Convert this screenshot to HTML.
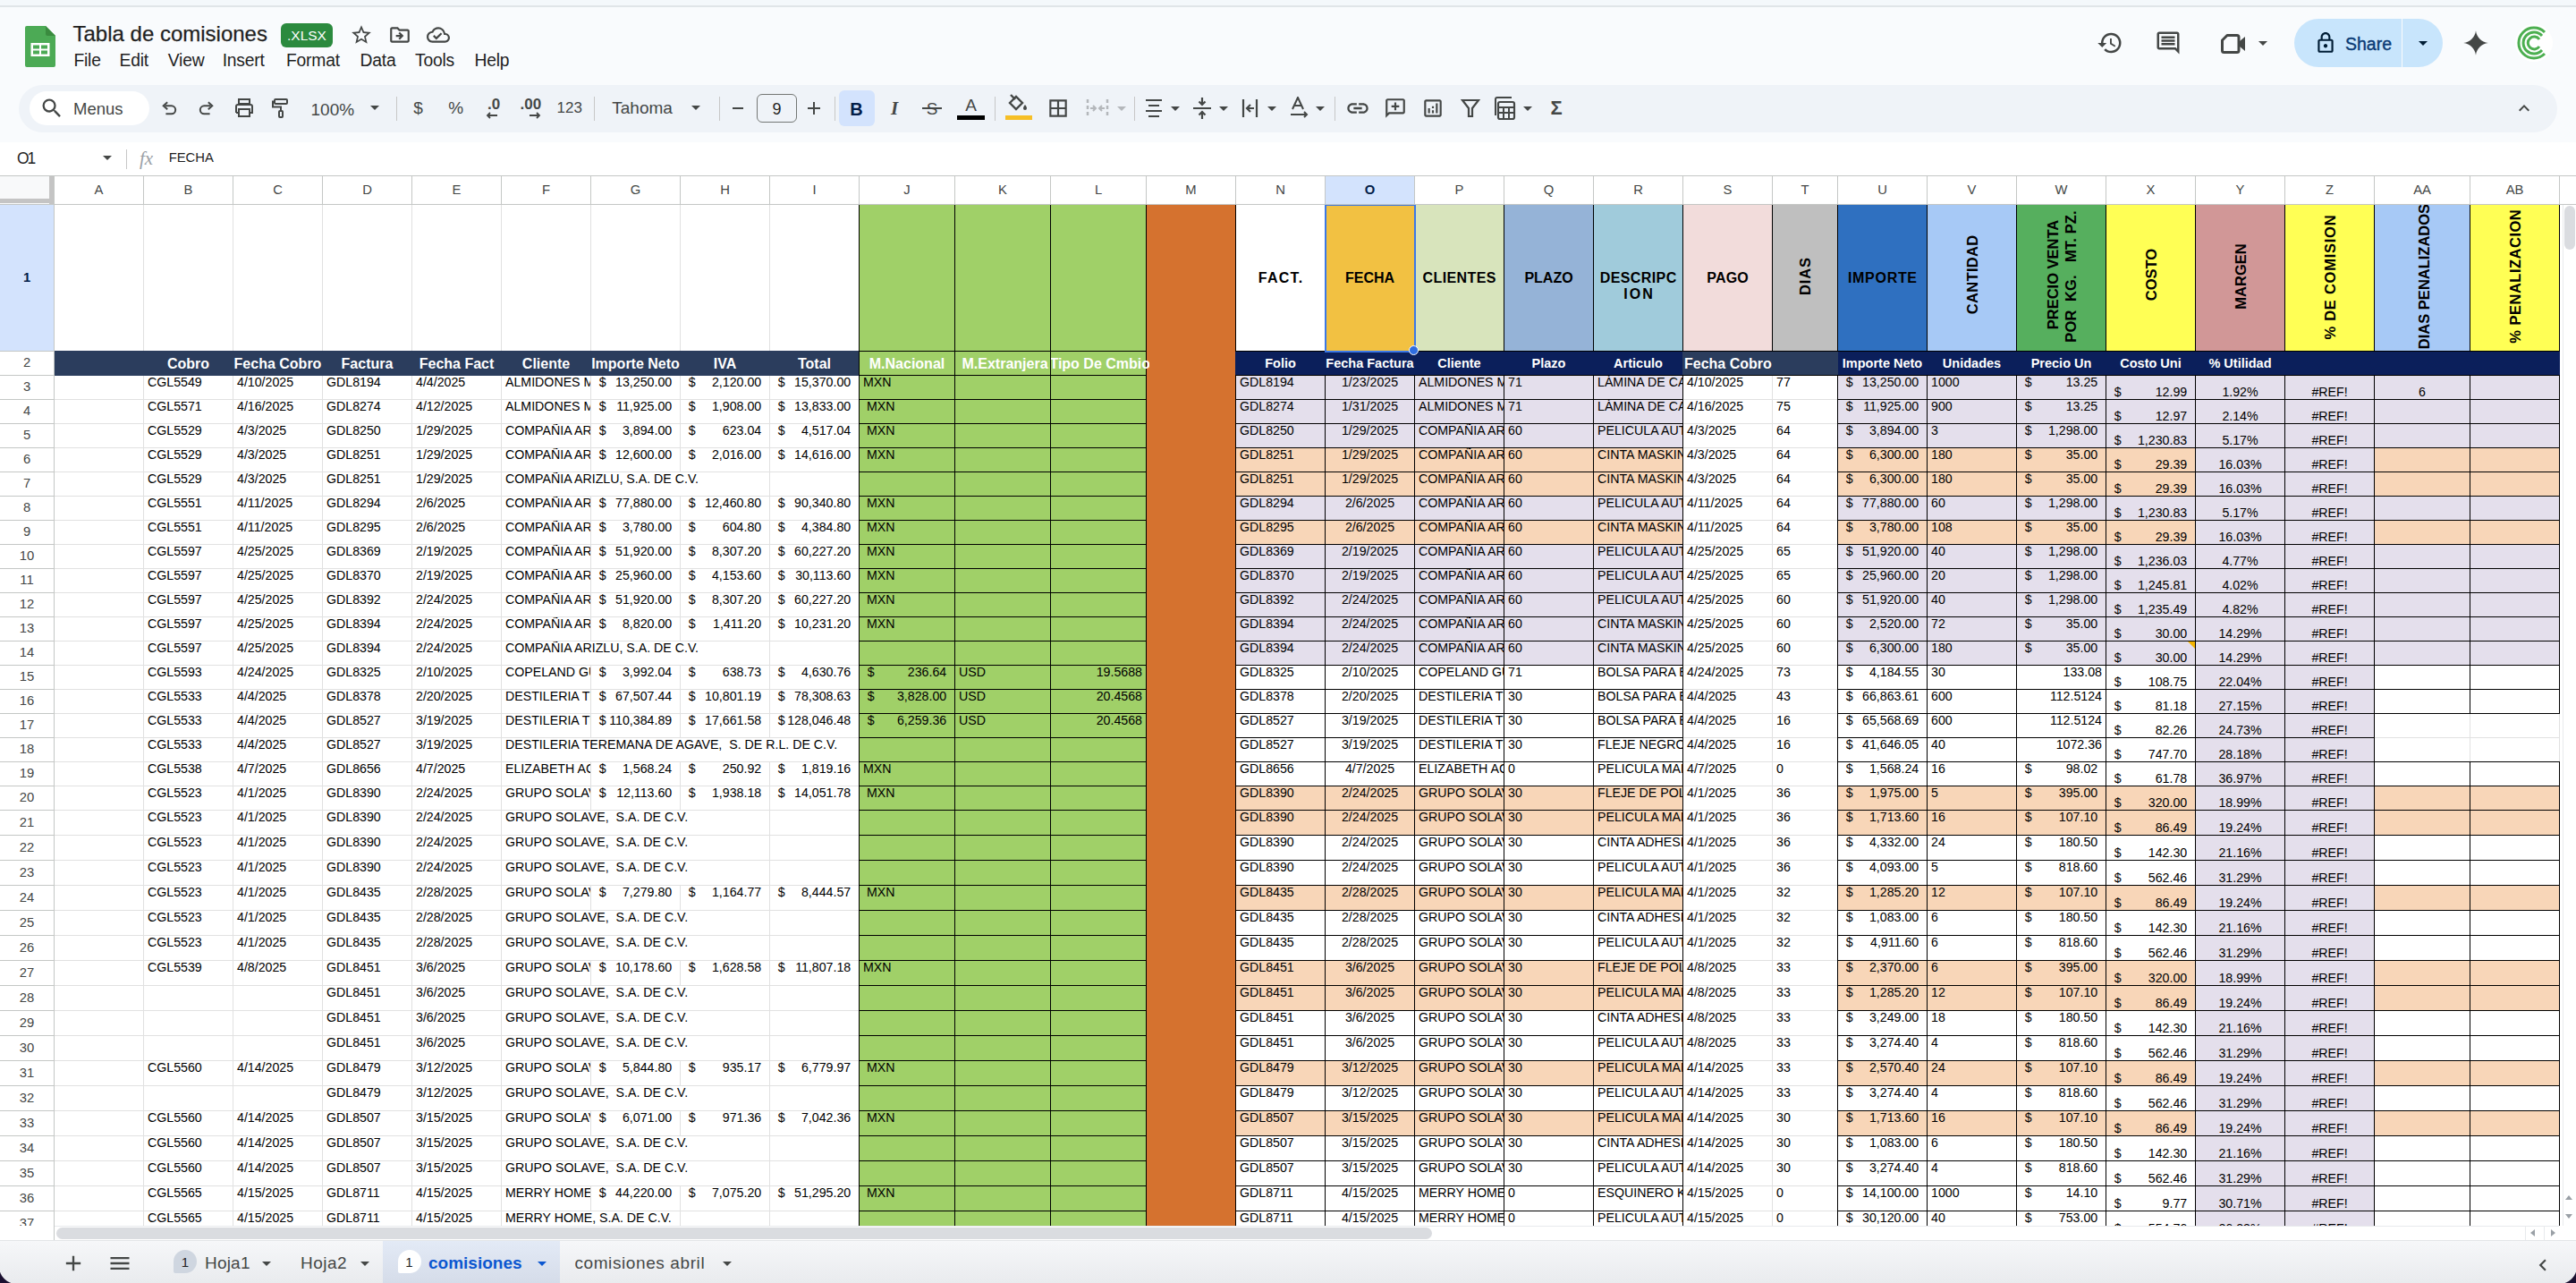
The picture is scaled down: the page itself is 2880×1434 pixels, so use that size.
<!DOCTYPE html><html><head><meta charset="utf-8"><title>Tabla de comisiones</title><style>html,body{margin:0;padding:0;}body{width:2880px;height:1434px;position:relative;overflow:hidden;background:#fff;font-family:"Liberation Sans",sans-serif;}</style></head><body>
<div style="position:absolute;left:0px;top:0px;width:2880px;height:159px;background:#f9fbfd;"></div>
<div style="position:absolute;left:0px;top:0px;width:2880px;height:6px;background:#f4f8fb;"></div>
<div style="position:absolute;left:0px;top:6px;width:2880px;height:2px;background:#e0e5e8;"></div>
<svg style="position:absolute;left:28px;top:29px;" width="34" height="46" viewBox="0 0 34 46"><path fill="#4caa55" d="M2 0h21l11 11v33a2 2 0 0 1-2 2H2a2 2 0 0 1-2-2V2a2 2 0 0 1 2-2z"/><path fill="#3a8b3f" d="M23 0l11 11H25a2 2 0 0 1-2-2z"/><rect x="6.5" y="19" width="21" height="15" fill="#fff"/><rect x="9" y="21.5" width="7" height="4" fill="#4caa55"/><rect x="18" y="21.5" width="7" height="4" fill="#4caa55"/><rect x="9" y="27.5" width="7" height="4" fill="#4caa55"/><rect x="18" y="27.5" width="7" height="4" fill="#4caa55"/></svg>
<div style="position:absolute;top:37.68px;font-family:'Liberation Sans', sans-serif;font-size:24px;line-height:0;white-space:pre;color:#1f1f1f;font-weight:normal;left:81.50px;-webkit-text-stroke:0.25px #1f1f1f;">Tabla de comisiones</div>
<div style="position:absolute;left:314px;top:26px;width:58px;height:27px;background:#2b8a3e;border-radius:6px;"></div>
<div style="position:absolute;top:39.63px;font-family:'Liberation Sans', sans-serif;font-size:15.5px;line-height:0;white-space:pre;color:#fff;font-weight:normal;left:-157.00px;width:1000px;text-align:center;">.XLSX</div>
<svg style="position:absolute;left:391.0px;top:26.0px;" width="26" height="26" viewBox="0 0 24 24"><path fill="#444746" d="M22 9.24l-7.19-.62L12 2 9.19 8.63 2 9.24l5.46 4.73L5.82 21 12 17.27 18.18 21l-1.63-7.03L22 9.24zM12 15.4l-3.76 2.27 1-4.28-3.32-2.88 4.38-.38L12 6.1l1.71 4.04 4.38.38-3.32 2.88 1 4.28L12 15.4z"/></svg>
<svg style="position:absolute;left:433.5px;top:26.0px;" width="26" height="26" viewBox="0 0 24 24"><path fill="#444746" d="M20 6h-8l-2-2H4c-1.1 0-1.99.9-1.99 2L2 18c0 1.1.9 2 2 2h16c1.1 0 2-.9 2-2V8c0-1.1-.9-2-2-2zm0 12H4V6h5.17l2 2H20v10zm-7.84-6H8v2h4.16l-1.59 1.59L11.99 17 16 13.01 11.99 9l-1.41 1.41L12.16 12z"/></svg>
<svg style="position:absolute;left:477.0px;top:26.0px;" width="26" height="26" viewBox="0 0 24 24"><path fill="#444746" d="M19.35 10.04A7.49 7.49 0 0 0 12 4C9.11 4 6.6 5.64 5.35 8.04A5.994 5.994 0 0 0 0 14c0 3.31 2.69 6 6 6h13c2.76 0 5-2.24 5-5 0-2.64-2.05-4.78-4.65-4.96zM19 18H6c-2.21 0-4-1.79-4-4 0-2.05 1.53-3.76 3.56-3.97l1.07-.11.5-.95A5.469 5.469 0 0 1 12 6c2.62 0 4.88 1.86 5.39 4.43l.3 1.5 1.53.11A2.98 2.98 0 0 1 22 15c0 1.65-1.35 3-3 3zm-9-3.82l-2.09-2.09L6.5 13.5 10 17l6.01-6.01-1.41-1.41z"/></svg>
<div style="position:absolute;top:68.31px;font-family:'Liberation Sans', sans-serif;font-size:19.3px;line-height:0;white-space:pre;color:#1f1f1f;font-weight:normal;letter-spacing:-0.2px;left:82.40px;">File</div>
<div style="position:absolute;top:68.31px;font-family:'Liberation Sans', sans-serif;font-size:19.3px;line-height:0;white-space:pre;color:#1f1f1f;font-weight:normal;letter-spacing:-0.2px;left:133.60px;">Edit</div>
<div style="position:absolute;top:68.31px;font-family:'Liberation Sans', sans-serif;font-size:19.3px;line-height:0;white-space:pre;color:#1f1f1f;font-weight:normal;letter-spacing:-0.2px;left:187.80px;">View</div>
<div style="position:absolute;top:68.31px;font-family:'Liberation Sans', sans-serif;font-size:19.3px;line-height:0;white-space:pre;color:#1f1f1f;font-weight:normal;letter-spacing:-0.2px;left:248.70px;">Insert</div>
<div style="position:absolute;top:68.31px;font-family:'Liberation Sans', sans-serif;font-size:19.3px;line-height:0;white-space:pre;color:#1f1f1f;font-weight:normal;letter-spacing:-0.2px;left:320.00px;">Format</div>
<div style="position:absolute;top:68.31px;font-family:'Liberation Sans', sans-serif;font-size:19.3px;line-height:0;white-space:pre;color:#1f1f1f;font-weight:normal;letter-spacing:-0.2px;left:402.50px;">Data</div>
<div style="position:absolute;top:68.31px;font-family:'Liberation Sans', sans-serif;font-size:19.3px;line-height:0;white-space:pre;color:#1f1f1f;font-weight:normal;letter-spacing:-0.2px;left:464.00px;">Tools</div>
<div style="position:absolute;top:68.31px;font-family:'Liberation Sans', sans-serif;font-size:19.3px;line-height:0;white-space:pre;color:#1f1f1f;font-weight:normal;letter-spacing:-0.2px;left:530.50px;">Help</div>
<svg style="position:absolute;left:2344.0px;top:33.0px;" width="30" height="30" viewBox="0 0 24 24"><path fill="#444746" d="M13 3a9 9 0 0 0-9 9H1l3.89 3.89.07.14L9 12H6c0-3.87 3.13-7 7-7s7 3.13 7 7-3.13 7-7 7c-1.93 0-3.68-.79-4.94-2.06l-1.42 1.42A8.954 8.954 0 0 0 13 21a9 9 0 0 0 0-18zm-1 5v5l4.28 2.54.72-1.21-3.5-2.08V8H12z"/></svg>
<svg style="position:absolute;left:2409.0px;top:33.0px;" width="30" height="30" viewBox="0 0 24 24"><path fill="#444746" d="M21.99 4c0-1.1-.89-2-1.99-2H4c-1.1 0-2 .9-2 2v12c0 1.1.9 2 2 2h14l4 4-.01-18zM20 4v13.17L18.83 16H4V4h16zM6 12h12v2H6zm0-3h12v2H6zm0-3h12v2H6z"/></svg>
<svg style="position:absolute;left:2482px;top:37px;" width="30" height="24" viewBox="0 0 30 24"><path d="M8 2.5h11a2 2 0 0 1 2 2v15a2 2 0 0 1-2 2H4.5a2 2 0 0 1-2-2V8z" fill="none" stroke="#444746" stroke-width="3" stroke-linejoin="round"/><path d="M22 9l6-5v16l-6-5z" fill="#444746"/></svg>
<div style="position:absolute;left:2525.0px;top:45.5px;width:0;height:0;border-left:5.0px solid transparent;border-right:5.0px solid transparent;border-top:5.0px solid #444746;"></div>
<div style="position:absolute;left:2565px;top:21px;width:166px;height:54px;background:#c8e5fc;border-radius:27px;"></div>
<div style="position:absolute;left:2685px;top:21px;width:1px;height:54px;background:#f9fbfd;"></div>
<svg style="position:absolute;left:2587.0px;top:35.0px;" width="26" height="26" viewBox="0 0 24 24"><path fill="#001d35" d="M18 8h-1V6c0-2.76-2.24-5-5-5S7 3.24 7 6v2H6c-1.1 0-2 .9-2 2v10c0 1.1.9 2 2 2h12c1.1 0 2-.9 2-2V10c0-1.1-.9-2-2-2zM9 6c0-1.66 1.34-3 3-3s3 1.34 3 3v2H9V6zm9 14H6V10h12v10zm-6-3c1.1 0 2-.9 2-2s-.9-2-2-2-2 .9-2 2 .9 2 2 2z"/></svg>
<div style="position:absolute;top:49.24px;font-family:'Liberation Sans', sans-serif;font-size:19.5px;line-height:0;white-space:pre;color:#0b3b75;font-weight:normal;left:2622.00px;-webkit-text-stroke:0.4px #0b3b75;">Share</div>
<div style="position:absolute;left:2704.0px;top:45.5px;width:0;height:0;border-left:5.0px solid transparent;border-right:5.0px solid transparent;border-top:5.0px solid #001d35;"></div>
<svg style="position:absolute;left:2753.0px;top:33.0px;" width="30" height="30" viewBox="0 0 24 24"><path fill="#444746" d="M12 1C12.6 6.8 17.2 11.4 23 12 17.2 12.6 12.6 17.2 12 23 11.4 17.2 6.8 12.6 1 12 6.8 11.4 11.4 6.8 12 1z"/></svg>
<svg style="position:absolute;left:2812px;top:27px;" width="42" height="42" viewBox="0 0 42 42"><circle cx="21" cy="21" r="21" fill="#fff"/><path d="M33 9A17 17 0 1 0 33 33" fill="none" stroke="#4caf50" stroke-width="3"/><path d="M30 13A12 12 0 1 0 30 29" fill="none" stroke="#4caf50" stroke-width="3"/><path d="M27 17A7 7 0 1 0 27 25" fill="none" stroke="#4caf50" stroke-width="3"/></svg>
<div style="position:absolute;left:21px;top:95px;width:2838px;height:53px;background:#eff3f8;border-radius:27px;"></div>
<div style="position:absolute;left:33px;top:102px;width:134px;height:38px;background:#ffffff;border-radius:19px;"></div>
<svg style="position:absolute;left:44.0px;top:107.0px;" width="28" height="28" viewBox="0 0 24 24"><path fill="#444746" d="M15.5 14h-.79l-.28-.27A6.471 6.471 0 0 0 16 9.5 6.5 6.5 0 1 0 9.5 16c1.61 0 3.09-.59 4.23-1.57l.27.28v.79l5 4.99L20.49 19l-4.99-5zm-6 0C7.01 14 5 11.99 5 9.5S7.01 5 9.5 5 14 7.01 14 9.5 11.99 14 9.5 14z"/></svg>
<div style="position:absolute;top:122.09px;font-family:'Liberation Sans', sans-serif;font-size:18.5px;line-height:0;white-space:pre;color:#444746;font-weight:normal;left:82.00px;">Menus</div>
<svg style="position:absolute;left:180px;top:112px;" width="18" height="18" viewBox="0 0 20 20"><path d="M5 7h8a5 5 0 0 1 0 10H6" fill="none" stroke="#444746" stroke-width="2.2"/><path d="M8 2.5L3 7l5 4.5" fill="none" stroke="#444746" stroke-width="2.2"/></svg>
<svg style="position:absolute;left:222px;top:112px;" width="18" height="18" viewBox="0 0 20 20"><path d="M15 7H7a5 5 0 0 0 0 10h7" fill="none" stroke="#444746" stroke-width="2.2"/><path d="M12 2.5L17 7l-5 4.5" fill="none" stroke="#444746" stroke-width="2.2"/></svg>
<svg style="position:absolute;left:262px;top:110px;" width="22" height="22" viewBox="0 0 22 22"><path d="M5 1h12v5H5z" fill="none" stroke="#444746" stroke-width="2"/><path d="M2 16V9a2 2 0 0 1 2-2h14a2 2 0 0 1 2 2v7h-3" fill="none" stroke="#444746" stroke-width="2"/><path d="M5 16H2" stroke="#444746" stroke-width="2"/><rect x="5" y="12" width="12" height="8" fill="none" stroke="#444746" stroke-width="2"/></svg>
<svg style="position:absolute;left:303px;top:109px;" width="22" height="24" viewBox="0 0 22 24"><rect x="4" y="2" width="14" height="5" rx="1" fill="none" stroke="#444746" stroke-width="2"/><path d="M4 4.5H2v6h9v4" fill="none" stroke="#444746" stroke-width="2"/><rect x="9" y="15" width="4" height="7" rx="1" fill="none" stroke="#444746" stroke-width="2"/></svg>
<div style="position:absolute;top:122.62px;font-family:'Liberation Sans', sans-serif;font-size:19px;line-height:0;white-space:pre;color:#444746;font-weight:normal;left:347.50px;">100%</div>
<div style="position:absolute;left:413.9px;top:118.25px;width:0;height:0;border-left:5.5px solid transparent;border-right:5.5px solid transparent;border-top:5.5px solid #444746;"></div>
<div style="position:absolute;left:442.5px;top:108px;width:1px;height:27px;background:#c7c7c7;"></div>
<div style="position:absolute;top:121.42px;font-family:'Liberation Sans', sans-serif;font-size:19px;line-height:0;white-space:pre;color:#444746;font-weight:normal;left:-32.40px;width:1000px;text-align:center;">$</div>
<div style="position:absolute;top:121.42px;font-family:'Liberation Sans', sans-serif;font-size:19px;line-height:0;white-space:pre;color:#444746;font-weight:normal;left:9.60px;width:1000px;text-align:center;">%</div>
<div style="position:absolute;top:116.61px;font-family:'Liberation Sans', sans-serif;font-size:17px;line-height:0;white-space:pre;color:#444746;font-weight:bold;left:52.00px;width:1000px;text-align:center;">.0</div>
<svg style="position:absolute;left:543px;top:125px;" width="14" height="8" viewBox="0 0 14 8"><path d="M13 4H2M5 1L2 4l3 3" fill="none" stroke="#444746" stroke-width="1.8"/></svg>
<div style="position:absolute;top:116.61px;font-family:'Liberation Sans', sans-serif;font-size:17px;line-height:0;white-space:pre;color:#444746;font-weight:bold;left:93.40px;width:1000px;text-align:center;">.00</div>
<svg style="position:absolute;left:591px;top:125px;" width="14" height="8" viewBox="0 0 14 8"><path d="M1 4h11M9 1l3 3-3 3" fill="none" stroke="#444746" stroke-width="1.8"/></svg>
<div style="position:absolute;top:121.11px;font-family:'Liberation Sans', sans-serif;font-size:17px;line-height:0;white-space:pre;color:#444746;font-weight:normal;left:136.80px;width:1000px;text-align:center;">123</div>
<div style="position:absolute;left:663.7px;top:108px;width:1px;height:27px;background:#c7c7c7;"></div>
<div style="position:absolute;top:120.92px;font-family:'Liberation Sans', sans-serif;font-size:19px;line-height:0;white-space:pre;color:#444746;font-weight:normal;left:684.30px;">Tahoma</div>
<div style="position:absolute;left:773.2px;top:118.25px;width:0;height:0;border-left:5.5px solid transparent;border-right:5.5px solid transparent;border-top:5.5px solid #444746;"></div>
<div style="position:absolute;left:804.4px;top:108px;width:1px;height:27px;background:#c7c7c7;"></div>
<div style="position:absolute;left:819px;top:120px;width:12px;height:2px;background:#444746;"></div>
<div style="position:absolute;left:846px;top:105px;width:45px;height:32px;background:transparent;border:1.5px solid #747775;border-radius:6px;box-sizing:border-box;"></div>
<div style="position:absolute;top:121.76px;font-family:'Liberation Sans', sans-serif;font-size:18px;line-height:0;white-space:pre;color:#1f1f1f;font-weight:normal;left:368.40px;width:1000px;text-align:center;">9</div>
<div style="position:absolute;left:903px;top:120px;width:14px;height:2px;background:#444746;"></div>
<div style="position:absolute;left:909px;top:114px;width:2px;height:14px;background:#444746;"></div>
<div style="position:absolute;left:932.7px;top:108px;width:1px;height:27px;background:#c7c7c7;"></div>
<div style="position:absolute;left:938px;top:101px;width:40px;height:40px;background:#d3e3fd;border-radius:6px;"></div>
<div style="position:absolute;top:121.57px;font-family:'Liberation Sans', sans-serif;font-size:20px;line-height:0;white-space:pre;color:#041e49;font-weight:bold;left:457.50px;width:1000px;text-align:center;">B</div>
<div style="position:absolute;top:121.22px;font-family:'Liberation Sans', sans-serif;font-size:21px;line-height:0;white-space:pre;color:#444746;font-weight:bold;left:500.00px;width:1000px;text-align:center;font-style:italic;font-family:'Liberation Serif',serif;">I</div>
<div style="position:absolute;top:121.92px;font-family:'Liberation Sans', sans-serif;font-size:19px;line-height:0;white-space:pre;color:#444746;font-weight:normal;left:542.00px;width:1000px;text-align:center;">S</div>
<div style="position:absolute;left:1031px;top:119.5px;width:22px;height:2px;background:#444746;"></div>
<div style="position:absolute;top:118.42px;font-family:'Liberation Sans', sans-serif;font-size:19px;line-height:0;white-space:pre;color:#444746;font-weight:normal;left:585.60px;width:1000px;text-align:center;">A</div>
<div style="position:absolute;left:1070px;top:129px;width:31px;height:5px;background:#000;"></div>
<div style="position:absolute;left:1112px;top:108px;width:1px;height:27px;background:#c7c7c7;"></div>
<svg style="position:absolute;left:1126px;top:105px;" width="26" height="22" viewBox="0 0 26 22"><path d="M3 10l7-7 7 7-7 7z" fill="none" stroke="#444746" stroke-width="2.4"/><path d="M4 1l5 5" stroke="#444746" stroke-width="2.4"/><path d="M20 12c1.5 2 2 3 2 4a2 2 0 0 1-4 0c0-1 .5-2 2-4z" fill="#444746"/></svg>
<div style="position:absolute;left:1124px;top:129px;width:30px;height:5px;background:#f6bf26;"></div>
<svg style="position:absolute;left:1170.0px;top:108.0px;" width="26" height="26" viewBox="0 0 24 24"><path fill="#444746" d="M3 3v18h18V3H3zm8 16H5v-6h6v6zm0-8H5V5h6v6zm8 8h-6v-6h6v6zm0-8h-6V5h6v6z"/></svg>
<svg style="position:absolute;left:1214px;top:109px;" width="26" height="24" viewBox="0 0 26 24"><path d="M2 2v20M24 2v20" stroke="#b4b7bb" stroke-width="2.5" stroke-dasharray="4 3"/><path d="M5 12h6M8 9l3 3-3 3M21 12h-6M18 9l-3 3 3 3" fill="none" stroke="#b4b7bb" stroke-width="2"/></svg>
<div style="position:absolute;left:1248.7px;top:118.5px;width:0;height:0;border-left:5.0px solid transparent;border-right:5.0px solid transparent;border-top:5.0px solid #b4b7bb;"></div>
<div style="position:absolute;left:1267.6px;top:108px;width:1px;height:27px;background:#c7c7c7;"></div>
<svg style="position:absolute;left:1280px;top:110px;" width="20" height="22" viewBox="0 0 20 22"><path d="M1 2h18M4 8h12M1 14h18M4 20h12" stroke="#444746" stroke-width="2.2"/></svg>
<div style="position:absolute;left:1309.0px;top:118.5px;width:0;height:0;border-left:5.0px solid transparent;border-right:5.0px solid transparent;border-top:5.0px solid #444746;"></div>
<svg style="position:absolute;left:1333px;top:108px;" width="22" height="26" viewBox="0 0 22 26"><path d="M1 13h20M11 1v8M7.5 5.5L11 9l3.5-3.5M11 25v-8M7.5 20.5L11 17l3.5 3.5" fill="none" stroke="#444746" stroke-width="2.2"/></svg>
<div style="position:absolute;left:1363.0px;top:118.5px;width:0;height:0;border-left:5.0px solid transparent;border-right:5.0px solid transparent;border-top:5.0px solid #444746;"></div>
<svg style="position:absolute;left:1388px;top:110px;" width="20" height="22" viewBox="0 0 20 22"><path d="M2 1v20M17 1v20M14 11H7M10 7l-4 4 4 4" fill="none" stroke="#444746" stroke-width="2.2"/></svg>
<div style="position:absolute;left:1417.0px;top:118.5px;width:0;height:0;border-left:5.0px solid transparent;border-right:5.0px solid transparent;border-top:5.0px solid #444746;"></div>
<svg style="position:absolute;left:1441px;top:108px;" width="22" height="26" viewBox="0 0 22 26"><path d="M4 14L10 1l6 13M6 10h8M2 20h18M17 17l3 3-3 3" fill="none" stroke="#444746" stroke-width="2"/></svg>
<div style="position:absolute;left:1471.0px;top:118.5px;width:0;height:0;border-left:5.0px solid transparent;border-right:5.0px solid transparent;border-top:5.0px solid #444746;"></div>
<div style="position:absolute;left:1492.3px;top:108px;width:1px;height:27px;background:#c7c7c7;"></div>
<svg style="position:absolute;left:1504.0px;top:107.0px;" width="28" height="28" viewBox="0 0 24 24"><path fill="#444746" d="M3.9 12c0-1.71 1.39-3.1 3.1-3.1h4V7H7c-2.76 0-5 2.24-5 5s2.24 5 5 5h4v-1.9H7c-1.71 0-3.1-1.39-3.1-3.1zM8 13h8v-2H8v2zm9-6h-4v1.9h4c1.71 0 3.1 1.39 3.1 3.1s-1.39 3.1-3.1 3.1h-4V17h4c2.76 0 5-2.24 5-5s-2.24-5-5-5z"/></svg>
<svg style="position:absolute;left:1547.0px;top:108.0px;" width="26" height="26" viewBox="0 0 24 24"><path fill="#444746" d="M20 2H4c-1.1 0-2 .9-2 2v18l4-4h14c1.1 0 2-.9 2-2V4c0-1.1-.9-2-2-2zm0 14H5.17L4 17.17V4h16v12zM11 14h2v-3h3V9h-3V6h-2v3H8v2h3z"/></svg>
<svg style="position:absolute;left:1589.0px;top:108.0px;" width="26" height="26" viewBox="0 0 24 24"><path fill="#444746" d="M19 3H5c-1.1 0-2 .9-2 2v14c0 1.1.9 2 2 2h14c1.1 0 2-.9 2-2V5c0-1.1-.9-2-2-2zm0 16H5V5h14v14zM7 12h2v5H7zm8-5h2v10h-2zm-4 7h2v3h-2zm0-4h2v2h-2z"/></svg>
<svg style="position:absolute;left:1633px;top:110px;" width="22" height="22" viewBox="0 0 22 22"><path d="M2 2h18l-7 9v9h-4v-9z" fill="none" stroke="#444746" stroke-width="2.2"/></svg>
<svg style="position:absolute;left:1669px;top:107px;" width="26" height="28" viewBox="0 0 26 28"><rect x="6" y="7" width="18" height="19" rx="2" fill="none" stroke="#444746" stroke-width="2.2"/><path d="M3 22V4a2 2 0 0 1 2-2h16" fill="none" stroke="#444746" stroke-width="2"/><path d="M6 13h18M6 19h18M12 13v13M18 13v13" stroke="#444746" stroke-width="2"/></svg>
<div style="position:absolute;left:1702.6px;top:118.5px;width:0;height:0;border-left:5.0px solid transparent;border-right:5.0px solid transparent;border-top:5.0px solid #444746;"></div>
<div style="position:absolute;top:121.38px;font-family:'Liberation Sans', sans-serif;font-size:22px;line-height:0;white-space:pre;color:#444746;font-weight:bold;left:1240.00px;width:1000px;text-align:center;">Σ</div>
<svg style="position:absolute;left:2810.0px;top:109.0px;" width="24" height="24" viewBox="0 0 24 24"><path fill="#444746" d="M7.41 15.41L12 10.83l4.59 4.58L18 14l-6-6-6 6z"/></svg>
<div style="position:absolute;left:0px;top:159px;width:2880px;height:38px;background:#ffffff;"></div>
<div style="position:absolute;top:177.14px;font-family:'Liberation Sans', sans-serif;font-size:17.5px;line-height:0;white-space:pre;color:#1f1f1f;font-weight:normal;letter-spacing:-2.2px;left:19.00px;">O1</div>
<div style="position:absolute;left:114.5px;top:173.75px;width:0;height:0;border-left:5.5px solid transparent;border-right:5.5px solid transparent;border-top:5.5px solid #444746;"></div>
<div style="position:absolute;left:141px;top:167px;width:1px;height:22px;background:#c7c7c7;"></div>
<div style="position:absolute;top:176.72px;font-family:'Liberation Sans', sans-serif;font-size:21px;line-height:0;white-space:pre;color:#9aa0a6;font-weight:normal;left:156.00px;font-family:'Liberation Serif',serif;font-style:italic;">fx</div>
<div style="position:absolute;top:175.87px;font-family:'Liberation Sans', sans-serif;font-size:14.8px;line-height:0;white-space:pre;color:#1f1f1f;font-weight:normal;left:188.70px;">FECHA</div>
<div style="position:absolute;left:0;top:0;width:2880px;height:1434px;clip-path:inset(229px 15px 64px 61px);">
<div style="position:absolute;left:0;top:0;width:2880px;height:1434px;background:#fff"></div>
<div style="position:absolute;left:160px;top:229px;width:1px;height:1150px;background:#e1e1e1;"></div>
<div style="position:absolute;left:260px;top:229px;width:1px;height:1150px;background:#e1e1e1;"></div>
<div style="position:absolute;left:360px;top:229px;width:1px;height:1150px;background:#e1e1e1;"></div>
<div style="position:absolute;left:460px;top:229px;width:1px;height:1150px;background:#e1e1e1;"></div>
<div style="position:absolute;left:560px;top:229px;width:1px;height:1150px;background:#e1e1e1;"></div>
<div style="position:absolute;left:660px;top:229px;width:1px;height:1150px;background:#e1e1e1;"></div>
<div style="position:absolute;left:760px;top:229px;width:1px;height:1150px;background:#e1e1e1;"></div>
<div style="position:absolute;left:860px;top:229px;width:1px;height:1150px;background:#e1e1e1;"></div>
<div style="position:absolute;left:960px;top:229px;width:1px;height:1150px;background:#e1e1e1;"></div>
<div style="position:absolute;left:1067px;top:229px;width:1px;height:1150px;background:#e1e1e1;"></div>
<div style="position:absolute;left:1174px;top:229px;width:1px;height:1150px;background:#e1e1e1;"></div>
<div style="position:absolute;left:1281px;top:229px;width:1px;height:1150px;background:#e1e1e1;"></div>
<div style="position:absolute;left:1381px;top:229px;width:1px;height:1150px;background:#e1e1e1;"></div>
<div style="position:absolute;left:1481px;top:229px;width:1px;height:1150px;background:#e1e1e1;"></div>
<div style="position:absolute;left:1581px;top:229px;width:1px;height:1150px;background:#e1e1e1;"></div>
<div style="position:absolute;left:1681px;top:229px;width:1px;height:1150px;background:#e1e1e1;"></div>
<div style="position:absolute;left:1781px;top:229px;width:1px;height:1150px;background:#e1e1e1;"></div>
<div style="position:absolute;left:1881px;top:229px;width:1px;height:1150px;background:#e1e1e1;"></div>
<div style="position:absolute;left:1981px;top:229px;width:1px;height:1150px;background:#e1e1e1;"></div>
<div style="position:absolute;left:2054px;top:229px;width:1px;height:1150px;background:#e1e1e1;"></div>
<div style="position:absolute;left:2154px;top:229px;width:1px;height:1150px;background:#e1e1e1;"></div>
<div style="position:absolute;left:2254px;top:229px;width:1px;height:1150px;background:#e1e1e1;"></div>
<div style="position:absolute;left:2354px;top:229px;width:1px;height:1150px;background:#e1e1e1;"></div>
<div style="position:absolute;left:2454px;top:229px;width:1px;height:1150px;background:#e1e1e1;"></div>
<div style="position:absolute;left:2554px;top:229px;width:1px;height:1150px;background:#e1e1e1;"></div>
<div style="position:absolute;left:2654px;top:229px;width:1px;height:1150px;background:#e1e1e1;"></div>
<div style="position:absolute;left:2761px;top:229px;width:1px;height:1150px;background:#e1e1e1;"></div>
<div style="position:absolute;left:2861px;top:229px;width:1px;height:1150px;background:#e1e1e1;"></div>
<div style="position:absolute;left:2961px;top:229px;width:1px;height:1150px;background:#e1e1e1;"></div>
<div style="position:absolute;left:61px;top:392px;width:2820px;height:1px;background:#e1e1e1;"></div>
<div style="position:absolute;left:61px;top:419px;width:2820px;height:1px;background:#e1e1e1;"></div>
<div style="position:absolute;left:61px;top:446px;width:2820px;height:1px;background:#e1e1e1;"></div>
<div style="position:absolute;left:61px;top:473px;width:2820px;height:1px;background:#e1e1e1;"></div>
<div style="position:absolute;left:61px;top:500px;width:2820px;height:1px;background:#e1e1e1;"></div>
<div style="position:absolute;left:61px;top:527px;width:2820px;height:1px;background:#e1e1e1;"></div>
<div style="position:absolute;left:61px;top:554px;width:2820px;height:1px;background:#e1e1e1;"></div>
<div style="position:absolute;left:61px;top:581px;width:2820px;height:1px;background:#e1e1e1;"></div>
<div style="position:absolute;left:61px;top:608px;width:2820px;height:1px;background:#e1e1e1;"></div>
<div style="position:absolute;left:61px;top:635px;width:2820px;height:1px;background:#e1e1e1;"></div>
<div style="position:absolute;left:61px;top:662px;width:2820px;height:1px;background:#e1e1e1;"></div>
<div style="position:absolute;left:61px;top:689px;width:2820px;height:1px;background:#e1e1e1;"></div>
<div style="position:absolute;left:61px;top:716px;width:2820px;height:1px;background:#e1e1e1;"></div>
<div style="position:absolute;left:61px;top:743px;width:2820px;height:1px;background:#e1e1e1;"></div>
<div style="position:absolute;left:61px;top:770px;width:2820px;height:1px;background:#e1e1e1;"></div>
<div style="position:absolute;left:61px;top:797px;width:2820px;height:1px;background:#e1e1e1;"></div>
<div style="position:absolute;left:61px;top:824px;width:2820px;height:1px;background:#e1e1e1;"></div>
<div style="position:absolute;left:61px;top:851px;width:2820px;height:1px;background:#e1e1e1;"></div>
<div style="position:absolute;left:61px;top:878px;width:2820px;height:1px;background:#e1e1e1;"></div>
<div style="position:absolute;left:61px;top:905px;width:2820px;height:1px;background:#e1e1e1;"></div>
<div style="position:absolute;left:61px;top:933px;width:2820px;height:1px;background:#e1e1e1;"></div>
<div style="position:absolute;left:61px;top:961px;width:2820px;height:1px;background:#e1e1e1;"></div>
<div style="position:absolute;left:61px;top:989px;width:2820px;height:1px;background:#e1e1e1;"></div>
<div style="position:absolute;left:61px;top:1017px;width:2820px;height:1px;background:#e1e1e1;"></div>
<div style="position:absolute;left:61px;top:1045px;width:2820px;height:1px;background:#e1e1e1;"></div>
<div style="position:absolute;left:61px;top:1073px;width:2820px;height:1px;background:#e1e1e1;"></div>
<div style="position:absolute;left:61px;top:1101px;width:2820px;height:1px;background:#e1e1e1;"></div>
<div style="position:absolute;left:61px;top:1129px;width:2820px;height:1px;background:#e1e1e1;"></div>
<div style="position:absolute;left:61px;top:1157px;width:2820px;height:1px;background:#e1e1e1;"></div>
<div style="position:absolute;left:61px;top:1185px;width:2820px;height:1px;background:#e1e1e1;"></div>
<div style="position:absolute;left:61px;top:1213px;width:2820px;height:1px;background:#e1e1e1;"></div>
<div style="position:absolute;left:61px;top:1241px;width:2820px;height:1px;background:#e1e1e1;"></div>
<div style="position:absolute;left:61px;top:1269px;width:2820px;height:1px;background:#e1e1e1;"></div>
<div style="position:absolute;left:61px;top:1297px;width:2820px;height:1px;background:#e1e1e1;"></div>
<div style="position:absolute;left:61px;top:1325px;width:2820px;height:1px;background:#e1e1e1;"></div>
<div style="position:absolute;left:61px;top:1353px;width:2820px;height:1px;background:#e1e1e1;"></div>
<div style="position:absolute;left:61px;top:1381px;width:2820px;height:1px;background:#e1e1e1;"></div>
<div style="position:absolute;left:61px;top:1409px;width:2820px;height:1px;background:#e1e1e1;"></div>
<div style="position:absolute;left:561px;top:528px;width:299px;height:26px;background:#fff;"></div>
<div style="position:absolute;left:561px;top:717px;width:299px;height:26px;background:#fff;"></div>
<div style="position:absolute;left:561px;top:825px;width:399px;height:26px;background:#fff;"></div>
<div style="position:absolute;left:561px;top:906px;width:299px;height:27px;background:#fff;"></div>
<div style="position:absolute;left:561px;top:934px;width:299px;height:27px;background:#fff;"></div>
<div style="position:absolute;left:561px;top:962px;width:299px;height:27px;background:#fff;"></div>
<div style="position:absolute;left:561px;top:1018px;width:299px;height:27px;background:#fff;"></div>
<div style="position:absolute;left:561px;top:1046px;width:299px;height:27px;background:#fff;"></div>
<div style="position:absolute;left:561px;top:1102px;width:299px;height:27px;background:#fff;"></div>
<div style="position:absolute;left:561px;top:1130px;width:299px;height:27px;background:#fff;"></div>
<div style="position:absolute;left:561px;top:1158px;width:299px;height:27px;background:#fff;"></div>
<div style="position:absolute;left:561px;top:1214px;width:299px;height:27px;background:#fff;"></div>
<div style="position:absolute;left:561px;top:1270px;width:299px;height:27px;background:#fff;"></div>
<div style="position:absolute;left:561px;top:1298px;width:299px;height:27px;background:#fff;"></div>
<div style="position:absolute;left:561px;top:1354px;width:199px;height:27px;background:#fff;"></div>
<div style="position:absolute;left:60px;top:392px;width:901px;height:28px;background:#2b3d5d;"></div>
<div style="position:absolute;left:960px;top:228px;width:322px;height:1238px;background:#a0d068;"></div>
<div style="position:absolute;left:1281px;top:228px;width:101px;height:1238px;background:#d5722f;"></div>
<div style="position:absolute;left:1381px;top:228px;width:101px;height:165px;background:#ffffff;"></div>
<div style="position:absolute;left:1481px;top:228px;width:101px;height:165px;background:#f2c142;"></div>
<div style="position:absolute;left:1581px;top:228px;width:101px;height:165px;background:#d8e4bc;"></div>
<div style="position:absolute;left:1681px;top:228px;width:101px;height:165px;background:#95b3d7;"></div>
<div style="position:absolute;left:1781px;top:228px;width:101px;height:165px;background:#a0cbdb;"></div>
<div style="position:absolute;left:1881px;top:228px;width:101px;height:165px;background:#f2dcdb;"></div>
<div style="position:absolute;left:1981px;top:228px;width:74px;height:165px;background:#bfbfbf;"></div>
<div style="position:absolute;left:2054px;top:228px;width:101px;height:165px;background:#2f70c0;"></div>
<div style="position:absolute;left:2154px;top:228px;width:101px;height:165px;background:#a7c9f6;"></div>
<div style="position:absolute;left:2254px;top:228px;width:101px;height:165px;background:#56af5e;"></div>
<div style="position:absolute;left:2354px;top:228px;width:101px;height:165px;background:#ffff55;"></div>
<div style="position:absolute;left:2454px;top:228px;width:101px;height:165px;background:#d19797;"></div>
<div style="position:absolute;left:2554px;top:228px;width:101px;height:165px;background:#ffff55;"></div>
<div style="position:absolute;left:2654px;top:228px;width:108px;height:165px;background:#a7c9f6;"></div>
<div style="position:absolute;left:2761px;top:228px;width:101px;height:165px;background:#ffff55;"></div>
<div style="position:absolute;left:1381px;top:392px;width:1481px;height:28px;background:#0b1f5b;"></div>
<div style="position:absolute;left:1881px;top:392px;width:174px;height:28px;background:#2b3d5d;"></div>
<div style="position:absolute;left:1381px;top:419px;width:101px;height:28px;background:#e4dfec;"></div>
<div style="position:absolute;left:1481px;top:419px;width:101px;height:28px;background:#e4dfec;"></div>
<div style="position:absolute;left:1581px;top:419px;width:101px;height:28px;background:#e4dfec;"></div>
<div style="position:absolute;left:1681px;top:419px;width:101px;height:28px;background:#e4dfec;"></div>
<div style="position:absolute;left:1781px;top:419px;width:101px;height:28px;background:#e4dfec;"></div>
<div style="position:absolute;left:2054px;top:419px;width:101px;height:28px;background:#e4dfec;"></div>
<div style="position:absolute;left:2154px;top:419px;width:101px;height:28px;background:#e4dfec;"></div>
<div style="position:absolute;left:2254px;top:419px;width:101px;height:28px;background:#e4dfec;"></div>
<div style="position:absolute;left:2354px;top:419px;width:101px;height:28px;background:#e4dfec;"></div>
<div style="position:absolute;left:2654px;top:419px;width:108px;height:28px;background:#e4dfec;"></div>
<div style="position:absolute;left:2761px;top:419px;width:101px;height:28px;background:#e4dfec;"></div>
<div style="position:absolute;left:2454px;top:419px;width:201px;height:28px;background:#e4dfec;"></div>
<div style="position:absolute;left:1381px;top:446px;width:101px;height:28px;background:#e4dfec;"></div>
<div style="position:absolute;left:1481px;top:446px;width:101px;height:28px;background:#e4dfec;"></div>
<div style="position:absolute;left:1581px;top:446px;width:101px;height:28px;background:#e4dfec;"></div>
<div style="position:absolute;left:1681px;top:446px;width:101px;height:28px;background:#e4dfec;"></div>
<div style="position:absolute;left:1781px;top:446px;width:101px;height:28px;background:#e4dfec;"></div>
<div style="position:absolute;left:2054px;top:446px;width:101px;height:28px;background:#e4dfec;"></div>
<div style="position:absolute;left:2154px;top:446px;width:101px;height:28px;background:#e4dfec;"></div>
<div style="position:absolute;left:2254px;top:446px;width:101px;height:28px;background:#e4dfec;"></div>
<div style="position:absolute;left:2354px;top:446px;width:101px;height:28px;background:#e4dfec;"></div>
<div style="position:absolute;left:2654px;top:446px;width:108px;height:28px;background:#e4dfec;"></div>
<div style="position:absolute;left:2761px;top:446px;width:101px;height:28px;background:#e4dfec;"></div>
<div style="position:absolute;left:2454px;top:446px;width:201px;height:28px;background:#e4dfec;"></div>
<div style="position:absolute;left:1381px;top:473px;width:101px;height:28px;background:#e4dfec;"></div>
<div style="position:absolute;left:1481px;top:473px;width:101px;height:28px;background:#e4dfec;"></div>
<div style="position:absolute;left:1581px;top:473px;width:101px;height:28px;background:#e4dfec;"></div>
<div style="position:absolute;left:1681px;top:473px;width:101px;height:28px;background:#e4dfec;"></div>
<div style="position:absolute;left:1781px;top:473px;width:101px;height:28px;background:#e4dfec;"></div>
<div style="position:absolute;left:2054px;top:473px;width:101px;height:28px;background:#e4dfec;"></div>
<div style="position:absolute;left:2154px;top:473px;width:101px;height:28px;background:#e4dfec;"></div>
<div style="position:absolute;left:2254px;top:473px;width:101px;height:28px;background:#e4dfec;"></div>
<div style="position:absolute;left:2354px;top:473px;width:101px;height:28px;background:#e4dfec;"></div>
<div style="position:absolute;left:2654px;top:473px;width:108px;height:28px;background:#e4dfec;"></div>
<div style="position:absolute;left:2761px;top:473px;width:101px;height:28px;background:#e4dfec;"></div>
<div style="position:absolute;left:2454px;top:473px;width:201px;height:28px;background:#e4dfec;"></div>
<div style="position:absolute;left:1381px;top:500px;width:101px;height:28px;background:#f8d6b8;"></div>
<div style="position:absolute;left:1481px;top:500px;width:101px;height:28px;background:#f8d6b8;"></div>
<div style="position:absolute;left:1581px;top:500px;width:101px;height:28px;background:#f8d6b8;"></div>
<div style="position:absolute;left:1681px;top:500px;width:101px;height:28px;background:#f8d6b8;"></div>
<div style="position:absolute;left:1781px;top:500px;width:101px;height:28px;background:#f8d6b8;"></div>
<div style="position:absolute;left:2054px;top:500px;width:101px;height:28px;background:#f8d6b8;"></div>
<div style="position:absolute;left:2154px;top:500px;width:101px;height:28px;background:#f8d6b8;"></div>
<div style="position:absolute;left:2254px;top:500px;width:101px;height:28px;background:#f8d6b8;"></div>
<div style="position:absolute;left:2354px;top:500px;width:101px;height:28px;background:#f8d6b8;"></div>
<div style="position:absolute;left:2654px;top:500px;width:108px;height:28px;background:#f8d6b8;"></div>
<div style="position:absolute;left:2761px;top:500px;width:101px;height:28px;background:#f8d6b8;"></div>
<div style="position:absolute;left:2454px;top:500px;width:201px;height:28px;background:#e4dfec;"></div>
<div style="position:absolute;left:1381px;top:527px;width:101px;height:28px;background:#f8d6b8;"></div>
<div style="position:absolute;left:1481px;top:527px;width:101px;height:28px;background:#f8d6b8;"></div>
<div style="position:absolute;left:1581px;top:527px;width:101px;height:28px;background:#f8d6b8;"></div>
<div style="position:absolute;left:1681px;top:527px;width:101px;height:28px;background:#f8d6b8;"></div>
<div style="position:absolute;left:1781px;top:527px;width:101px;height:28px;background:#f8d6b8;"></div>
<div style="position:absolute;left:2054px;top:527px;width:101px;height:28px;background:#f8d6b8;"></div>
<div style="position:absolute;left:2154px;top:527px;width:101px;height:28px;background:#f8d6b8;"></div>
<div style="position:absolute;left:2254px;top:527px;width:101px;height:28px;background:#f8d6b8;"></div>
<div style="position:absolute;left:2354px;top:527px;width:101px;height:28px;background:#f8d6b8;"></div>
<div style="position:absolute;left:2654px;top:527px;width:108px;height:28px;background:#f8d6b8;"></div>
<div style="position:absolute;left:2761px;top:527px;width:101px;height:28px;background:#f8d6b8;"></div>
<div style="position:absolute;left:2454px;top:527px;width:201px;height:28px;background:#e4dfec;"></div>
<div style="position:absolute;left:1381px;top:554px;width:101px;height:28px;background:#e4dfec;"></div>
<div style="position:absolute;left:1481px;top:554px;width:101px;height:28px;background:#e4dfec;"></div>
<div style="position:absolute;left:1581px;top:554px;width:101px;height:28px;background:#e4dfec;"></div>
<div style="position:absolute;left:1681px;top:554px;width:101px;height:28px;background:#e4dfec;"></div>
<div style="position:absolute;left:1781px;top:554px;width:101px;height:28px;background:#e4dfec;"></div>
<div style="position:absolute;left:2054px;top:554px;width:101px;height:28px;background:#e4dfec;"></div>
<div style="position:absolute;left:2154px;top:554px;width:101px;height:28px;background:#e4dfec;"></div>
<div style="position:absolute;left:2254px;top:554px;width:101px;height:28px;background:#e4dfec;"></div>
<div style="position:absolute;left:2354px;top:554px;width:101px;height:28px;background:#e4dfec;"></div>
<div style="position:absolute;left:2654px;top:554px;width:108px;height:28px;background:#e4dfec;"></div>
<div style="position:absolute;left:2761px;top:554px;width:101px;height:28px;background:#e4dfec;"></div>
<div style="position:absolute;left:2454px;top:554px;width:201px;height:28px;background:#e4dfec;"></div>
<div style="position:absolute;left:1381px;top:581px;width:101px;height:28px;background:#f8d6b8;"></div>
<div style="position:absolute;left:1481px;top:581px;width:101px;height:28px;background:#f8d6b8;"></div>
<div style="position:absolute;left:1581px;top:581px;width:101px;height:28px;background:#f8d6b8;"></div>
<div style="position:absolute;left:1681px;top:581px;width:101px;height:28px;background:#f8d6b8;"></div>
<div style="position:absolute;left:1781px;top:581px;width:101px;height:28px;background:#f8d6b8;"></div>
<div style="position:absolute;left:2054px;top:581px;width:101px;height:28px;background:#f8d6b8;"></div>
<div style="position:absolute;left:2154px;top:581px;width:101px;height:28px;background:#f8d6b8;"></div>
<div style="position:absolute;left:2254px;top:581px;width:101px;height:28px;background:#f8d6b8;"></div>
<div style="position:absolute;left:2354px;top:581px;width:101px;height:28px;background:#f8d6b8;"></div>
<div style="position:absolute;left:2654px;top:581px;width:108px;height:28px;background:#f8d6b8;"></div>
<div style="position:absolute;left:2761px;top:581px;width:101px;height:28px;background:#f8d6b8;"></div>
<div style="position:absolute;left:2454px;top:581px;width:201px;height:28px;background:#e4dfec;"></div>
<div style="position:absolute;left:1381px;top:608px;width:101px;height:28px;background:#e4dfec;"></div>
<div style="position:absolute;left:1481px;top:608px;width:101px;height:28px;background:#e4dfec;"></div>
<div style="position:absolute;left:1581px;top:608px;width:101px;height:28px;background:#e4dfec;"></div>
<div style="position:absolute;left:1681px;top:608px;width:101px;height:28px;background:#e4dfec;"></div>
<div style="position:absolute;left:1781px;top:608px;width:101px;height:28px;background:#e4dfec;"></div>
<div style="position:absolute;left:2054px;top:608px;width:101px;height:28px;background:#e4dfec;"></div>
<div style="position:absolute;left:2154px;top:608px;width:101px;height:28px;background:#e4dfec;"></div>
<div style="position:absolute;left:2254px;top:608px;width:101px;height:28px;background:#e4dfec;"></div>
<div style="position:absolute;left:2354px;top:608px;width:101px;height:28px;background:#e4dfec;"></div>
<div style="position:absolute;left:2654px;top:608px;width:108px;height:28px;background:#e4dfec;"></div>
<div style="position:absolute;left:2761px;top:608px;width:101px;height:28px;background:#e4dfec;"></div>
<div style="position:absolute;left:2454px;top:608px;width:201px;height:28px;background:#e4dfec;"></div>
<div style="position:absolute;left:1381px;top:635px;width:101px;height:28px;background:#e4dfec;"></div>
<div style="position:absolute;left:1481px;top:635px;width:101px;height:28px;background:#e4dfec;"></div>
<div style="position:absolute;left:1581px;top:635px;width:101px;height:28px;background:#e4dfec;"></div>
<div style="position:absolute;left:1681px;top:635px;width:101px;height:28px;background:#e4dfec;"></div>
<div style="position:absolute;left:1781px;top:635px;width:101px;height:28px;background:#e4dfec;"></div>
<div style="position:absolute;left:2054px;top:635px;width:101px;height:28px;background:#e4dfec;"></div>
<div style="position:absolute;left:2154px;top:635px;width:101px;height:28px;background:#e4dfec;"></div>
<div style="position:absolute;left:2254px;top:635px;width:101px;height:28px;background:#e4dfec;"></div>
<div style="position:absolute;left:2354px;top:635px;width:101px;height:28px;background:#e4dfec;"></div>
<div style="position:absolute;left:2654px;top:635px;width:108px;height:28px;background:#e4dfec;"></div>
<div style="position:absolute;left:2761px;top:635px;width:101px;height:28px;background:#e4dfec;"></div>
<div style="position:absolute;left:2454px;top:635px;width:201px;height:28px;background:#e4dfec;"></div>
<div style="position:absolute;left:1381px;top:662px;width:101px;height:28px;background:#e4dfec;"></div>
<div style="position:absolute;left:1481px;top:662px;width:101px;height:28px;background:#e4dfec;"></div>
<div style="position:absolute;left:1581px;top:662px;width:101px;height:28px;background:#e4dfec;"></div>
<div style="position:absolute;left:1681px;top:662px;width:101px;height:28px;background:#e4dfec;"></div>
<div style="position:absolute;left:1781px;top:662px;width:101px;height:28px;background:#e4dfec;"></div>
<div style="position:absolute;left:2054px;top:662px;width:101px;height:28px;background:#e4dfec;"></div>
<div style="position:absolute;left:2154px;top:662px;width:101px;height:28px;background:#e4dfec;"></div>
<div style="position:absolute;left:2254px;top:662px;width:101px;height:28px;background:#e4dfec;"></div>
<div style="position:absolute;left:2354px;top:662px;width:101px;height:28px;background:#e4dfec;"></div>
<div style="position:absolute;left:2654px;top:662px;width:108px;height:28px;background:#e4dfec;"></div>
<div style="position:absolute;left:2761px;top:662px;width:101px;height:28px;background:#e4dfec;"></div>
<div style="position:absolute;left:2454px;top:662px;width:201px;height:28px;background:#e4dfec;"></div>
<div style="position:absolute;left:1381px;top:689px;width:101px;height:28px;background:#e4dfec;"></div>
<div style="position:absolute;left:1481px;top:689px;width:101px;height:28px;background:#e4dfec;"></div>
<div style="position:absolute;left:1581px;top:689px;width:101px;height:28px;background:#e4dfec;"></div>
<div style="position:absolute;left:1681px;top:689px;width:101px;height:28px;background:#e4dfec;"></div>
<div style="position:absolute;left:1781px;top:689px;width:101px;height:28px;background:#e4dfec;"></div>
<div style="position:absolute;left:2054px;top:689px;width:101px;height:28px;background:#e4dfec;"></div>
<div style="position:absolute;left:2154px;top:689px;width:101px;height:28px;background:#e4dfec;"></div>
<div style="position:absolute;left:2254px;top:689px;width:101px;height:28px;background:#e4dfec;"></div>
<div style="position:absolute;left:2354px;top:689px;width:101px;height:28px;background:#e4dfec;"></div>
<div style="position:absolute;left:2654px;top:689px;width:108px;height:28px;background:#e4dfec;"></div>
<div style="position:absolute;left:2761px;top:689px;width:101px;height:28px;background:#e4dfec;"></div>
<div style="position:absolute;left:2454px;top:689px;width:201px;height:28px;background:#e4dfec;"></div>
<div style="position:absolute;left:1381px;top:716px;width:101px;height:28px;background:#e4dfec;"></div>
<div style="position:absolute;left:1481px;top:716px;width:101px;height:28px;background:#e4dfec;"></div>
<div style="position:absolute;left:1581px;top:716px;width:101px;height:28px;background:#e4dfec;"></div>
<div style="position:absolute;left:1681px;top:716px;width:101px;height:28px;background:#e4dfec;"></div>
<div style="position:absolute;left:1781px;top:716px;width:101px;height:28px;background:#e4dfec;"></div>
<div style="position:absolute;left:2054px;top:716px;width:101px;height:28px;background:#e4dfec;"></div>
<div style="position:absolute;left:2154px;top:716px;width:101px;height:28px;background:#e4dfec;"></div>
<div style="position:absolute;left:2254px;top:716px;width:101px;height:28px;background:#e4dfec;"></div>
<div style="position:absolute;left:2354px;top:716px;width:101px;height:28px;background:#e4dfec;"></div>
<div style="position:absolute;left:2654px;top:716px;width:108px;height:28px;background:#e4dfec;"></div>
<div style="position:absolute;left:2761px;top:716px;width:101px;height:28px;background:#e4dfec;"></div>
<div style="position:absolute;left:2454px;top:716px;width:201px;height:28px;background:#e4dfec;"></div>
<div style="position:absolute;left:2454px;top:743px;width:201px;height:28px;background:#e4dfec;"></div>
<div style="position:absolute;left:2454px;top:770px;width:201px;height:28px;background:#e4dfec;"></div>
<div style="position:absolute;left:2454px;top:797px;width:201px;height:28px;background:#e4dfec;"></div>
<div style="position:absolute;left:2454px;top:824px;width:201px;height:28px;background:#e4dfec;"></div>
<div style="position:absolute;left:2454px;top:851px;width:201px;height:28px;background:#e4dfec;"></div>
<div style="position:absolute;left:1381px;top:878px;width:101px;height:28px;background:#f8d6b8;"></div>
<div style="position:absolute;left:1481px;top:878px;width:101px;height:28px;background:#f8d6b8;"></div>
<div style="position:absolute;left:1581px;top:878px;width:101px;height:28px;background:#f8d6b8;"></div>
<div style="position:absolute;left:1681px;top:878px;width:101px;height:28px;background:#f8d6b8;"></div>
<div style="position:absolute;left:1781px;top:878px;width:101px;height:28px;background:#f8d6b8;"></div>
<div style="position:absolute;left:2054px;top:878px;width:101px;height:28px;background:#f8d6b8;"></div>
<div style="position:absolute;left:2154px;top:878px;width:101px;height:28px;background:#f8d6b8;"></div>
<div style="position:absolute;left:2254px;top:878px;width:101px;height:28px;background:#f8d6b8;"></div>
<div style="position:absolute;left:2354px;top:878px;width:101px;height:28px;background:#f8d6b8;"></div>
<div style="position:absolute;left:2654px;top:878px;width:108px;height:28px;background:#f8d6b8;"></div>
<div style="position:absolute;left:2761px;top:878px;width:101px;height:28px;background:#f8d6b8;"></div>
<div style="position:absolute;left:2454px;top:878px;width:201px;height:28px;background:#e4dfec;"></div>
<div style="position:absolute;left:1381px;top:905px;width:101px;height:29px;background:#f8d6b8;"></div>
<div style="position:absolute;left:1481px;top:905px;width:101px;height:29px;background:#f8d6b8;"></div>
<div style="position:absolute;left:1581px;top:905px;width:101px;height:29px;background:#f8d6b8;"></div>
<div style="position:absolute;left:1681px;top:905px;width:101px;height:29px;background:#f8d6b8;"></div>
<div style="position:absolute;left:1781px;top:905px;width:101px;height:29px;background:#f8d6b8;"></div>
<div style="position:absolute;left:2054px;top:905px;width:101px;height:29px;background:#f8d6b8;"></div>
<div style="position:absolute;left:2154px;top:905px;width:101px;height:29px;background:#f8d6b8;"></div>
<div style="position:absolute;left:2254px;top:905px;width:101px;height:29px;background:#f8d6b8;"></div>
<div style="position:absolute;left:2354px;top:905px;width:101px;height:29px;background:#f8d6b8;"></div>
<div style="position:absolute;left:2654px;top:905px;width:108px;height:29px;background:#f8d6b8;"></div>
<div style="position:absolute;left:2761px;top:905px;width:101px;height:29px;background:#f8d6b8;"></div>
<div style="position:absolute;left:2454px;top:905px;width:201px;height:29px;background:#e4dfec;"></div>
<div style="position:absolute;left:2454px;top:933px;width:201px;height:29px;background:#e4dfec;"></div>
<div style="position:absolute;left:2454px;top:961px;width:201px;height:29px;background:#e4dfec;"></div>
<div style="position:absolute;left:1381px;top:989px;width:101px;height:29px;background:#f8d6b8;"></div>
<div style="position:absolute;left:1481px;top:989px;width:101px;height:29px;background:#f8d6b8;"></div>
<div style="position:absolute;left:1581px;top:989px;width:101px;height:29px;background:#f8d6b8;"></div>
<div style="position:absolute;left:1681px;top:989px;width:101px;height:29px;background:#f8d6b8;"></div>
<div style="position:absolute;left:1781px;top:989px;width:101px;height:29px;background:#f8d6b8;"></div>
<div style="position:absolute;left:2054px;top:989px;width:101px;height:29px;background:#f8d6b8;"></div>
<div style="position:absolute;left:2154px;top:989px;width:101px;height:29px;background:#f8d6b8;"></div>
<div style="position:absolute;left:2254px;top:989px;width:101px;height:29px;background:#f8d6b8;"></div>
<div style="position:absolute;left:2354px;top:989px;width:101px;height:29px;background:#f8d6b8;"></div>
<div style="position:absolute;left:2654px;top:989px;width:108px;height:29px;background:#f8d6b8;"></div>
<div style="position:absolute;left:2761px;top:989px;width:101px;height:29px;background:#f8d6b8;"></div>
<div style="position:absolute;left:2454px;top:989px;width:201px;height:29px;background:#e4dfec;"></div>
<div style="position:absolute;left:2454px;top:1017px;width:201px;height:29px;background:#e4dfec;"></div>
<div style="position:absolute;left:2454px;top:1045px;width:201px;height:29px;background:#e4dfec;"></div>
<div style="position:absolute;left:1381px;top:1073px;width:101px;height:29px;background:#f8d6b8;"></div>
<div style="position:absolute;left:1481px;top:1073px;width:101px;height:29px;background:#f8d6b8;"></div>
<div style="position:absolute;left:1581px;top:1073px;width:101px;height:29px;background:#f8d6b8;"></div>
<div style="position:absolute;left:1681px;top:1073px;width:101px;height:29px;background:#f8d6b8;"></div>
<div style="position:absolute;left:1781px;top:1073px;width:101px;height:29px;background:#f8d6b8;"></div>
<div style="position:absolute;left:2054px;top:1073px;width:101px;height:29px;background:#f8d6b8;"></div>
<div style="position:absolute;left:2154px;top:1073px;width:101px;height:29px;background:#f8d6b8;"></div>
<div style="position:absolute;left:2254px;top:1073px;width:101px;height:29px;background:#f8d6b8;"></div>
<div style="position:absolute;left:2354px;top:1073px;width:101px;height:29px;background:#f8d6b8;"></div>
<div style="position:absolute;left:2654px;top:1073px;width:108px;height:29px;background:#f8d6b8;"></div>
<div style="position:absolute;left:2761px;top:1073px;width:101px;height:29px;background:#f8d6b8;"></div>
<div style="position:absolute;left:2454px;top:1073px;width:201px;height:29px;background:#e4dfec;"></div>
<div style="position:absolute;left:1381px;top:1101px;width:101px;height:29px;background:#f8d6b8;"></div>
<div style="position:absolute;left:1481px;top:1101px;width:101px;height:29px;background:#f8d6b8;"></div>
<div style="position:absolute;left:1581px;top:1101px;width:101px;height:29px;background:#f8d6b8;"></div>
<div style="position:absolute;left:1681px;top:1101px;width:101px;height:29px;background:#f8d6b8;"></div>
<div style="position:absolute;left:1781px;top:1101px;width:101px;height:29px;background:#f8d6b8;"></div>
<div style="position:absolute;left:2054px;top:1101px;width:101px;height:29px;background:#f8d6b8;"></div>
<div style="position:absolute;left:2154px;top:1101px;width:101px;height:29px;background:#f8d6b8;"></div>
<div style="position:absolute;left:2254px;top:1101px;width:101px;height:29px;background:#f8d6b8;"></div>
<div style="position:absolute;left:2354px;top:1101px;width:101px;height:29px;background:#f8d6b8;"></div>
<div style="position:absolute;left:2654px;top:1101px;width:108px;height:29px;background:#f8d6b8;"></div>
<div style="position:absolute;left:2761px;top:1101px;width:101px;height:29px;background:#f8d6b8;"></div>
<div style="position:absolute;left:2454px;top:1101px;width:201px;height:29px;background:#e4dfec;"></div>
<div style="position:absolute;left:2454px;top:1129px;width:201px;height:29px;background:#e4dfec;"></div>
<div style="position:absolute;left:2454px;top:1157px;width:201px;height:29px;background:#e4dfec;"></div>
<div style="position:absolute;left:1381px;top:1185px;width:101px;height:29px;background:#f8d6b8;"></div>
<div style="position:absolute;left:1481px;top:1185px;width:101px;height:29px;background:#f8d6b8;"></div>
<div style="position:absolute;left:1581px;top:1185px;width:101px;height:29px;background:#f8d6b8;"></div>
<div style="position:absolute;left:1681px;top:1185px;width:101px;height:29px;background:#f8d6b8;"></div>
<div style="position:absolute;left:1781px;top:1185px;width:101px;height:29px;background:#f8d6b8;"></div>
<div style="position:absolute;left:2054px;top:1185px;width:101px;height:29px;background:#f8d6b8;"></div>
<div style="position:absolute;left:2154px;top:1185px;width:101px;height:29px;background:#f8d6b8;"></div>
<div style="position:absolute;left:2254px;top:1185px;width:101px;height:29px;background:#f8d6b8;"></div>
<div style="position:absolute;left:2354px;top:1185px;width:101px;height:29px;background:#f8d6b8;"></div>
<div style="position:absolute;left:2654px;top:1185px;width:108px;height:29px;background:#f8d6b8;"></div>
<div style="position:absolute;left:2761px;top:1185px;width:101px;height:29px;background:#f8d6b8;"></div>
<div style="position:absolute;left:2454px;top:1185px;width:201px;height:29px;background:#e4dfec;"></div>
<div style="position:absolute;left:2454px;top:1213px;width:201px;height:29px;background:#e4dfec;"></div>
<div style="position:absolute;left:1381px;top:1241px;width:101px;height:29px;background:#f8d6b8;"></div>
<div style="position:absolute;left:1481px;top:1241px;width:101px;height:29px;background:#f8d6b8;"></div>
<div style="position:absolute;left:1581px;top:1241px;width:101px;height:29px;background:#f8d6b8;"></div>
<div style="position:absolute;left:1681px;top:1241px;width:101px;height:29px;background:#f8d6b8;"></div>
<div style="position:absolute;left:1781px;top:1241px;width:101px;height:29px;background:#f8d6b8;"></div>
<div style="position:absolute;left:2054px;top:1241px;width:101px;height:29px;background:#f8d6b8;"></div>
<div style="position:absolute;left:2154px;top:1241px;width:101px;height:29px;background:#f8d6b8;"></div>
<div style="position:absolute;left:2254px;top:1241px;width:101px;height:29px;background:#f8d6b8;"></div>
<div style="position:absolute;left:2354px;top:1241px;width:101px;height:29px;background:#f8d6b8;"></div>
<div style="position:absolute;left:2654px;top:1241px;width:108px;height:29px;background:#f8d6b8;"></div>
<div style="position:absolute;left:2761px;top:1241px;width:101px;height:29px;background:#f8d6b8;"></div>
<div style="position:absolute;left:2454px;top:1241px;width:201px;height:29px;background:#e4dfec;"></div>
<div style="position:absolute;left:2454px;top:1269px;width:201px;height:29px;background:#e4dfec;"></div>
<div style="position:absolute;left:2454px;top:1297px;width:201px;height:29px;background:#e4dfec;"></div>
<div style="position:absolute;left:2454px;top:1325px;width:201px;height:29px;background:#e4dfec;"></div>
<div style="position:absolute;left:2454px;top:1353px;width:201px;height:29px;background:#e4dfec;"></div>
<div style="position:absolute;left:960px;top:228px;width:1px;height:1238px;background:#000;"></div>
<div style="position:absolute;left:1067px;top:228px;width:1px;height:1238px;background:#000;"></div>
<div style="position:absolute;left:1174px;top:228px;width:1px;height:1238px;background:#000;"></div>
<div style="position:absolute;left:1281px;top:228px;width:1px;height:1238px;background:#000;"></div>
<div style="position:absolute;left:960px;top:392px;width:322px;height:1px;background:#000;"></div>
<div style="position:absolute;left:960px;top:419px;width:322px;height:1px;background:#000;"></div>
<div style="position:absolute;left:960px;top:446px;width:322px;height:1px;background:#000;"></div>
<div style="position:absolute;left:960px;top:473px;width:322px;height:1px;background:#000;"></div>
<div style="position:absolute;left:960px;top:500px;width:322px;height:1px;background:#000;"></div>
<div style="position:absolute;left:960px;top:527px;width:322px;height:1px;background:#000;"></div>
<div style="position:absolute;left:960px;top:554px;width:322px;height:1px;background:#000;"></div>
<div style="position:absolute;left:960px;top:581px;width:322px;height:1px;background:#000;"></div>
<div style="position:absolute;left:960px;top:608px;width:322px;height:1px;background:#000;"></div>
<div style="position:absolute;left:960px;top:635px;width:322px;height:1px;background:#000;"></div>
<div style="position:absolute;left:960px;top:662px;width:322px;height:1px;background:#000;"></div>
<div style="position:absolute;left:960px;top:689px;width:322px;height:1px;background:#000;"></div>
<div style="position:absolute;left:960px;top:716px;width:322px;height:1px;background:#000;"></div>
<div style="position:absolute;left:960px;top:743px;width:322px;height:1px;background:#000;"></div>
<div style="position:absolute;left:960px;top:770px;width:322px;height:1px;background:#000;"></div>
<div style="position:absolute;left:960px;top:797px;width:322px;height:1px;background:#000;"></div>
<div style="position:absolute;left:960px;top:824px;width:322px;height:1px;background:#000;"></div>
<div style="position:absolute;left:960px;top:851px;width:322px;height:1px;background:#000;"></div>
<div style="position:absolute;left:960px;top:878px;width:322px;height:1px;background:#000;"></div>
<div style="position:absolute;left:960px;top:905px;width:322px;height:1px;background:#000;"></div>
<div style="position:absolute;left:960px;top:933px;width:322px;height:1px;background:#000;"></div>
<div style="position:absolute;left:960px;top:961px;width:322px;height:1px;background:#000;"></div>
<div style="position:absolute;left:960px;top:989px;width:322px;height:1px;background:#000;"></div>
<div style="position:absolute;left:960px;top:1017px;width:322px;height:1px;background:#000;"></div>
<div style="position:absolute;left:960px;top:1045px;width:322px;height:1px;background:#000;"></div>
<div style="position:absolute;left:960px;top:1073px;width:322px;height:1px;background:#000;"></div>
<div style="position:absolute;left:960px;top:1101px;width:322px;height:1px;background:#000;"></div>
<div style="position:absolute;left:960px;top:1129px;width:322px;height:1px;background:#000;"></div>
<div style="position:absolute;left:960px;top:1157px;width:322px;height:1px;background:#000;"></div>
<div style="position:absolute;left:960px;top:1185px;width:322px;height:1px;background:#000;"></div>
<div style="position:absolute;left:960px;top:1213px;width:322px;height:1px;background:#000;"></div>
<div style="position:absolute;left:960px;top:1241px;width:322px;height:1px;background:#000;"></div>
<div style="position:absolute;left:960px;top:1269px;width:322px;height:1px;background:#000;"></div>
<div style="position:absolute;left:960px;top:1297px;width:322px;height:1px;background:#000;"></div>
<div style="position:absolute;left:960px;top:1325px;width:322px;height:1px;background:#000;"></div>
<div style="position:absolute;left:960px;top:1353px;width:322px;height:1px;background:#000;"></div>
<div style="position:absolute;left:960px;top:1381px;width:322px;height:1px;background:#000;"></div>
<div style="position:absolute;left:960px;top:1409px;width:322px;height:1px;background:#000;"></div>
<div style="position:absolute;left:960px;top:1437px;width:322px;height:1px;background:#000;"></div>
<div style="position:absolute;left:960px;top:228px;width:322px;height:1px;background:#000;"></div>
<div style="position:absolute;left:1381px;top:228px;width:1px;height:165px;background:#000;"></div>
<div style="position:absolute;left:1481px;top:228px;width:1px;height:165px;background:#000;"></div>
<div style="position:absolute;left:1581px;top:228px;width:1px;height:165px;background:#000;"></div>
<div style="position:absolute;left:1681px;top:228px;width:1px;height:165px;background:#000;"></div>
<div style="position:absolute;left:1781px;top:228px;width:1px;height:165px;background:#000;"></div>
<div style="position:absolute;left:1881px;top:228px;width:1px;height:165px;background:#000;"></div>
<div style="position:absolute;left:1981px;top:228px;width:1px;height:165px;background:#000;"></div>
<div style="position:absolute;left:2054px;top:228px;width:1px;height:165px;background:#000;"></div>
<div style="position:absolute;left:2154px;top:228px;width:1px;height:165px;background:#000;"></div>
<div style="position:absolute;left:2254px;top:228px;width:1px;height:165px;background:#000;"></div>
<div style="position:absolute;left:2354px;top:228px;width:1px;height:165px;background:#000;"></div>
<div style="position:absolute;left:2454px;top:228px;width:1px;height:165px;background:#000;"></div>
<div style="position:absolute;left:2554px;top:228px;width:1px;height:165px;background:#000;"></div>
<div style="position:absolute;left:2654px;top:228px;width:1px;height:165px;background:#000;"></div>
<div style="position:absolute;left:2761px;top:228px;width:1px;height:165px;background:#000;"></div>
<div style="position:absolute;left:2861px;top:228px;width:1px;height:165px;background:#000;"></div>
<div style="position:absolute;left:1381px;top:392px;width:1481px;height:1px;background:#000;"></div>
<div style="position:absolute;left:1381px;top:419px;width:1481px;height:1px;background:#000;"></div>
<div style="position:absolute;left:1381px;top:419px;width:1px;height:1047px;background:#000;"></div>
<div style="position:absolute;left:1481px;top:419px;width:1px;height:1047px;background:#000;"></div>
<div style="position:absolute;left:1581px;top:419px;width:1px;height:1047px;background:#000;"></div>
<div style="position:absolute;left:1681px;top:419px;width:1px;height:1047px;background:#000;"></div>
<div style="position:absolute;left:1781px;top:419px;width:1px;height:1047px;background:#000;"></div>
<div style="position:absolute;left:1881px;top:419px;width:1px;height:1047px;background:#000;"></div>
<div style="position:absolute;left:2054px;top:419px;width:1px;height:1047px;background:#000;"></div>
<div style="position:absolute;left:2154px;top:419px;width:1px;height:1047px;background:#000;"></div>
<div style="position:absolute;left:2254px;top:419px;width:1px;height:1047px;background:#000;"></div>
<div style="position:absolute;left:2354px;top:419px;width:1px;height:1047px;background:#000;"></div>
<div style="position:absolute;left:2454px;top:419px;width:1px;height:1047px;background:#000;"></div>
<div style="position:absolute;left:2554px;top:419px;width:1px;height:1047px;background:#000;"></div>
<div style="position:absolute;left:2654px;top:419px;width:1px;height:1047px;background:#000;"></div>
<div style="position:absolute;left:2761px;top:419px;width:1px;height:379px;background:#000;"></div>
<div style="position:absolute;left:2761px;top:851px;width:1px;height:615px;background:#000;"></div>
<div style="position:absolute;left:2861px;top:419px;width:1px;height:379px;background:#000;"></div>
<div style="position:absolute;left:2861px;top:851px;width:1px;height:615px;background:#000;"></div>
<div style="position:absolute;left:1381px;top:446px;width:501px;height:1px;background:#000;"></div>
<div style="position:absolute;left:2054px;top:446px;width:601px;height:1px;background:#000;"></div>
<div style="position:absolute;left:2654px;top:446px;width:208px;height:1px;background:#000;"></div>
<div style="position:absolute;left:1381px;top:473px;width:501px;height:1px;background:#000;"></div>
<div style="position:absolute;left:2054px;top:473px;width:601px;height:1px;background:#000;"></div>
<div style="position:absolute;left:2654px;top:473px;width:208px;height:1px;background:#000;"></div>
<div style="position:absolute;left:1381px;top:500px;width:501px;height:1px;background:#000;"></div>
<div style="position:absolute;left:2054px;top:500px;width:601px;height:1px;background:#000;"></div>
<div style="position:absolute;left:2654px;top:500px;width:208px;height:1px;background:#000;"></div>
<div style="position:absolute;left:1381px;top:527px;width:501px;height:1px;background:#000;"></div>
<div style="position:absolute;left:2054px;top:527px;width:601px;height:1px;background:#000;"></div>
<div style="position:absolute;left:2654px;top:527px;width:208px;height:1px;background:#000;"></div>
<div style="position:absolute;left:1381px;top:554px;width:501px;height:1px;background:#000;"></div>
<div style="position:absolute;left:2054px;top:554px;width:601px;height:1px;background:#000;"></div>
<div style="position:absolute;left:2654px;top:554px;width:208px;height:1px;background:#000;"></div>
<div style="position:absolute;left:1381px;top:581px;width:501px;height:1px;background:#000;"></div>
<div style="position:absolute;left:2054px;top:581px;width:601px;height:1px;background:#000;"></div>
<div style="position:absolute;left:2654px;top:581px;width:208px;height:1px;background:#000;"></div>
<div style="position:absolute;left:1381px;top:608px;width:501px;height:1px;background:#000;"></div>
<div style="position:absolute;left:2054px;top:608px;width:601px;height:1px;background:#000;"></div>
<div style="position:absolute;left:2654px;top:608px;width:208px;height:1px;background:#000;"></div>
<div style="position:absolute;left:1381px;top:635px;width:501px;height:1px;background:#000;"></div>
<div style="position:absolute;left:2054px;top:635px;width:601px;height:1px;background:#000;"></div>
<div style="position:absolute;left:2654px;top:635px;width:208px;height:1px;background:#000;"></div>
<div style="position:absolute;left:1381px;top:662px;width:501px;height:1px;background:#000;"></div>
<div style="position:absolute;left:2054px;top:662px;width:601px;height:1px;background:#000;"></div>
<div style="position:absolute;left:2654px;top:662px;width:208px;height:1px;background:#000;"></div>
<div style="position:absolute;left:1381px;top:689px;width:501px;height:1px;background:#000;"></div>
<div style="position:absolute;left:2054px;top:689px;width:601px;height:1px;background:#000;"></div>
<div style="position:absolute;left:2654px;top:689px;width:208px;height:1px;background:#000;"></div>
<div style="position:absolute;left:1381px;top:716px;width:501px;height:1px;background:#000;"></div>
<div style="position:absolute;left:2054px;top:716px;width:601px;height:1px;background:#000;"></div>
<div style="position:absolute;left:2654px;top:716px;width:208px;height:1px;background:#000;"></div>
<div style="position:absolute;left:1381px;top:743px;width:501px;height:1px;background:#000;"></div>
<div style="position:absolute;left:2054px;top:743px;width:601px;height:1px;background:#000;"></div>
<div style="position:absolute;left:2654px;top:743px;width:208px;height:1px;background:#000;"></div>
<div style="position:absolute;left:1381px;top:770px;width:501px;height:1px;background:#000;"></div>
<div style="position:absolute;left:2054px;top:770px;width:601px;height:1px;background:#000;"></div>
<div style="position:absolute;left:2654px;top:770px;width:208px;height:1px;background:#000;"></div>
<div style="position:absolute;left:1381px;top:797px;width:501px;height:1px;background:#000;"></div>
<div style="position:absolute;left:2054px;top:797px;width:601px;height:1px;background:#000;"></div>
<div style="position:absolute;left:2654px;top:797px;width:208px;height:1px;background:#000;"></div>
<div style="position:absolute;left:1381px;top:824px;width:501px;height:1px;background:#000;"></div>
<div style="position:absolute;left:2054px;top:824px;width:601px;height:1px;background:#000;"></div>
<div style="position:absolute;left:1381px;top:851px;width:501px;height:1px;background:#000;"></div>
<div style="position:absolute;left:2054px;top:851px;width:601px;height:1px;background:#000;"></div>
<div style="position:absolute;left:2654px;top:851px;width:208px;height:1px;background:#000;"></div>
<div style="position:absolute;left:1381px;top:878px;width:501px;height:1px;background:#000;"></div>
<div style="position:absolute;left:2054px;top:878px;width:601px;height:1px;background:#000;"></div>
<div style="position:absolute;left:2654px;top:878px;width:208px;height:1px;background:#000;"></div>
<div style="position:absolute;left:1381px;top:905px;width:501px;height:1px;background:#000;"></div>
<div style="position:absolute;left:2054px;top:905px;width:601px;height:1px;background:#000;"></div>
<div style="position:absolute;left:2654px;top:905px;width:208px;height:1px;background:#000;"></div>
<div style="position:absolute;left:1381px;top:933px;width:501px;height:1px;background:#000;"></div>
<div style="position:absolute;left:2054px;top:933px;width:601px;height:1px;background:#000;"></div>
<div style="position:absolute;left:2654px;top:933px;width:208px;height:1px;background:#000;"></div>
<div style="position:absolute;left:1381px;top:961px;width:501px;height:1px;background:#000;"></div>
<div style="position:absolute;left:2054px;top:961px;width:601px;height:1px;background:#000;"></div>
<div style="position:absolute;left:2654px;top:961px;width:208px;height:1px;background:#000;"></div>
<div style="position:absolute;left:1381px;top:989px;width:501px;height:1px;background:#000;"></div>
<div style="position:absolute;left:2054px;top:989px;width:601px;height:1px;background:#000;"></div>
<div style="position:absolute;left:2654px;top:989px;width:208px;height:1px;background:#000;"></div>
<div style="position:absolute;left:1381px;top:1017px;width:501px;height:1px;background:#000;"></div>
<div style="position:absolute;left:2054px;top:1017px;width:601px;height:1px;background:#000;"></div>
<div style="position:absolute;left:2654px;top:1017px;width:208px;height:1px;background:#000;"></div>
<div style="position:absolute;left:1381px;top:1045px;width:501px;height:1px;background:#000;"></div>
<div style="position:absolute;left:2054px;top:1045px;width:601px;height:1px;background:#000;"></div>
<div style="position:absolute;left:2654px;top:1045px;width:208px;height:1px;background:#000;"></div>
<div style="position:absolute;left:1381px;top:1073px;width:501px;height:1px;background:#000;"></div>
<div style="position:absolute;left:2054px;top:1073px;width:601px;height:1px;background:#000;"></div>
<div style="position:absolute;left:2654px;top:1073px;width:208px;height:1px;background:#000;"></div>
<div style="position:absolute;left:1381px;top:1101px;width:501px;height:1px;background:#000;"></div>
<div style="position:absolute;left:2054px;top:1101px;width:601px;height:1px;background:#000;"></div>
<div style="position:absolute;left:2654px;top:1101px;width:208px;height:1px;background:#000;"></div>
<div style="position:absolute;left:1381px;top:1129px;width:501px;height:1px;background:#000;"></div>
<div style="position:absolute;left:2054px;top:1129px;width:601px;height:1px;background:#000;"></div>
<div style="position:absolute;left:2654px;top:1129px;width:208px;height:1px;background:#000;"></div>
<div style="position:absolute;left:1381px;top:1157px;width:501px;height:1px;background:#000;"></div>
<div style="position:absolute;left:2054px;top:1157px;width:601px;height:1px;background:#000;"></div>
<div style="position:absolute;left:2654px;top:1157px;width:208px;height:1px;background:#000;"></div>
<div style="position:absolute;left:1381px;top:1185px;width:501px;height:1px;background:#000;"></div>
<div style="position:absolute;left:2054px;top:1185px;width:601px;height:1px;background:#000;"></div>
<div style="position:absolute;left:2654px;top:1185px;width:208px;height:1px;background:#000;"></div>
<div style="position:absolute;left:1381px;top:1213px;width:501px;height:1px;background:#000;"></div>
<div style="position:absolute;left:2054px;top:1213px;width:601px;height:1px;background:#000;"></div>
<div style="position:absolute;left:2654px;top:1213px;width:208px;height:1px;background:#000;"></div>
<div style="position:absolute;left:1381px;top:1241px;width:501px;height:1px;background:#000;"></div>
<div style="position:absolute;left:2054px;top:1241px;width:601px;height:1px;background:#000;"></div>
<div style="position:absolute;left:2654px;top:1241px;width:208px;height:1px;background:#000;"></div>
<div style="position:absolute;left:1381px;top:1269px;width:501px;height:1px;background:#000;"></div>
<div style="position:absolute;left:2054px;top:1269px;width:601px;height:1px;background:#000;"></div>
<div style="position:absolute;left:2654px;top:1269px;width:208px;height:1px;background:#000;"></div>
<div style="position:absolute;left:1381px;top:1297px;width:501px;height:1px;background:#000;"></div>
<div style="position:absolute;left:2054px;top:1297px;width:601px;height:1px;background:#000;"></div>
<div style="position:absolute;left:2654px;top:1297px;width:208px;height:1px;background:#000;"></div>
<div style="position:absolute;left:1381px;top:1325px;width:501px;height:1px;background:#000;"></div>
<div style="position:absolute;left:2054px;top:1325px;width:601px;height:1px;background:#000;"></div>
<div style="position:absolute;left:2654px;top:1325px;width:208px;height:1px;background:#000;"></div>
<div style="position:absolute;left:1381px;top:1353px;width:501px;height:1px;background:#000;"></div>
<div style="position:absolute;left:2054px;top:1353px;width:601px;height:1px;background:#000;"></div>
<div style="position:absolute;left:2654px;top:1353px;width:208px;height:1px;background:#000;"></div>
<div style="position:absolute;left:1381px;top:1381px;width:501px;height:1px;background:#000;"></div>
<div style="position:absolute;left:2054px;top:1381px;width:601px;height:1px;background:#000;"></div>
<div style="position:absolute;left:2654px;top:1381px;width:208px;height:1px;background:#000;"></div>
<div style="position:absolute;left:1381px;top:1409px;width:501px;height:1px;background:#000;"></div>
<div style="position:absolute;left:2054px;top:1409px;width:601px;height:1px;background:#000;"></div>
<div style="position:absolute;left:2654px;top:1409px;width:208px;height:1px;background:#000;"></div>
<div style="position:absolute;left:1381px;top:1437px;width:501px;height:1px;background:#000;"></div>
<div style="position:absolute;left:2054px;top:1437px;width:601px;height:1px;background:#000;"></div>
<div style="position:absolute;left:2654px;top:1437px;width:208px;height:1px;background:#000;"></div>
</div>
<div style="position:absolute;left:0;top:0;width:2880px;height:1434px;clip-path:inset(229px 15px 64px 61px);">
<div style="position:absolute;left:161px;top:393px;width:99px;height:26px;overflow:hidden;">
<div style="position:absolute;top:13.76px;font-family:'Liberation Sans', sans-serif;font-size:16px;line-height:0;white-space:pre;color:#fff;font-weight:bold;left:-450.50px;width:1000px;text-align:center;">Cobro</div>
</div>
<div style="position:absolute;left:261px;top:393px;width:99px;height:26px;overflow:hidden;">
<div style="position:absolute;top:13.76px;font-family:'Liberation Sans', sans-serif;font-size:16px;line-height:0;white-space:pre;color:#fff;font-weight:bold;left:-450.50px;width:1000px;text-align:center;">Fecha Cobro</div>
</div>
<div style="position:absolute;left:361px;top:393px;width:99px;height:26px;overflow:hidden;">
<div style="position:absolute;top:13.76px;font-family:'Liberation Sans', sans-serif;font-size:16px;line-height:0;white-space:pre;color:#fff;font-weight:bold;left:-450.50px;width:1000px;text-align:center;">Factura</div>
</div>
<div style="position:absolute;left:461px;top:393px;width:99px;height:26px;overflow:hidden;">
<div style="position:absolute;top:13.76px;font-family:'Liberation Sans', sans-serif;font-size:16px;line-height:0;white-space:pre;color:#fff;font-weight:bold;left:-450.50px;width:1000px;text-align:center;">Fecha Fact</div>
</div>
<div style="position:absolute;left:561px;top:393px;width:99px;height:26px;overflow:hidden;">
<div style="position:absolute;top:13.76px;font-family:'Liberation Sans', sans-serif;font-size:16px;line-height:0;white-space:pre;color:#fff;font-weight:bold;left:-450.50px;width:1000px;text-align:center;">Cliente</div>
</div>
<div style="position:absolute;left:661px;top:393px;width:99px;height:26px;overflow:hidden;">
<div style="position:absolute;top:13.76px;font-family:'Liberation Sans', sans-serif;font-size:16px;line-height:0;white-space:pre;color:#fff;font-weight:bold;left:-450.50px;width:1000px;text-align:center;">Importe Neto</div>
</div>
<div style="position:absolute;left:761px;top:393px;width:99px;height:26px;overflow:hidden;">
<div style="position:absolute;top:13.76px;font-family:'Liberation Sans', sans-serif;font-size:16px;line-height:0;white-space:pre;color:#fff;font-weight:bold;left:-450.50px;width:1000px;text-align:center;">IVA</div>
</div>
<div style="position:absolute;left:861px;top:393px;width:99px;height:26px;overflow:hidden;">
<div style="position:absolute;top:13.76px;font-family:'Liberation Sans', sans-serif;font-size:16px;line-height:0;white-space:pre;color:#fff;font-weight:bold;left:-450.50px;width:1000px;text-align:center;">Total</div>
</div>
<div style="position:absolute;left:961px;top:393px;width:106px;height:26px;overflow:hidden;">
<div style="position:absolute;top:13.76px;font-family:'Liberation Sans', sans-serif;font-size:16px;line-height:0;white-space:pre;color:#fff;font-weight:bold;left:-447.00px;width:1000px;text-align:center;">M.Nacional</div>
</div>
<div style="position:absolute;left:1068px;top:393px;width:166px;height:26px;overflow:hidden;">
<div style="position:absolute;top:13.76px;font-family:'Liberation Sans', sans-serif;font-size:16px;line-height:0;white-space:pre;color:#fff;font-weight:bold;left:7.5px;">M.Extranjera</div>
</div>
<div style="position:absolute;left:1175px;top:393px;width:110px;height:26px;overflow:hidden;">
<div style="position:absolute;top:13.76px;font-family:'Liberation Sans', sans-serif;font-size:16px;line-height:0;white-space:pre;color:#fff;font-weight:bold;right:-1px;">Tipo De Cmbio</div>
</div>
<div style="position:absolute;left:1382px;top:393px;width:99px;height:26px;overflow:hidden;">
<div style="position:absolute;top:13.48px;font-family:'Liberation Sans', sans-serif;font-size:14.5px;line-height:0;white-space:pre;color:#fff;font-weight:bold;left:-450.50px;width:1000px;text-align:center;">Folio</div>
</div>
<div style="position:absolute;left:1482px;top:393px;width:99px;height:26px;overflow:hidden;">
<div style="position:absolute;top:13.48px;font-family:'Liberation Sans', sans-serif;font-size:14.5px;line-height:0;white-space:pre;color:#fff;font-weight:bold;left:-450.50px;width:1000px;text-align:center;">Fecha Factura</div>
</div>
<div style="position:absolute;left:1582px;top:393px;width:99px;height:26px;overflow:hidden;">
<div style="position:absolute;top:13.48px;font-family:'Liberation Sans', sans-serif;font-size:14.5px;line-height:0;white-space:pre;color:#fff;font-weight:bold;left:-450.50px;width:1000px;text-align:center;">Cliente</div>
</div>
<div style="position:absolute;left:1682px;top:393px;width:99px;height:26px;overflow:hidden;">
<div style="position:absolute;top:13.48px;font-family:'Liberation Sans', sans-serif;font-size:14.5px;line-height:0;white-space:pre;color:#fff;font-weight:bold;left:-450.50px;width:1000px;text-align:center;">Plazo</div>
</div>
<div style="position:absolute;left:1782px;top:393px;width:99px;height:26px;overflow:hidden;">
<div style="position:absolute;top:13.48px;font-family:'Liberation Sans', sans-serif;font-size:14.5px;line-height:0;white-space:pre;color:#fff;font-weight:bold;left:-450.50px;width:1000px;text-align:center;">Articulo</div>
</div>
<div style="position:absolute;left:2055px;top:393px;width:99px;height:26px;overflow:hidden;">
<div style="position:absolute;top:13.48px;font-family:'Liberation Sans', sans-serif;font-size:14.5px;line-height:0;white-space:pre;color:#fff;font-weight:bold;left:-450.50px;width:1000px;text-align:center;">Importe Neto</div>
</div>
<div style="position:absolute;left:2155px;top:393px;width:99px;height:26px;overflow:hidden;">
<div style="position:absolute;top:13.48px;font-family:'Liberation Sans', sans-serif;font-size:14.5px;line-height:0;white-space:pre;color:#fff;font-weight:bold;left:-450.50px;width:1000px;text-align:center;">Unidades</div>
</div>
<div style="position:absolute;left:2255px;top:393px;width:99px;height:26px;overflow:hidden;">
<div style="position:absolute;top:13.48px;font-family:'Liberation Sans', sans-serif;font-size:14.5px;line-height:0;white-space:pre;color:#fff;font-weight:bold;left:-450.50px;width:1000px;text-align:center;">Precio Un</div>
</div>
<div style="position:absolute;left:2355px;top:393px;width:99px;height:26px;overflow:hidden;">
<div style="position:absolute;top:13.48px;font-family:'Liberation Sans', sans-serif;font-size:14.5px;line-height:0;white-space:pre;color:#fff;font-weight:bold;left:-450.50px;width:1000px;text-align:center;">Costo Uni</div>
</div>
<div style="position:absolute;left:2455px;top:393px;width:99px;height:26px;overflow:hidden;">
<div style="position:absolute;top:13.48px;font-family:'Liberation Sans', sans-serif;font-size:14.5px;line-height:0;white-space:pre;color:#fff;font-weight:bold;left:-450.50px;width:1000px;text-align:center;">% Utilidad</div>
</div>
<div style="position:absolute;left:1882px;top:393px;width:172px;height:26px;overflow:hidden;">
<div style="position:absolute;top:14.46px;font-family:'Liberation Sans', sans-serif;font-size:16px;line-height:0;white-space:pre;color:#fff;font-weight:bold;left:1px;">Fecha Cobro</div>
</div>
<div style="position:absolute;left:1382.6px;top:229px;width:99.0px;height:163px;overflow:hidden;">
<div style="position:absolute;top:81.76px;font-family:'Liberation Sans', sans-serif;font-size:16px;line-height:0;white-space:pre;color:#000;font-weight:bold;letter-spacing:1.2px;left:-450.50px;width:1000px;text-align:center;">FACT.</div>
</div>
<div style="position:absolute;left:1482.0px;top:229px;width:99.0px;height:163px;overflow:hidden;">
<div style="position:absolute;top:81.76px;font-family:'Liberation Sans', sans-serif;font-size:16px;line-height:0;white-space:pre;color:#000;font-weight:bold;letter-spacing:0px;left:-450.50px;width:1000px;text-align:center;">FECHA</div>
</div>
<div style="position:absolute;left:1582.2px;top:229px;width:99.0px;height:163px;overflow:hidden;">
<div style="position:absolute;top:81.76px;font-family:'Liberation Sans', sans-serif;font-size:16px;line-height:0;white-space:pre;color:#000;font-weight:bold;letter-spacing:0.4px;left:-450.50px;width:1000px;text-align:center;">CLIENTES</div>
</div>
<div style="position:absolute;left:1682.0px;top:229px;width:99.0px;height:163px;overflow:hidden;">
<div style="position:absolute;top:81.76px;font-family:'Liberation Sans', sans-serif;font-size:16px;line-height:0;white-space:pre;color:#000;font-weight:bold;letter-spacing:0px;left:-450.50px;width:1000px;text-align:center;">PLAZO</div>
</div>
<div style="position:absolute;left:1882.1px;top:229px;width:99.0px;height:163px;overflow:hidden;">
<div style="position:absolute;top:81.76px;font-family:'Liberation Sans', sans-serif;font-size:16px;line-height:0;white-space:pre;color:#000;font-weight:bold;letter-spacing:0.2px;left:-450.50px;width:1000px;text-align:center;">PAGO</div>
</div>
<div style="position:absolute;left:2055.35px;top:229px;width:99.0px;height:163px;overflow:hidden;">
<div style="position:absolute;top:81.76px;font-family:'Liberation Sans', sans-serif;font-size:16px;line-height:0;white-space:pre;color:#000;font-weight:bold;letter-spacing:0.7px;left:-450.50px;width:1000px;text-align:center;">IMPORTE</div>
</div>
<div style="position:absolute;left:1782.2px;top:229px;width:99.0px;height:163px;overflow:hidden;">
<div style="position:absolute;top:81.76px;font-family:'Liberation Sans', sans-serif;font-size:16px;line-height:0;white-space:pre;color:#000;font-weight:bold;letter-spacing:0.4px;left:-450.50px;width:1000px;text-align:center;">DESCRIPC</div>
</div>
<div style="position:absolute;left:1783px;top:229px;width:99px;height:163px;overflow:hidden;">
<div style="position:absolute;top:99.76px;font-family:'Liberation Sans', sans-serif;font-size:16px;line-height:0;white-space:pre;color:#000;font-weight:bold;letter-spacing:2px;left:-450.50px;width:1000px;text-align:center;">ION</div>
</div>
<div style="position:absolute;left:1718px;top:309px;width:600px;height:0;transform:rotate(-90deg);transform-origin:300px 0;"><div style="position:absolute;left:0.40px;top:-0.04px;width:600px;text-align:center;font-family:'Liberation Sans',sans-serif;font-weight:bold;font-size:16.5px;line-height:0;white-space:pre;color:#000;letter-spacing:0.8px">DIAS</div></div>
<div style="position:absolute;left:1905px;top:307px;width:600px;height:0;transform:rotate(-90deg);transform-origin:300px 0;"><div style="position:absolute;left:0.17px;top:-0.04px;width:600px;text-align:center;font-family:'Liberation Sans',sans-serif;font-weight:bold;font-size:16.5px;line-height:0;white-space:pre;color:#000;letter-spacing:0.35px">CANTIDAD</div></div>
<div style="position:absolute;left:1995.4px;top:306.8px;width:600px;height:0;transform:rotate(-90deg);transform-origin:300px 0;"><div style="position:absolute;left:0.00px;top:-0.04px;width:600px;text-align:center;font-family:'Liberation Sans',sans-serif;font-weight:bold;font-size:16.5px;line-height:0;white-space:pre;color:#000;letter-spacing:0px">PRECIO VENTA</div></div>
<div style="position:absolute;left:2014.5px;top:309px;width:600px;height:0;transform:rotate(-90deg);transform-origin:300px 0;"><div style="position:absolute;left:0.07px;top:-0.04px;width:600px;text-align:center;font-family:'Liberation Sans',sans-serif;font-weight:bold;font-size:16.5px;line-height:0;white-space:pre;color:#000;letter-spacing:0.15px">POR  KG.   MT. PZ.</div></div>
<div style="position:absolute;left:2105.2px;top:307.2px;width:600px;height:0;transform:rotate(-90deg);transform-origin:300px 0;"><div style="position:absolute;left:0.00px;top:-0.04px;width:600px;text-align:center;font-family:'Liberation Sans',sans-serif;font-weight:bold;font-size:16.5px;line-height:0;white-space:pre;color:#000;letter-spacing:0px">COSTO</div></div>
<div style="position:absolute;left:2204.7px;top:309px;width:600px;height:0;transform:rotate(-90deg);transform-origin:300px 0;"><div style="position:absolute;left:0.00px;top:-0.04px;width:600px;text-align:center;font-family:'Liberation Sans',sans-serif;font-weight:bold;font-size:16.5px;line-height:0;white-space:pre;color:#000;letter-spacing:0px">MARGEN</div></div>
<div style="position:absolute;left:2305px;top:310px;width:600px;height:0;transform:rotate(-90deg);transform-origin:300px 0;"><div style="position:absolute;left:0.38px;top:-0.04px;width:600px;text-align:center;font-family:'Liberation Sans',sans-serif;font-weight:bold;font-size:16.5px;line-height:0;white-space:pre;color:#000;letter-spacing:0.75px">% DE COMISION</div></div>
<div style="position:absolute;left:2409.6px;top:309.3px;width:600px;height:0;transform:rotate(-90deg);transform-origin:300px 0;"><div style="position:absolute;left:0.00px;top:-0.04px;width:600px;text-align:center;font-family:'Liberation Sans',sans-serif;font-weight:bold;font-size:16.5px;line-height:0;white-space:pre;color:#000;letter-spacing:0px">DIAS PENALIZADOS</div></div>
<div style="position:absolute;left:2512px;top:309.3px;width:600px;height:0;transform:rotate(-90deg);transform-origin:300px 0;"><div style="position:absolute;left:0.25px;top:-0.04px;width:600px;text-align:center;font-family:'Liberation Sans',sans-serif;font-weight:bold;font-size:16.5px;line-height:0;white-space:pre;color:#000;letter-spacing:0.5px">% PENALIZACION</div></div>
<div style="position:absolute;left:161px;top:420px;width:99px;height:26px;overflow:hidden;">
<div style="position:absolute;top:7.48px;font-family:'Liberation Sans', sans-serif;font-size:14.2px;line-height:0;white-space:pre;color:#000;font-weight:normal;left:4.0px;">CGL5549</div>
</div>
<div style="position:absolute;left:261px;top:420px;width:99px;height:26px;overflow:hidden;">
<div style="position:absolute;top:7.48px;font-family:'Liberation Sans', sans-serif;font-size:14.2px;line-height:0;white-space:pre;color:#000;font-weight:normal;left:4.0px;">4/10/2025</div>
</div>
<div style="position:absolute;left:361px;top:420px;width:99px;height:26px;overflow:hidden;">
<div style="position:absolute;top:7.48px;font-family:'Liberation Sans', sans-serif;font-size:14.2px;line-height:0;white-space:pre;color:#000;font-weight:normal;left:4.0px;">GDL8194</div>
</div>
<div style="position:absolute;left:461px;top:420px;width:99px;height:26px;overflow:hidden;">
<div style="position:absolute;top:7.48px;font-family:'Liberation Sans', sans-serif;font-size:14.2px;line-height:0;white-space:pre;color:#000;font-weight:normal;left:4.0px;">4/4/2025</div>
</div>
<div style="position:absolute;left:561px;top:420px;width:99px;height:26px;overflow:hidden;">
<div style="position:absolute;top:7.48px;font-family:'Liberation Sans', sans-serif;font-size:14.2px;line-height:0;white-space:pre;color:#000;font-weight:normal;left:4.0px;">ALMIDONES MEXICANOS, S.A. DE C.V.</div>
</div>
<div style="position:absolute;left:661px;top:420px;width:99px;height:26px;overflow:hidden;">
<div style="position:absolute;top:7.48px;font-family:'Liberation Sans', sans-serif;font-size:14.2px;line-height:0;white-space:pre;color:#000;font-weight:normal;left:8.8px;">$</div>
</div>
<div style="position:absolute;left:661px;top:420px;width:99px;height:26px;overflow:hidden;">
<div style="position:absolute;top:7.48px;font-family:'Liberation Sans', sans-serif;font-size:14.2px;line-height:0;white-space:pre;color:#000;font-weight:normal;right:8.8px;">13,250.00</div>
</div>
<div style="position:absolute;left:761px;top:420px;width:99px;height:26px;overflow:hidden;">
<div style="position:absolute;top:7.48px;font-family:'Liberation Sans', sans-serif;font-size:14.2px;line-height:0;white-space:pre;color:#000;font-weight:normal;left:8.8px;">$</div>
</div>
<div style="position:absolute;left:761px;top:420px;width:99px;height:26px;overflow:hidden;">
<div style="position:absolute;top:7.48px;font-family:'Liberation Sans', sans-serif;font-size:14.2px;line-height:0;white-space:pre;color:#000;font-weight:normal;right:8.8px;">2,120.00</div>
</div>
<div style="position:absolute;left:861px;top:420px;width:99px;height:26px;overflow:hidden;">
<div style="position:absolute;top:7.48px;font-family:'Liberation Sans', sans-serif;font-size:14.2px;line-height:0;white-space:pre;color:#000;font-weight:normal;left:8.8px;">$</div>
</div>
<div style="position:absolute;left:861px;top:420px;width:99px;height:26px;overflow:hidden;">
<div style="position:absolute;top:7.48px;font-family:'Liberation Sans', sans-serif;font-size:14.2px;line-height:0;white-space:pre;color:#000;font-weight:normal;right:8.8px;">15,370.00</div>
</div>
<div style="position:absolute;left:961px;top:420px;width:106px;height:26px;overflow:hidden;">
<div style="position:absolute;top:7.48px;font-family:'Liberation Sans', sans-serif;font-size:14.2px;line-height:0;white-space:pre;color:#000;font-weight:normal;left:4.0px;">MXN</div>
</div>
<div style="position:absolute;left:161px;top:447px;width:99px;height:26px;overflow:hidden;">
<div style="position:absolute;top:7.48px;font-family:'Liberation Sans', sans-serif;font-size:14.2px;line-height:0;white-space:pre;color:#000;font-weight:normal;left:4.0px;">CGL5571</div>
</div>
<div style="position:absolute;left:261px;top:447px;width:99px;height:26px;overflow:hidden;">
<div style="position:absolute;top:7.48px;font-family:'Liberation Sans', sans-serif;font-size:14.2px;line-height:0;white-space:pre;color:#000;font-weight:normal;left:4.0px;">4/16/2025</div>
</div>
<div style="position:absolute;left:361px;top:447px;width:99px;height:26px;overflow:hidden;">
<div style="position:absolute;top:7.48px;font-family:'Liberation Sans', sans-serif;font-size:14.2px;line-height:0;white-space:pre;color:#000;font-weight:normal;left:4.0px;">GDL8274</div>
</div>
<div style="position:absolute;left:461px;top:447px;width:99px;height:26px;overflow:hidden;">
<div style="position:absolute;top:7.48px;font-family:'Liberation Sans', sans-serif;font-size:14.2px;line-height:0;white-space:pre;color:#000;font-weight:normal;left:4.0px;">4/12/2025</div>
</div>
<div style="position:absolute;left:561px;top:447px;width:99px;height:26px;overflow:hidden;">
<div style="position:absolute;top:7.48px;font-family:'Liberation Sans', sans-serif;font-size:14.2px;line-height:0;white-space:pre;color:#000;font-weight:normal;left:4.0px;">ALMIDONES MEXICANOS, S.A. DE C.V.</div>
</div>
<div style="position:absolute;left:661px;top:447px;width:99px;height:26px;overflow:hidden;">
<div style="position:absolute;top:7.48px;font-family:'Liberation Sans', sans-serif;font-size:14.2px;line-height:0;white-space:pre;color:#000;font-weight:normal;left:8.8px;">$</div>
</div>
<div style="position:absolute;left:661px;top:447px;width:99px;height:26px;overflow:hidden;">
<div style="position:absolute;top:7.48px;font-family:'Liberation Sans', sans-serif;font-size:14.2px;line-height:0;white-space:pre;color:#000;font-weight:normal;right:8.8px;">11,925.00</div>
</div>
<div style="position:absolute;left:761px;top:447px;width:99px;height:26px;overflow:hidden;">
<div style="position:absolute;top:7.48px;font-family:'Liberation Sans', sans-serif;font-size:14.2px;line-height:0;white-space:pre;color:#000;font-weight:normal;left:8.8px;">$</div>
</div>
<div style="position:absolute;left:761px;top:447px;width:99px;height:26px;overflow:hidden;">
<div style="position:absolute;top:7.48px;font-family:'Liberation Sans', sans-serif;font-size:14.2px;line-height:0;white-space:pre;color:#000;font-weight:normal;right:8.8px;">1,908.00</div>
</div>
<div style="position:absolute;left:861px;top:447px;width:99px;height:26px;overflow:hidden;">
<div style="position:absolute;top:7.48px;font-family:'Liberation Sans', sans-serif;font-size:14.2px;line-height:0;white-space:pre;color:#000;font-weight:normal;left:8.8px;">$</div>
</div>
<div style="position:absolute;left:861px;top:447px;width:99px;height:26px;overflow:hidden;">
<div style="position:absolute;top:7.48px;font-family:'Liberation Sans', sans-serif;font-size:14.2px;line-height:0;white-space:pre;color:#000;font-weight:normal;right:8.8px;">13,833.00</div>
</div>
<div style="position:absolute;left:961px;top:447px;width:106px;height:26px;overflow:hidden;">
<div style="position:absolute;top:7.48px;font-family:'Liberation Sans', sans-serif;font-size:14.2px;line-height:0;white-space:pre;color:#000;font-weight:normal;left:4.0px;"> MXN</div>
</div>
<div style="position:absolute;left:161px;top:474px;width:99px;height:26px;overflow:hidden;">
<div style="position:absolute;top:7.48px;font-family:'Liberation Sans', sans-serif;font-size:14.2px;line-height:0;white-space:pre;color:#000;font-weight:normal;left:4.0px;">CGL5529</div>
</div>
<div style="position:absolute;left:261px;top:474px;width:99px;height:26px;overflow:hidden;">
<div style="position:absolute;top:7.48px;font-family:'Liberation Sans', sans-serif;font-size:14.2px;line-height:0;white-space:pre;color:#000;font-weight:normal;left:4.0px;">4/3/2025</div>
</div>
<div style="position:absolute;left:361px;top:474px;width:99px;height:26px;overflow:hidden;">
<div style="position:absolute;top:7.48px;font-family:'Liberation Sans', sans-serif;font-size:14.2px;line-height:0;white-space:pre;color:#000;font-weight:normal;left:4.0px;">GDL8250</div>
</div>
<div style="position:absolute;left:461px;top:474px;width:99px;height:26px;overflow:hidden;">
<div style="position:absolute;top:7.48px;font-family:'Liberation Sans', sans-serif;font-size:14.2px;line-height:0;white-space:pre;color:#000;font-weight:normal;left:4.0px;">1/29/2025</div>
</div>
<div style="position:absolute;left:561px;top:474px;width:99px;height:26px;overflow:hidden;">
<div style="position:absolute;top:7.48px;font-family:'Liberation Sans', sans-serif;font-size:14.2px;line-height:0;white-space:pre;color:#000;font-weight:normal;left:4.0px;">COMPAÑIA ARIZLU, S.A. DE C.V.</div>
</div>
<div style="position:absolute;left:661px;top:474px;width:99px;height:26px;overflow:hidden;">
<div style="position:absolute;top:7.48px;font-family:'Liberation Sans', sans-serif;font-size:14.2px;line-height:0;white-space:pre;color:#000;font-weight:normal;left:8.8px;">$</div>
</div>
<div style="position:absolute;left:661px;top:474px;width:99px;height:26px;overflow:hidden;">
<div style="position:absolute;top:7.48px;font-family:'Liberation Sans', sans-serif;font-size:14.2px;line-height:0;white-space:pre;color:#000;font-weight:normal;right:8.8px;">3,894.00</div>
</div>
<div style="position:absolute;left:761px;top:474px;width:99px;height:26px;overflow:hidden;">
<div style="position:absolute;top:7.48px;font-family:'Liberation Sans', sans-serif;font-size:14.2px;line-height:0;white-space:pre;color:#000;font-weight:normal;left:8.8px;">$</div>
</div>
<div style="position:absolute;left:761px;top:474px;width:99px;height:26px;overflow:hidden;">
<div style="position:absolute;top:7.48px;font-family:'Liberation Sans', sans-serif;font-size:14.2px;line-height:0;white-space:pre;color:#000;font-weight:normal;right:8.8px;">623.04</div>
</div>
<div style="position:absolute;left:861px;top:474px;width:99px;height:26px;overflow:hidden;">
<div style="position:absolute;top:7.48px;font-family:'Liberation Sans', sans-serif;font-size:14.2px;line-height:0;white-space:pre;color:#000;font-weight:normal;left:8.8px;">$</div>
</div>
<div style="position:absolute;left:861px;top:474px;width:99px;height:26px;overflow:hidden;">
<div style="position:absolute;top:7.48px;font-family:'Liberation Sans', sans-serif;font-size:14.2px;line-height:0;white-space:pre;color:#000;font-weight:normal;right:8.8px;">4,517.04</div>
</div>
<div style="position:absolute;left:961px;top:474px;width:106px;height:26px;overflow:hidden;">
<div style="position:absolute;top:7.48px;font-family:'Liberation Sans', sans-serif;font-size:14.2px;line-height:0;white-space:pre;color:#000;font-weight:normal;left:4.0px;"> MXN</div>
</div>
<div style="position:absolute;left:161px;top:501px;width:99px;height:26px;overflow:hidden;">
<div style="position:absolute;top:7.48px;font-family:'Liberation Sans', sans-serif;font-size:14.2px;line-height:0;white-space:pre;color:#000;font-weight:normal;left:4.0px;">CGL5529</div>
</div>
<div style="position:absolute;left:261px;top:501px;width:99px;height:26px;overflow:hidden;">
<div style="position:absolute;top:7.48px;font-family:'Liberation Sans', sans-serif;font-size:14.2px;line-height:0;white-space:pre;color:#000;font-weight:normal;left:4.0px;">4/3/2025</div>
</div>
<div style="position:absolute;left:361px;top:501px;width:99px;height:26px;overflow:hidden;">
<div style="position:absolute;top:7.48px;font-family:'Liberation Sans', sans-serif;font-size:14.2px;line-height:0;white-space:pre;color:#000;font-weight:normal;left:4.0px;">GDL8251</div>
</div>
<div style="position:absolute;left:461px;top:501px;width:99px;height:26px;overflow:hidden;">
<div style="position:absolute;top:7.48px;font-family:'Liberation Sans', sans-serif;font-size:14.2px;line-height:0;white-space:pre;color:#000;font-weight:normal;left:4.0px;">1/29/2025</div>
</div>
<div style="position:absolute;left:561px;top:501px;width:99px;height:26px;overflow:hidden;">
<div style="position:absolute;top:7.48px;font-family:'Liberation Sans', sans-serif;font-size:14.2px;line-height:0;white-space:pre;color:#000;font-weight:normal;left:4.0px;">COMPAÑIA ARIZLU, S.A. DE C.V.</div>
</div>
<div style="position:absolute;left:661px;top:501px;width:99px;height:26px;overflow:hidden;">
<div style="position:absolute;top:7.48px;font-family:'Liberation Sans', sans-serif;font-size:14.2px;line-height:0;white-space:pre;color:#000;font-weight:normal;left:8.8px;">$</div>
</div>
<div style="position:absolute;left:661px;top:501px;width:99px;height:26px;overflow:hidden;">
<div style="position:absolute;top:7.48px;font-family:'Liberation Sans', sans-serif;font-size:14.2px;line-height:0;white-space:pre;color:#000;font-weight:normal;right:8.8px;">12,600.00</div>
</div>
<div style="position:absolute;left:761px;top:501px;width:99px;height:26px;overflow:hidden;">
<div style="position:absolute;top:7.48px;font-family:'Liberation Sans', sans-serif;font-size:14.2px;line-height:0;white-space:pre;color:#000;font-weight:normal;left:8.8px;">$</div>
</div>
<div style="position:absolute;left:761px;top:501px;width:99px;height:26px;overflow:hidden;">
<div style="position:absolute;top:7.48px;font-family:'Liberation Sans', sans-serif;font-size:14.2px;line-height:0;white-space:pre;color:#000;font-weight:normal;right:8.8px;">2,016.00</div>
</div>
<div style="position:absolute;left:861px;top:501px;width:99px;height:26px;overflow:hidden;">
<div style="position:absolute;top:7.48px;font-family:'Liberation Sans', sans-serif;font-size:14.2px;line-height:0;white-space:pre;color:#000;font-weight:normal;left:8.8px;">$</div>
</div>
<div style="position:absolute;left:861px;top:501px;width:99px;height:26px;overflow:hidden;">
<div style="position:absolute;top:7.48px;font-family:'Liberation Sans', sans-serif;font-size:14.2px;line-height:0;white-space:pre;color:#000;font-weight:normal;right:8.8px;">14,616.00</div>
</div>
<div style="position:absolute;left:961px;top:501px;width:106px;height:26px;overflow:hidden;">
<div style="position:absolute;top:7.48px;font-family:'Liberation Sans', sans-serif;font-size:14.2px;line-height:0;white-space:pre;color:#000;font-weight:normal;left:4.0px;"> MXN</div>
</div>
<div style="position:absolute;left:161px;top:528px;width:99px;height:26px;overflow:hidden;">
<div style="position:absolute;top:7.48px;font-family:'Liberation Sans', sans-serif;font-size:14.2px;line-height:0;white-space:pre;color:#000;font-weight:normal;left:4.0px;">CGL5529</div>
</div>
<div style="position:absolute;left:261px;top:528px;width:99px;height:26px;overflow:hidden;">
<div style="position:absolute;top:7.48px;font-family:'Liberation Sans', sans-serif;font-size:14.2px;line-height:0;white-space:pre;color:#000;font-weight:normal;left:4.0px;">4/3/2025</div>
</div>
<div style="position:absolute;left:361px;top:528px;width:99px;height:26px;overflow:hidden;">
<div style="position:absolute;top:7.48px;font-family:'Liberation Sans', sans-serif;font-size:14.2px;line-height:0;white-space:pre;color:#000;font-weight:normal;left:4.0px;">GDL8251</div>
</div>
<div style="position:absolute;left:461px;top:528px;width:99px;height:26px;overflow:hidden;">
<div style="position:absolute;top:7.48px;font-family:'Liberation Sans', sans-serif;font-size:14.2px;line-height:0;white-space:pre;color:#000;font-weight:normal;left:4.0px;">1/29/2025</div>
</div>
<div style="position:absolute;left:561px;top:528px;width:399px;height:26px;overflow:hidden;">
<div style="position:absolute;top:7.48px;font-family:'Liberation Sans', sans-serif;font-size:14.2px;line-height:0;white-space:pre;color:#000;font-weight:normal;left:4.0px;">COMPAÑIA ARIZLU, S.A. DE C.V.</div>
</div>
<div style="position:absolute;left:161px;top:555px;width:99px;height:26px;overflow:hidden;">
<div style="position:absolute;top:7.48px;font-family:'Liberation Sans', sans-serif;font-size:14.2px;line-height:0;white-space:pre;color:#000;font-weight:normal;left:4.0px;">CGL5551</div>
</div>
<div style="position:absolute;left:261px;top:555px;width:99px;height:26px;overflow:hidden;">
<div style="position:absolute;top:7.48px;font-family:'Liberation Sans', sans-serif;font-size:14.2px;line-height:0;white-space:pre;color:#000;font-weight:normal;left:4.0px;">4/11/2025</div>
</div>
<div style="position:absolute;left:361px;top:555px;width:99px;height:26px;overflow:hidden;">
<div style="position:absolute;top:7.48px;font-family:'Liberation Sans', sans-serif;font-size:14.2px;line-height:0;white-space:pre;color:#000;font-weight:normal;left:4.0px;">GDL8294</div>
</div>
<div style="position:absolute;left:461px;top:555px;width:99px;height:26px;overflow:hidden;">
<div style="position:absolute;top:7.48px;font-family:'Liberation Sans', sans-serif;font-size:14.2px;line-height:0;white-space:pre;color:#000;font-weight:normal;left:4.0px;">2/6/2025</div>
</div>
<div style="position:absolute;left:561px;top:555px;width:99px;height:26px;overflow:hidden;">
<div style="position:absolute;top:7.48px;font-family:'Liberation Sans', sans-serif;font-size:14.2px;line-height:0;white-space:pre;color:#000;font-weight:normal;left:4.0px;">COMPAÑIA ARIZLU, S.A. DE C.V.</div>
</div>
<div style="position:absolute;left:661px;top:555px;width:99px;height:26px;overflow:hidden;">
<div style="position:absolute;top:7.48px;font-family:'Liberation Sans', sans-serif;font-size:14.2px;line-height:0;white-space:pre;color:#000;font-weight:normal;left:8.8px;">$</div>
</div>
<div style="position:absolute;left:661px;top:555px;width:99px;height:26px;overflow:hidden;">
<div style="position:absolute;top:7.48px;font-family:'Liberation Sans', sans-serif;font-size:14.2px;line-height:0;white-space:pre;color:#000;font-weight:normal;right:8.8px;">77,880.00</div>
</div>
<div style="position:absolute;left:761px;top:555px;width:99px;height:26px;overflow:hidden;">
<div style="position:absolute;top:7.48px;font-family:'Liberation Sans', sans-serif;font-size:14.2px;line-height:0;white-space:pre;color:#000;font-weight:normal;left:8.8px;">$</div>
</div>
<div style="position:absolute;left:761px;top:555px;width:99px;height:26px;overflow:hidden;">
<div style="position:absolute;top:7.48px;font-family:'Liberation Sans', sans-serif;font-size:14.2px;line-height:0;white-space:pre;color:#000;font-weight:normal;right:8.8px;">12,460.80</div>
</div>
<div style="position:absolute;left:861px;top:555px;width:99px;height:26px;overflow:hidden;">
<div style="position:absolute;top:7.48px;font-family:'Liberation Sans', sans-serif;font-size:14.2px;line-height:0;white-space:pre;color:#000;font-weight:normal;left:8.8px;">$</div>
</div>
<div style="position:absolute;left:861px;top:555px;width:99px;height:26px;overflow:hidden;">
<div style="position:absolute;top:7.48px;font-family:'Liberation Sans', sans-serif;font-size:14.2px;line-height:0;white-space:pre;color:#000;font-weight:normal;right:8.8px;">90,340.80</div>
</div>
<div style="position:absolute;left:961px;top:555px;width:106px;height:26px;overflow:hidden;">
<div style="position:absolute;top:7.48px;font-family:'Liberation Sans', sans-serif;font-size:14.2px;line-height:0;white-space:pre;color:#000;font-weight:normal;left:4.0px;"> MXN</div>
</div>
<div style="position:absolute;left:161px;top:582px;width:99px;height:26px;overflow:hidden;">
<div style="position:absolute;top:7.48px;font-family:'Liberation Sans', sans-serif;font-size:14.2px;line-height:0;white-space:pre;color:#000;font-weight:normal;left:4.0px;">CGL5551</div>
</div>
<div style="position:absolute;left:261px;top:582px;width:99px;height:26px;overflow:hidden;">
<div style="position:absolute;top:7.48px;font-family:'Liberation Sans', sans-serif;font-size:14.2px;line-height:0;white-space:pre;color:#000;font-weight:normal;left:4.0px;">4/11/2025</div>
</div>
<div style="position:absolute;left:361px;top:582px;width:99px;height:26px;overflow:hidden;">
<div style="position:absolute;top:7.48px;font-family:'Liberation Sans', sans-serif;font-size:14.2px;line-height:0;white-space:pre;color:#000;font-weight:normal;left:4.0px;">GDL8295</div>
</div>
<div style="position:absolute;left:461px;top:582px;width:99px;height:26px;overflow:hidden;">
<div style="position:absolute;top:7.48px;font-family:'Liberation Sans', sans-serif;font-size:14.2px;line-height:0;white-space:pre;color:#000;font-weight:normal;left:4.0px;">2/6/2025</div>
</div>
<div style="position:absolute;left:561px;top:582px;width:99px;height:26px;overflow:hidden;">
<div style="position:absolute;top:7.48px;font-family:'Liberation Sans', sans-serif;font-size:14.2px;line-height:0;white-space:pre;color:#000;font-weight:normal;left:4.0px;">COMPAÑIA ARIZLU, S.A. DE C.V.</div>
</div>
<div style="position:absolute;left:661px;top:582px;width:99px;height:26px;overflow:hidden;">
<div style="position:absolute;top:7.48px;font-family:'Liberation Sans', sans-serif;font-size:14.2px;line-height:0;white-space:pre;color:#000;font-weight:normal;left:8.8px;">$</div>
</div>
<div style="position:absolute;left:661px;top:582px;width:99px;height:26px;overflow:hidden;">
<div style="position:absolute;top:7.48px;font-family:'Liberation Sans', sans-serif;font-size:14.2px;line-height:0;white-space:pre;color:#000;font-weight:normal;right:8.8px;">3,780.00</div>
</div>
<div style="position:absolute;left:761px;top:582px;width:99px;height:26px;overflow:hidden;">
<div style="position:absolute;top:7.48px;font-family:'Liberation Sans', sans-serif;font-size:14.2px;line-height:0;white-space:pre;color:#000;font-weight:normal;left:8.8px;">$</div>
</div>
<div style="position:absolute;left:761px;top:582px;width:99px;height:26px;overflow:hidden;">
<div style="position:absolute;top:7.48px;font-family:'Liberation Sans', sans-serif;font-size:14.2px;line-height:0;white-space:pre;color:#000;font-weight:normal;right:8.8px;">604.80</div>
</div>
<div style="position:absolute;left:861px;top:582px;width:99px;height:26px;overflow:hidden;">
<div style="position:absolute;top:7.48px;font-family:'Liberation Sans', sans-serif;font-size:14.2px;line-height:0;white-space:pre;color:#000;font-weight:normal;left:8.8px;">$</div>
</div>
<div style="position:absolute;left:861px;top:582px;width:99px;height:26px;overflow:hidden;">
<div style="position:absolute;top:7.48px;font-family:'Liberation Sans', sans-serif;font-size:14.2px;line-height:0;white-space:pre;color:#000;font-weight:normal;right:8.8px;">4,384.80</div>
</div>
<div style="position:absolute;left:961px;top:582px;width:106px;height:26px;overflow:hidden;">
<div style="position:absolute;top:7.48px;font-family:'Liberation Sans', sans-serif;font-size:14.2px;line-height:0;white-space:pre;color:#000;font-weight:normal;left:4.0px;"> MXN</div>
</div>
<div style="position:absolute;left:161px;top:609px;width:99px;height:26px;overflow:hidden;">
<div style="position:absolute;top:7.48px;font-family:'Liberation Sans', sans-serif;font-size:14.2px;line-height:0;white-space:pre;color:#000;font-weight:normal;left:4.0px;">CGL5597</div>
</div>
<div style="position:absolute;left:261px;top:609px;width:99px;height:26px;overflow:hidden;">
<div style="position:absolute;top:7.48px;font-family:'Liberation Sans', sans-serif;font-size:14.2px;line-height:0;white-space:pre;color:#000;font-weight:normal;left:4.0px;">4/25/2025</div>
</div>
<div style="position:absolute;left:361px;top:609px;width:99px;height:26px;overflow:hidden;">
<div style="position:absolute;top:7.48px;font-family:'Liberation Sans', sans-serif;font-size:14.2px;line-height:0;white-space:pre;color:#000;font-weight:normal;left:4.0px;">GDL8369</div>
</div>
<div style="position:absolute;left:461px;top:609px;width:99px;height:26px;overflow:hidden;">
<div style="position:absolute;top:7.48px;font-family:'Liberation Sans', sans-serif;font-size:14.2px;line-height:0;white-space:pre;color:#000;font-weight:normal;left:4.0px;">2/19/2025</div>
</div>
<div style="position:absolute;left:561px;top:609px;width:99px;height:26px;overflow:hidden;">
<div style="position:absolute;top:7.48px;font-family:'Liberation Sans', sans-serif;font-size:14.2px;line-height:0;white-space:pre;color:#000;font-weight:normal;left:4.0px;">COMPAÑIA ARIZLU, S.A. DE C.V.</div>
</div>
<div style="position:absolute;left:661px;top:609px;width:99px;height:26px;overflow:hidden;">
<div style="position:absolute;top:7.48px;font-family:'Liberation Sans', sans-serif;font-size:14.2px;line-height:0;white-space:pre;color:#000;font-weight:normal;left:8.8px;">$</div>
</div>
<div style="position:absolute;left:661px;top:609px;width:99px;height:26px;overflow:hidden;">
<div style="position:absolute;top:7.48px;font-family:'Liberation Sans', sans-serif;font-size:14.2px;line-height:0;white-space:pre;color:#000;font-weight:normal;right:8.8px;">51,920.00</div>
</div>
<div style="position:absolute;left:761px;top:609px;width:99px;height:26px;overflow:hidden;">
<div style="position:absolute;top:7.48px;font-family:'Liberation Sans', sans-serif;font-size:14.2px;line-height:0;white-space:pre;color:#000;font-weight:normal;left:8.8px;">$</div>
</div>
<div style="position:absolute;left:761px;top:609px;width:99px;height:26px;overflow:hidden;">
<div style="position:absolute;top:7.48px;font-family:'Liberation Sans', sans-serif;font-size:14.2px;line-height:0;white-space:pre;color:#000;font-weight:normal;right:8.8px;">8,307.20</div>
</div>
<div style="position:absolute;left:861px;top:609px;width:99px;height:26px;overflow:hidden;">
<div style="position:absolute;top:7.48px;font-family:'Liberation Sans', sans-serif;font-size:14.2px;line-height:0;white-space:pre;color:#000;font-weight:normal;left:8.8px;">$</div>
</div>
<div style="position:absolute;left:861px;top:609px;width:99px;height:26px;overflow:hidden;">
<div style="position:absolute;top:7.48px;font-family:'Liberation Sans', sans-serif;font-size:14.2px;line-height:0;white-space:pre;color:#000;font-weight:normal;right:8.8px;">60,227.20</div>
</div>
<div style="position:absolute;left:961px;top:609px;width:106px;height:26px;overflow:hidden;">
<div style="position:absolute;top:7.48px;font-family:'Liberation Sans', sans-serif;font-size:14.2px;line-height:0;white-space:pre;color:#000;font-weight:normal;left:4.0px;"> MXN</div>
</div>
<div style="position:absolute;left:161px;top:636px;width:99px;height:26px;overflow:hidden;">
<div style="position:absolute;top:7.48px;font-family:'Liberation Sans', sans-serif;font-size:14.2px;line-height:0;white-space:pre;color:#000;font-weight:normal;left:4.0px;">CGL5597</div>
</div>
<div style="position:absolute;left:261px;top:636px;width:99px;height:26px;overflow:hidden;">
<div style="position:absolute;top:7.48px;font-family:'Liberation Sans', sans-serif;font-size:14.2px;line-height:0;white-space:pre;color:#000;font-weight:normal;left:4.0px;">4/25/2025</div>
</div>
<div style="position:absolute;left:361px;top:636px;width:99px;height:26px;overflow:hidden;">
<div style="position:absolute;top:7.48px;font-family:'Liberation Sans', sans-serif;font-size:14.2px;line-height:0;white-space:pre;color:#000;font-weight:normal;left:4.0px;">GDL8370</div>
</div>
<div style="position:absolute;left:461px;top:636px;width:99px;height:26px;overflow:hidden;">
<div style="position:absolute;top:7.48px;font-family:'Liberation Sans', sans-serif;font-size:14.2px;line-height:0;white-space:pre;color:#000;font-weight:normal;left:4.0px;">2/19/2025</div>
</div>
<div style="position:absolute;left:561px;top:636px;width:99px;height:26px;overflow:hidden;">
<div style="position:absolute;top:7.48px;font-family:'Liberation Sans', sans-serif;font-size:14.2px;line-height:0;white-space:pre;color:#000;font-weight:normal;left:4.0px;">COMPAÑIA ARIZLU, S.A. DE C.V.</div>
</div>
<div style="position:absolute;left:661px;top:636px;width:99px;height:26px;overflow:hidden;">
<div style="position:absolute;top:7.48px;font-family:'Liberation Sans', sans-serif;font-size:14.2px;line-height:0;white-space:pre;color:#000;font-weight:normal;left:8.8px;">$</div>
</div>
<div style="position:absolute;left:661px;top:636px;width:99px;height:26px;overflow:hidden;">
<div style="position:absolute;top:7.48px;font-family:'Liberation Sans', sans-serif;font-size:14.2px;line-height:0;white-space:pre;color:#000;font-weight:normal;right:8.8px;">25,960.00</div>
</div>
<div style="position:absolute;left:761px;top:636px;width:99px;height:26px;overflow:hidden;">
<div style="position:absolute;top:7.48px;font-family:'Liberation Sans', sans-serif;font-size:14.2px;line-height:0;white-space:pre;color:#000;font-weight:normal;left:8.8px;">$</div>
</div>
<div style="position:absolute;left:761px;top:636px;width:99px;height:26px;overflow:hidden;">
<div style="position:absolute;top:7.48px;font-family:'Liberation Sans', sans-serif;font-size:14.2px;line-height:0;white-space:pre;color:#000;font-weight:normal;right:8.8px;">4,153.60</div>
</div>
<div style="position:absolute;left:861px;top:636px;width:99px;height:26px;overflow:hidden;">
<div style="position:absolute;top:7.48px;font-family:'Liberation Sans', sans-serif;font-size:14.2px;line-height:0;white-space:pre;color:#000;font-weight:normal;left:8.8px;">$</div>
</div>
<div style="position:absolute;left:861px;top:636px;width:99px;height:26px;overflow:hidden;">
<div style="position:absolute;top:7.48px;font-family:'Liberation Sans', sans-serif;font-size:14.2px;line-height:0;white-space:pre;color:#000;font-weight:normal;right:8.8px;">30,113.60</div>
</div>
<div style="position:absolute;left:961px;top:636px;width:106px;height:26px;overflow:hidden;">
<div style="position:absolute;top:7.48px;font-family:'Liberation Sans', sans-serif;font-size:14.2px;line-height:0;white-space:pre;color:#000;font-weight:normal;left:4.0px;"> MXN</div>
</div>
<div style="position:absolute;left:161px;top:663px;width:99px;height:26px;overflow:hidden;">
<div style="position:absolute;top:7.48px;font-family:'Liberation Sans', sans-serif;font-size:14.2px;line-height:0;white-space:pre;color:#000;font-weight:normal;left:4.0px;">CGL5597</div>
</div>
<div style="position:absolute;left:261px;top:663px;width:99px;height:26px;overflow:hidden;">
<div style="position:absolute;top:7.48px;font-family:'Liberation Sans', sans-serif;font-size:14.2px;line-height:0;white-space:pre;color:#000;font-weight:normal;left:4.0px;">4/25/2025</div>
</div>
<div style="position:absolute;left:361px;top:663px;width:99px;height:26px;overflow:hidden;">
<div style="position:absolute;top:7.48px;font-family:'Liberation Sans', sans-serif;font-size:14.2px;line-height:0;white-space:pre;color:#000;font-weight:normal;left:4.0px;">GDL8392</div>
</div>
<div style="position:absolute;left:461px;top:663px;width:99px;height:26px;overflow:hidden;">
<div style="position:absolute;top:7.48px;font-family:'Liberation Sans', sans-serif;font-size:14.2px;line-height:0;white-space:pre;color:#000;font-weight:normal;left:4.0px;">2/24/2025</div>
</div>
<div style="position:absolute;left:561px;top:663px;width:99px;height:26px;overflow:hidden;">
<div style="position:absolute;top:7.48px;font-family:'Liberation Sans', sans-serif;font-size:14.2px;line-height:0;white-space:pre;color:#000;font-weight:normal;left:4.0px;">COMPAÑIA ARIZLU, S.A. DE C.V.</div>
</div>
<div style="position:absolute;left:661px;top:663px;width:99px;height:26px;overflow:hidden;">
<div style="position:absolute;top:7.48px;font-family:'Liberation Sans', sans-serif;font-size:14.2px;line-height:0;white-space:pre;color:#000;font-weight:normal;left:8.8px;">$</div>
</div>
<div style="position:absolute;left:661px;top:663px;width:99px;height:26px;overflow:hidden;">
<div style="position:absolute;top:7.48px;font-family:'Liberation Sans', sans-serif;font-size:14.2px;line-height:0;white-space:pre;color:#000;font-weight:normal;right:8.8px;">51,920.00</div>
</div>
<div style="position:absolute;left:761px;top:663px;width:99px;height:26px;overflow:hidden;">
<div style="position:absolute;top:7.48px;font-family:'Liberation Sans', sans-serif;font-size:14.2px;line-height:0;white-space:pre;color:#000;font-weight:normal;left:8.8px;">$</div>
</div>
<div style="position:absolute;left:761px;top:663px;width:99px;height:26px;overflow:hidden;">
<div style="position:absolute;top:7.48px;font-family:'Liberation Sans', sans-serif;font-size:14.2px;line-height:0;white-space:pre;color:#000;font-weight:normal;right:8.8px;">8,307.20</div>
</div>
<div style="position:absolute;left:861px;top:663px;width:99px;height:26px;overflow:hidden;">
<div style="position:absolute;top:7.48px;font-family:'Liberation Sans', sans-serif;font-size:14.2px;line-height:0;white-space:pre;color:#000;font-weight:normal;left:8.8px;">$</div>
</div>
<div style="position:absolute;left:861px;top:663px;width:99px;height:26px;overflow:hidden;">
<div style="position:absolute;top:7.48px;font-family:'Liberation Sans', sans-serif;font-size:14.2px;line-height:0;white-space:pre;color:#000;font-weight:normal;right:8.8px;">60,227.20</div>
</div>
<div style="position:absolute;left:961px;top:663px;width:106px;height:26px;overflow:hidden;">
<div style="position:absolute;top:7.48px;font-family:'Liberation Sans', sans-serif;font-size:14.2px;line-height:0;white-space:pre;color:#000;font-weight:normal;left:4.0px;"> MXN</div>
</div>
<div style="position:absolute;left:161px;top:690px;width:99px;height:26px;overflow:hidden;">
<div style="position:absolute;top:7.48px;font-family:'Liberation Sans', sans-serif;font-size:14.2px;line-height:0;white-space:pre;color:#000;font-weight:normal;left:4.0px;">CGL5597</div>
</div>
<div style="position:absolute;left:261px;top:690px;width:99px;height:26px;overflow:hidden;">
<div style="position:absolute;top:7.48px;font-family:'Liberation Sans', sans-serif;font-size:14.2px;line-height:0;white-space:pre;color:#000;font-weight:normal;left:4.0px;">4/25/2025</div>
</div>
<div style="position:absolute;left:361px;top:690px;width:99px;height:26px;overflow:hidden;">
<div style="position:absolute;top:7.48px;font-family:'Liberation Sans', sans-serif;font-size:14.2px;line-height:0;white-space:pre;color:#000;font-weight:normal;left:4.0px;">GDL8394</div>
</div>
<div style="position:absolute;left:461px;top:690px;width:99px;height:26px;overflow:hidden;">
<div style="position:absolute;top:7.48px;font-family:'Liberation Sans', sans-serif;font-size:14.2px;line-height:0;white-space:pre;color:#000;font-weight:normal;left:4.0px;">2/24/2025</div>
</div>
<div style="position:absolute;left:561px;top:690px;width:99px;height:26px;overflow:hidden;">
<div style="position:absolute;top:7.48px;font-family:'Liberation Sans', sans-serif;font-size:14.2px;line-height:0;white-space:pre;color:#000;font-weight:normal;left:4.0px;">COMPAÑIA ARIZLU, S.A. DE C.V.</div>
</div>
<div style="position:absolute;left:661px;top:690px;width:99px;height:26px;overflow:hidden;">
<div style="position:absolute;top:7.48px;font-family:'Liberation Sans', sans-serif;font-size:14.2px;line-height:0;white-space:pre;color:#000;font-weight:normal;left:8.8px;">$</div>
</div>
<div style="position:absolute;left:661px;top:690px;width:99px;height:26px;overflow:hidden;">
<div style="position:absolute;top:7.48px;font-family:'Liberation Sans', sans-serif;font-size:14.2px;line-height:0;white-space:pre;color:#000;font-weight:normal;right:8.8px;">8,820.00</div>
</div>
<div style="position:absolute;left:761px;top:690px;width:99px;height:26px;overflow:hidden;">
<div style="position:absolute;top:7.48px;font-family:'Liberation Sans', sans-serif;font-size:14.2px;line-height:0;white-space:pre;color:#000;font-weight:normal;left:8.8px;">$</div>
</div>
<div style="position:absolute;left:761px;top:690px;width:99px;height:26px;overflow:hidden;">
<div style="position:absolute;top:7.48px;font-family:'Liberation Sans', sans-serif;font-size:14.2px;line-height:0;white-space:pre;color:#000;font-weight:normal;right:8.8px;">1,411.20</div>
</div>
<div style="position:absolute;left:861px;top:690px;width:99px;height:26px;overflow:hidden;">
<div style="position:absolute;top:7.48px;font-family:'Liberation Sans', sans-serif;font-size:14.2px;line-height:0;white-space:pre;color:#000;font-weight:normal;left:8.8px;">$</div>
</div>
<div style="position:absolute;left:861px;top:690px;width:99px;height:26px;overflow:hidden;">
<div style="position:absolute;top:7.48px;font-family:'Liberation Sans', sans-serif;font-size:14.2px;line-height:0;white-space:pre;color:#000;font-weight:normal;right:8.8px;">10,231.20</div>
</div>
<div style="position:absolute;left:961px;top:690px;width:106px;height:26px;overflow:hidden;">
<div style="position:absolute;top:7.48px;font-family:'Liberation Sans', sans-serif;font-size:14.2px;line-height:0;white-space:pre;color:#000;font-weight:normal;left:4.0px;"> MXN</div>
</div>
<div style="position:absolute;left:161px;top:717px;width:99px;height:26px;overflow:hidden;">
<div style="position:absolute;top:7.48px;font-family:'Liberation Sans', sans-serif;font-size:14.2px;line-height:0;white-space:pre;color:#000;font-weight:normal;left:4.0px;">CGL5597</div>
</div>
<div style="position:absolute;left:261px;top:717px;width:99px;height:26px;overflow:hidden;">
<div style="position:absolute;top:7.48px;font-family:'Liberation Sans', sans-serif;font-size:14.2px;line-height:0;white-space:pre;color:#000;font-weight:normal;left:4.0px;">4/25/2025</div>
</div>
<div style="position:absolute;left:361px;top:717px;width:99px;height:26px;overflow:hidden;">
<div style="position:absolute;top:7.48px;font-family:'Liberation Sans', sans-serif;font-size:14.2px;line-height:0;white-space:pre;color:#000;font-weight:normal;left:4.0px;">GDL8394</div>
</div>
<div style="position:absolute;left:461px;top:717px;width:99px;height:26px;overflow:hidden;">
<div style="position:absolute;top:7.48px;font-family:'Liberation Sans', sans-serif;font-size:14.2px;line-height:0;white-space:pre;color:#000;font-weight:normal;left:4.0px;">2/24/2025</div>
</div>
<div style="position:absolute;left:561px;top:717px;width:399px;height:26px;overflow:hidden;">
<div style="position:absolute;top:7.48px;font-family:'Liberation Sans', sans-serif;font-size:14.2px;line-height:0;white-space:pre;color:#000;font-weight:normal;left:4.0px;">COMPAÑIA ARIZLU, S.A. DE C.V.</div>
</div>
<div style="position:absolute;left:161px;top:744px;width:99px;height:26px;overflow:hidden;">
<div style="position:absolute;top:7.48px;font-family:'Liberation Sans', sans-serif;font-size:14.2px;line-height:0;white-space:pre;color:#000;font-weight:normal;left:4.0px;">CGL5593</div>
</div>
<div style="position:absolute;left:261px;top:744px;width:99px;height:26px;overflow:hidden;">
<div style="position:absolute;top:7.48px;font-family:'Liberation Sans', sans-serif;font-size:14.2px;line-height:0;white-space:pre;color:#000;font-weight:normal;left:4.0px;">4/24/2025</div>
</div>
<div style="position:absolute;left:361px;top:744px;width:99px;height:26px;overflow:hidden;">
<div style="position:absolute;top:7.48px;font-family:'Liberation Sans', sans-serif;font-size:14.2px;line-height:0;white-space:pre;color:#000;font-weight:normal;left:4.0px;">GDL8325</div>
</div>
<div style="position:absolute;left:461px;top:744px;width:99px;height:26px;overflow:hidden;">
<div style="position:absolute;top:7.48px;font-family:'Liberation Sans', sans-serif;font-size:14.2px;line-height:0;white-space:pre;color:#000;font-weight:normal;left:4.0px;">2/10/2025</div>
</div>
<div style="position:absolute;left:561px;top:744px;width:99px;height:26px;overflow:hidden;">
<div style="position:absolute;top:7.48px;font-family:'Liberation Sans', sans-serif;font-size:14.2px;line-height:0;white-space:pre;color:#000;font-weight:normal;left:4.0px;">COPELAND GUADALAJARA, S.A. DE C.V.</div>
</div>
<div style="position:absolute;left:661px;top:744px;width:99px;height:26px;overflow:hidden;">
<div style="position:absolute;top:7.48px;font-family:'Liberation Sans', sans-serif;font-size:14.2px;line-height:0;white-space:pre;color:#000;font-weight:normal;left:8.8px;">$</div>
</div>
<div style="position:absolute;left:661px;top:744px;width:99px;height:26px;overflow:hidden;">
<div style="position:absolute;top:7.48px;font-family:'Liberation Sans', sans-serif;font-size:14.2px;line-height:0;white-space:pre;color:#000;font-weight:normal;right:8.8px;">3,992.04</div>
</div>
<div style="position:absolute;left:761px;top:744px;width:99px;height:26px;overflow:hidden;">
<div style="position:absolute;top:7.48px;font-family:'Liberation Sans', sans-serif;font-size:14.2px;line-height:0;white-space:pre;color:#000;font-weight:normal;left:8.8px;">$</div>
</div>
<div style="position:absolute;left:761px;top:744px;width:99px;height:26px;overflow:hidden;">
<div style="position:absolute;top:7.48px;font-family:'Liberation Sans', sans-serif;font-size:14.2px;line-height:0;white-space:pre;color:#000;font-weight:normal;right:8.8px;">638.73</div>
</div>
<div style="position:absolute;left:861px;top:744px;width:99px;height:26px;overflow:hidden;">
<div style="position:absolute;top:7.48px;font-family:'Liberation Sans', sans-serif;font-size:14.2px;line-height:0;white-space:pre;color:#000;font-weight:normal;left:8.8px;">$</div>
</div>
<div style="position:absolute;left:861px;top:744px;width:99px;height:26px;overflow:hidden;">
<div style="position:absolute;top:7.48px;font-family:'Liberation Sans', sans-serif;font-size:14.2px;line-height:0;white-space:pre;color:#000;font-weight:normal;right:8.8px;">4,630.76</div>
</div>
<div style="position:absolute;left:961px;top:744px;width:106px;height:26px;overflow:hidden;">
<div style="position:absolute;top:7.48px;font-family:'Liberation Sans', sans-serif;font-size:14.2px;line-height:0;white-space:pre;color:#000;font-weight:normal;left:8.8px;">$</div>
</div>
<div style="position:absolute;left:961px;top:744px;width:106px;height:26px;overflow:hidden;">
<div style="position:absolute;top:7.48px;font-family:'Liberation Sans', sans-serif;font-size:14.2px;line-height:0;white-space:pre;color:#000;font-weight:normal;right:8.8px;">236.64</div>
</div>
<div style="position:absolute;left:1068px;top:744px;width:106px;height:26px;overflow:hidden;">
<div style="position:absolute;top:7.48px;font-family:'Liberation Sans', sans-serif;font-size:14.2px;line-height:0;white-space:pre;color:#000;font-weight:normal;left:4.0px;">USD</div>
</div>
<div style="position:absolute;left:1175px;top:744px;width:106px;height:26px;overflow:hidden;">
<div style="position:absolute;top:7.48px;font-family:'Liberation Sans', sans-serif;font-size:14.2px;line-height:0;white-space:pre;color:#000;font-weight:normal;right:4.0px;">19.5688</div>
</div>
<div style="position:absolute;left:161px;top:771px;width:99px;height:26px;overflow:hidden;">
<div style="position:absolute;top:7.48px;font-family:'Liberation Sans', sans-serif;font-size:14.2px;line-height:0;white-space:pre;color:#000;font-weight:normal;left:4.0px;">CGL5533</div>
</div>
<div style="position:absolute;left:261px;top:771px;width:99px;height:26px;overflow:hidden;">
<div style="position:absolute;top:7.48px;font-family:'Liberation Sans', sans-serif;font-size:14.2px;line-height:0;white-space:pre;color:#000;font-weight:normal;left:4.0px;">4/4/2025</div>
</div>
<div style="position:absolute;left:361px;top:771px;width:99px;height:26px;overflow:hidden;">
<div style="position:absolute;top:7.48px;font-family:'Liberation Sans', sans-serif;font-size:14.2px;line-height:0;white-space:pre;color:#000;font-weight:normal;left:4.0px;">GDL8378</div>
</div>
<div style="position:absolute;left:461px;top:771px;width:99px;height:26px;overflow:hidden;">
<div style="position:absolute;top:7.48px;font-family:'Liberation Sans', sans-serif;font-size:14.2px;line-height:0;white-space:pre;color:#000;font-weight:normal;left:4.0px;">2/20/2025</div>
</div>
<div style="position:absolute;left:561px;top:771px;width:99px;height:26px;overflow:hidden;">
<div style="position:absolute;top:7.48px;font-family:'Liberation Sans', sans-serif;font-size:14.2px;line-height:0;white-space:pre;color:#000;font-weight:normal;left:4.0px;">DESTILERIA TEREMANA DE AGAVE,  S. DE R.L. DE C.V.</div>
</div>
<div style="position:absolute;left:661px;top:771px;width:99px;height:26px;overflow:hidden;">
<div style="position:absolute;top:7.48px;font-family:'Liberation Sans', sans-serif;font-size:14.2px;line-height:0;white-space:pre;color:#000;font-weight:normal;left:8.8px;">$</div>
</div>
<div style="position:absolute;left:661px;top:771px;width:99px;height:26px;overflow:hidden;">
<div style="position:absolute;top:7.48px;font-family:'Liberation Sans', sans-serif;font-size:14.2px;line-height:0;white-space:pre;color:#000;font-weight:normal;right:8.8px;">67,507.44</div>
</div>
<div style="position:absolute;left:761px;top:771px;width:99px;height:26px;overflow:hidden;">
<div style="position:absolute;top:7.48px;font-family:'Liberation Sans', sans-serif;font-size:14.2px;line-height:0;white-space:pre;color:#000;font-weight:normal;left:8.8px;">$</div>
</div>
<div style="position:absolute;left:761px;top:771px;width:99px;height:26px;overflow:hidden;">
<div style="position:absolute;top:7.48px;font-family:'Liberation Sans', sans-serif;font-size:14.2px;line-height:0;white-space:pre;color:#000;font-weight:normal;right:8.8px;">10,801.19</div>
</div>
<div style="position:absolute;left:861px;top:771px;width:99px;height:26px;overflow:hidden;">
<div style="position:absolute;top:7.48px;font-family:'Liberation Sans', sans-serif;font-size:14.2px;line-height:0;white-space:pre;color:#000;font-weight:normal;left:8.8px;">$</div>
</div>
<div style="position:absolute;left:861px;top:771px;width:99px;height:26px;overflow:hidden;">
<div style="position:absolute;top:7.48px;font-family:'Liberation Sans', sans-serif;font-size:14.2px;line-height:0;white-space:pre;color:#000;font-weight:normal;right:8.8px;">78,308.63</div>
</div>
<div style="position:absolute;left:961px;top:771px;width:106px;height:26px;overflow:hidden;">
<div style="position:absolute;top:7.48px;font-family:'Liberation Sans', sans-serif;font-size:14.2px;line-height:0;white-space:pre;color:#000;font-weight:normal;left:8.8px;">$</div>
</div>
<div style="position:absolute;left:961px;top:771px;width:106px;height:26px;overflow:hidden;">
<div style="position:absolute;top:7.48px;font-family:'Liberation Sans', sans-serif;font-size:14.2px;line-height:0;white-space:pre;color:#000;font-weight:normal;right:8.8px;">3,828.00</div>
</div>
<div style="position:absolute;left:1068px;top:771px;width:106px;height:26px;overflow:hidden;">
<div style="position:absolute;top:7.48px;font-family:'Liberation Sans', sans-serif;font-size:14.2px;line-height:0;white-space:pre;color:#000;font-weight:normal;left:4.0px;">USD</div>
</div>
<div style="position:absolute;left:1175px;top:771px;width:106px;height:26px;overflow:hidden;">
<div style="position:absolute;top:7.48px;font-family:'Liberation Sans', sans-serif;font-size:14.2px;line-height:0;white-space:pre;color:#000;font-weight:normal;right:4.0px;">20.4568</div>
</div>
<div style="position:absolute;left:161px;top:798px;width:99px;height:26px;overflow:hidden;">
<div style="position:absolute;top:7.48px;font-family:'Liberation Sans', sans-serif;font-size:14.2px;line-height:0;white-space:pre;color:#000;font-weight:normal;left:4.0px;">CGL5533</div>
</div>
<div style="position:absolute;left:261px;top:798px;width:99px;height:26px;overflow:hidden;">
<div style="position:absolute;top:7.48px;font-family:'Liberation Sans', sans-serif;font-size:14.2px;line-height:0;white-space:pre;color:#000;font-weight:normal;left:4.0px;">4/4/2025</div>
</div>
<div style="position:absolute;left:361px;top:798px;width:99px;height:26px;overflow:hidden;">
<div style="position:absolute;top:7.48px;font-family:'Liberation Sans', sans-serif;font-size:14.2px;line-height:0;white-space:pre;color:#000;font-weight:normal;left:4.0px;">GDL8527</div>
</div>
<div style="position:absolute;left:461px;top:798px;width:99px;height:26px;overflow:hidden;">
<div style="position:absolute;top:7.48px;font-family:'Liberation Sans', sans-serif;font-size:14.2px;line-height:0;white-space:pre;color:#000;font-weight:normal;left:4.0px;">3/19/2025</div>
</div>
<div style="position:absolute;left:561px;top:798px;width:99px;height:26px;overflow:hidden;">
<div style="position:absolute;top:7.48px;font-family:'Liberation Sans', sans-serif;font-size:14.2px;line-height:0;white-space:pre;color:#000;font-weight:normal;left:4.0px;">DESTILERIA TEREMANA DE AGAVE,  S. DE R.L. DE C.V.</div>
</div>
<div style="position:absolute;left:661px;top:798px;width:99px;height:26px;overflow:hidden;">
<div style="position:absolute;top:7.48px;font-family:'Liberation Sans', sans-serif;font-size:14.2px;line-height:0;white-space:pre;color:#000;font-weight:normal;left:8.8px;">$</div>
</div>
<div style="position:absolute;left:661px;top:798px;width:99px;height:26px;overflow:hidden;">
<div style="position:absolute;top:7.48px;font-family:'Liberation Sans', sans-serif;font-size:14.2px;line-height:0;white-space:pre;color:#000;font-weight:normal;right:8.8px;">110,384.89</div>
</div>
<div style="position:absolute;left:761px;top:798px;width:99px;height:26px;overflow:hidden;">
<div style="position:absolute;top:7.48px;font-family:'Liberation Sans', sans-serif;font-size:14.2px;line-height:0;white-space:pre;color:#000;font-weight:normal;left:8.8px;">$</div>
</div>
<div style="position:absolute;left:761px;top:798px;width:99px;height:26px;overflow:hidden;">
<div style="position:absolute;top:7.48px;font-family:'Liberation Sans', sans-serif;font-size:14.2px;line-height:0;white-space:pre;color:#000;font-weight:normal;right:8.8px;">17,661.58</div>
</div>
<div style="position:absolute;left:861px;top:798px;width:99px;height:26px;overflow:hidden;">
<div style="position:absolute;top:7.48px;font-family:'Liberation Sans', sans-serif;font-size:14.2px;line-height:0;white-space:pre;color:#000;font-weight:normal;left:8.8px;">$</div>
</div>
<div style="position:absolute;left:861px;top:798px;width:99px;height:26px;overflow:hidden;">
<div style="position:absolute;top:7.48px;font-family:'Liberation Sans', sans-serif;font-size:14.2px;line-height:0;white-space:pre;color:#000;font-weight:normal;right:8.8px;">128,046.48</div>
</div>
<div style="position:absolute;left:961px;top:798px;width:106px;height:26px;overflow:hidden;">
<div style="position:absolute;top:7.48px;font-family:'Liberation Sans', sans-serif;font-size:14.2px;line-height:0;white-space:pre;color:#000;font-weight:normal;left:8.8px;">$</div>
</div>
<div style="position:absolute;left:961px;top:798px;width:106px;height:26px;overflow:hidden;">
<div style="position:absolute;top:7.48px;font-family:'Liberation Sans', sans-serif;font-size:14.2px;line-height:0;white-space:pre;color:#000;font-weight:normal;right:8.8px;">6,259.36</div>
</div>
<div style="position:absolute;left:1068px;top:798px;width:106px;height:26px;overflow:hidden;">
<div style="position:absolute;top:7.48px;font-family:'Liberation Sans', sans-serif;font-size:14.2px;line-height:0;white-space:pre;color:#000;font-weight:normal;left:4.0px;">USD</div>
</div>
<div style="position:absolute;left:1175px;top:798px;width:106px;height:26px;overflow:hidden;">
<div style="position:absolute;top:7.48px;font-family:'Liberation Sans', sans-serif;font-size:14.2px;line-height:0;white-space:pre;color:#000;font-weight:normal;right:4.0px;">20.4568</div>
</div>
<div style="position:absolute;left:161px;top:825px;width:99px;height:26px;overflow:hidden;">
<div style="position:absolute;top:7.48px;font-family:'Liberation Sans', sans-serif;font-size:14.2px;line-height:0;white-space:pre;color:#000;font-weight:normal;left:4.0px;">CGL5533</div>
</div>
<div style="position:absolute;left:261px;top:825px;width:99px;height:26px;overflow:hidden;">
<div style="position:absolute;top:7.48px;font-family:'Liberation Sans', sans-serif;font-size:14.2px;line-height:0;white-space:pre;color:#000;font-weight:normal;left:4.0px;">4/4/2025</div>
</div>
<div style="position:absolute;left:361px;top:825px;width:99px;height:26px;overflow:hidden;">
<div style="position:absolute;top:7.48px;font-family:'Liberation Sans', sans-serif;font-size:14.2px;line-height:0;white-space:pre;color:#000;font-weight:normal;left:4.0px;">GDL8527</div>
</div>
<div style="position:absolute;left:461px;top:825px;width:99px;height:26px;overflow:hidden;">
<div style="position:absolute;top:7.48px;font-family:'Liberation Sans', sans-serif;font-size:14.2px;line-height:0;white-space:pre;color:#000;font-weight:normal;left:4.0px;">3/19/2025</div>
</div>
<div style="position:absolute;left:561px;top:825px;width:399px;height:26px;overflow:hidden;">
<div style="position:absolute;top:7.48px;font-family:'Liberation Sans', sans-serif;font-size:14.2px;line-height:0;white-space:pre;color:#000;font-weight:normal;left:4.0px;">DESTILERIA TEREMANA DE AGAVE,  S. DE R.L. DE C.V.</div>
</div>
<div style="position:absolute;left:161px;top:852px;width:99px;height:26px;overflow:hidden;">
<div style="position:absolute;top:7.48px;font-family:'Liberation Sans', sans-serif;font-size:14.2px;line-height:0;white-space:pre;color:#000;font-weight:normal;left:4.0px;">CGL5538</div>
</div>
<div style="position:absolute;left:261px;top:852px;width:99px;height:26px;overflow:hidden;">
<div style="position:absolute;top:7.48px;font-family:'Liberation Sans', sans-serif;font-size:14.2px;line-height:0;white-space:pre;color:#000;font-weight:normal;left:4.0px;">4/7/2025</div>
</div>
<div style="position:absolute;left:361px;top:852px;width:99px;height:26px;overflow:hidden;">
<div style="position:absolute;top:7.48px;font-family:'Liberation Sans', sans-serif;font-size:14.2px;line-height:0;white-space:pre;color:#000;font-weight:normal;left:4.0px;">GDL8656</div>
</div>
<div style="position:absolute;left:461px;top:852px;width:99px;height:26px;overflow:hidden;">
<div style="position:absolute;top:7.48px;font-family:'Liberation Sans', sans-serif;font-size:14.2px;line-height:0;white-space:pre;color:#000;font-weight:normal;left:4.0px;">4/7/2025</div>
</div>
<div style="position:absolute;left:561px;top:852px;width:99px;height:26px;overflow:hidden;">
<div style="position:absolute;top:7.48px;font-family:'Liberation Sans', sans-serif;font-size:14.2px;line-height:0;white-space:pre;color:#000;font-weight:normal;left:4.0px;">ELIZABETH AGUILAR</div>
</div>
<div style="position:absolute;left:661px;top:852px;width:99px;height:26px;overflow:hidden;">
<div style="position:absolute;top:7.48px;font-family:'Liberation Sans', sans-serif;font-size:14.2px;line-height:0;white-space:pre;color:#000;font-weight:normal;left:8.8px;">$</div>
</div>
<div style="position:absolute;left:661px;top:852px;width:99px;height:26px;overflow:hidden;">
<div style="position:absolute;top:7.48px;font-family:'Liberation Sans', sans-serif;font-size:14.2px;line-height:0;white-space:pre;color:#000;font-weight:normal;right:8.8px;">1,568.24</div>
</div>
<div style="position:absolute;left:761px;top:852px;width:99px;height:26px;overflow:hidden;">
<div style="position:absolute;top:7.48px;font-family:'Liberation Sans', sans-serif;font-size:14.2px;line-height:0;white-space:pre;color:#000;font-weight:normal;left:8.8px;">$</div>
</div>
<div style="position:absolute;left:761px;top:852px;width:99px;height:26px;overflow:hidden;">
<div style="position:absolute;top:7.48px;font-family:'Liberation Sans', sans-serif;font-size:14.2px;line-height:0;white-space:pre;color:#000;font-weight:normal;right:8.8px;">250.92</div>
</div>
<div style="position:absolute;left:861px;top:852px;width:99px;height:26px;overflow:hidden;">
<div style="position:absolute;top:7.48px;font-family:'Liberation Sans', sans-serif;font-size:14.2px;line-height:0;white-space:pre;color:#000;font-weight:normal;left:8.8px;">$</div>
</div>
<div style="position:absolute;left:861px;top:852px;width:99px;height:26px;overflow:hidden;">
<div style="position:absolute;top:7.48px;font-family:'Liberation Sans', sans-serif;font-size:14.2px;line-height:0;white-space:pre;color:#000;font-weight:normal;right:8.8px;">1,819.16</div>
</div>
<div style="position:absolute;left:961px;top:852px;width:106px;height:26px;overflow:hidden;">
<div style="position:absolute;top:7.48px;font-family:'Liberation Sans', sans-serif;font-size:14.2px;line-height:0;white-space:pre;color:#000;font-weight:normal;left:4.0px;">MXN</div>
</div>
<div style="position:absolute;left:161px;top:879px;width:99px;height:26px;overflow:hidden;">
<div style="position:absolute;top:7.48px;font-family:'Liberation Sans', sans-serif;font-size:14.2px;line-height:0;white-space:pre;color:#000;font-weight:normal;left:4.0px;">CGL5523</div>
</div>
<div style="position:absolute;left:261px;top:879px;width:99px;height:26px;overflow:hidden;">
<div style="position:absolute;top:7.48px;font-family:'Liberation Sans', sans-serif;font-size:14.2px;line-height:0;white-space:pre;color:#000;font-weight:normal;left:4.0px;">4/1/2025</div>
</div>
<div style="position:absolute;left:361px;top:879px;width:99px;height:26px;overflow:hidden;">
<div style="position:absolute;top:7.48px;font-family:'Liberation Sans', sans-serif;font-size:14.2px;line-height:0;white-space:pre;color:#000;font-weight:normal;left:4.0px;">GDL8390</div>
</div>
<div style="position:absolute;left:461px;top:879px;width:99px;height:26px;overflow:hidden;">
<div style="position:absolute;top:7.48px;font-family:'Liberation Sans', sans-serif;font-size:14.2px;line-height:0;white-space:pre;color:#000;font-weight:normal;left:4.0px;">2/24/2025</div>
</div>
<div style="position:absolute;left:561px;top:879px;width:99px;height:26px;overflow:hidden;">
<div style="position:absolute;top:7.48px;font-family:'Liberation Sans', sans-serif;font-size:14.2px;line-height:0;white-space:pre;color:#000;font-weight:normal;left:4.0px;">GRUPO SOLAVE,  S.A. DE C.V.</div>
</div>
<div style="position:absolute;left:661px;top:879px;width:99px;height:26px;overflow:hidden;">
<div style="position:absolute;top:7.48px;font-family:'Liberation Sans', sans-serif;font-size:14.2px;line-height:0;white-space:pre;color:#000;font-weight:normal;left:8.8px;">$</div>
</div>
<div style="position:absolute;left:661px;top:879px;width:99px;height:26px;overflow:hidden;">
<div style="position:absolute;top:7.48px;font-family:'Liberation Sans', sans-serif;font-size:14.2px;line-height:0;white-space:pre;color:#000;font-weight:normal;right:8.8px;">12,113.60</div>
</div>
<div style="position:absolute;left:761px;top:879px;width:99px;height:26px;overflow:hidden;">
<div style="position:absolute;top:7.48px;font-family:'Liberation Sans', sans-serif;font-size:14.2px;line-height:0;white-space:pre;color:#000;font-weight:normal;left:8.8px;">$</div>
</div>
<div style="position:absolute;left:761px;top:879px;width:99px;height:26px;overflow:hidden;">
<div style="position:absolute;top:7.48px;font-family:'Liberation Sans', sans-serif;font-size:14.2px;line-height:0;white-space:pre;color:#000;font-weight:normal;right:8.8px;">1,938.18</div>
</div>
<div style="position:absolute;left:861px;top:879px;width:99px;height:26px;overflow:hidden;">
<div style="position:absolute;top:7.48px;font-family:'Liberation Sans', sans-serif;font-size:14.2px;line-height:0;white-space:pre;color:#000;font-weight:normal;left:8.8px;">$</div>
</div>
<div style="position:absolute;left:861px;top:879px;width:99px;height:26px;overflow:hidden;">
<div style="position:absolute;top:7.48px;font-family:'Liberation Sans', sans-serif;font-size:14.2px;line-height:0;white-space:pre;color:#000;font-weight:normal;right:8.8px;">14,051.78</div>
</div>
<div style="position:absolute;left:961px;top:879px;width:106px;height:26px;overflow:hidden;">
<div style="position:absolute;top:7.48px;font-family:'Liberation Sans', sans-serif;font-size:14.2px;line-height:0;white-space:pre;color:#000;font-weight:normal;left:4.0px;"> MXN</div>
</div>
<div style="position:absolute;left:161px;top:906px;width:99px;height:27px;overflow:hidden;">
<div style="position:absolute;top:7.48px;font-family:'Liberation Sans', sans-serif;font-size:14.2px;line-height:0;white-space:pre;color:#000;font-weight:normal;left:4.0px;">CGL5523</div>
</div>
<div style="position:absolute;left:261px;top:906px;width:99px;height:27px;overflow:hidden;">
<div style="position:absolute;top:7.48px;font-family:'Liberation Sans', sans-serif;font-size:14.2px;line-height:0;white-space:pre;color:#000;font-weight:normal;left:4.0px;">4/1/2025</div>
</div>
<div style="position:absolute;left:361px;top:906px;width:99px;height:27px;overflow:hidden;">
<div style="position:absolute;top:7.48px;font-family:'Liberation Sans', sans-serif;font-size:14.2px;line-height:0;white-space:pre;color:#000;font-weight:normal;left:4.0px;">GDL8390</div>
</div>
<div style="position:absolute;left:461px;top:906px;width:99px;height:27px;overflow:hidden;">
<div style="position:absolute;top:7.48px;font-family:'Liberation Sans', sans-serif;font-size:14.2px;line-height:0;white-space:pre;color:#000;font-weight:normal;left:4.0px;">2/24/2025</div>
</div>
<div style="position:absolute;left:561px;top:906px;width:399px;height:27px;overflow:hidden;">
<div style="position:absolute;top:7.48px;font-family:'Liberation Sans', sans-serif;font-size:14.2px;line-height:0;white-space:pre;color:#000;font-weight:normal;left:4.0px;">GRUPO SOLAVE,  S.A. DE C.V.</div>
</div>
<div style="position:absolute;left:161px;top:934px;width:99px;height:27px;overflow:hidden;">
<div style="position:absolute;top:7.48px;font-family:'Liberation Sans', sans-serif;font-size:14.2px;line-height:0;white-space:pre;color:#000;font-weight:normal;left:4.0px;">CGL5523</div>
</div>
<div style="position:absolute;left:261px;top:934px;width:99px;height:27px;overflow:hidden;">
<div style="position:absolute;top:7.48px;font-family:'Liberation Sans', sans-serif;font-size:14.2px;line-height:0;white-space:pre;color:#000;font-weight:normal;left:4.0px;">4/1/2025</div>
</div>
<div style="position:absolute;left:361px;top:934px;width:99px;height:27px;overflow:hidden;">
<div style="position:absolute;top:7.48px;font-family:'Liberation Sans', sans-serif;font-size:14.2px;line-height:0;white-space:pre;color:#000;font-weight:normal;left:4.0px;">GDL8390</div>
</div>
<div style="position:absolute;left:461px;top:934px;width:99px;height:27px;overflow:hidden;">
<div style="position:absolute;top:7.48px;font-family:'Liberation Sans', sans-serif;font-size:14.2px;line-height:0;white-space:pre;color:#000;font-weight:normal;left:4.0px;">2/24/2025</div>
</div>
<div style="position:absolute;left:561px;top:934px;width:399px;height:27px;overflow:hidden;">
<div style="position:absolute;top:7.48px;font-family:'Liberation Sans', sans-serif;font-size:14.2px;line-height:0;white-space:pre;color:#000;font-weight:normal;left:4.0px;">GRUPO SOLAVE,  S.A. DE C.V.</div>
</div>
<div style="position:absolute;left:161px;top:962px;width:99px;height:27px;overflow:hidden;">
<div style="position:absolute;top:7.48px;font-family:'Liberation Sans', sans-serif;font-size:14.2px;line-height:0;white-space:pre;color:#000;font-weight:normal;left:4.0px;">CGL5523</div>
</div>
<div style="position:absolute;left:261px;top:962px;width:99px;height:27px;overflow:hidden;">
<div style="position:absolute;top:7.48px;font-family:'Liberation Sans', sans-serif;font-size:14.2px;line-height:0;white-space:pre;color:#000;font-weight:normal;left:4.0px;">4/1/2025</div>
</div>
<div style="position:absolute;left:361px;top:962px;width:99px;height:27px;overflow:hidden;">
<div style="position:absolute;top:7.48px;font-family:'Liberation Sans', sans-serif;font-size:14.2px;line-height:0;white-space:pre;color:#000;font-weight:normal;left:4.0px;">GDL8390</div>
</div>
<div style="position:absolute;left:461px;top:962px;width:99px;height:27px;overflow:hidden;">
<div style="position:absolute;top:7.48px;font-family:'Liberation Sans', sans-serif;font-size:14.2px;line-height:0;white-space:pre;color:#000;font-weight:normal;left:4.0px;">2/24/2025</div>
</div>
<div style="position:absolute;left:561px;top:962px;width:399px;height:27px;overflow:hidden;">
<div style="position:absolute;top:7.48px;font-family:'Liberation Sans', sans-serif;font-size:14.2px;line-height:0;white-space:pre;color:#000;font-weight:normal;left:4.0px;">GRUPO SOLAVE,  S.A. DE C.V.</div>
</div>
<div style="position:absolute;left:161px;top:990px;width:99px;height:27px;overflow:hidden;">
<div style="position:absolute;top:7.48px;font-family:'Liberation Sans', sans-serif;font-size:14.2px;line-height:0;white-space:pre;color:#000;font-weight:normal;left:4.0px;">CGL5523</div>
</div>
<div style="position:absolute;left:261px;top:990px;width:99px;height:27px;overflow:hidden;">
<div style="position:absolute;top:7.48px;font-family:'Liberation Sans', sans-serif;font-size:14.2px;line-height:0;white-space:pre;color:#000;font-weight:normal;left:4.0px;">4/1/2025</div>
</div>
<div style="position:absolute;left:361px;top:990px;width:99px;height:27px;overflow:hidden;">
<div style="position:absolute;top:7.48px;font-family:'Liberation Sans', sans-serif;font-size:14.2px;line-height:0;white-space:pre;color:#000;font-weight:normal;left:4.0px;">GDL8435</div>
</div>
<div style="position:absolute;left:461px;top:990px;width:99px;height:27px;overflow:hidden;">
<div style="position:absolute;top:7.48px;font-family:'Liberation Sans', sans-serif;font-size:14.2px;line-height:0;white-space:pre;color:#000;font-weight:normal;left:4.0px;">2/28/2025</div>
</div>
<div style="position:absolute;left:561px;top:990px;width:99px;height:27px;overflow:hidden;">
<div style="position:absolute;top:7.48px;font-family:'Liberation Sans', sans-serif;font-size:14.2px;line-height:0;white-space:pre;color:#000;font-weight:normal;left:4.0px;">GRUPO SOLAVE,  S.A. DE C.V.</div>
</div>
<div style="position:absolute;left:661px;top:990px;width:99px;height:27px;overflow:hidden;">
<div style="position:absolute;top:7.48px;font-family:'Liberation Sans', sans-serif;font-size:14.2px;line-height:0;white-space:pre;color:#000;font-weight:normal;left:8.8px;">$</div>
</div>
<div style="position:absolute;left:661px;top:990px;width:99px;height:27px;overflow:hidden;">
<div style="position:absolute;top:7.48px;font-family:'Liberation Sans', sans-serif;font-size:14.2px;line-height:0;white-space:pre;color:#000;font-weight:normal;right:8.8px;">7,279.80</div>
</div>
<div style="position:absolute;left:761px;top:990px;width:99px;height:27px;overflow:hidden;">
<div style="position:absolute;top:7.48px;font-family:'Liberation Sans', sans-serif;font-size:14.2px;line-height:0;white-space:pre;color:#000;font-weight:normal;left:8.8px;">$</div>
</div>
<div style="position:absolute;left:761px;top:990px;width:99px;height:27px;overflow:hidden;">
<div style="position:absolute;top:7.48px;font-family:'Liberation Sans', sans-serif;font-size:14.2px;line-height:0;white-space:pre;color:#000;font-weight:normal;right:8.8px;">1,164.77</div>
</div>
<div style="position:absolute;left:861px;top:990px;width:99px;height:27px;overflow:hidden;">
<div style="position:absolute;top:7.48px;font-family:'Liberation Sans', sans-serif;font-size:14.2px;line-height:0;white-space:pre;color:#000;font-weight:normal;left:8.8px;">$</div>
</div>
<div style="position:absolute;left:861px;top:990px;width:99px;height:27px;overflow:hidden;">
<div style="position:absolute;top:7.48px;font-family:'Liberation Sans', sans-serif;font-size:14.2px;line-height:0;white-space:pre;color:#000;font-weight:normal;right:8.8px;">8,444.57</div>
</div>
<div style="position:absolute;left:961px;top:990px;width:106px;height:27px;overflow:hidden;">
<div style="position:absolute;top:7.48px;font-family:'Liberation Sans', sans-serif;font-size:14.2px;line-height:0;white-space:pre;color:#000;font-weight:normal;left:4.0px;"> MXN</div>
</div>
<div style="position:absolute;left:161px;top:1018px;width:99px;height:27px;overflow:hidden;">
<div style="position:absolute;top:7.48px;font-family:'Liberation Sans', sans-serif;font-size:14.2px;line-height:0;white-space:pre;color:#000;font-weight:normal;left:4.0px;">CGL5523</div>
</div>
<div style="position:absolute;left:261px;top:1018px;width:99px;height:27px;overflow:hidden;">
<div style="position:absolute;top:7.48px;font-family:'Liberation Sans', sans-serif;font-size:14.2px;line-height:0;white-space:pre;color:#000;font-weight:normal;left:4.0px;">4/1/2025</div>
</div>
<div style="position:absolute;left:361px;top:1018px;width:99px;height:27px;overflow:hidden;">
<div style="position:absolute;top:7.48px;font-family:'Liberation Sans', sans-serif;font-size:14.2px;line-height:0;white-space:pre;color:#000;font-weight:normal;left:4.0px;">GDL8435</div>
</div>
<div style="position:absolute;left:461px;top:1018px;width:99px;height:27px;overflow:hidden;">
<div style="position:absolute;top:7.48px;font-family:'Liberation Sans', sans-serif;font-size:14.2px;line-height:0;white-space:pre;color:#000;font-weight:normal;left:4.0px;">2/28/2025</div>
</div>
<div style="position:absolute;left:561px;top:1018px;width:399px;height:27px;overflow:hidden;">
<div style="position:absolute;top:7.48px;font-family:'Liberation Sans', sans-serif;font-size:14.2px;line-height:0;white-space:pre;color:#000;font-weight:normal;left:4.0px;">GRUPO SOLAVE,  S.A. DE C.V.</div>
</div>
<div style="position:absolute;left:161px;top:1046px;width:99px;height:27px;overflow:hidden;">
<div style="position:absolute;top:7.48px;font-family:'Liberation Sans', sans-serif;font-size:14.2px;line-height:0;white-space:pre;color:#000;font-weight:normal;left:4.0px;">CGL5523</div>
</div>
<div style="position:absolute;left:261px;top:1046px;width:99px;height:27px;overflow:hidden;">
<div style="position:absolute;top:7.48px;font-family:'Liberation Sans', sans-serif;font-size:14.2px;line-height:0;white-space:pre;color:#000;font-weight:normal;left:4.0px;">4/1/2025</div>
</div>
<div style="position:absolute;left:361px;top:1046px;width:99px;height:27px;overflow:hidden;">
<div style="position:absolute;top:7.48px;font-family:'Liberation Sans', sans-serif;font-size:14.2px;line-height:0;white-space:pre;color:#000;font-weight:normal;left:4.0px;">GDL8435</div>
</div>
<div style="position:absolute;left:461px;top:1046px;width:99px;height:27px;overflow:hidden;">
<div style="position:absolute;top:7.48px;font-family:'Liberation Sans', sans-serif;font-size:14.2px;line-height:0;white-space:pre;color:#000;font-weight:normal;left:4.0px;">2/28/2025</div>
</div>
<div style="position:absolute;left:561px;top:1046px;width:399px;height:27px;overflow:hidden;">
<div style="position:absolute;top:7.48px;font-family:'Liberation Sans', sans-serif;font-size:14.2px;line-height:0;white-space:pre;color:#000;font-weight:normal;left:4.0px;">GRUPO SOLAVE,  S.A. DE C.V.</div>
</div>
<div style="position:absolute;left:161px;top:1074px;width:99px;height:27px;overflow:hidden;">
<div style="position:absolute;top:7.48px;font-family:'Liberation Sans', sans-serif;font-size:14.2px;line-height:0;white-space:pre;color:#000;font-weight:normal;left:4.0px;">CGL5539</div>
</div>
<div style="position:absolute;left:261px;top:1074px;width:99px;height:27px;overflow:hidden;">
<div style="position:absolute;top:7.48px;font-family:'Liberation Sans', sans-serif;font-size:14.2px;line-height:0;white-space:pre;color:#000;font-weight:normal;left:4.0px;">4/8/2025</div>
</div>
<div style="position:absolute;left:361px;top:1074px;width:99px;height:27px;overflow:hidden;">
<div style="position:absolute;top:7.48px;font-family:'Liberation Sans', sans-serif;font-size:14.2px;line-height:0;white-space:pre;color:#000;font-weight:normal;left:4.0px;">GDL8451</div>
</div>
<div style="position:absolute;left:461px;top:1074px;width:99px;height:27px;overflow:hidden;">
<div style="position:absolute;top:7.48px;font-family:'Liberation Sans', sans-serif;font-size:14.2px;line-height:0;white-space:pre;color:#000;font-weight:normal;left:4.0px;">3/6/2025</div>
</div>
<div style="position:absolute;left:561px;top:1074px;width:99px;height:27px;overflow:hidden;">
<div style="position:absolute;top:7.48px;font-family:'Liberation Sans', sans-serif;font-size:14.2px;line-height:0;white-space:pre;color:#000;font-weight:normal;left:4.0px;">GRUPO SOLAVE,  S.A. DE C.V.</div>
</div>
<div style="position:absolute;left:661px;top:1074px;width:99px;height:27px;overflow:hidden;">
<div style="position:absolute;top:7.48px;font-family:'Liberation Sans', sans-serif;font-size:14.2px;line-height:0;white-space:pre;color:#000;font-weight:normal;left:8.8px;">$</div>
</div>
<div style="position:absolute;left:661px;top:1074px;width:99px;height:27px;overflow:hidden;">
<div style="position:absolute;top:7.48px;font-family:'Liberation Sans', sans-serif;font-size:14.2px;line-height:0;white-space:pre;color:#000;font-weight:normal;right:8.8px;">10,178.60</div>
</div>
<div style="position:absolute;left:761px;top:1074px;width:99px;height:27px;overflow:hidden;">
<div style="position:absolute;top:7.48px;font-family:'Liberation Sans', sans-serif;font-size:14.2px;line-height:0;white-space:pre;color:#000;font-weight:normal;left:8.8px;">$</div>
</div>
<div style="position:absolute;left:761px;top:1074px;width:99px;height:27px;overflow:hidden;">
<div style="position:absolute;top:7.48px;font-family:'Liberation Sans', sans-serif;font-size:14.2px;line-height:0;white-space:pre;color:#000;font-weight:normal;right:8.8px;">1,628.58</div>
</div>
<div style="position:absolute;left:861px;top:1074px;width:99px;height:27px;overflow:hidden;">
<div style="position:absolute;top:7.48px;font-family:'Liberation Sans', sans-serif;font-size:14.2px;line-height:0;white-space:pre;color:#000;font-weight:normal;left:8.8px;">$</div>
</div>
<div style="position:absolute;left:861px;top:1074px;width:99px;height:27px;overflow:hidden;">
<div style="position:absolute;top:7.48px;font-family:'Liberation Sans', sans-serif;font-size:14.2px;line-height:0;white-space:pre;color:#000;font-weight:normal;right:8.8px;">11,807.18</div>
</div>
<div style="position:absolute;left:961px;top:1074px;width:106px;height:27px;overflow:hidden;">
<div style="position:absolute;top:7.48px;font-family:'Liberation Sans', sans-serif;font-size:14.2px;line-height:0;white-space:pre;color:#000;font-weight:normal;left:4.0px;">MXN</div>
</div>
<div style="position:absolute;left:361px;top:1102px;width:99px;height:27px;overflow:hidden;">
<div style="position:absolute;top:7.48px;font-family:'Liberation Sans', sans-serif;font-size:14.2px;line-height:0;white-space:pre;color:#000;font-weight:normal;left:4.0px;">GDL8451</div>
</div>
<div style="position:absolute;left:461px;top:1102px;width:99px;height:27px;overflow:hidden;">
<div style="position:absolute;top:7.48px;font-family:'Liberation Sans', sans-serif;font-size:14.2px;line-height:0;white-space:pre;color:#000;font-weight:normal;left:4.0px;">3/6/2025</div>
</div>
<div style="position:absolute;left:561px;top:1102px;width:399px;height:27px;overflow:hidden;">
<div style="position:absolute;top:7.48px;font-family:'Liberation Sans', sans-serif;font-size:14.2px;line-height:0;white-space:pre;color:#000;font-weight:normal;left:4.0px;">GRUPO SOLAVE,  S.A. DE C.V.</div>
</div>
<div style="position:absolute;left:361px;top:1130px;width:99px;height:27px;overflow:hidden;">
<div style="position:absolute;top:7.48px;font-family:'Liberation Sans', sans-serif;font-size:14.2px;line-height:0;white-space:pre;color:#000;font-weight:normal;left:4.0px;">GDL8451</div>
</div>
<div style="position:absolute;left:461px;top:1130px;width:99px;height:27px;overflow:hidden;">
<div style="position:absolute;top:7.48px;font-family:'Liberation Sans', sans-serif;font-size:14.2px;line-height:0;white-space:pre;color:#000;font-weight:normal;left:4.0px;">3/6/2025</div>
</div>
<div style="position:absolute;left:561px;top:1130px;width:399px;height:27px;overflow:hidden;">
<div style="position:absolute;top:7.48px;font-family:'Liberation Sans', sans-serif;font-size:14.2px;line-height:0;white-space:pre;color:#000;font-weight:normal;left:4.0px;">GRUPO SOLAVE,  S.A. DE C.V.</div>
</div>
<div style="position:absolute;left:361px;top:1158px;width:99px;height:27px;overflow:hidden;">
<div style="position:absolute;top:7.48px;font-family:'Liberation Sans', sans-serif;font-size:14.2px;line-height:0;white-space:pre;color:#000;font-weight:normal;left:4.0px;">GDL8451</div>
</div>
<div style="position:absolute;left:461px;top:1158px;width:99px;height:27px;overflow:hidden;">
<div style="position:absolute;top:7.48px;font-family:'Liberation Sans', sans-serif;font-size:14.2px;line-height:0;white-space:pre;color:#000;font-weight:normal;left:4.0px;">3/6/2025</div>
</div>
<div style="position:absolute;left:561px;top:1158px;width:399px;height:27px;overflow:hidden;">
<div style="position:absolute;top:7.48px;font-family:'Liberation Sans', sans-serif;font-size:14.2px;line-height:0;white-space:pre;color:#000;font-weight:normal;left:4.0px;">GRUPO SOLAVE,  S.A. DE C.V.</div>
</div>
<div style="position:absolute;left:161px;top:1186px;width:99px;height:27px;overflow:hidden;">
<div style="position:absolute;top:7.48px;font-family:'Liberation Sans', sans-serif;font-size:14.2px;line-height:0;white-space:pre;color:#000;font-weight:normal;left:4.0px;">CGL5560</div>
</div>
<div style="position:absolute;left:261px;top:1186px;width:99px;height:27px;overflow:hidden;">
<div style="position:absolute;top:7.48px;font-family:'Liberation Sans', sans-serif;font-size:14.2px;line-height:0;white-space:pre;color:#000;font-weight:normal;left:4.0px;">4/14/2025</div>
</div>
<div style="position:absolute;left:361px;top:1186px;width:99px;height:27px;overflow:hidden;">
<div style="position:absolute;top:7.48px;font-family:'Liberation Sans', sans-serif;font-size:14.2px;line-height:0;white-space:pre;color:#000;font-weight:normal;left:4.0px;">GDL8479</div>
</div>
<div style="position:absolute;left:461px;top:1186px;width:99px;height:27px;overflow:hidden;">
<div style="position:absolute;top:7.48px;font-family:'Liberation Sans', sans-serif;font-size:14.2px;line-height:0;white-space:pre;color:#000;font-weight:normal;left:4.0px;">3/12/2025</div>
</div>
<div style="position:absolute;left:561px;top:1186px;width:99px;height:27px;overflow:hidden;">
<div style="position:absolute;top:7.48px;font-family:'Liberation Sans', sans-serif;font-size:14.2px;line-height:0;white-space:pre;color:#000;font-weight:normal;left:4.0px;">GRUPO SOLAVE,  S.A. DE C.V.</div>
</div>
<div style="position:absolute;left:661px;top:1186px;width:99px;height:27px;overflow:hidden;">
<div style="position:absolute;top:7.48px;font-family:'Liberation Sans', sans-serif;font-size:14.2px;line-height:0;white-space:pre;color:#000;font-weight:normal;left:8.8px;">$</div>
</div>
<div style="position:absolute;left:661px;top:1186px;width:99px;height:27px;overflow:hidden;">
<div style="position:absolute;top:7.48px;font-family:'Liberation Sans', sans-serif;font-size:14.2px;line-height:0;white-space:pre;color:#000;font-weight:normal;right:8.8px;">5,844.80</div>
</div>
<div style="position:absolute;left:761px;top:1186px;width:99px;height:27px;overflow:hidden;">
<div style="position:absolute;top:7.48px;font-family:'Liberation Sans', sans-serif;font-size:14.2px;line-height:0;white-space:pre;color:#000;font-weight:normal;left:8.8px;">$</div>
</div>
<div style="position:absolute;left:761px;top:1186px;width:99px;height:27px;overflow:hidden;">
<div style="position:absolute;top:7.48px;font-family:'Liberation Sans', sans-serif;font-size:14.2px;line-height:0;white-space:pre;color:#000;font-weight:normal;right:8.8px;">935.17</div>
</div>
<div style="position:absolute;left:861px;top:1186px;width:99px;height:27px;overflow:hidden;">
<div style="position:absolute;top:7.48px;font-family:'Liberation Sans', sans-serif;font-size:14.2px;line-height:0;white-space:pre;color:#000;font-weight:normal;left:8.8px;">$</div>
</div>
<div style="position:absolute;left:861px;top:1186px;width:99px;height:27px;overflow:hidden;">
<div style="position:absolute;top:7.48px;font-family:'Liberation Sans', sans-serif;font-size:14.2px;line-height:0;white-space:pre;color:#000;font-weight:normal;right:8.8px;">6,779.97</div>
</div>
<div style="position:absolute;left:961px;top:1186px;width:106px;height:27px;overflow:hidden;">
<div style="position:absolute;top:7.48px;font-family:'Liberation Sans', sans-serif;font-size:14.2px;line-height:0;white-space:pre;color:#000;font-weight:normal;left:4.0px;"> MXN</div>
</div>
<div style="position:absolute;left:361px;top:1214px;width:99px;height:27px;overflow:hidden;">
<div style="position:absolute;top:7.48px;font-family:'Liberation Sans', sans-serif;font-size:14.2px;line-height:0;white-space:pre;color:#000;font-weight:normal;left:4.0px;">GDL8479</div>
</div>
<div style="position:absolute;left:461px;top:1214px;width:99px;height:27px;overflow:hidden;">
<div style="position:absolute;top:7.48px;font-family:'Liberation Sans', sans-serif;font-size:14.2px;line-height:0;white-space:pre;color:#000;font-weight:normal;left:4.0px;">3/12/2025</div>
</div>
<div style="position:absolute;left:561px;top:1214px;width:399px;height:27px;overflow:hidden;">
<div style="position:absolute;top:7.48px;font-family:'Liberation Sans', sans-serif;font-size:14.2px;line-height:0;white-space:pre;color:#000;font-weight:normal;left:4.0px;">GRUPO SOLAVE,  S.A. DE C.V.</div>
</div>
<div style="position:absolute;left:161px;top:1242px;width:99px;height:27px;overflow:hidden;">
<div style="position:absolute;top:7.48px;font-family:'Liberation Sans', sans-serif;font-size:14.2px;line-height:0;white-space:pre;color:#000;font-weight:normal;left:4.0px;">CGL5560</div>
</div>
<div style="position:absolute;left:261px;top:1242px;width:99px;height:27px;overflow:hidden;">
<div style="position:absolute;top:7.48px;font-family:'Liberation Sans', sans-serif;font-size:14.2px;line-height:0;white-space:pre;color:#000;font-weight:normal;left:4.0px;">4/14/2025</div>
</div>
<div style="position:absolute;left:361px;top:1242px;width:99px;height:27px;overflow:hidden;">
<div style="position:absolute;top:7.48px;font-family:'Liberation Sans', sans-serif;font-size:14.2px;line-height:0;white-space:pre;color:#000;font-weight:normal;left:4.0px;">GDL8507</div>
</div>
<div style="position:absolute;left:461px;top:1242px;width:99px;height:27px;overflow:hidden;">
<div style="position:absolute;top:7.48px;font-family:'Liberation Sans', sans-serif;font-size:14.2px;line-height:0;white-space:pre;color:#000;font-weight:normal;left:4.0px;">3/15/2025</div>
</div>
<div style="position:absolute;left:561px;top:1242px;width:99px;height:27px;overflow:hidden;">
<div style="position:absolute;top:7.48px;font-family:'Liberation Sans', sans-serif;font-size:14.2px;line-height:0;white-space:pre;color:#000;font-weight:normal;left:4.0px;">GRUPO SOLAVE,  S.A. DE C.V.</div>
</div>
<div style="position:absolute;left:661px;top:1242px;width:99px;height:27px;overflow:hidden;">
<div style="position:absolute;top:7.48px;font-family:'Liberation Sans', sans-serif;font-size:14.2px;line-height:0;white-space:pre;color:#000;font-weight:normal;left:8.8px;">$</div>
</div>
<div style="position:absolute;left:661px;top:1242px;width:99px;height:27px;overflow:hidden;">
<div style="position:absolute;top:7.48px;font-family:'Liberation Sans', sans-serif;font-size:14.2px;line-height:0;white-space:pre;color:#000;font-weight:normal;right:8.8px;">6,071.00</div>
</div>
<div style="position:absolute;left:761px;top:1242px;width:99px;height:27px;overflow:hidden;">
<div style="position:absolute;top:7.48px;font-family:'Liberation Sans', sans-serif;font-size:14.2px;line-height:0;white-space:pre;color:#000;font-weight:normal;left:8.8px;">$</div>
</div>
<div style="position:absolute;left:761px;top:1242px;width:99px;height:27px;overflow:hidden;">
<div style="position:absolute;top:7.48px;font-family:'Liberation Sans', sans-serif;font-size:14.2px;line-height:0;white-space:pre;color:#000;font-weight:normal;right:8.8px;">971.36</div>
</div>
<div style="position:absolute;left:861px;top:1242px;width:99px;height:27px;overflow:hidden;">
<div style="position:absolute;top:7.48px;font-family:'Liberation Sans', sans-serif;font-size:14.2px;line-height:0;white-space:pre;color:#000;font-weight:normal;left:8.8px;">$</div>
</div>
<div style="position:absolute;left:861px;top:1242px;width:99px;height:27px;overflow:hidden;">
<div style="position:absolute;top:7.48px;font-family:'Liberation Sans', sans-serif;font-size:14.2px;line-height:0;white-space:pre;color:#000;font-weight:normal;right:8.8px;">7,042.36</div>
</div>
<div style="position:absolute;left:961px;top:1242px;width:106px;height:27px;overflow:hidden;">
<div style="position:absolute;top:7.48px;font-family:'Liberation Sans', sans-serif;font-size:14.2px;line-height:0;white-space:pre;color:#000;font-weight:normal;left:4.0px;"> MXN</div>
</div>
<div style="position:absolute;left:161px;top:1270px;width:99px;height:27px;overflow:hidden;">
<div style="position:absolute;top:7.48px;font-family:'Liberation Sans', sans-serif;font-size:14.2px;line-height:0;white-space:pre;color:#000;font-weight:normal;left:4.0px;">CGL5560</div>
</div>
<div style="position:absolute;left:261px;top:1270px;width:99px;height:27px;overflow:hidden;">
<div style="position:absolute;top:7.48px;font-family:'Liberation Sans', sans-serif;font-size:14.2px;line-height:0;white-space:pre;color:#000;font-weight:normal;left:4.0px;">4/14/2025</div>
</div>
<div style="position:absolute;left:361px;top:1270px;width:99px;height:27px;overflow:hidden;">
<div style="position:absolute;top:7.48px;font-family:'Liberation Sans', sans-serif;font-size:14.2px;line-height:0;white-space:pre;color:#000;font-weight:normal;left:4.0px;">GDL8507</div>
</div>
<div style="position:absolute;left:461px;top:1270px;width:99px;height:27px;overflow:hidden;">
<div style="position:absolute;top:7.48px;font-family:'Liberation Sans', sans-serif;font-size:14.2px;line-height:0;white-space:pre;color:#000;font-weight:normal;left:4.0px;">3/15/2025</div>
</div>
<div style="position:absolute;left:561px;top:1270px;width:399px;height:27px;overflow:hidden;">
<div style="position:absolute;top:7.48px;font-family:'Liberation Sans', sans-serif;font-size:14.2px;line-height:0;white-space:pre;color:#000;font-weight:normal;left:4.0px;">GRUPO SOLAVE,  S.A. DE C.V.</div>
</div>
<div style="position:absolute;left:161px;top:1298px;width:99px;height:27px;overflow:hidden;">
<div style="position:absolute;top:7.48px;font-family:'Liberation Sans', sans-serif;font-size:14.2px;line-height:0;white-space:pre;color:#000;font-weight:normal;left:4.0px;">CGL5560</div>
</div>
<div style="position:absolute;left:261px;top:1298px;width:99px;height:27px;overflow:hidden;">
<div style="position:absolute;top:7.48px;font-family:'Liberation Sans', sans-serif;font-size:14.2px;line-height:0;white-space:pre;color:#000;font-weight:normal;left:4.0px;">4/14/2025</div>
</div>
<div style="position:absolute;left:361px;top:1298px;width:99px;height:27px;overflow:hidden;">
<div style="position:absolute;top:7.48px;font-family:'Liberation Sans', sans-serif;font-size:14.2px;line-height:0;white-space:pre;color:#000;font-weight:normal;left:4.0px;">GDL8507</div>
</div>
<div style="position:absolute;left:461px;top:1298px;width:99px;height:27px;overflow:hidden;">
<div style="position:absolute;top:7.48px;font-family:'Liberation Sans', sans-serif;font-size:14.2px;line-height:0;white-space:pre;color:#000;font-weight:normal;left:4.0px;">3/15/2025</div>
</div>
<div style="position:absolute;left:561px;top:1298px;width:399px;height:27px;overflow:hidden;">
<div style="position:absolute;top:7.48px;font-family:'Liberation Sans', sans-serif;font-size:14.2px;line-height:0;white-space:pre;color:#000;font-weight:normal;left:4.0px;">GRUPO SOLAVE,  S.A. DE C.V.</div>
</div>
<div style="position:absolute;left:161px;top:1326px;width:99px;height:27px;overflow:hidden;">
<div style="position:absolute;top:7.48px;font-family:'Liberation Sans', sans-serif;font-size:14.2px;line-height:0;white-space:pre;color:#000;font-weight:normal;left:4.0px;">CGL5565</div>
</div>
<div style="position:absolute;left:261px;top:1326px;width:99px;height:27px;overflow:hidden;">
<div style="position:absolute;top:7.48px;font-family:'Liberation Sans', sans-serif;font-size:14.2px;line-height:0;white-space:pre;color:#000;font-weight:normal;left:4.0px;">4/15/2025</div>
</div>
<div style="position:absolute;left:361px;top:1326px;width:99px;height:27px;overflow:hidden;">
<div style="position:absolute;top:7.48px;font-family:'Liberation Sans', sans-serif;font-size:14.2px;line-height:0;white-space:pre;color:#000;font-weight:normal;left:4.0px;">GDL8711</div>
</div>
<div style="position:absolute;left:461px;top:1326px;width:99px;height:27px;overflow:hidden;">
<div style="position:absolute;top:7.48px;font-family:'Liberation Sans', sans-serif;font-size:14.2px;line-height:0;white-space:pre;color:#000;font-weight:normal;left:4.0px;">4/15/2025</div>
</div>
<div style="position:absolute;left:561px;top:1326px;width:99px;height:27px;overflow:hidden;">
<div style="position:absolute;top:7.48px;font-family:'Liberation Sans', sans-serif;font-size:14.2px;line-height:0;white-space:pre;color:#000;font-weight:normal;left:4.0px;">MERRY HOME, S.A. DE C.V.</div>
</div>
<div style="position:absolute;left:661px;top:1326px;width:99px;height:27px;overflow:hidden;">
<div style="position:absolute;top:7.48px;font-family:'Liberation Sans', sans-serif;font-size:14.2px;line-height:0;white-space:pre;color:#000;font-weight:normal;left:8.8px;">$</div>
</div>
<div style="position:absolute;left:661px;top:1326px;width:99px;height:27px;overflow:hidden;">
<div style="position:absolute;top:7.48px;font-family:'Liberation Sans', sans-serif;font-size:14.2px;line-height:0;white-space:pre;color:#000;font-weight:normal;right:8.8px;">44,220.00</div>
</div>
<div style="position:absolute;left:761px;top:1326px;width:99px;height:27px;overflow:hidden;">
<div style="position:absolute;top:7.48px;font-family:'Liberation Sans', sans-serif;font-size:14.2px;line-height:0;white-space:pre;color:#000;font-weight:normal;left:8.8px;">$</div>
</div>
<div style="position:absolute;left:761px;top:1326px;width:99px;height:27px;overflow:hidden;">
<div style="position:absolute;top:7.48px;font-family:'Liberation Sans', sans-serif;font-size:14.2px;line-height:0;white-space:pre;color:#000;font-weight:normal;right:8.8px;">7,075.20</div>
</div>
<div style="position:absolute;left:861px;top:1326px;width:99px;height:27px;overflow:hidden;">
<div style="position:absolute;top:7.48px;font-family:'Liberation Sans', sans-serif;font-size:14.2px;line-height:0;white-space:pre;color:#000;font-weight:normal;left:8.8px;">$</div>
</div>
<div style="position:absolute;left:861px;top:1326px;width:99px;height:27px;overflow:hidden;">
<div style="position:absolute;top:7.48px;font-family:'Liberation Sans', sans-serif;font-size:14.2px;line-height:0;white-space:pre;color:#000;font-weight:normal;right:8.8px;">51,295.20</div>
</div>
<div style="position:absolute;left:961px;top:1326px;width:106px;height:27px;overflow:hidden;">
<div style="position:absolute;top:7.48px;font-family:'Liberation Sans', sans-serif;font-size:14.2px;line-height:0;white-space:pre;color:#000;font-weight:normal;left:4.0px;"> MXN</div>
</div>
<div style="position:absolute;left:161px;top:1354px;width:99px;height:27px;overflow:hidden;">
<div style="position:absolute;top:7.48px;font-family:'Liberation Sans', sans-serif;font-size:14.2px;line-height:0;white-space:pre;color:#000;font-weight:normal;left:4.0px;">CGL5565</div>
</div>
<div style="position:absolute;left:261px;top:1354px;width:99px;height:27px;overflow:hidden;">
<div style="position:absolute;top:7.48px;font-family:'Liberation Sans', sans-serif;font-size:14.2px;line-height:0;white-space:pre;color:#000;font-weight:normal;left:4.0px;">4/15/2025</div>
</div>
<div style="position:absolute;left:361px;top:1354px;width:99px;height:27px;overflow:hidden;">
<div style="position:absolute;top:7.48px;font-family:'Liberation Sans', sans-serif;font-size:14.2px;line-height:0;white-space:pre;color:#000;font-weight:normal;left:4.0px;">GDL8711</div>
</div>
<div style="position:absolute;left:461px;top:1354px;width:99px;height:27px;overflow:hidden;">
<div style="position:absolute;top:7.48px;font-family:'Liberation Sans', sans-serif;font-size:14.2px;line-height:0;white-space:pre;color:#000;font-weight:normal;left:4.0px;">4/15/2025</div>
</div>
<div style="position:absolute;left:561px;top:1354px;width:399px;height:27px;overflow:hidden;">
<div style="position:absolute;top:7.48px;font-family:'Liberation Sans', sans-serif;font-size:14.2px;line-height:0;white-space:pre;color:#000;font-weight:normal;left:4.0px;">MERRY HOME, S.A. DE C.V.</div>
</div>
<div style="position:absolute;left:1382px;top:420px;width:99px;height:26px;overflow:hidden;">
<div style="position:absolute;top:7.48px;font-family:'Liberation Sans', sans-serif;font-size:14.2px;line-height:0;white-space:pre;color:#000;font-weight:normal;left:4.0px;">GDL8194</div>
</div>
<div style="position:absolute;left:1482px;top:420px;width:99px;height:26px;overflow:hidden;">
<div style="position:absolute;top:7.48px;font-family:'Liberation Sans', sans-serif;font-size:14.2px;line-height:0;white-space:pre;color:#000;font-weight:normal;left:-450.50px;width:1000px;text-align:center;">1/23/2025</div>
</div>
<div style="position:absolute;left:1582px;top:420px;width:99px;height:26px;overflow:hidden;">
<div style="position:absolute;top:7.48px;font-family:'Liberation Sans', sans-serif;font-size:14.2px;line-height:0;white-space:pre;color:#000;font-weight:normal;left:4.0px;">ALMIDONES MEXICANOS, S.A. DE C.V.</div>
</div>
<div style="position:absolute;left:1682px;top:420px;width:99px;height:26px;overflow:hidden;">
<div style="position:absolute;top:7.48px;font-family:'Liberation Sans', sans-serif;font-size:14.2px;line-height:0;white-space:pre;color:#000;font-weight:normal;left:4.0px;">71</div>
</div>
<div style="position:absolute;left:1782px;top:419px;width:99px;height:27px;overflow:hidden;">
<div style="position:absolute;top:8.48px;font-family:'Liberation Sans', sans-serif;font-size:14.2px;line-height:0;white-space:pre;color:#000;font-weight:normal;left:4.0px;">LÁMINA DE CARTÓN</div>
</div>
<div style="position:absolute;left:1882px;top:420px;width:99px;height:26px;overflow:hidden;">
<div style="position:absolute;top:7.48px;font-family:'Liberation Sans', sans-serif;font-size:14.2px;line-height:0;white-space:pre;color:#000;font-weight:normal;left:4.0px;">4/10/2025</div>
</div>
<div style="position:absolute;left:1982px;top:420px;width:72px;height:26px;overflow:hidden;">
<div style="position:absolute;top:7.48px;font-family:'Liberation Sans', sans-serif;font-size:14.2px;line-height:0;white-space:pre;color:#000;font-weight:normal;left:4.0px;">77</div>
</div>
<div style="position:absolute;left:2055px;top:420px;width:99px;height:26px;overflow:hidden;">
<div style="position:absolute;top:7.48px;font-family:'Liberation Sans', sans-serif;font-size:14.2px;line-height:0;white-space:pre;color:#000;font-weight:normal;left:8.8px;">$</div>
</div>
<div style="position:absolute;left:2055px;top:420px;width:99px;height:26px;overflow:hidden;">
<div style="position:absolute;top:7.48px;font-family:'Liberation Sans', sans-serif;font-size:14.2px;line-height:0;white-space:pre;color:#000;font-weight:normal;right:8.8px;">13,250.00</div>
</div>
<div style="position:absolute;left:2155px;top:420px;width:99px;height:26px;overflow:hidden;">
<div style="position:absolute;top:7.48px;font-family:'Liberation Sans', sans-serif;font-size:14.2px;line-height:0;white-space:pre;color:#000;font-weight:normal;left:4.0px;">1000</div>
</div>
<div style="position:absolute;left:2255px;top:420px;width:99px;height:26px;overflow:hidden;">
<div style="position:absolute;top:7.48px;font-family:'Liberation Sans', sans-serif;font-size:14.2px;line-height:0;white-space:pre;color:#000;font-weight:normal;left:8.8px;">$</div>
</div>
<div style="position:absolute;left:2255px;top:420px;width:99px;height:26px;overflow:hidden;">
<div style="position:absolute;top:7.48px;font-family:'Liberation Sans', sans-serif;font-size:14.2px;line-height:0;white-space:pre;color:#000;font-weight:normal;right:8.8px;">13.25</div>
</div>
<div style="position:absolute;left:2355px;top:420px;width:99px;height:26px;overflow:hidden;">
<div style="position:absolute;top:17.58px;font-family:'Liberation Sans', sans-serif;font-size:14.2px;line-height:0;white-space:pre;color:#000;font-weight:normal;left:8.8px;">$</div>
</div>
<div style="position:absolute;left:2355px;top:420px;width:99px;height:26px;overflow:hidden;">
<div style="position:absolute;top:17.58px;font-family:'Liberation Sans', sans-serif;font-size:14.2px;line-height:0;white-space:pre;color:#000;font-weight:normal;right:8.8px;">12.99</div>
</div>
<div style="position:absolute;left:2455px;top:420px;width:99px;height:26px;overflow:hidden;">
<div style="position:absolute;top:17.58px;font-family:'Liberation Sans', sans-serif;font-size:14.2px;line-height:0;white-space:pre;color:#000;font-weight:normal;left:-450.50px;width:1000px;text-align:center;">1.92%</div>
</div>
<div style="position:absolute;left:2555px;top:420px;width:99px;height:26px;overflow:hidden;">
<div style="position:absolute;top:17.58px;font-family:'Liberation Sans', sans-serif;font-size:14.2px;line-height:0;white-space:pre;color:#000;font-weight:normal;left:-450.50px;width:1000px;text-align:center;">#REF!</div>
</div>
<div style="position:absolute;left:2655px;top:420px;width:106px;height:26px;overflow:hidden;">
<div style="position:absolute;top:17.58px;font-family:'Liberation Sans', sans-serif;font-size:14.2px;line-height:0;white-space:pre;color:#000;font-weight:normal;left:-447.00px;width:1000px;text-align:center;">6</div>
</div>
<div style="position:absolute;left:1382px;top:447px;width:99px;height:26px;overflow:hidden;">
<div style="position:absolute;top:7.48px;font-family:'Liberation Sans', sans-serif;font-size:14.2px;line-height:0;white-space:pre;color:#000;font-weight:normal;left:4.0px;">GDL8274</div>
</div>
<div style="position:absolute;left:1482px;top:447px;width:99px;height:26px;overflow:hidden;">
<div style="position:absolute;top:7.48px;font-family:'Liberation Sans', sans-serif;font-size:14.2px;line-height:0;white-space:pre;color:#000;font-weight:normal;left:-450.50px;width:1000px;text-align:center;">1/31/2025</div>
</div>
<div style="position:absolute;left:1582px;top:447px;width:99px;height:26px;overflow:hidden;">
<div style="position:absolute;top:7.48px;font-family:'Liberation Sans', sans-serif;font-size:14.2px;line-height:0;white-space:pre;color:#000;font-weight:normal;left:4.0px;">ALMIDONES MEXICANOS, S.A. DE C.V.</div>
</div>
<div style="position:absolute;left:1682px;top:447px;width:99px;height:26px;overflow:hidden;">
<div style="position:absolute;top:7.48px;font-family:'Liberation Sans', sans-serif;font-size:14.2px;line-height:0;white-space:pre;color:#000;font-weight:normal;left:4.0px;">71</div>
</div>
<div style="position:absolute;left:1782px;top:446px;width:99px;height:27px;overflow:hidden;">
<div style="position:absolute;top:8.48px;font-family:'Liberation Sans', sans-serif;font-size:14.2px;line-height:0;white-space:pre;color:#000;font-weight:normal;left:4.0px;">LÁMINA DE CARTÓN</div>
</div>
<div style="position:absolute;left:1882px;top:447px;width:99px;height:26px;overflow:hidden;">
<div style="position:absolute;top:7.48px;font-family:'Liberation Sans', sans-serif;font-size:14.2px;line-height:0;white-space:pre;color:#000;font-weight:normal;left:4.0px;">4/16/2025</div>
</div>
<div style="position:absolute;left:1982px;top:447px;width:72px;height:26px;overflow:hidden;">
<div style="position:absolute;top:7.48px;font-family:'Liberation Sans', sans-serif;font-size:14.2px;line-height:0;white-space:pre;color:#000;font-weight:normal;left:4.0px;">75</div>
</div>
<div style="position:absolute;left:2055px;top:447px;width:99px;height:26px;overflow:hidden;">
<div style="position:absolute;top:7.48px;font-family:'Liberation Sans', sans-serif;font-size:14.2px;line-height:0;white-space:pre;color:#000;font-weight:normal;left:8.8px;">$</div>
</div>
<div style="position:absolute;left:2055px;top:447px;width:99px;height:26px;overflow:hidden;">
<div style="position:absolute;top:7.48px;font-family:'Liberation Sans', sans-serif;font-size:14.2px;line-height:0;white-space:pre;color:#000;font-weight:normal;right:8.8px;">11,925.00</div>
</div>
<div style="position:absolute;left:2155px;top:447px;width:99px;height:26px;overflow:hidden;">
<div style="position:absolute;top:7.48px;font-family:'Liberation Sans', sans-serif;font-size:14.2px;line-height:0;white-space:pre;color:#000;font-weight:normal;left:4.0px;">900</div>
</div>
<div style="position:absolute;left:2255px;top:447px;width:99px;height:26px;overflow:hidden;">
<div style="position:absolute;top:7.48px;font-family:'Liberation Sans', sans-serif;font-size:14.2px;line-height:0;white-space:pre;color:#000;font-weight:normal;left:8.8px;">$</div>
</div>
<div style="position:absolute;left:2255px;top:447px;width:99px;height:26px;overflow:hidden;">
<div style="position:absolute;top:7.48px;font-family:'Liberation Sans', sans-serif;font-size:14.2px;line-height:0;white-space:pre;color:#000;font-weight:normal;right:8.8px;">13.25</div>
</div>
<div style="position:absolute;left:2355px;top:447px;width:99px;height:26px;overflow:hidden;">
<div style="position:absolute;top:17.58px;font-family:'Liberation Sans', sans-serif;font-size:14.2px;line-height:0;white-space:pre;color:#000;font-weight:normal;left:8.8px;">$</div>
</div>
<div style="position:absolute;left:2355px;top:447px;width:99px;height:26px;overflow:hidden;">
<div style="position:absolute;top:17.58px;font-family:'Liberation Sans', sans-serif;font-size:14.2px;line-height:0;white-space:pre;color:#000;font-weight:normal;right:8.8px;">12.97</div>
</div>
<div style="position:absolute;left:2455px;top:447px;width:99px;height:26px;overflow:hidden;">
<div style="position:absolute;top:17.58px;font-family:'Liberation Sans', sans-serif;font-size:14.2px;line-height:0;white-space:pre;color:#000;font-weight:normal;left:-450.50px;width:1000px;text-align:center;">2.14%</div>
</div>
<div style="position:absolute;left:2555px;top:447px;width:99px;height:26px;overflow:hidden;">
<div style="position:absolute;top:17.58px;font-family:'Liberation Sans', sans-serif;font-size:14.2px;line-height:0;white-space:pre;color:#000;font-weight:normal;left:-450.50px;width:1000px;text-align:center;">#REF!</div>
</div>
<div style="position:absolute;left:1382px;top:474px;width:99px;height:26px;overflow:hidden;">
<div style="position:absolute;top:7.48px;font-family:'Liberation Sans', sans-serif;font-size:14.2px;line-height:0;white-space:pre;color:#000;font-weight:normal;left:4.0px;">GDL8250</div>
</div>
<div style="position:absolute;left:1482px;top:474px;width:99px;height:26px;overflow:hidden;">
<div style="position:absolute;top:7.48px;font-family:'Liberation Sans', sans-serif;font-size:14.2px;line-height:0;white-space:pre;color:#000;font-weight:normal;left:-450.50px;width:1000px;text-align:center;">1/29/2025</div>
</div>
<div style="position:absolute;left:1582px;top:474px;width:99px;height:26px;overflow:hidden;">
<div style="position:absolute;top:7.48px;font-family:'Liberation Sans', sans-serif;font-size:14.2px;line-height:0;white-space:pre;color:#000;font-weight:normal;left:4.0px;">COMPAÑIA ARIZLU, S.A. DE C.V.</div>
</div>
<div style="position:absolute;left:1682px;top:474px;width:99px;height:26px;overflow:hidden;">
<div style="position:absolute;top:7.48px;font-family:'Liberation Sans', sans-serif;font-size:14.2px;line-height:0;white-space:pre;color:#000;font-weight:normal;left:4.0px;">60</div>
</div>
<div style="position:absolute;left:1782px;top:473px;width:99px;height:27px;overflow:hidden;">
<div style="position:absolute;top:8.48px;font-family:'Liberation Sans', sans-serif;font-size:14.2px;line-height:0;white-space:pre;color:#000;font-weight:normal;left:4.0px;">PELICULA AUTOADHERIBLE</div>
</div>
<div style="position:absolute;left:1882px;top:474px;width:99px;height:26px;overflow:hidden;">
<div style="position:absolute;top:7.48px;font-family:'Liberation Sans', sans-serif;font-size:14.2px;line-height:0;white-space:pre;color:#000;font-weight:normal;left:4.0px;">4/3/2025</div>
</div>
<div style="position:absolute;left:1982px;top:474px;width:72px;height:26px;overflow:hidden;">
<div style="position:absolute;top:7.48px;font-family:'Liberation Sans', sans-serif;font-size:14.2px;line-height:0;white-space:pre;color:#000;font-weight:normal;left:4.0px;">64</div>
</div>
<div style="position:absolute;left:2055px;top:474px;width:99px;height:26px;overflow:hidden;">
<div style="position:absolute;top:7.48px;font-family:'Liberation Sans', sans-serif;font-size:14.2px;line-height:0;white-space:pre;color:#000;font-weight:normal;left:8.8px;">$</div>
</div>
<div style="position:absolute;left:2055px;top:474px;width:99px;height:26px;overflow:hidden;">
<div style="position:absolute;top:7.48px;font-family:'Liberation Sans', sans-serif;font-size:14.2px;line-height:0;white-space:pre;color:#000;font-weight:normal;right:8.8px;">3,894.00</div>
</div>
<div style="position:absolute;left:2155px;top:474px;width:99px;height:26px;overflow:hidden;">
<div style="position:absolute;top:7.48px;font-family:'Liberation Sans', sans-serif;font-size:14.2px;line-height:0;white-space:pre;color:#000;font-weight:normal;left:4.0px;">3</div>
</div>
<div style="position:absolute;left:2255px;top:474px;width:99px;height:26px;overflow:hidden;">
<div style="position:absolute;top:7.48px;font-family:'Liberation Sans', sans-serif;font-size:14.2px;line-height:0;white-space:pre;color:#000;font-weight:normal;left:8.8px;">$</div>
</div>
<div style="position:absolute;left:2255px;top:474px;width:99px;height:26px;overflow:hidden;">
<div style="position:absolute;top:7.48px;font-family:'Liberation Sans', sans-serif;font-size:14.2px;line-height:0;white-space:pre;color:#000;font-weight:normal;right:8.8px;">1,298.00</div>
</div>
<div style="position:absolute;left:2355px;top:474px;width:99px;height:26px;overflow:hidden;">
<div style="position:absolute;top:17.58px;font-family:'Liberation Sans', sans-serif;font-size:14.2px;line-height:0;white-space:pre;color:#000;font-weight:normal;left:8.8px;">$</div>
</div>
<div style="position:absolute;left:2355px;top:474px;width:99px;height:26px;overflow:hidden;">
<div style="position:absolute;top:17.58px;font-family:'Liberation Sans', sans-serif;font-size:14.2px;line-height:0;white-space:pre;color:#000;font-weight:normal;right:8.8px;">1,230.83</div>
</div>
<div style="position:absolute;left:2455px;top:474px;width:99px;height:26px;overflow:hidden;">
<div style="position:absolute;top:17.58px;font-family:'Liberation Sans', sans-serif;font-size:14.2px;line-height:0;white-space:pre;color:#000;font-weight:normal;left:-450.50px;width:1000px;text-align:center;">5.17%</div>
</div>
<div style="position:absolute;left:2555px;top:474px;width:99px;height:26px;overflow:hidden;">
<div style="position:absolute;top:17.58px;font-family:'Liberation Sans', sans-serif;font-size:14.2px;line-height:0;white-space:pre;color:#000;font-weight:normal;left:-450.50px;width:1000px;text-align:center;">#REF!</div>
</div>
<div style="position:absolute;left:1382px;top:501px;width:99px;height:26px;overflow:hidden;">
<div style="position:absolute;top:7.48px;font-family:'Liberation Sans', sans-serif;font-size:14.2px;line-height:0;white-space:pre;color:#000;font-weight:normal;left:4.0px;">GDL8251</div>
</div>
<div style="position:absolute;left:1482px;top:501px;width:99px;height:26px;overflow:hidden;">
<div style="position:absolute;top:7.48px;font-family:'Liberation Sans', sans-serif;font-size:14.2px;line-height:0;white-space:pre;color:#000;font-weight:normal;left:-450.50px;width:1000px;text-align:center;">1/29/2025</div>
</div>
<div style="position:absolute;left:1582px;top:501px;width:99px;height:26px;overflow:hidden;">
<div style="position:absolute;top:7.48px;font-family:'Liberation Sans', sans-serif;font-size:14.2px;line-height:0;white-space:pre;color:#000;font-weight:normal;left:4.0px;">COMPAÑIA ARIZLU, S.A. DE C.V.</div>
</div>
<div style="position:absolute;left:1682px;top:501px;width:99px;height:26px;overflow:hidden;">
<div style="position:absolute;top:7.48px;font-family:'Liberation Sans', sans-serif;font-size:14.2px;line-height:0;white-space:pre;color:#000;font-weight:normal;left:4.0px;">60</div>
</div>
<div style="position:absolute;left:1782px;top:500px;width:99px;height:27px;overflow:hidden;">
<div style="position:absolute;top:8.48px;font-family:'Liberation Sans', sans-serif;font-size:14.2px;line-height:0;white-space:pre;color:#000;font-weight:normal;left:4.0px;">CINTA MASKING</div>
</div>
<div style="position:absolute;left:1882px;top:501px;width:99px;height:26px;overflow:hidden;">
<div style="position:absolute;top:7.48px;font-family:'Liberation Sans', sans-serif;font-size:14.2px;line-height:0;white-space:pre;color:#000;font-weight:normal;left:4.0px;">4/3/2025</div>
</div>
<div style="position:absolute;left:1982px;top:501px;width:72px;height:26px;overflow:hidden;">
<div style="position:absolute;top:7.48px;font-family:'Liberation Sans', sans-serif;font-size:14.2px;line-height:0;white-space:pre;color:#000;font-weight:normal;left:4.0px;">64</div>
</div>
<div style="position:absolute;left:2055px;top:501px;width:99px;height:26px;overflow:hidden;">
<div style="position:absolute;top:7.48px;font-family:'Liberation Sans', sans-serif;font-size:14.2px;line-height:0;white-space:pre;color:#000;font-weight:normal;left:8.8px;">$</div>
</div>
<div style="position:absolute;left:2055px;top:501px;width:99px;height:26px;overflow:hidden;">
<div style="position:absolute;top:7.48px;font-family:'Liberation Sans', sans-serif;font-size:14.2px;line-height:0;white-space:pre;color:#000;font-weight:normal;right:8.8px;">6,300.00</div>
</div>
<div style="position:absolute;left:2155px;top:501px;width:99px;height:26px;overflow:hidden;">
<div style="position:absolute;top:7.48px;font-family:'Liberation Sans', sans-serif;font-size:14.2px;line-height:0;white-space:pre;color:#000;font-weight:normal;left:4.0px;">180</div>
</div>
<div style="position:absolute;left:2255px;top:501px;width:99px;height:26px;overflow:hidden;">
<div style="position:absolute;top:7.48px;font-family:'Liberation Sans', sans-serif;font-size:14.2px;line-height:0;white-space:pre;color:#000;font-weight:normal;left:8.8px;">$</div>
</div>
<div style="position:absolute;left:2255px;top:501px;width:99px;height:26px;overflow:hidden;">
<div style="position:absolute;top:7.48px;font-family:'Liberation Sans', sans-serif;font-size:14.2px;line-height:0;white-space:pre;color:#000;font-weight:normal;right:8.8px;">35.00</div>
</div>
<div style="position:absolute;left:2355px;top:501px;width:99px;height:26px;overflow:hidden;">
<div style="position:absolute;top:17.58px;font-family:'Liberation Sans', sans-serif;font-size:14.2px;line-height:0;white-space:pre;color:#000;font-weight:normal;left:8.8px;">$</div>
</div>
<div style="position:absolute;left:2355px;top:501px;width:99px;height:26px;overflow:hidden;">
<div style="position:absolute;top:17.58px;font-family:'Liberation Sans', sans-serif;font-size:14.2px;line-height:0;white-space:pre;color:#000;font-weight:normal;right:8.8px;">29.39</div>
</div>
<div style="position:absolute;left:2455px;top:501px;width:99px;height:26px;overflow:hidden;">
<div style="position:absolute;top:17.58px;font-family:'Liberation Sans', sans-serif;font-size:14.2px;line-height:0;white-space:pre;color:#000;font-weight:normal;left:-450.50px;width:1000px;text-align:center;">16.03%</div>
</div>
<div style="position:absolute;left:2555px;top:501px;width:99px;height:26px;overflow:hidden;">
<div style="position:absolute;top:17.58px;font-family:'Liberation Sans', sans-serif;font-size:14.2px;line-height:0;white-space:pre;color:#000;font-weight:normal;left:-450.50px;width:1000px;text-align:center;">#REF!</div>
</div>
<div style="position:absolute;left:1382px;top:528px;width:99px;height:26px;overflow:hidden;">
<div style="position:absolute;top:7.48px;font-family:'Liberation Sans', sans-serif;font-size:14.2px;line-height:0;white-space:pre;color:#000;font-weight:normal;left:4.0px;">GDL8251</div>
</div>
<div style="position:absolute;left:1482px;top:528px;width:99px;height:26px;overflow:hidden;">
<div style="position:absolute;top:7.48px;font-family:'Liberation Sans', sans-serif;font-size:14.2px;line-height:0;white-space:pre;color:#000;font-weight:normal;left:-450.50px;width:1000px;text-align:center;">1/29/2025</div>
</div>
<div style="position:absolute;left:1582px;top:528px;width:99px;height:26px;overflow:hidden;">
<div style="position:absolute;top:7.48px;font-family:'Liberation Sans', sans-serif;font-size:14.2px;line-height:0;white-space:pre;color:#000;font-weight:normal;left:4.0px;">COMPAÑIA ARIZLU, S.A. DE C.V.</div>
</div>
<div style="position:absolute;left:1682px;top:528px;width:99px;height:26px;overflow:hidden;">
<div style="position:absolute;top:7.48px;font-family:'Liberation Sans', sans-serif;font-size:14.2px;line-height:0;white-space:pre;color:#000;font-weight:normal;left:4.0px;">60</div>
</div>
<div style="position:absolute;left:1782px;top:527px;width:99px;height:27px;overflow:hidden;">
<div style="position:absolute;top:8.48px;font-family:'Liberation Sans', sans-serif;font-size:14.2px;line-height:0;white-space:pre;color:#000;font-weight:normal;left:4.0px;">CINTA MASKING</div>
</div>
<div style="position:absolute;left:1882px;top:528px;width:99px;height:26px;overflow:hidden;">
<div style="position:absolute;top:7.48px;font-family:'Liberation Sans', sans-serif;font-size:14.2px;line-height:0;white-space:pre;color:#000;font-weight:normal;left:4.0px;">4/3/2025</div>
</div>
<div style="position:absolute;left:1982px;top:528px;width:72px;height:26px;overflow:hidden;">
<div style="position:absolute;top:7.48px;font-family:'Liberation Sans', sans-serif;font-size:14.2px;line-height:0;white-space:pre;color:#000;font-weight:normal;left:4.0px;">64</div>
</div>
<div style="position:absolute;left:2055px;top:528px;width:99px;height:26px;overflow:hidden;">
<div style="position:absolute;top:7.48px;font-family:'Liberation Sans', sans-serif;font-size:14.2px;line-height:0;white-space:pre;color:#000;font-weight:normal;left:8.8px;">$</div>
</div>
<div style="position:absolute;left:2055px;top:528px;width:99px;height:26px;overflow:hidden;">
<div style="position:absolute;top:7.48px;font-family:'Liberation Sans', sans-serif;font-size:14.2px;line-height:0;white-space:pre;color:#000;font-weight:normal;right:8.8px;">6,300.00</div>
</div>
<div style="position:absolute;left:2155px;top:528px;width:99px;height:26px;overflow:hidden;">
<div style="position:absolute;top:7.48px;font-family:'Liberation Sans', sans-serif;font-size:14.2px;line-height:0;white-space:pre;color:#000;font-weight:normal;left:4.0px;">180</div>
</div>
<div style="position:absolute;left:2255px;top:528px;width:99px;height:26px;overflow:hidden;">
<div style="position:absolute;top:7.48px;font-family:'Liberation Sans', sans-serif;font-size:14.2px;line-height:0;white-space:pre;color:#000;font-weight:normal;left:8.8px;">$</div>
</div>
<div style="position:absolute;left:2255px;top:528px;width:99px;height:26px;overflow:hidden;">
<div style="position:absolute;top:7.48px;font-family:'Liberation Sans', sans-serif;font-size:14.2px;line-height:0;white-space:pre;color:#000;font-weight:normal;right:8.8px;">35.00</div>
</div>
<div style="position:absolute;left:2355px;top:528px;width:99px;height:26px;overflow:hidden;">
<div style="position:absolute;top:17.58px;font-family:'Liberation Sans', sans-serif;font-size:14.2px;line-height:0;white-space:pre;color:#000;font-weight:normal;left:8.8px;">$</div>
</div>
<div style="position:absolute;left:2355px;top:528px;width:99px;height:26px;overflow:hidden;">
<div style="position:absolute;top:17.58px;font-family:'Liberation Sans', sans-serif;font-size:14.2px;line-height:0;white-space:pre;color:#000;font-weight:normal;right:8.8px;">29.39</div>
</div>
<div style="position:absolute;left:2455px;top:528px;width:99px;height:26px;overflow:hidden;">
<div style="position:absolute;top:17.58px;font-family:'Liberation Sans', sans-serif;font-size:14.2px;line-height:0;white-space:pre;color:#000;font-weight:normal;left:-450.50px;width:1000px;text-align:center;">16.03%</div>
</div>
<div style="position:absolute;left:2555px;top:528px;width:99px;height:26px;overflow:hidden;">
<div style="position:absolute;top:17.58px;font-family:'Liberation Sans', sans-serif;font-size:14.2px;line-height:0;white-space:pre;color:#000;font-weight:normal;left:-450.50px;width:1000px;text-align:center;">#REF!</div>
</div>
<div style="position:absolute;left:1382px;top:555px;width:99px;height:26px;overflow:hidden;">
<div style="position:absolute;top:7.48px;font-family:'Liberation Sans', sans-serif;font-size:14.2px;line-height:0;white-space:pre;color:#000;font-weight:normal;left:4.0px;">GDL8294</div>
</div>
<div style="position:absolute;left:1482px;top:555px;width:99px;height:26px;overflow:hidden;">
<div style="position:absolute;top:7.48px;font-family:'Liberation Sans', sans-serif;font-size:14.2px;line-height:0;white-space:pre;color:#000;font-weight:normal;left:-450.50px;width:1000px;text-align:center;">2/6/2025</div>
</div>
<div style="position:absolute;left:1582px;top:555px;width:99px;height:26px;overflow:hidden;">
<div style="position:absolute;top:7.48px;font-family:'Liberation Sans', sans-serif;font-size:14.2px;line-height:0;white-space:pre;color:#000;font-weight:normal;left:4.0px;">COMPAÑIA ARIZLU, S.A. DE C.V.</div>
</div>
<div style="position:absolute;left:1682px;top:555px;width:99px;height:26px;overflow:hidden;">
<div style="position:absolute;top:7.48px;font-family:'Liberation Sans', sans-serif;font-size:14.2px;line-height:0;white-space:pre;color:#000;font-weight:normal;left:4.0px;">60</div>
</div>
<div style="position:absolute;left:1782px;top:554px;width:99px;height:27px;overflow:hidden;">
<div style="position:absolute;top:8.48px;font-family:'Liberation Sans', sans-serif;font-size:14.2px;line-height:0;white-space:pre;color:#000;font-weight:normal;left:4.0px;">PELICULA AUTOADHERIBLE</div>
</div>
<div style="position:absolute;left:1882px;top:555px;width:99px;height:26px;overflow:hidden;">
<div style="position:absolute;top:7.48px;font-family:'Liberation Sans', sans-serif;font-size:14.2px;line-height:0;white-space:pre;color:#000;font-weight:normal;left:4.0px;">4/11/2025</div>
</div>
<div style="position:absolute;left:1982px;top:555px;width:72px;height:26px;overflow:hidden;">
<div style="position:absolute;top:7.48px;font-family:'Liberation Sans', sans-serif;font-size:14.2px;line-height:0;white-space:pre;color:#000;font-weight:normal;left:4.0px;">64</div>
</div>
<div style="position:absolute;left:2055px;top:555px;width:99px;height:26px;overflow:hidden;">
<div style="position:absolute;top:7.48px;font-family:'Liberation Sans', sans-serif;font-size:14.2px;line-height:0;white-space:pre;color:#000;font-weight:normal;left:8.8px;">$</div>
</div>
<div style="position:absolute;left:2055px;top:555px;width:99px;height:26px;overflow:hidden;">
<div style="position:absolute;top:7.48px;font-family:'Liberation Sans', sans-serif;font-size:14.2px;line-height:0;white-space:pre;color:#000;font-weight:normal;right:8.8px;">77,880.00</div>
</div>
<div style="position:absolute;left:2155px;top:555px;width:99px;height:26px;overflow:hidden;">
<div style="position:absolute;top:7.48px;font-family:'Liberation Sans', sans-serif;font-size:14.2px;line-height:0;white-space:pre;color:#000;font-weight:normal;left:4.0px;">60</div>
</div>
<div style="position:absolute;left:2255px;top:555px;width:99px;height:26px;overflow:hidden;">
<div style="position:absolute;top:7.48px;font-family:'Liberation Sans', sans-serif;font-size:14.2px;line-height:0;white-space:pre;color:#000;font-weight:normal;left:8.8px;">$</div>
</div>
<div style="position:absolute;left:2255px;top:555px;width:99px;height:26px;overflow:hidden;">
<div style="position:absolute;top:7.48px;font-family:'Liberation Sans', sans-serif;font-size:14.2px;line-height:0;white-space:pre;color:#000;font-weight:normal;right:8.8px;">1,298.00</div>
</div>
<div style="position:absolute;left:2355px;top:555px;width:99px;height:26px;overflow:hidden;">
<div style="position:absolute;top:17.58px;font-family:'Liberation Sans', sans-serif;font-size:14.2px;line-height:0;white-space:pre;color:#000;font-weight:normal;left:8.8px;">$</div>
</div>
<div style="position:absolute;left:2355px;top:555px;width:99px;height:26px;overflow:hidden;">
<div style="position:absolute;top:17.58px;font-family:'Liberation Sans', sans-serif;font-size:14.2px;line-height:0;white-space:pre;color:#000;font-weight:normal;right:8.8px;">1,230.83</div>
</div>
<div style="position:absolute;left:2455px;top:555px;width:99px;height:26px;overflow:hidden;">
<div style="position:absolute;top:17.58px;font-family:'Liberation Sans', sans-serif;font-size:14.2px;line-height:0;white-space:pre;color:#000;font-weight:normal;left:-450.50px;width:1000px;text-align:center;">5.17%</div>
</div>
<div style="position:absolute;left:2555px;top:555px;width:99px;height:26px;overflow:hidden;">
<div style="position:absolute;top:17.58px;font-family:'Liberation Sans', sans-serif;font-size:14.2px;line-height:0;white-space:pre;color:#000;font-weight:normal;left:-450.50px;width:1000px;text-align:center;">#REF!</div>
</div>
<div style="position:absolute;left:1382px;top:582px;width:99px;height:26px;overflow:hidden;">
<div style="position:absolute;top:7.48px;font-family:'Liberation Sans', sans-serif;font-size:14.2px;line-height:0;white-space:pre;color:#000;font-weight:normal;left:4.0px;">GDL8295</div>
</div>
<div style="position:absolute;left:1482px;top:582px;width:99px;height:26px;overflow:hidden;">
<div style="position:absolute;top:7.48px;font-family:'Liberation Sans', sans-serif;font-size:14.2px;line-height:0;white-space:pre;color:#000;font-weight:normal;left:-450.50px;width:1000px;text-align:center;">2/6/2025</div>
</div>
<div style="position:absolute;left:1582px;top:582px;width:99px;height:26px;overflow:hidden;">
<div style="position:absolute;top:7.48px;font-family:'Liberation Sans', sans-serif;font-size:14.2px;line-height:0;white-space:pre;color:#000;font-weight:normal;left:4.0px;">COMPAÑIA ARIZLU, S.A. DE C.V.</div>
</div>
<div style="position:absolute;left:1682px;top:582px;width:99px;height:26px;overflow:hidden;">
<div style="position:absolute;top:7.48px;font-family:'Liberation Sans', sans-serif;font-size:14.2px;line-height:0;white-space:pre;color:#000;font-weight:normal;left:4.0px;">60</div>
</div>
<div style="position:absolute;left:1782px;top:581px;width:99px;height:27px;overflow:hidden;">
<div style="position:absolute;top:8.48px;font-family:'Liberation Sans', sans-serif;font-size:14.2px;line-height:0;white-space:pre;color:#000;font-weight:normal;left:4.0px;">CINTA MASKING</div>
</div>
<div style="position:absolute;left:1882px;top:582px;width:99px;height:26px;overflow:hidden;">
<div style="position:absolute;top:7.48px;font-family:'Liberation Sans', sans-serif;font-size:14.2px;line-height:0;white-space:pre;color:#000;font-weight:normal;left:4.0px;">4/11/2025</div>
</div>
<div style="position:absolute;left:1982px;top:582px;width:72px;height:26px;overflow:hidden;">
<div style="position:absolute;top:7.48px;font-family:'Liberation Sans', sans-serif;font-size:14.2px;line-height:0;white-space:pre;color:#000;font-weight:normal;left:4.0px;">64</div>
</div>
<div style="position:absolute;left:2055px;top:582px;width:99px;height:26px;overflow:hidden;">
<div style="position:absolute;top:7.48px;font-family:'Liberation Sans', sans-serif;font-size:14.2px;line-height:0;white-space:pre;color:#000;font-weight:normal;left:8.8px;">$</div>
</div>
<div style="position:absolute;left:2055px;top:582px;width:99px;height:26px;overflow:hidden;">
<div style="position:absolute;top:7.48px;font-family:'Liberation Sans', sans-serif;font-size:14.2px;line-height:0;white-space:pre;color:#000;font-weight:normal;right:8.8px;">3,780.00</div>
</div>
<div style="position:absolute;left:2155px;top:582px;width:99px;height:26px;overflow:hidden;">
<div style="position:absolute;top:7.48px;font-family:'Liberation Sans', sans-serif;font-size:14.2px;line-height:0;white-space:pre;color:#000;font-weight:normal;left:4.0px;">108</div>
</div>
<div style="position:absolute;left:2255px;top:582px;width:99px;height:26px;overflow:hidden;">
<div style="position:absolute;top:7.48px;font-family:'Liberation Sans', sans-serif;font-size:14.2px;line-height:0;white-space:pre;color:#000;font-weight:normal;left:8.8px;">$</div>
</div>
<div style="position:absolute;left:2255px;top:582px;width:99px;height:26px;overflow:hidden;">
<div style="position:absolute;top:7.48px;font-family:'Liberation Sans', sans-serif;font-size:14.2px;line-height:0;white-space:pre;color:#000;font-weight:normal;right:8.8px;">35.00</div>
</div>
<div style="position:absolute;left:2355px;top:582px;width:99px;height:26px;overflow:hidden;">
<div style="position:absolute;top:17.58px;font-family:'Liberation Sans', sans-serif;font-size:14.2px;line-height:0;white-space:pre;color:#000;font-weight:normal;left:8.8px;">$</div>
</div>
<div style="position:absolute;left:2355px;top:582px;width:99px;height:26px;overflow:hidden;">
<div style="position:absolute;top:17.58px;font-family:'Liberation Sans', sans-serif;font-size:14.2px;line-height:0;white-space:pre;color:#000;font-weight:normal;right:8.8px;">29.39</div>
</div>
<div style="position:absolute;left:2455px;top:582px;width:99px;height:26px;overflow:hidden;">
<div style="position:absolute;top:17.58px;font-family:'Liberation Sans', sans-serif;font-size:14.2px;line-height:0;white-space:pre;color:#000;font-weight:normal;left:-450.50px;width:1000px;text-align:center;">16.03%</div>
</div>
<div style="position:absolute;left:2555px;top:582px;width:99px;height:26px;overflow:hidden;">
<div style="position:absolute;top:17.58px;font-family:'Liberation Sans', sans-serif;font-size:14.2px;line-height:0;white-space:pre;color:#000;font-weight:normal;left:-450.50px;width:1000px;text-align:center;">#REF!</div>
</div>
<div style="position:absolute;left:1382px;top:609px;width:99px;height:26px;overflow:hidden;">
<div style="position:absolute;top:7.48px;font-family:'Liberation Sans', sans-serif;font-size:14.2px;line-height:0;white-space:pre;color:#000;font-weight:normal;left:4.0px;">GDL8369</div>
</div>
<div style="position:absolute;left:1482px;top:609px;width:99px;height:26px;overflow:hidden;">
<div style="position:absolute;top:7.48px;font-family:'Liberation Sans', sans-serif;font-size:14.2px;line-height:0;white-space:pre;color:#000;font-weight:normal;left:-450.50px;width:1000px;text-align:center;">2/19/2025</div>
</div>
<div style="position:absolute;left:1582px;top:609px;width:99px;height:26px;overflow:hidden;">
<div style="position:absolute;top:7.48px;font-family:'Liberation Sans', sans-serif;font-size:14.2px;line-height:0;white-space:pre;color:#000;font-weight:normal;left:4.0px;">COMPAÑIA ARIZLU, S.A. DE C.V.</div>
</div>
<div style="position:absolute;left:1682px;top:609px;width:99px;height:26px;overflow:hidden;">
<div style="position:absolute;top:7.48px;font-family:'Liberation Sans', sans-serif;font-size:14.2px;line-height:0;white-space:pre;color:#000;font-weight:normal;left:4.0px;">60</div>
</div>
<div style="position:absolute;left:1782px;top:608px;width:99px;height:27px;overflow:hidden;">
<div style="position:absolute;top:8.48px;font-family:'Liberation Sans', sans-serif;font-size:14.2px;line-height:0;white-space:pre;color:#000;font-weight:normal;left:4.0px;">PELICULA AUTOADHERIBLE</div>
</div>
<div style="position:absolute;left:1882px;top:609px;width:99px;height:26px;overflow:hidden;">
<div style="position:absolute;top:7.48px;font-family:'Liberation Sans', sans-serif;font-size:14.2px;line-height:0;white-space:pre;color:#000;font-weight:normal;left:4.0px;">4/25/2025</div>
</div>
<div style="position:absolute;left:1982px;top:609px;width:72px;height:26px;overflow:hidden;">
<div style="position:absolute;top:7.48px;font-family:'Liberation Sans', sans-serif;font-size:14.2px;line-height:0;white-space:pre;color:#000;font-weight:normal;left:4.0px;">65</div>
</div>
<div style="position:absolute;left:2055px;top:609px;width:99px;height:26px;overflow:hidden;">
<div style="position:absolute;top:7.48px;font-family:'Liberation Sans', sans-serif;font-size:14.2px;line-height:0;white-space:pre;color:#000;font-weight:normal;left:8.8px;">$</div>
</div>
<div style="position:absolute;left:2055px;top:609px;width:99px;height:26px;overflow:hidden;">
<div style="position:absolute;top:7.48px;font-family:'Liberation Sans', sans-serif;font-size:14.2px;line-height:0;white-space:pre;color:#000;font-weight:normal;right:8.8px;">51,920.00</div>
</div>
<div style="position:absolute;left:2155px;top:609px;width:99px;height:26px;overflow:hidden;">
<div style="position:absolute;top:7.48px;font-family:'Liberation Sans', sans-serif;font-size:14.2px;line-height:0;white-space:pre;color:#000;font-weight:normal;left:4.0px;">40</div>
</div>
<div style="position:absolute;left:2255px;top:609px;width:99px;height:26px;overflow:hidden;">
<div style="position:absolute;top:7.48px;font-family:'Liberation Sans', sans-serif;font-size:14.2px;line-height:0;white-space:pre;color:#000;font-weight:normal;left:8.8px;">$</div>
</div>
<div style="position:absolute;left:2255px;top:609px;width:99px;height:26px;overflow:hidden;">
<div style="position:absolute;top:7.48px;font-family:'Liberation Sans', sans-serif;font-size:14.2px;line-height:0;white-space:pre;color:#000;font-weight:normal;right:8.8px;">1,298.00</div>
</div>
<div style="position:absolute;left:2355px;top:609px;width:99px;height:26px;overflow:hidden;">
<div style="position:absolute;top:17.58px;font-family:'Liberation Sans', sans-serif;font-size:14.2px;line-height:0;white-space:pre;color:#000;font-weight:normal;left:8.8px;">$</div>
</div>
<div style="position:absolute;left:2355px;top:609px;width:99px;height:26px;overflow:hidden;">
<div style="position:absolute;top:17.58px;font-family:'Liberation Sans', sans-serif;font-size:14.2px;line-height:0;white-space:pre;color:#000;font-weight:normal;right:8.8px;">1,236.03</div>
</div>
<div style="position:absolute;left:2455px;top:609px;width:99px;height:26px;overflow:hidden;">
<div style="position:absolute;top:17.58px;font-family:'Liberation Sans', sans-serif;font-size:14.2px;line-height:0;white-space:pre;color:#000;font-weight:normal;left:-450.50px;width:1000px;text-align:center;">4.77%</div>
</div>
<div style="position:absolute;left:2555px;top:609px;width:99px;height:26px;overflow:hidden;">
<div style="position:absolute;top:17.58px;font-family:'Liberation Sans', sans-serif;font-size:14.2px;line-height:0;white-space:pre;color:#000;font-weight:normal;left:-450.50px;width:1000px;text-align:center;">#REF!</div>
</div>
<div style="position:absolute;left:1382px;top:636px;width:99px;height:26px;overflow:hidden;">
<div style="position:absolute;top:7.48px;font-family:'Liberation Sans', sans-serif;font-size:14.2px;line-height:0;white-space:pre;color:#000;font-weight:normal;left:4.0px;">GDL8370</div>
</div>
<div style="position:absolute;left:1482px;top:636px;width:99px;height:26px;overflow:hidden;">
<div style="position:absolute;top:7.48px;font-family:'Liberation Sans', sans-serif;font-size:14.2px;line-height:0;white-space:pre;color:#000;font-weight:normal;left:-450.50px;width:1000px;text-align:center;">2/19/2025</div>
</div>
<div style="position:absolute;left:1582px;top:636px;width:99px;height:26px;overflow:hidden;">
<div style="position:absolute;top:7.48px;font-family:'Liberation Sans', sans-serif;font-size:14.2px;line-height:0;white-space:pre;color:#000;font-weight:normal;left:4.0px;">COMPAÑIA ARIZLU, S.A. DE C.V.</div>
</div>
<div style="position:absolute;left:1682px;top:636px;width:99px;height:26px;overflow:hidden;">
<div style="position:absolute;top:7.48px;font-family:'Liberation Sans', sans-serif;font-size:14.2px;line-height:0;white-space:pre;color:#000;font-weight:normal;left:4.0px;">60</div>
</div>
<div style="position:absolute;left:1782px;top:635px;width:99px;height:27px;overflow:hidden;">
<div style="position:absolute;top:8.48px;font-family:'Liberation Sans', sans-serif;font-size:14.2px;line-height:0;white-space:pre;color:#000;font-weight:normal;left:4.0px;">PELICULA AUTOADHERIBLE</div>
</div>
<div style="position:absolute;left:1882px;top:636px;width:99px;height:26px;overflow:hidden;">
<div style="position:absolute;top:7.48px;font-family:'Liberation Sans', sans-serif;font-size:14.2px;line-height:0;white-space:pre;color:#000;font-weight:normal;left:4.0px;">4/25/2025</div>
</div>
<div style="position:absolute;left:1982px;top:636px;width:72px;height:26px;overflow:hidden;">
<div style="position:absolute;top:7.48px;font-family:'Liberation Sans', sans-serif;font-size:14.2px;line-height:0;white-space:pre;color:#000;font-weight:normal;left:4.0px;">65</div>
</div>
<div style="position:absolute;left:2055px;top:636px;width:99px;height:26px;overflow:hidden;">
<div style="position:absolute;top:7.48px;font-family:'Liberation Sans', sans-serif;font-size:14.2px;line-height:0;white-space:pre;color:#000;font-weight:normal;left:8.8px;">$</div>
</div>
<div style="position:absolute;left:2055px;top:636px;width:99px;height:26px;overflow:hidden;">
<div style="position:absolute;top:7.48px;font-family:'Liberation Sans', sans-serif;font-size:14.2px;line-height:0;white-space:pre;color:#000;font-weight:normal;right:8.8px;">25,960.00</div>
</div>
<div style="position:absolute;left:2155px;top:636px;width:99px;height:26px;overflow:hidden;">
<div style="position:absolute;top:7.48px;font-family:'Liberation Sans', sans-serif;font-size:14.2px;line-height:0;white-space:pre;color:#000;font-weight:normal;left:4.0px;">20</div>
</div>
<div style="position:absolute;left:2255px;top:636px;width:99px;height:26px;overflow:hidden;">
<div style="position:absolute;top:7.48px;font-family:'Liberation Sans', sans-serif;font-size:14.2px;line-height:0;white-space:pre;color:#000;font-weight:normal;left:8.8px;">$</div>
</div>
<div style="position:absolute;left:2255px;top:636px;width:99px;height:26px;overflow:hidden;">
<div style="position:absolute;top:7.48px;font-family:'Liberation Sans', sans-serif;font-size:14.2px;line-height:0;white-space:pre;color:#000;font-weight:normal;right:8.8px;">1,298.00</div>
</div>
<div style="position:absolute;left:2355px;top:636px;width:99px;height:26px;overflow:hidden;">
<div style="position:absolute;top:17.58px;font-family:'Liberation Sans', sans-serif;font-size:14.2px;line-height:0;white-space:pre;color:#000;font-weight:normal;left:8.8px;">$</div>
</div>
<div style="position:absolute;left:2355px;top:636px;width:99px;height:26px;overflow:hidden;">
<div style="position:absolute;top:17.58px;font-family:'Liberation Sans', sans-serif;font-size:14.2px;line-height:0;white-space:pre;color:#000;font-weight:normal;right:8.8px;">1,245.81</div>
</div>
<div style="position:absolute;left:2455px;top:636px;width:99px;height:26px;overflow:hidden;">
<div style="position:absolute;top:17.58px;font-family:'Liberation Sans', sans-serif;font-size:14.2px;line-height:0;white-space:pre;color:#000;font-weight:normal;left:-450.50px;width:1000px;text-align:center;">4.02%</div>
</div>
<div style="position:absolute;left:2555px;top:636px;width:99px;height:26px;overflow:hidden;">
<div style="position:absolute;top:17.58px;font-family:'Liberation Sans', sans-serif;font-size:14.2px;line-height:0;white-space:pre;color:#000;font-weight:normal;left:-450.50px;width:1000px;text-align:center;">#REF!</div>
</div>
<div style="position:absolute;left:1382px;top:663px;width:99px;height:26px;overflow:hidden;">
<div style="position:absolute;top:7.48px;font-family:'Liberation Sans', sans-serif;font-size:14.2px;line-height:0;white-space:pre;color:#000;font-weight:normal;left:4.0px;">GDL8392</div>
</div>
<div style="position:absolute;left:1482px;top:663px;width:99px;height:26px;overflow:hidden;">
<div style="position:absolute;top:7.48px;font-family:'Liberation Sans', sans-serif;font-size:14.2px;line-height:0;white-space:pre;color:#000;font-weight:normal;left:-450.50px;width:1000px;text-align:center;">2/24/2025</div>
</div>
<div style="position:absolute;left:1582px;top:663px;width:99px;height:26px;overflow:hidden;">
<div style="position:absolute;top:7.48px;font-family:'Liberation Sans', sans-serif;font-size:14.2px;line-height:0;white-space:pre;color:#000;font-weight:normal;left:4.0px;">COMPAÑIA ARIZLU, S.A. DE C.V.</div>
</div>
<div style="position:absolute;left:1682px;top:663px;width:99px;height:26px;overflow:hidden;">
<div style="position:absolute;top:7.48px;font-family:'Liberation Sans', sans-serif;font-size:14.2px;line-height:0;white-space:pre;color:#000;font-weight:normal;left:4.0px;">60</div>
</div>
<div style="position:absolute;left:1782px;top:662px;width:99px;height:27px;overflow:hidden;">
<div style="position:absolute;top:8.48px;font-family:'Liberation Sans', sans-serif;font-size:14.2px;line-height:0;white-space:pre;color:#000;font-weight:normal;left:4.0px;">PELICULA AUTOADHERIBLE</div>
</div>
<div style="position:absolute;left:1882px;top:663px;width:99px;height:26px;overflow:hidden;">
<div style="position:absolute;top:7.48px;font-family:'Liberation Sans', sans-serif;font-size:14.2px;line-height:0;white-space:pre;color:#000;font-weight:normal;left:4.0px;">4/25/2025</div>
</div>
<div style="position:absolute;left:1982px;top:663px;width:72px;height:26px;overflow:hidden;">
<div style="position:absolute;top:7.48px;font-family:'Liberation Sans', sans-serif;font-size:14.2px;line-height:0;white-space:pre;color:#000;font-weight:normal;left:4.0px;">60</div>
</div>
<div style="position:absolute;left:2055px;top:663px;width:99px;height:26px;overflow:hidden;">
<div style="position:absolute;top:7.48px;font-family:'Liberation Sans', sans-serif;font-size:14.2px;line-height:0;white-space:pre;color:#000;font-weight:normal;left:8.8px;">$</div>
</div>
<div style="position:absolute;left:2055px;top:663px;width:99px;height:26px;overflow:hidden;">
<div style="position:absolute;top:7.48px;font-family:'Liberation Sans', sans-serif;font-size:14.2px;line-height:0;white-space:pre;color:#000;font-weight:normal;right:8.8px;">51,920.00</div>
</div>
<div style="position:absolute;left:2155px;top:663px;width:99px;height:26px;overflow:hidden;">
<div style="position:absolute;top:7.48px;font-family:'Liberation Sans', sans-serif;font-size:14.2px;line-height:0;white-space:pre;color:#000;font-weight:normal;left:4.0px;">40</div>
</div>
<div style="position:absolute;left:2255px;top:663px;width:99px;height:26px;overflow:hidden;">
<div style="position:absolute;top:7.48px;font-family:'Liberation Sans', sans-serif;font-size:14.2px;line-height:0;white-space:pre;color:#000;font-weight:normal;left:8.8px;">$</div>
</div>
<div style="position:absolute;left:2255px;top:663px;width:99px;height:26px;overflow:hidden;">
<div style="position:absolute;top:7.48px;font-family:'Liberation Sans', sans-serif;font-size:14.2px;line-height:0;white-space:pre;color:#000;font-weight:normal;right:8.8px;">1,298.00</div>
</div>
<div style="position:absolute;left:2355px;top:663px;width:99px;height:26px;overflow:hidden;">
<div style="position:absolute;top:17.58px;font-family:'Liberation Sans', sans-serif;font-size:14.2px;line-height:0;white-space:pre;color:#000;font-weight:normal;left:8.8px;">$</div>
</div>
<div style="position:absolute;left:2355px;top:663px;width:99px;height:26px;overflow:hidden;">
<div style="position:absolute;top:17.58px;font-family:'Liberation Sans', sans-serif;font-size:14.2px;line-height:0;white-space:pre;color:#000;font-weight:normal;right:8.8px;">1,235.49</div>
</div>
<div style="position:absolute;left:2455px;top:663px;width:99px;height:26px;overflow:hidden;">
<div style="position:absolute;top:17.58px;font-family:'Liberation Sans', sans-serif;font-size:14.2px;line-height:0;white-space:pre;color:#000;font-weight:normal;left:-450.50px;width:1000px;text-align:center;">4.82%</div>
</div>
<div style="position:absolute;left:2555px;top:663px;width:99px;height:26px;overflow:hidden;">
<div style="position:absolute;top:17.58px;font-family:'Liberation Sans', sans-serif;font-size:14.2px;line-height:0;white-space:pre;color:#000;font-weight:normal;left:-450.50px;width:1000px;text-align:center;">#REF!</div>
</div>
<div style="position:absolute;left:1382px;top:690px;width:99px;height:26px;overflow:hidden;">
<div style="position:absolute;top:7.48px;font-family:'Liberation Sans', sans-serif;font-size:14.2px;line-height:0;white-space:pre;color:#000;font-weight:normal;left:4.0px;">GDL8394</div>
</div>
<div style="position:absolute;left:1482px;top:690px;width:99px;height:26px;overflow:hidden;">
<div style="position:absolute;top:7.48px;font-family:'Liberation Sans', sans-serif;font-size:14.2px;line-height:0;white-space:pre;color:#000;font-weight:normal;left:-450.50px;width:1000px;text-align:center;">2/24/2025</div>
</div>
<div style="position:absolute;left:1582px;top:690px;width:99px;height:26px;overflow:hidden;">
<div style="position:absolute;top:7.48px;font-family:'Liberation Sans', sans-serif;font-size:14.2px;line-height:0;white-space:pre;color:#000;font-weight:normal;left:4.0px;">COMPAÑIA ARIZLU, S.A. DE C.V.</div>
</div>
<div style="position:absolute;left:1682px;top:690px;width:99px;height:26px;overflow:hidden;">
<div style="position:absolute;top:7.48px;font-family:'Liberation Sans', sans-serif;font-size:14.2px;line-height:0;white-space:pre;color:#000;font-weight:normal;left:4.0px;">60</div>
</div>
<div style="position:absolute;left:1782px;top:689px;width:99px;height:27px;overflow:hidden;">
<div style="position:absolute;top:8.48px;font-family:'Liberation Sans', sans-serif;font-size:14.2px;line-height:0;white-space:pre;color:#000;font-weight:normal;left:4.0px;">CINTA MASKING</div>
</div>
<div style="position:absolute;left:1882px;top:690px;width:99px;height:26px;overflow:hidden;">
<div style="position:absolute;top:7.48px;font-family:'Liberation Sans', sans-serif;font-size:14.2px;line-height:0;white-space:pre;color:#000;font-weight:normal;left:4.0px;">4/25/2025</div>
</div>
<div style="position:absolute;left:1982px;top:690px;width:72px;height:26px;overflow:hidden;">
<div style="position:absolute;top:7.48px;font-family:'Liberation Sans', sans-serif;font-size:14.2px;line-height:0;white-space:pre;color:#000;font-weight:normal;left:4.0px;">60</div>
</div>
<div style="position:absolute;left:2055px;top:690px;width:99px;height:26px;overflow:hidden;">
<div style="position:absolute;top:7.48px;font-family:'Liberation Sans', sans-serif;font-size:14.2px;line-height:0;white-space:pre;color:#000;font-weight:normal;left:8.8px;">$</div>
</div>
<div style="position:absolute;left:2055px;top:690px;width:99px;height:26px;overflow:hidden;">
<div style="position:absolute;top:7.48px;font-family:'Liberation Sans', sans-serif;font-size:14.2px;line-height:0;white-space:pre;color:#000;font-weight:normal;right:8.8px;">2,520.00</div>
</div>
<div style="position:absolute;left:2155px;top:690px;width:99px;height:26px;overflow:hidden;">
<div style="position:absolute;top:7.48px;font-family:'Liberation Sans', sans-serif;font-size:14.2px;line-height:0;white-space:pre;color:#000;font-weight:normal;left:4.0px;">72</div>
</div>
<div style="position:absolute;left:2255px;top:690px;width:99px;height:26px;overflow:hidden;">
<div style="position:absolute;top:7.48px;font-family:'Liberation Sans', sans-serif;font-size:14.2px;line-height:0;white-space:pre;color:#000;font-weight:normal;left:8.8px;">$</div>
</div>
<div style="position:absolute;left:2255px;top:690px;width:99px;height:26px;overflow:hidden;">
<div style="position:absolute;top:7.48px;font-family:'Liberation Sans', sans-serif;font-size:14.2px;line-height:0;white-space:pre;color:#000;font-weight:normal;right:8.8px;">35.00</div>
</div>
<div style="position:absolute;left:2355px;top:690px;width:99px;height:26px;overflow:hidden;">
<div style="position:absolute;top:17.58px;font-family:'Liberation Sans', sans-serif;font-size:14.2px;line-height:0;white-space:pre;color:#000;font-weight:normal;left:8.8px;">$</div>
</div>
<div style="position:absolute;left:2355px;top:690px;width:99px;height:26px;overflow:hidden;">
<div style="position:absolute;top:17.58px;font-family:'Liberation Sans', sans-serif;font-size:14.2px;line-height:0;white-space:pre;color:#000;font-weight:normal;right:8.8px;">30.00</div>
</div>
<div style="position:absolute;left:2455px;top:690px;width:99px;height:26px;overflow:hidden;">
<div style="position:absolute;top:17.58px;font-family:'Liberation Sans', sans-serif;font-size:14.2px;line-height:0;white-space:pre;color:#000;font-weight:normal;left:-450.50px;width:1000px;text-align:center;">14.29%</div>
</div>
<div style="position:absolute;left:2555px;top:690px;width:99px;height:26px;overflow:hidden;">
<div style="position:absolute;top:17.58px;font-family:'Liberation Sans', sans-serif;font-size:14.2px;line-height:0;white-space:pre;color:#000;font-weight:normal;left:-450.50px;width:1000px;text-align:center;">#REF!</div>
</div>
<div style="position:absolute;left:1382px;top:717px;width:99px;height:26px;overflow:hidden;">
<div style="position:absolute;top:7.48px;font-family:'Liberation Sans', sans-serif;font-size:14.2px;line-height:0;white-space:pre;color:#000;font-weight:normal;left:4.0px;">GDL8394</div>
</div>
<div style="position:absolute;left:1482px;top:717px;width:99px;height:26px;overflow:hidden;">
<div style="position:absolute;top:7.48px;font-family:'Liberation Sans', sans-serif;font-size:14.2px;line-height:0;white-space:pre;color:#000;font-weight:normal;left:-450.50px;width:1000px;text-align:center;">2/24/2025</div>
</div>
<div style="position:absolute;left:1582px;top:717px;width:99px;height:26px;overflow:hidden;">
<div style="position:absolute;top:7.48px;font-family:'Liberation Sans', sans-serif;font-size:14.2px;line-height:0;white-space:pre;color:#000;font-weight:normal;left:4.0px;">COMPAÑIA ARIZLU, S.A. DE C.V.</div>
</div>
<div style="position:absolute;left:1682px;top:717px;width:99px;height:26px;overflow:hidden;">
<div style="position:absolute;top:7.48px;font-family:'Liberation Sans', sans-serif;font-size:14.2px;line-height:0;white-space:pre;color:#000;font-weight:normal;left:4.0px;">60</div>
</div>
<div style="position:absolute;left:1782px;top:716px;width:99px;height:27px;overflow:hidden;">
<div style="position:absolute;top:8.48px;font-family:'Liberation Sans', sans-serif;font-size:14.2px;line-height:0;white-space:pre;color:#000;font-weight:normal;left:4.0px;">CINTA MASKING</div>
</div>
<div style="position:absolute;left:1882px;top:717px;width:99px;height:26px;overflow:hidden;">
<div style="position:absolute;top:7.48px;font-family:'Liberation Sans', sans-serif;font-size:14.2px;line-height:0;white-space:pre;color:#000;font-weight:normal;left:4.0px;">4/25/2025</div>
</div>
<div style="position:absolute;left:1982px;top:717px;width:72px;height:26px;overflow:hidden;">
<div style="position:absolute;top:7.48px;font-family:'Liberation Sans', sans-serif;font-size:14.2px;line-height:0;white-space:pre;color:#000;font-weight:normal;left:4.0px;">60</div>
</div>
<div style="position:absolute;left:2055px;top:717px;width:99px;height:26px;overflow:hidden;">
<div style="position:absolute;top:7.48px;font-family:'Liberation Sans', sans-serif;font-size:14.2px;line-height:0;white-space:pre;color:#000;font-weight:normal;left:8.8px;">$</div>
</div>
<div style="position:absolute;left:2055px;top:717px;width:99px;height:26px;overflow:hidden;">
<div style="position:absolute;top:7.48px;font-family:'Liberation Sans', sans-serif;font-size:14.2px;line-height:0;white-space:pre;color:#000;font-weight:normal;right:8.8px;">6,300.00</div>
</div>
<div style="position:absolute;left:2155px;top:717px;width:99px;height:26px;overflow:hidden;">
<div style="position:absolute;top:7.48px;font-family:'Liberation Sans', sans-serif;font-size:14.2px;line-height:0;white-space:pre;color:#000;font-weight:normal;left:4.0px;">180</div>
</div>
<div style="position:absolute;left:2255px;top:717px;width:99px;height:26px;overflow:hidden;">
<div style="position:absolute;top:7.48px;font-family:'Liberation Sans', sans-serif;font-size:14.2px;line-height:0;white-space:pre;color:#000;font-weight:normal;left:8.8px;">$</div>
</div>
<div style="position:absolute;left:2255px;top:717px;width:99px;height:26px;overflow:hidden;">
<div style="position:absolute;top:7.48px;font-family:'Liberation Sans', sans-serif;font-size:14.2px;line-height:0;white-space:pre;color:#000;font-weight:normal;right:8.8px;">35.00</div>
</div>
<div style="position:absolute;left:2355px;top:717px;width:99px;height:26px;overflow:hidden;">
<div style="position:absolute;top:17.58px;font-family:'Liberation Sans', sans-serif;font-size:14.2px;line-height:0;white-space:pre;color:#000;font-weight:normal;left:8.8px;">$</div>
</div>
<div style="position:absolute;left:2355px;top:717px;width:99px;height:26px;overflow:hidden;">
<div style="position:absolute;top:17.58px;font-family:'Liberation Sans', sans-serif;font-size:14.2px;line-height:0;white-space:pre;color:#000;font-weight:normal;right:8.8px;">30.00</div>
</div>
<div style="position:absolute;left:2455px;top:717px;width:99px;height:26px;overflow:hidden;">
<div style="position:absolute;top:17.58px;font-family:'Liberation Sans', sans-serif;font-size:14.2px;line-height:0;white-space:pre;color:#000;font-weight:normal;left:-450.50px;width:1000px;text-align:center;">14.29%</div>
</div>
<div style="position:absolute;left:2555px;top:717px;width:99px;height:26px;overflow:hidden;">
<div style="position:absolute;top:17.58px;font-family:'Liberation Sans', sans-serif;font-size:14.2px;line-height:0;white-space:pre;color:#000;font-weight:normal;left:-450.50px;width:1000px;text-align:center;">#REF!</div>
</div>
<div style="position:absolute;left:1382px;top:744px;width:99px;height:26px;overflow:hidden;">
<div style="position:absolute;top:7.48px;font-family:'Liberation Sans', sans-serif;font-size:14.2px;line-height:0;white-space:pre;color:#000;font-weight:normal;left:4.0px;">GDL8325</div>
</div>
<div style="position:absolute;left:1482px;top:744px;width:99px;height:26px;overflow:hidden;">
<div style="position:absolute;top:7.48px;font-family:'Liberation Sans', sans-serif;font-size:14.2px;line-height:0;white-space:pre;color:#000;font-weight:normal;left:-450.50px;width:1000px;text-align:center;">2/10/2025</div>
</div>
<div style="position:absolute;left:1582px;top:744px;width:99px;height:26px;overflow:hidden;">
<div style="position:absolute;top:7.48px;font-family:'Liberation Sans', sans-serif;font-size:14.2px;line-height:0;white-space:pre;color:#000;font-weight:normal;left:4.0px;">COPELAND GUADALAJARA, S.A. DE C.V.</div>
</div>
<div style="position:absolute;left:1682px;top:744px;width:99px;height:26px;overflow:hidden;">
<div style="position:absolute;top:7.48px;font-family:'Liberation Sans', sans-serif;font-size:14.2px;line-height:0;white-space:pre;color:#000;font-weight:normal;left:4.0px;">71</div>
</div>
<div style="position:absolute;left:1782px;top:743px;width:99px;height:27px;overflow:hidden;">
<div style="position:absolute;top:8.48px;font-family:'Liberation Sans', sans-serif;font-size:14.2px;line-height:0;white-space:pre;color:#000;font-weight:normal;left:4.0px;">BOLSA PARA EMPAQUE</div>
</div>
<div style="position:absolute;left:1882px;top:744px;width:99px;height:26px;overflow:hidden;">
<div style="position:absolute;top:7.48px;font-family:'Liberation Sans', sans-serif;font-size:14.2px;line-height:0;white-space:pre;color:#000;font-weight:normal;left:4.0px;">4/24/2025</div>
</div>
<div style="position:absolute;left:1982px;top:744px;width:72px;height:26px;overflow:hidden;">
<div style="position:absolute;top:7.48px;font-family:'Liberation Sans', sans-serif;font-size:14.2px;line-height:0;white-space:pre;color:#000;font-weight:normal;left:4.0px;">73</div>
</div>
<div style="position:absolute;left:2055px;top:744px;width:99px;height:26px;overflow:hidden;">
<div style="position:absolute;top:7.48px;font-family:'Liberation Sans', sans-serif;font-size:14.2px;line-height:0;white-space:pre;color:#000;font-weight:normal;left:8.8px;">$</div>
</div>
<div style="position:absolute;left:2055px;top:744px;width:99px;height:26px;overflow:hidden;">
<div style="position:absolute;top:7.48px;font-family:'Liberation Sans', sans-serif;font-size:14.2px;line-height:0;white-space:pre;color:#000;font-weight:normal;right:8.8px;">4,184.55</div>
</div>
<div style="position:absolute;left:2155px;top:744px;width:99px;height:26px;overflow:hidden;">
<div style="position:absolute;top:7.48px;font-family:'Liberation Sans', sans-serif;font-size:14.2px;line-height:0;white-space:pre;color:#000;font-weight:normal;left:4.0px;">30</div>
</div>
<div style="position:absolute;left:2255px;top:744px;width:99px;height:26px;overflow:hidden;">
<div style="position:absolute;top:7.48px;font-family:'Liberation Sans', sans-serif;font-size:14.2px;line-height:0;white-space:pre;color:#000;font-weight:normal;right:4.0px;">133.08</div>
</div>
<div style="position:absolute;left:2355px;top:744px;width:99px;height:26px;overflow:hidden;">
<div style="position:absolute;top:17.58px;font-family:'Liberation Sans', sans-serif;font-size:14.2px;line-height:0;white-space:pre;color:#000;font-weight:normal;left:8.8px;">$</div>
</div>
<div style="position:absolute;left:2355px;top:744px;width:99px;height:26px;overflow:hidden;">
<div style="position:absolute;top:17.58px;font-family:'Liberation Sans', sans-serif;font-size:14.2px;line-height:0;white-space:pre;color:#000;font-weight:normal;right:8.8px;">108.75</div>
</div>
<div style="position:absolute;left:2455px;top:744px;width:99px;height:26px;overflow:hidden;">
<div style="position:absolute;top:17.58px;font-family:'Liberation Sans', sans-serif;font-size:14.2px;line-height:0;white-space:pre;color:#000;font-weight:normal;left:-450.50px;width:1000px;text-align:center;">22.04%</div>
</div>
<div style="position:absolute;left:2555px;top:744px;width:99px;height:26px;overflow:hidden;">
<div style="position:absolute;top:17.58px;font-family:'Liberation Sans', sans-serif;font-size:14.2px;line-height:0;white-space:pre;color:#000;font-weight:normal;left:-450.50px;width:1000px;text-align:center;">#REF!</div>
</div>
<div style="position:absolute;left:1382px;top:771px;width:99px;height:26px;overflow:hidden;">
<div style="position:absolute;top:7.48px;font-family:'Liberation Sans', sans-serif;font-size:14.2px;line-height:0;white-space:pre;color:#000;font-weight:normal;left:4.0px;">GDL8378</div>
</div>
<div style="position:absolute;left:1482px;top:771px;width:99px;height:26px;overflow:hidden;">
<div style="position:absolute;top:7.48px;font-family:'Liberation Sans', sans-serif;font-size:14.2px;line-height:0;white-space:pre;color:#000;font-weight:normal;left:-450.50px;width:1000px;text-align:center;">2/20/2025</div>
</div>
<div style="position:absolute;left:1582px;top:771px;width:99px;height:26px;overflow:hidden;">
<div style="position:absolute;top:7.48px;font-family:'Liberation Sans', sans-serif;font-size:14.2px;line-height:0;white-space:pre;color:#000;font-weight:normal;left:4.0px;">DESTILERIA TEREMANA DE AGAVE,  S. DE R.L. DE C.V.</div>
</div>
<div style="position:absolute;left:1682px;top:771px;width:99px;height:26px;overflow:hidden;">
<div style="position:absolute;top:7.48px;font-family:'Liberation Sans', sans-serif;font-size:14.2px;line-height:0;white-space:pre;color:#000;font-weight:normal;left:4.0px;">30</div>
</div>
<div style="position:absolute;left:1782px;top:770px;width:99px;height:27px;overflow:hidden;">
<div style="position:absolute;top:8.48px;font-family:'Liberation Sans', sans-serif;font-size:14.2px;line-height:0;white-space:pre;color:#000;font-weight:normal;left:4.0px;">BOLSA PARA EMPAQUE</div>
</div>
<div style="position:absolute;left:1882px;top:771px;width:99px;height:26px;overflow:hidden;">
<div style="position:absolute;top:7.48px;font-family:'Liberation Sans', sans-serif;font-size:14.2px;line-height:0;white-space:pre;color:#000;font-weight:normal;left:4.0px;">4/4/2025</div>
</div>
<div style="position:absolute;left:1982px;top:771px;width:72px;height:26px;overflow:hidden;">
<div style="position:absolute;top:7.48px;font-family:'Liberation Sans', sans-serif;font-size:14.2px;line-height:0;white-space:pre;color:#000;font-weight:normal;left:4.0px;">43</div>
</div>
<div style="position:absolute;left:2055px;top:771px;width:99px;height:26px;overflow:hidden;">
<div style="position:absolute;top:7.48px;font-family:'Liberation Sans', sans-serif;font-size:14.2px;line-height:0;white-space:pre;color:#000;font-weight:normal;left:8.8px;">$</div>
</div>
<div style="position:absolute;left:2055px;top:771px;width:99px;height:26px;overflow:hidden;">
<div style="position:absolute;top:7.48px;font-family:'Liberation Sans', sans-serif;font-size:14.2px;line-height:0;white-space:pre;color:#000;font-weight:normal;right:8.8px;">66,863.61</div>
</div>
<div style="position:absolute;left:2155px;top:771px;width:99px;height:26px;overflow:hidden;">
<div style="position:absolute;top:7.48px;font-family:'Liberation Sans', sans-serif;font-size:14.2px;line-height:0;white-space:pre;color:#000;font-weight:normal;left:4.0px;">600</div>
</div>
<div style="position:absolute;left:2255px;top:771px;width:99px;height:26px;overflow:hidden;">
<div style="position:absolute;top:7.48px;font-family:'Liberation Sans', sans-serif;font-size:14.2px;line-height:0;white-space:pre;color:#000;font-weight:normal;right:4.0px;">112.5124</div>
</div>
<div style="position:absolute;left:2355px;top:771px;width:99px;height:26px;overflow:hidden;">
<div style="position:absolute;top:17.58px;font-family:'Liberation Sans', sans-serif;font-size:14.2px;line-height:0;white-space:pre;color:#000;font-weight:normal;left:8.8px;">$</div>
</div>
<div style="position:absolute;left:2355px;top:771px;width:99px;height:26px;overflow:hidden;">
<div style="position:absolute;top:17.58px;font-family:'Liberation Sans', sans-serif;font-size:14.2px;line-height:0;white-space:pre;color:#000;font-weight:normal;right:8.8px;">81.18</div>
</div>
<div style="position:absolute;left:2455px;top:771px;width:99px;height:26px;overflow:hidden;">
<div style="position:absolute;top:17.58px;font-family:'Liberation Sans', sans-serif;font-size:14.2px;line-height:0;white-space:pre;color:#000;font-weight:normal;left:-450.50px;width:1000px;text-align:center;">27.15%</div>
</div>
<div style="position:absolute;left:2555px;top:771px;width:99px;height:26px;overflow:hidden;">
<div style="position:absolute;top:17.58px;font-family:'Liberation Sans', sans-serif;font-size:14.2px;line-height:0;white-space:pre;color:#000;font-weight:normal;left:-450.50px;width:1000px;text-align:center;">#REF!</div>
</div>
<div style="position:absolute;left:1382px;top:798px;width:99px;height:26px;overflow:hidden;">
<div style="position:absolute;top:7.48px;font-family:'Liberation Sans', sans-serif;font-size:14.2px;line-height:0;white-space:pre;color:#000;font-weight:normal;left:4.0px;">GDL8527</div>
</div>
<div style="position:absolute;left:1482px;top:798px;width:99px;height:26px;overflow:hidden;">
<div style="position:absolute;top:7.48px;font-family:'Liberation Sans', sans-serif;font-size:14.2px;line-height:0;white-space:pre;color:#000;font-weight:normal;left:-450.50px;width:1000px;text-align:center;">3/19/2025</div>
</div>
<div style="position:absolute;left:1582px;top:798px;width:99px;height:26px;overflow:hidden;">
<div style="position:absolute;top:7.48px;font-family:'Liberation Sans', sans-serif;font-size:14.2px;line-height:0;white-space:pre;color:#000;font-weight:normal;left:4.0px;">DESTILERIA TEREMANA DE AGAVE,  S. DE R.L. DE C.V.</div>
</div>
<div style="position:absolute;left:1682px;top:798px;width:99px;height:26px;overflow:hidden;">
<div style="position:absolute;top:7.48px;font-family:'Liberation Sans', sans-serif;font-size:14.2px;line-height:0;white-space:pre;color:#000;font-weight:normal;left:4.0px;">30</div>
</div>
<div style="position:absolute;left:1782px;top:797px;width:99px;height:27px;overflow:hidden;">
<div style="position:absolute;top:8.48px;font-family:'Liberation Sans', sans-serif;font-size:14.2px;line-height:0;white-space:pre;color:#000;font-weight:normal;left:4.0px;">BOLSA PARA EMPAQUE</div>
</div>
<div style="position:absolute;left:1882px;top:798px;width:99px;height:26px;overflow:hidden;">
<div style="position:absolute;top:7.48px;font-family:'Liberation Sans', sans-serif;font-size:14.2px;line-height:0;white-space:pre;color:#000;font-weight:normal;left:4.0px;">4/4/2025</div>
</div>
<div style="position:absolute;left:1982px;top:798px;width:72px;height:26px;overflow:hidden;">
<div style="position:absolute;top:7.48px;font-family:'Liberation Sans', sans-serif;font-size:14.2px;line-height:0;white-space:pre;color:#000;font-weight:normal;left:4.0px;">16</div>
</div>
<div style="position:absolute;left:2055px;top:798px;width:99px;height:26px;overflow:hidden;">
<div style="position:absolute;top:7.48px;font-family:'Liberation Sans', sans-serif;font-size:14.2px;line-height:0;white-space:pre;color:#000;font-weight:normal;left:8.8px;">$</div>
</div>
<div style="position:absolute;left:2055px;top:798px;width:99px;height:26px;overflow:hidden;">
<div style="position:absolute;top:7.48px;font-family:'Liberation Sans', sans-serif;font-size:14.2px;line-height:0;white-space:pre;color:#000;font-weight:normal;right:8.8px;">65,568.69</div>
</div>
<div style="position:absolute;left:2155px;top:798px;width:99px;height:26px;overflow:hidden;">
<div style="position:absolute;top:7.48px;font-family:'Liberation Sans', sans-serif;font-size:14.2px;line-height:0;white-space:pre;color:#000;font-weight:normal;left:4.0px;">600</div>
</div>
<div style="position:absolute;left:2255px;top:798px;width:99px;height:26px;overflow:hidden;">
<div style="position:absolute;top:7.48px;font-family:'Liberation Sans', sans-serif;font-size:14.2px;line-height:0;white-space:pre;color:#000;font-weight:normal;right:4.0px;">112.5124</div>
</div>
<div style="position:absolute;left:2355px;top:798px;width:99px;height:26px;overflow:hidden;">
<div style="position:absolute;top:17.58px;font-family:'Liberation Sans', sans-serif;font-size:14.2px;line-height:0;white-space:pre;color:#000;font-weight:normal;left:8.8px;">$</div>
</div>
<div style="position:absolute;left:2355px;top:798px;width:99px;height:26px;overflow:hidden;">
<div style="position:absolute;top:17.58px;font-family:'Liberation Sans', sans-serif;font-size:14.2px;line-height:0;white-space:pre;color:#000;font-weight:normal;right:8.8px;">82.26</div>
</div>
<div style="position:absolute;left:2455px;top:798px;width:99px;height:26px;overflow:hidden;">
<div style="position:absolute;top:17.58px;font-family:'Liberation Sans', sans-serif;font-size:14.2px;line-height:0;white-space:pre;color:#000;font-weight:normal;left:-450.50px;width:1000px;text-align:center;">24.73%</div>
</div>
<div style="position:absolute;left:2555px;top:798px;width:99px;height:26px;overflow:hidden;">
<div style="position:absolute;top:17.58px;font-family:'Liberation Sans', sans-serif;font-size:14.2px;line-height:0;white-space:pre;color:#000;font-weight:normal;left:-450.50px;width:1000px;text-align:center;">#REF!</div>
</div>
<div style="position:absolute;left:1382px;top:825px;width:99px;height:26px;overflow:hidden;">
<div style="position:absolute;top:7.48px;font-family:'Liberation Sans', sans-serif;font-size:14.2px;line-height:0;white-space:pre;color:#000;font-weight:normal;left:4.0px;">GDL8527</div>
</div>
<div style="position:absolute;left:1482px;top:825px;width:99px;height:26px;overflow:hidden;">
<div style="position:absolute;top:7.48px;font-family:'Liberation Sans', sans-serif;font-size:14.2px;line-height:0;white-space:pre;color:#000;font-weight:normal;left:-450.50px;width:1000px;text-align:center;">3/19/2025</div>
</div>
<div style="position:absolute;left:1582px;top:825px;width:99px;height:26px;overflow:hidden;">
<div style="position:absolute;top:7.48px;font-family:'Liberation Sans', sans-serif;font-size:14.2px;line-height:0;white-space:pre;color:#000;font-weight:normal;left:4.0px;">DESTILERIA TEREMANA DE AGAVE,  S. DE R.L. DE C.V.</div>
</div>
<div style="position:absolute;left:1682px;top:825px;width:99px;height:26px;overflow:hidden;">
<div style="position:absolute;top:7.48px;font-family:'Liberation Sans', sans-serif;font-size:14.2px;line-height:0;white-space:pre;color:#000;font-weight:normal;left:4.0px;">30</div>
</div>
<div style="position:absolute;left:1782px;top:824px;width:99px;height:27px;overflow:hidden;">
<div style="position:absolute;top:8.48px;font-family:'Liberation Sans', sans-serif;font-size:14.2px;line-height:0;white-space:pre;color:#000;font-weight:normal;left:4.0px;">FLEJE NEGRO</div>
</div>
<div style="position:absolute;left:1882px;top:825px;width:99px;height:26px;overflow:hidden;">
<div style="position:absolute;top:7.48px;font-family:'Liberation Sans', sans-serif;font-size:14.2px;line-height:0;white-space:pre;color:#000;font-weight:normal;left:4.0px;">4/4/2025</div>
</div>
<div style="position:absolute;left:1982px;top:825px;width:72px;height:26px;overflow:hidden;">
<div style="position:absolute;top:7.48px;font-family:'Liberation Sans', sans-serif;font-size:14.2px;line-height:0;white-space:pre;color:#000;font-weight:normal;left:4.0px;">16</div>
</div>
<div style="position:absolute;left:2055px;top:825px;width:99px;height:26px;overflow:hidden;">
<div style="position:absolute;top:7.48px;font-family:'Liberation Sans', sans-serif;font-size:14.2px;line-height:0;white-space:pre;color:#000;font-weight:normal;left:8.8px;">$</div>
</div>
<div style="position:absolute;left:2055px;top:825px;width:99px;height:26px;overflow:hidden;">
<div style="position:absolute;top:7.48px;font-family:'Liberation Sans', sans-serif;font-size:14.2px;line-height:0;white-space:pre;color:#000;font-weight:normal;right:8.8px;">41,646.05</div>
</div>
<div style="position:absolute;left:2155px;top:825px;width:99px;height:26px;overflow:hidden;">
<div style="position:absolute;top:7.48px;font-family:'Liberation Sans', sans-serif;font-size:14.2px;line-height:0;white-space:pre;color:#000;font-weight:normal;left:4.0px;">40</div>
</div>
<div style="position:absolute;left:2255px;top:825px;width:99px;height:26px;overflow:hidden;">
<div style="position:absolute;top:7.48px;font-family:'Liberation Sans', sans-serif;font-size:14.2px;line-height:0;white-space:pre;color:#000;font-weight:normal;right:4.0px;">1072.36</div>
</div>
<div style="position:absolute;left:2355px;top:825px;width:99px;height:26px;overflow:hidden;">
<div style="position:absolute;top:17.58px;font-family:'Liberation Sans', sans-serif;font-size:14.2px;line-height:0;white-space:pre;color:#000;font-weight:normal;left:8.8px;">$</div>
</div>
<div style="position:absolute;left:2355px;top:825px;width:99px;height:26px;overflow:hidden;">
<div style="position:absolute;top:17.58px;font-family:'Liberation Sans', sans-serif;font-size:14.2px;line-height:0;white-space:pre;color:#000;font-weight:normal;right:8.8px;">747.70</div>
</div>
<div style="position:absolute;left:2455px;top:825px;width:99px;height:26px;overflow:hidden;">
<div style="position:absolute;top:17.58px;font-family:'Liberation Sans', sans-serif;font-size:14.2px;line-height:0;white-space:pre;color:#000;font-weight:normal;left:-450.50px;width:1000px;text-align:center;">28.18%</div>
</div>
<div style="position:absolute;left:2555px;top:825px;width:99px;height:26px;overflow:hidden;">
<div style="position:absolute;top:17.58px;font-family:'Liberation Sans', sans-serif;font-size:14.2px;line-height:0;white-space:pre;color:#000;font-weight:normal;left:-450.50px;width:1000px;text-align:center;">#REF!</div>
</div>
<div style="position:absolute;left:1382px;top:852px;width:99px;height:26px;overflow:hidden;">
<div style="position:absolute;top:7.48px;font-family:'Liberation Sans', sans-serif;font-size:14.2px;line-height:0;white-space:pre;color:#000;font-weight:normal;left:4.0px;">GDL8656</div>
</div>
<div style="position:absolute;left:1482px;top:852px;width:99px;height:26px;overflow:hidden;">
<div style="position:absolute;top:7.48px;font-family:'Liberation Sans', sans-serif;font-size:14.2px;line-height:0;white-space:pre;color:#000;font-weight:normal;left:-450.50px;width:1000px;text-align:center;">4/7/2025</div>
</div>
<div style="position:absolute;left:1582px;top:852px;width:99px;height:26px;overflow:hidden;">
<div style="position:absolute;top:7.48px;font-family:'Liberation Sans', sans-serif;font-size:14.2px;line-height:0;white-space:pre;color:#000;font-weight:normal;left:4.0px;">ELIZABETH AGUILAR</div>
</div>
<div style="position:absolute;left:1682px;top:852px;width:99px;height:26px;overflow:hidden;">
<div style="position:absolute;top:7.48px;font-family:'Liberation Sans', sans-serif;font-size:14.2px;line-height:0;white-space:pre;color:#000;font-weight:normal;left:4.0px;">0</div>
</div>
<div style="position:absolute;left:1782px;top:851px;width:99px;height:27px;overflow:hidden;">
<div style="position:absolute;top:8.48px;font-family:'Liberation Sans', sans-serif;font-size:14.2px;line-height:0;white-space:pre;color:#000;font-weight:normal;left:4.0px;">PELICULA MANUAL</div>
</div>
<div style="position:absolute;left:1882px;top:852px;width:99px;height:26px;overflow:hidden;">
<div style="position:absolute;top:7.48px;font-family:'Liberation Sans', sans-serif;font-size:14.2px;line-height:0;white-space:pre;color:#000;font-weight:normal;left:4.0px;">4/7/2025</div>
</div>
<div style="position:absolute;left:1982px;top:852px;width:72px;height:26px;overflow:hidden;">
<div style="position:absolute;top:7.48px;font-family:'Liberation Sans', sans-serif;font-size:14.2px;line-height:0;white-space:pre;color:#000;font-weight:normal;left:4.0px;">0</div>
</div>
<div style="position:absolute;left:2055px;top:852px;width:99px;height:26px;overflow:hidden;">
<div style="position:absolute;top:7.48px;font-family:'Liberation Sans', sans-serif;font-size:14.2px;line-height:0;white-space:pre;color:#000;font-weight:normal;left:8.8px;">$</div>
</div>
<div style="position:absolute;left:2055px;top:852px;width:99px;height:26px;overflow:hidden;">
<div style="position:absolute;top:7.48px;font-family:'Liberation Sans', sans-serif;font-size:14.2px;line-height:0;white-space:pre;color:#000;font-weight:normal;right:8.8px;">1,568.24</div>
</div>
<div style="position:absolute;left:2155px;top:852px;width:99px;height:26px;overflow:hidden;">
<div style="position:absolute;top:7.48px;font-family:'Liberation Sans', sans-serif;font-size:14.2px;line-height:0;white-space:pre;color:#000;font-weight:normal;left:4.0px;">16</div>
</div>
<div style="position:absolute;left:2255px;top:852px;width:99px;height:26px;overflow:hidden;">
<div style="position:absolute;top:7.48px;font-family:'Liberation Sans', sans-serif;font-size:14.2px;line-height:0;white-space:pre;color:#000;font-weight:normal;left:8.8px;">$</div>
</div>
<div style="position:absolute;left:2255px;top:852px;width:99px;height:26px;overflow:hidden;">
<div style="position:absolute;top:7.48px;font-family:'Liberation Sans', sans-serif;font-size:14.2px;line-height:0;white-space:pre;color:#000;font-weight:normal;right:8.8px;">98.02</div>
</div>
<div style="position:absolute;left:2355px;top:852px;width:99px;height:26px;overflow:hidden;">
<div style="position:absolute;top:17.58px;font-family:'Liberation Sans', sans-serif;font-size:14.2px;line-height:0;white-space:pre;color:#000;font-weight:normal;left:8.8px;">$</div>
</div>
<div style="position:absolute;left:2355px;top:852px;width:99px;height:26px;overflow:hidden;">
<div style="position:absolute;top:17.58px;font-family:'Liberation Sans', sans-serif;font-size:14.2px;line-height:0;white-space:pre;color:#000;font-weight:normal;right:8.8px;">61.78</div>
</div>
<div style="position:absolute;left:2455px;top:852px;width:99px;height:26px;overflow:hidden;">
<div style="position:absolute;top:17.58px;font-family:'Liberation Sans', sans-serif;font-size:14.2px;line-height:0;white-space:pre;color:#000;font-weight:normal;left:-450.50px;width:1000px;text-align:center;">36.97%</div>
</div>
<div style="position:absolute;left:2555px;top:852px;width:99px;height:26px;overflow:hidden;">
<div style="position:absolute;top:17.58px;font-family:'Liberation Sans', sans-serif;font-size:14.2px;line-height:0;white-space:pre;color:#000;font-weight:normal;left:-450.50px;width:1000px;text-align:center;">#REF!</div>
</div>
<div style="position:absolute;left:1382px;top:879px;width:99px;height:26px;overflow:hidden;">
<div style="position:absolute;top:7.48px;font-family:'Liberation Sans', sans-serif;font-size:14.2px;line-height:0;white-space:pre;color:#000;font-weight:normal;left:4.0px;">GDL8390</div>
</div>
<div style="position:absolute;left:1482px;top:879px;width:99px;height:26px;overflow:hidden;">
<div style="position:absolute;top:7.48px;font-family:'Liberation Sans', sans-serif;font-size:14.2px;line-height:0;white-space:pre;color:#000;font-weight:normal;left:-450.50px;width:1000px;text-align:center;">2/24/2025</div>
</div>
<div style="position:absolute;left:1582px;top:879px;width:99px;height:26px;overflow:hidden;">
<div style="position:absolute;top:7.48px;font-family:'Liberation Sans', sans-serif;font-size:14.2px;line-height:0;white-space:pre;color:#000;font-weight:normal;left:4.0px;">GRUPO SOLAVE,  S.A. DE C.V.</div>
</div>
<div style="position:absolute;left:1682px;top:879px;width:99px;height:26px;overflow:hidden;">
<div style="position:absolute;top:7.48px;font-family:'Liberation Sans', sans-serif;font-size:14.2px;line-height:0;white-space:pre;color:#000;font-weight:normal;left:4.0px;">30</div>
</div>
<div style="position:absolute;left:1782px;top:878px;width:99px;height:27px;overflow:hidden;">
<div style="position:absolute;top:8.48px;font-family:'Liberation Sans', sans-serif;font-size:14.2px;line-height:0;white-space:pre;color:#000;font-weight:normal;left:4.0px;">FLEJE DE POLIPROPILENO</div>
</div>
<div style="position:absolute;left:1882px;top:879px;width:99px;height:26px;overflow:hidden;">
<div style="position:absolute;top:7.48px;font-family:'Liberation Sans', sans-serif;font-size:14.2px;line-height:0;white-space:pre;color:#000;font-weight:normal;left:4.0px;">4/1/2025</div>
</div>
<div style="position:absolute;left:1982px;top:879px;width:72px;height:26px;overflow:hidden;">
<div style="position:absolute;top:7.48px;font-family:'Liberation Sans', sans-serif;font-size:14.2px;line-height:0;white-space:pre;color:#000;font-weight:normal;left:4.0px;">36</div>
</div>
<div style="position:absolute;left:2055px;top:879px;width:99px;height:26px;overflow:hidden;">
<div style="position:absolute;top:7.48px;font-family:'Liberation Sans', sans-serif;font-size:14.2px;line-height:0;white-space:pre;color:#000;font-weight:normal;left:8.8px;">$</div>
</div>
<div style="position:absolute;left:2055px;top:879px;width:99px;height:26px;overflow:hidden;">
<div style="position:absolute;top:7.48px;font-family:'Liberation Sans', sans-serif;font-size:14.2px;line-height:0;white-space:pre;color:#000;font-weight:normal;right:8.8px;">1,975.00</div>
</div>
<div style="position:absolute;left:2155px;top:879px;width:99px;height:26px;overflow:hidden;">
<div style="position:absolute;top:7.48px;font-family:'Liberation Sans', sans-serif;font-size:14.2px;line-height:0;white-space:pre;color:#000;font-weight:normal;left:4.0px;">5</div>
</div>
<div style="position:absolute;left:2255px;top:879px;width:99px;height:26px;overflow:hidden;">
<div style="position:absolute;top:7.48px;font-family:'Liberation Sans', sans-serif;font-size:14.2px;line-height:0;white-space:pre;color:#000;font-weight:normal;left:8.8px;">$</div>
</div>
<div style="position:absolute;left:2255px;top:879px;width:99px;height:26px;overflow:hidden;">
<div style="position:absolute;top:7.48px;font-family:'Liberation Sans', sans-serif;font-size:14.2px;line-height:0;white-space:pre;color:#000;font-weight:normal;right:8.8px;">395.00</div>
</div>
<div style="position:absolute;left:2355px;top:879px;width:99px;height:26px;overflow:hidden;">
<div style="position:absolute;top:17.58px;font-family:'Liberation Sans', sans-serif;font-size:14.2px;line-height:0;white-space:pre;color:#000;font-weight:normal;left:8.8px;">$</div>
</div>
<div style="position:absolute;left:2355px;top:879px;width:99px;height:26px;overflow:hidden;">
<div style="position:absolute;top:17.58px;font-family:'Liberation Sans', sans-serif;font-size:14.2px;line-height:0;white-space:pre;color:#000;font-weight:normal;right:8.8px;">320.00</div>
</div>
<div style="position:absolute;left:2455px;top:879px;width:99px;height:26px;overflow:hidden;">
<div style="position:absolute;top:17.58px;font-family:'Liberation Sans', sans-serif;font-size:14.2px;line-height:0;white-space:pre;color:#000;font-weight:normal;left:-450.50px;width:1000px;text-align:center;">18.99%</div>
</div>
<div style="position:absolute;left:2555px;top:879px;width:99px;height:26px;overflow:hidden;">
<div style="position:absolute;top:17.58px;font-family:'Liberation Sans', sans-serif;font-size:14.2px;line-height:0;white-space:pre;color:#000;font-weight:normal;left:-450.50px;width:1000px;text-align:center;">#REF!</div>
</div>
<div style="position:absolute;left:1382px;top:906px;width:99px;height:27px;overflow:hidden;">
<div style="position:absolute;top:7.48px;font-family:'Liberation Sans', sans-serif;font-size:14.2px;line-height:0;white-space:pre;color:#000;font-weight:normal;left:4.0px;">GDL8390</div>
</div>
<div style="position:absolute;left:1482px;top:906px;width:99px;height:27px;overflow:hidden;">
<div style="position:absolute;top:7.48px;font-family:'Liberation Sans', sans-serif;font-size:14.2px;line-height:0;white-space:pre;color:#000;font-weight:normal;left:-450.50px;width:1000px;text-align:center;">2/24/2025</div>
</div>
<div style="position:absolute;left:1582px;top:906px;width:99px;height:27px;overflow:hidden;">
<div style="position:absolute;top:7.48px;font-family:'Liberation Sans', sans-serif;font-size:14.2px;line-height:0;white-space:pre;color:#000;font-weight:normal;left:4.0px;">GRUPO SOLAVE,  S.A. DE C.V.</div>
</div>
<div style="position:absolute;left:1682px;top:906px;width:99px;height:27px;overflow:hidden;">
<div style="position:absolute;top:7.48px;font-family:'Liberation Sans', sans-serif;font-size:14.2px;line-height:0;white-space:pre;color:#000;font-weight:normal;left:4.0px;">30</div>
</div>
<div style="position:absolute;left:1782px;top:905px;width:99px;height:28px;overflow:hidden;">
<div style="position:absolute;top:8.48px;font-family:'Liberation Sans', sans-serif;font-size:14.2px;line-height:0;white-space:pre;color:#000;font-weight:normal;left:4.0px;">PELICULA MANUAL</div>
</div>
<div style="position:absolute;left:1882px;top:906px;width:99px;height:27px;overflow:hidden;">
<div style="position:absolute;top:7.48px;font-family:'Liberation Sans', sans-serif;font-size:14.2px;line-height:0;white-space:pre;color:#000;font-weight:normal;left:4.0px;">4/1/2025</div>
</div>
<div style="position:absolute;left:1982px;top:906px;width:72px;height:27px;overflow:hidden;">
<div style="position:absolute;top:7.48px;font-family:'Liberation Sans', sans-serif;font-size:14.2px;line-height:0;white-space:pre;color:#000;font-weight:normal;left:4.0px;">36</div>
</div>
<div style="position:absolute;left:2055px;top:906px;width:99px;height:27px;overflow:hidden;">
<div style="position:absolute;top:7.48px;font-family:'Liberation Sans', sans-serif;font-size:14.2px;line-height:0;white-space:pre;color:#000;font-weight:normal;left:8.8px;">$</div>
</div>
<div style="position:absolute;left:2055px;top:906px;width:99px;height:27px;overflow:hidden;">
<div style="position:absolute;top:7.48px;font-family:'Liberation Sans', sans-serif;font-size:14.2px;line-height:0;white-space:pre;color:#000;font-weight:normal;right:8.8px;">1,713.60</div>
</div>
<div style="position:absolute;left:2155px;top:906px;width:99px;height:27px;overflow:hidden;">
<div style="position:absolute;top:7.48px;font-family:'Liberation Sans', sans-serif;font-size:14.2px;line-height:0;white-space:pre;color:#000;font-weight:normal;left:4.0px;">16</div>
</div>
<div style="position:absolute;left:2255px;top:906px;width:99px;height:27px;overflow:hidden;">
<div style="position:absolute;top:7.48px;font-family:'Liberation Sans', sans-serif;font-size:14.2px;line-height:0;white-space:pre;color:#000;font-weight:normal;left:8.8px;">$</div>
</div>
<div style="position:absolute;left:2255px;top:906px;width:99px;height:27px;overflow:hidden;">
<div style="position:absolute;top:7.48px;font-family:'Liberation Sans', sans-serif;font-size:14.2px;line-height:0;white-space:pre;color:#000;font-weight:normal;right:8.8px;">107.10</div>
</div>
<div style="position:absolute;left:2355px;top:906px;width:99px;height:27px;overflow:hidden;">
<div style="position:absolute;top:18.58px;font-family:'Liberation Sans', sans-serif;font-size:14.2px;line-height:0;white-space:pre;color:#000;font-weight:normal;left:8.8px;">$</div>
</div>
<div style="position:absolute;left:2355px;top:906px;width:99px;height:27px;overflow:hidden;">
<div style="position:absolute;top:18.58px;font-family:'Liberation Sans', sans-serif;font-size:14.2px;line-height:0;white-space:pre;color:#000;font-weight:normal;right:8.8px;">86.49</div>
</div>
<div style="position:absolute;left:2455px;top:906px;width:99px;height:27px;overflow:hidden;">
<div style="position:absolute;top:18.58px;font-family:'Liberation Sans', sans-serif;font-size:14.2px;line-height:0;white-space:pre;color:#000;font-weight:normal;left:-450.50px;width:1000px;text-align:center;">19.24%</div>
</div>
<div style="position:absolute;left:2555px;top:906px;width:99px;height:27px;overflow:hidden;">
<div style="position:absolute;top:18.58px;font-family:'Liberation Sans', sans-serif;font-size:14.2px;line-height:0;white-space:pre;color:#000;font-weight:normal;left:-450.50px;width:1000px;text-align:center;">#REF!</div>
</div>
<div style="position:absolute;left:1382px;top:934px;width:99px;height:27px;overflow:hidden;">
<div style="position:absolute;top:7.48px;font-family:'Liberation Sans', sans-serif;font-size:14.2px;line-height:0;white-space:pre;color:#000;font-weight:normal;left:4.0px;">GDL8390</div>
</div>
<div style="position:absolute;left:1482px;top:934px;width:99px;height:27px;overflow:hidden;">
<div style="position:absolute;top:7.48px;font-family:'Liberation Sans', sans-serif;font-size:14.2px;line-height:0;white-space:pre;color:#000;font-weight:normal;left:-450.50px;width:1000px;text-align:center;">2/24/2025</div>
</div>
<div style="position:absolute;left:1582px;top:934px;width:99px;height:27px;overflow:hidden;">
<div style="position:absolute;top:7.48px;font-family:'Liberation Sans', sans-serif;font-size:14.2px;line-height:0;white-space:pre;color:#000;font-weight:normal;left:4.0px;">GRUPO SOLAVE,  S.A. DE C.V.</div>
</div>
<div style="position:absolute;left:1682px;top:934px;width:99px;height:27px;overflow:hidden;">
<div style="position:absolute;top:7.48px;font-family:'Liberation Sans', sans-serif;font-size:14.2px;line-height:0;white-space:pre;color:#000;font-weight:normal;left:4.0px;">30</div>
</div>
<div style="position:absolute;left:1782px;top:933px;width:99px;height:28px;overflow:hidden;">
<div style="position:absolute;top:8.48px;font-family:'Liberation Sans', sans-serif;font-size:14.2px;line-height:0;white-space:pre;color:#000;font-weight:normal;left:4.0px;">CINTA ADHESIVA</div>
</div>
<div style="position:absolute;left:1882px;top:934px;width:99px;height:27px;overflow:hidden;">
<div style="position:absolute;top:7.48px;font-family:'Liberation Sans', sans-serif;font-size:14.2px;line-height:0;white-space:pre;color:#000;font-weight:normal;left:4.0px;">4/1/2025</div>
</div>
<div style="position:absolute;left:1982px;top:934px;width:72px;height:27px;overflow:hidden;">
<div style="position:absolute;top:7.48px;font-family:'Liberation Sans', sans-serif;font-size:14.2px;line-height:0;white-space:pre;color:#000;font-weight:normal;left:4.0px;">36</div>
</div>
<div style="position:absolute;left:2055px;top:934px;width:99px;height:27px;overflow:hidden;">
<div style="position:absolute;top:7.48px;font-family:'Liberation Sans', sans-serif;font-size:14.2px;line-height:0;white-space:pre;color:#000;font-weight:normal;left:8.8px;">$</div>
</div>
<div style="position:absolute;left:2055px;top:934px;width:99px;height:27px;overflow:hidden;">
<div style="position:absolute;top:7.48px;font-family:'Liberation Sans', sans-serif;font-size:14.2px;line-height:0;white-space:pre;color:#000;font-weight:normal;right:8.8px;">4,332.00</div>
</div>
<div style="position:absolute;left:2155px;top:934px;width:99px;height:27px;overflow:hidden;">
<div style="position:absolute;top:7.48px;font-family:'Liberation Sans', sans-serif;font-size:14.2px;line-height:0;white-space:pre;color:#000;font-weight:normal;left:4.0px;">24</div>
</div>
<div style="position:absolute;left:2255px;top:934px;width:99px;height:27px;overflow:hidden;">
<div style="position:absolute;top:7.48px;font-family:'Liberation Sans', sans-serif;font-size:14.2px;line-height:0;white-space:pre;color:#000;font-weight:normal;left:8.8px;">$</div>
</div>
<div style="position:absolute;left:2255px;top:934px;width:99px;height:27px;overflow:hidden;">
<div style="position:absolute;top:7.48px;font-family:'Liberation Sans', sans-serif;font-size:14.2px;line-height:0;white-space:pre;color:#000;font-weight:normal;right:8.8px;">180.50</div>
</div>
<div style="position:absolute;left:2355px;top:934px;width:99px;height:27px;overflow:hidden;">
<div style="position:absolute;top:18.58px;font-family:'Liberation Sans', sans-serif;font-size:14.2px;line-height:0;white-space:pre;color:#000;font-weight:normal;left:8.8px;">$</div>
</div>
<div style="position:absolute;left:2355px;top:934px;width:99px;height:27px;overflow:hidden;">
<div style="position:absolute;top:18.58px;font-family:'Liberation Sans', sans-serif;font-size:14.2px;line-height:0;white-space:pre;color:#000;font-weight:normal;right:8.8px;">142.30</div>
</div>
<div style="position:absolute;left:2455px;top:934px;width:99px;height:27px;overflow:hidden;">
<div style="position:absolute;top:18.58px;font-family:'Liberation Sans', sans-serif;font-size:14.2px;line-height:0;white-space:pre;color:#000;font-weight:normal;left:-450.50px;width:1000px;text-align:center;">21.16%</div>
</div>
<div style="position:absolute;left:2555px;top:934px;width:99px;height:27px;overflow:hidden;">
<div style="position:absolute;top:18.58px;font-family:'Liberation Sans', sans-serif;font-size:14.2px;line-height:0;white-space:pre;color:#000;font-weight:normal;left:-450.50px;width:1000px;text-align:center;">#REF!</div>
</div>
<div style="position:absolute;left:1382px;top:962px;width:99px;height:27px;overflow:hidden;">
<div style="position:absolute;top:7.48px;font-family:'Liberation Sans', sans-serif;font-size:14.2px;line-height:0;white-space:pre;color:#000;font-weight:normal;left:4.0px;">GDL8390</div>
</div>
<div style="position:absolute;left:1482px;top:962px;width:99px;height:27px;overflow:hidden;">
<div style="position:absolute;top:7.48px;font-family:'Liberation Sans', sans-serif;font-size:14.2px;line-height:0;white-space:pre;color:#000;font-weight:normal;left:-450.50px;width:1000px;text-align:center;">2/24/2025</div>
</div>
<div style="position:absolute;left:1582px;top:962px;width:99px;height:27px;overflow:hidden;">
<div style="position:absolute;top:7.48px;font-family:'Liberation Sans', sans-serif;font-size:14.2px;line-height:0;white-space:pre;color:#000;font-weight:normal;left:4.0px;">GRUPO SOLAVE,  S.A. DE C.V.</div>
</div>
<div style="position:absolute;left:1682px;top:962px;width:99px;height:27px;overflow:hidden;">
<div style="position:absolute;top:7.48px;font-family:'Liberation Sans', sans-serif;font-size:14.2px;line-height:0;white-space:pre;color:#000;font-weight:normal;left:4.0px;">30</div>
</div>
<div style="position:absolute;left:1782px;top:961px;width:99px;height:28px;overflow:hidden;">
<div style="position:absolute;top:8.48px;font-family:'Liberation Sans', sans-serif;font-size:14.2px;line-height:0;white-space:pre;color:#000;font-weight:normal;left:4.0px;">PELICULA AUTOADHERIBLE</div>
</div>
<div style="position:absolute;left:1882px;top:962px;width:99px;height:27px;overflow:hidden;">
<div style="position:absolute;top:7.48px;font-family:'Liberation Sans', sans-serif;font-size:14.2px;line-height:0;white-space:pre;color:#000;font-weight:normal;left:4.0px;">4/1/2025</div>
</div>
<div style="position:absolute;left:1982px;top:962px;width:72px;height:27px;overflow:hidden;">
<div style="position:absolute;top:7.48px;font-family:'Liberation Sans', sans-serif;font-size:14.2px;line-height:0;white-space:pre;color:#000;font-weight:normal;left:4.0px;">36</div>
</div>
<div style="position:absolute;left:2055px;top:962px;width:99px;height:27px;overflow:hidden;">
<div style="position:absolute;top:7.48px;font-family:'Liberation Sans', sans-serif;font-size:14.2px;line-height:0;white-space:pre;color:#000;font-weight:normal;left:8.8px;">$</div>
</div>
<div style="position:absolute;left:2055px;top:962px;width:99px;height:27px;overflow:hidden;">
<div style="position:absolute;top:7.48px;font-family:'Liberation Sans', sans-serif;font-size:14.2px;line-height:0;white-space:pre;color:#000;font-weight:normal;right:8.8px;">4,093.00</div>
</div>
<div style="position:absolute;left:2155px;top:962px;width:99px;height:27px;overflow:hidden;">
<div style="position:absolute;top:7.48px;font-family:'Liberation Sans', sans-serif;font-size:14.2px;line-height:0;white-space:pre;color:#000;font-weight:normal;left:4.0px;">5</div>
</div>
<div style="position:absolute;left:2255px;top:962px;width:99px;height:27px;overflow:hidden;">
<div style="position:absolute;top:7.48px;font-family:'Liberation Sans', sans-serif;font-size:14.2px;line-height:0;white-space:pre;color:#000;font-weight:normal;left:8.8px;">$</div>
</div>
<div style="position:absolute;left:2255px;top:962px;width:99px;height:27px;overflow:hidden;">
<div style="position:absolute;top:7.48px;font-family:'Liberation Sans', sans-serif;font-size:14.2px;line-height:0;white-space:pre;color:#000;font-weight:normal;right:8.8px;">818.60</div>
</div>
<div style="position:absolute;left:2355px;top:962px;width:99px;height:27px;overflow:hidden;">
<div style="position:absolute;top:18.58px;font-family:'Liberation Sans', sans-serif;font-size:14.2px;line-height:0;white-space:pre;color:#000;font-weight:normal;left:8.8px;">$</div>
</div>
<div style="position:absolute;left:2355px;top:962px;width:99px;height:27px;overflow:hidden;">
<div style="position:absolute;top:18.58px;font-family:'Liberation Sans', sans-serif;font-size:14.2px;line-height:0;white-space:pre;color:#000;font-weight:normal;right:8.8px;">562.46</div>
</div>
<div style="position:absolute;left:2455px;top:962px;width:99px;height:27px;overflow:hidden;">
<div style="position:absolute;top:18.58px;font-family:'Liberation Sans', sans-serif;font-size:14.2px;line-height:0;white-space:pre;color:#000;font-weight:normal;left:-450.50px;width:1000px;text-align:center;">31.29%</div>
</div>
<div style="position:absolute;left:2555px;top:962px;width:99px;height:27px;overflow:hidden;">
<div style="position:absolute;top:18.58px;font-family:'Liberation Sans', sans-serif;font-size:14.2px;line-height:0;white-space:pre;color:#000;font-weight:normal;left:-450.50px;width:1000px;text-align:center;">#REF!</div>
</div>
<div style="position:absolute;left:1382px;top:990px;width:99px;height:27px;overflow:hidden;">
<div style="position:absolute;top:7.48px;font-family:'Liberation Sans', sans-serif;font-size:14.2px;line-height:0;white-space:pre;color:#000;font-weight:normal;left:4.0px;">GDL8435</div>
</div>
<div style="position:absolute;left:1482px;top:990px;width:99px;height:27px;overflow:hidden;">
<div style="position:absolute;top:7.48px;font-family:'Liberation Sans', sans-serif;font-size:14.2px;line-height:0;white-space:pre;color:#000;font-weight:normal;left:-450.50px;width:1000px;text-align:center;">2/28/2025</div>
</div>
<div style="position:absolute;left:1582px;top:990px;width:99px;height:27px;overflow:hidden;">
<div style="position:absolute;top:7.48px;font-family:'Liberation Sans', sans-serif;font-size:14.2px;line-height:0;white-space:pre;color:#000;font-weight:normal;left:4.0px;">GRUPO SOLAVE,  S.A. DE C.V.</div>
</div>
<div style="position:absolute;left:1682px;top:990px;width:99px;height:27px;overflow:hidden;">
<div style="position:absolute;top:7.48px;font-family:'Liberation Sans', sans-serif;font-size:14.2px;line-height:0;white-space:pre;color:#000;font-weight:normal;left:4.0px;">30</div>
</div>
<div style="position:absolute;left:1782px;top:989px;width:99px;height:28px;overflow:hidden;">
<div style="position:absolute;top:8.48px;font-family:'Liberation Sans', sans-serif;font-size:14.2px;line-height:0;white-space:pre;color:#000;font-weight:normal;left:4.0px;">PELICULA MANUAL</div>
</div>
<div style="position:absolute;left:1882px;top:990px;width:99px;height:27px;overflow:hidden;">
<div style="position:absolute;top:7.48px;font-family:'Liberation Sans', sans-serif;font-size:14.2px;line-height:0;white-space:pre;color:#000;font-weight:normal;left:4.0px;">4/1/2025</div>
</div>
<div style="position:absolute;left:1982px;top:990px;width:72px;height:27px;overflow:hidden;">
<div style="position:absolute;top:7.48px;font-family:'Liberation Sans', sans-serif;font-size:14.2px;line-height:0;white-space:pre;color:#000;font-weight:normal;left:4.0px;">32</div>
</div>
<div style="position:absolute;left:2055px;top:990px;width:99px;height:27px;overflow:hidden;">
<div style="position:absolute;top:7.48px;font-family:'Liberation Sans', sans-serif;font-size:14.2px;line-height:0;white-space:pre;color:#000;font-weight:normal;left:8.8px;">$</div>
</div>
<div style="position:absolute;left:2055px;top:990px;width:99px;height:27px;overflow:hidden;">
<div style="position:absolute;top:7.48px;font-family:'Liberation Sans', sans-serif;font-size:14.2px;line-height:0;white-space:pre;color:#000;font-weight:normal;right:8.8px;">1,285.20</div>
</div>
<div style="position:absolute;left:2155px;top:990px;width:99px;height:27px;overflow:hidden;">
<div style="position:absolute;top:7.48px;font-family:'Liberation Sans', sans-serif;font-size:14.2px;line-height:0;white-space:pre;color:#000;font-weight:normal;left:4.0px;">12</div>
</div>
<div style="position:absolute;left:2255px;top:990px;width:99px;height:27px;overflow:hidden;">
<div style="position:absolute;top:7.48px;font-family:'Liberation Sans', sans-serif;font-size:14.2px;line-height:0;white-space:pre;color:#000;font-weight:normal;left:8.8px;">$</div>
</div>
<div style="position:absolute;left:2255px;top:990px;width:99px;height:27px;overflow:hidden;">
<div style="position:absolute;top:7.48px;font-family:'Liberation Sans', sans-serif;font-size:14.2px;line-height:0;white-space:pre;color:#000;font-weight:normal;right:8.8px;">107.10</div>
</div>
<div style="position:absolute;left:2355px;top:990px;width:99px;height:27px;overflow:hidden;">
<div style="position:absolute;top:18.58px;font-family:'Liberation Sans', sans-serif;font-size:14.2px;line-height:0;white-space:pre;color:#000;font-weight:normal;left:8.8px;">$</div>
</div>
<div style="position:absolute;left:2355px;top:990px;width:99px;height:27px;overflow:hidden;">
<div style="position:absolute;top:18.58px;font-family:'Liberation Sans', sans-serif;font-size:14.2px;line-height:0;white-space:pre;color:#000;font-weight:normal;right:8.8px;">86.49</div>
</div>
<div style="position:absolute;left:2455px;top:990px;width:99px;height:27px;overflow:hidden;">
<div style="position:absolute;top:18.58px;font-family:'Liberation Sans', sans-serif;font-size:14.2px;line-height:0;white-space:pre;color:#000;font-weight:normal;left:-450.50px;width:1000px;text-align:center;">19.24%</div>
</div>
<div style="position:absolute;left:2555px;top:990px;width:99px;height:27px;overflow:hidden;">
<div style="position:absolute;top:18.58px;font-family:'Liberation Sans', sans-serif;font-size:14.2px;line-height:0;white-space:pre;color:#000;font-weight:normal;left:-450.50px;width:1000px;text-align:center;">#REF!</div>
</div>
<div style="position:absolute;left:1382px;top:1018px;width:99px;height:27px;overflow:hidden;">
<div style="position:absolute;top:7.48px;font-family:'Liberation Sans', sans-serif;font-size:14.2px;line-height:0;white-space:pre;color:#000;font-weight:normal;left:4.0px;">GDL8435</div>
</div>
<div style="position:absolute;left:1482px;top:1018px;width:99px;height:27px;overflow:hidden;">
<div style="position:absolute;top:7.48px;font-family:'Liberation Sans', sans-serif;font-size:14.2px;line-height:0;white-space:pre;color:#000;font-weight:normal;left:-450.50px;width:1000px;text-align:center;">2/28/2025</div>
</div>
<div style="position:absolute;left:1582px;top:1018px;width:99px;height:27px;overflow:hidden;">
<div style="position:absolute;top:7.48px;font-family:'Liberation Sans', sans-serif;font-size:14.2px;line-height:0;white-space:pre;color:#000;font-weight:normal;left:4.0px;">GRUPO SOLAVE,  S.A. DE C.V.</div>
</div>
<div style="position:absolute;left:1682px;top:1018px;width:99px;height:27px;overflow:hidden;">
<div style="position:absolute;top:7.48px;font-family:'Liberation Sans', sans-serif;font-size:14.2px;line-height:0;white-space:pre;color:#000;font-weight:normal;left:4.0px;">30</div>
</div>
<div style="position:absolute;left:1782px;top:1017px;width:99px;height:28px;overflow:hidden;">
<div style="position:absolute;top:8.48px;font-family:'Liberation Sans', sans-serif;font-size:14.2px;line-height:0;white-space:pre;color:#000;font-weight:normal;left:4.0px;">CINTA ADHESIVA</div>
</div>
<div style="position:absolute;left:1882px;top:1018px;width:99px;height:27px;overflow:hidden;">
<div style="position:absolute;top:7.48px;font-family:'Liberation Sans', sans-serif;font-size:14.2px;line-height:0;white-space:pre;color:#000;font-weight:normal;left:4.0px;">4/1/2025</div>
</div>
<div style="position:absolute;left:1982px;top:1018px;width:72px;height:27px;overflow:hidden;">
<div style="position:absolute;top:7.48px;font-family:'Liberation Sans', sans-serif;font-size:14.2px;line-height:0;white-space:pre;color:#000;font-weight:normal;left:4.0px;">32</div>
</div>
<div style="position:absolute;left:2055px;top:1018px;width:99px;height:27px;overflow:hidden;">
<div style="position:absolute;top:7.48px;font-family:'Liberation Sans', sans-serif;font-size:14.2px;line-height:0;white-space:pre;color:#000;font-weight:normal;left:8.8px;">$</div>
</div>
<div style="position:absolute;left:2055px;top:1018px;width:99px;height:27px;overflow:hidden;">
<div style="position:absolute;top:7.48px;font-family:'Liberation Sans', sans-serif;font-size:14.2px;line-height:0;white-space:pre;color:#000;font-weight:normal;right:8.8px;">1,083.00</div>
</div>
<div style="position:absolute;left:2155px;top:1018px;width:99px;height:27px;overflow:hidden;">
<div style="position:absolute;top:7.48px;font-family:'Liberation Sans', sans-serif;font-size:14.2px;line-height:0;white-space:pre;color:#000;font-weight:normal;left:4.0px;">6</div>
</div>
<div style="position:absolute;left:2255px;top:1018px;width:99px;height:27px;overflow:hidden;">
<div style="position:absolute;top:7.48px;font-family:'Liberation Sans', sans-serif;font-size:14.2px;line-height:0;white-space:pre;color:#000;font-weight:normal;left:8.8px;">$</div>
</div>
<div style="position:absolute;left:2255px;top:1018px;width:99px;height:27px;overflow:hidden;">
<div style="position:absolute;top:7.48px;font-family:'Liberation Sans', sans-serif;font-size:14.2px;line-height:0;white-space:pre;color:#000;font-weight:normal;right:8.8px;">180.50</div>
</div>
<div style="position:absolute;left:2355px;top:1018px;width:99px;height:27px;overflow:hidden;">
<div style="position:absolute;top:18.58px;font-family:'Liberation Sans', sans-serif;font-size:14.2px;line-height:0;white-space:pre;color:#000;font-weight:normal;left:8.8px;">$</div>
</div>
<div style="position:absolute;left:2355px;top:1018px;width:99px;height:27px;overflow:hidden;">
<div style="position:absolute;top:18.58px;font-family:'Liberation Sans', sans-serif;font-size:14.2px;line-height:0;white-space:pre;color:#000;font-weight:normal;right:8.8px;">142.30</div>
</div>
<div style="position:absolute;left:2455px;top:1018px;width:99px;height:27px;overflow:hidden;">
<div style="position:absolute;top:18.58px;font-family:'Liberation Sans', sans-serif;font-size:14.2px;line-height:0;white-space:pre;color:#000;font-weight:normal;left:-450.50px;width:1000px;text-align:center;">21.16%</div>
</div>
<div style="position:absolute;left:2555px;top:1018px;width:99px;height:27px;overflow:hidden;">
<div style="position:absolute;top:18.58px;font-family:'Liberation Sans', sans-serif;font-size:14.2px;line-height:0;white-space:pre;color:#000;font-weight:normal;left:-450.50px;width:1000px;text-align:center;">#REF!</div>
</div>
<div style="position:absolute;left:1382px;top:1046px;width:99px;height:27px;overflow:hidden;">
<div style="position:absolute;top:7.48px;font-family:'Liberation Sans', sans-serif;font-size:14.2px;line-height:0;white-space:pre;color:#000;font-weight:normal;left:4.0px;">GDL8435</div>
</div>
<div style="position:absolute;left:1482px;top:1046px;width:99px;height:27px;overflow:hidden;">
<div style="position:absolute;top:7.48px;font-family:'Liberation Sans', sans-serif;font-size:14.2px;line-height:0;white-space:pre;color:#000;font-weight:normal;left:-450.50px;width:1000px;text-align:center;">2/28/2025</div>
</div>
<div style="position:absolute;left:1582px;top:1046px;width:99px;height:27px;overflow:hidden;">
<div style="position:absolute;top:7.48px;font-family:'Liberation Sans', sans-serif;font-size:14.2px;line-height:0;white-space:pre;color:#000;font-weight:normal;left:4.0px;">GRUPO SOLAVE,  S.A. DE C.V.</div>
</div>
<div style="position:absolute;left:1682px;top:1046px;width:99px;height:27px;overflow:hidden;">
<div style="position:absolute;top:7.48px;font-family:'Liberation Sans', sans-serif;font-size:14.2px;line-height:0;white-space:pre;color:#000;font-weight:normal;left:4.0px;">30</div>
</div>
<div style="position:absolute;left:1782px;top:1045px;width:99px;height:28px;overflow:hidden;">
<div style="position:absolute;top:8.48px;font-family:'Liberation Sans', sans-serif;font-size:14.2px;line-height:0;white-space:pre;color:#000;font-weight:normal;left:4.0px;">PELICULA AUTOADHERIBLE</div>
</div>
<div style="position:absolute;left:1882px;top:1046px;width:99px;height:27px;overflow:hidden;">
<div style="position:absolute;top:7.48px;font-family:'Liberation Sans', sans-serif;font-size:14.2px;line-height:0;white-space:pre;color:#000;font-weight:normal;left:4.0px;">4/1/2025</div>
</div>
<div style="position:absolute;left:1982px;top:1046px;width:72px;height:27px;overflow:hidden;">
<div style="position:absolute;top:7.48px;font-family:'Liberation Sans', sans-serif;font-size:14.2px;line-height:0;white-space:pre;color:#000;font-weight:normal;left:4.0px;">32</div>
</div>
<div style="position:absolute;left:2055px;top:1046px;width:99px;height:27px;overflow:hidden;">
<div style="position:absolute;top:7.48px;font-family:'Liberation Sans', sans-serif;font-size:14.2px;line-height:0;white-space:pre;color:#000;font-weight:normal;left:8.8px;">$</div>
</div>
<div style="position:absolute;left:2055px;top:1046px;width:99px;height:27px;overflow:hidden;">
<div style="position:absolute;top:7.48px;font-family:'Liberation Sans', sans-serif;font-size:14.2px;line-height:0;white-space:pre;color:#000;font-weight:normal;right:8.8px;">4,911.60</div>
</div>
<div style="position:absolute;left:2155px;top:1046px;width:99px;height:27px;overflow:hidden;">
<div style="position:absolute;top:7.48px;font-family:'Liberation Sans', sans-serif;font-size:14.2px;line-height:0;white-space:pre;color:#000;font-weight:normal;left:4.0px;">6</div>
</div>
<div style="position:absolute;left:2255px;top:1046px;width:99px;height:27px;overflow:hidden;">
<div style="position:absolute;top:7.48px;font-family:'Liberation Sans', sans-serif;font-size:14.2px;line-height:0;white-space:pre;color:#000;font-weight:normal;left:8.8px;">$</div>
</div>
<div style="position:absolute;left:2255px;top:1046px;width:99px;height:27px;overflow:hidden;">
<div style="position:absolute;top:7.48px;font-family:'Liberation Sans', sans-serif;font-size:14.2px;line-height:0;white-space:pre;color:#000;font-weight:normal;right:8.8px;">818.60</div>
</div>
<div style="position:absolute;left:2355px;top:1046px;width:99px;height:27px;overflow:hidden;">
<div style="position:absolute;top:18.58px;font-family:'Liberation Sans', sans-serif;font-size:14.2px;line-height:0;white-space:pre;color:#000;font-weight:normal;left:8.8px;">$</div>
</div>
<div style="position:absolute;left:2355px;top:1046px;width:99px;height:27px;overflow:hidden;">
<div style="position:absolute;top:18.58px;font-family:'Liberation Sans', sans-serif;font-size:14.2px;line-height:0;white-space:pre;color:#000;font-weight:normal;right:8.8px;">562.46</div>
</div>
<div style="position:absolute;left:2455px;top:1046px;width:99px;height:27px;overflow:hidden;">
<div style="position:absolute;top:18.58px;font-family:'Liberation Sans', sans-serif;font-size:14.2px;line-height:0;white-space:pre;color:#000;font-weight:normal;left:-450.50px;width:1000px;text-align:center;">31.29%</div>
</div>
<div style="position:absolute;left:2555px;top:1046px;width:99px;height:27px;overflow:hidden;">
<div style="position:absolute;top:18.58px;font-family:'Liberation Sans', sans-serif;font-size:14.2px;line-height:0;white-space:pre;color:#000;font-weight:normal;left:-450.50px;width:1000px;text-align:center;">#REF!</div>
</div>
<div style="position:absolute;left:1382px;top:1074px;width:99px;height:27px;overflow:hidden;">
<div style="position:absolute;top:7.48px;font-family:'Liberation Sans', sans-serif;font-size:14.2px;line-height:0;white-space:pre;color:#000;font-weight:normal;left:4.0px;">GDL8451</div>
</div>
<div style="position:absolute;left:1482px;top:1074px;width:99px;height:27px;overflow:hidden;">
<div style="position:absolute;top:7.48px;font-family:'Liberation Sans', sans-serif;font-size:14.2px;line-height:0;white-space:pre;color:#000;font-weight:normal;left:-450.50px;width:1000px;text-align:center;">3/6/2025</div>
</div>
<div style="position:absolute;left:1582px;top:1074px;width:99px;height:27px;overflow:hidden;">
<div style="position:absolute;top:7.48px;font-family:'Liberation Sans', sans-serif;font-size:14.2px;line-height:0;white-space:pre;color:#000;font-weight:normal;left:4.0px;">GRUPO SOLAVE,  S.A. DE C.V.</div>
</div>
<div style="position:absolute;left:1682px;top:1074px;width:99px;height:27px;overflow:hidden;">
<div style="position:absolute;top:7.48px;font-family:'Liberation Sans', sans-serif;font-size:14.2px;line-height:0;white-space:pre;color:#000;font-weight:normal;left:4.0px;">30</div>
</div>
<div style="position:absolute;left:1782px;top:1073px;width:99px;height:28px;overflow:hidden;">
<div style="position:absolute;top:8.48px;font-family:'Liberation Sans', sans-serif;font-size:14.2px;line-height:0;white-space:pre;color:#000;font-weight:normal;left:4.0px;">FLEJE DE POLIPROPILENO</div>
</div>
<div style="position:absolute;left:1882px;top:1074px;width:99px;height:27px;overflow:hidden;">
<div style="position:absolute;top:7.48px;font-family:'Liberation Sans', sans-serif;font-size:14.2px;line-height:0;white-space:pre;color:#000;font-weight:normal;left:4.0px;">4/8/2025</div>
</div>
<div style="position:absolute;left:1982px;top:1074px;width:72px;height:27px;overflow:hidden;">
<div style="position:absolute;top:7.48px;font-family:'Liberation Sans', sans-serif;font-size:14.2px;line-height:0;white-space:pre;color:#000;font-weight:normal;left:4.0px;">33</div>
</div>
<div style="position:absolute;left:2055px;top:1074px;width:99px;height:27px;overflow:hidden;">
<div style="position:absolute;top:7.48px;font-family:'Liberation Sans', sans-serif;font-size:14.2px;line-height:0;white-space:pre;color:#000;font-weight:normal;left:8.8px;">$</div>
</div>
<div style="position:absolute;left:2055px;top:1074px;width:99px;height:27px;overflow:hidden;">
<div style="position:absolute;top:7.48px;font-family:'Liberation Sans', sans-serif;font-size:14.2px;line-height:0;white-space:pre;color:#000;font-weight:normal;right:8.8px;">2,370.00</div>
</div>
<div style="position:absolute;left:2155px;top:1074px;width:99px;height:27px;overflow:hidden;">
<div style="position:absolute;top:7.48px;font-family:'Liberation Sans', sans-serif;font-size:14.2px;line-height:0;white-space:pre;color:#000;font-weight:normal;left:4.0px;">6</div>
</div>
<div style="position:absolute;left:2255px;top:1074px;width:99px;height:27px;overflow:hidden;">
<div style="position:absolute;top:7.48px;font-family:'Liberation Sans', sans-serif;font-size:14.2px;line-height:0;white-space:pre;color:#000;font-weight:normal;left:8.8px;">$</div>
</div>
<div style="position:absolute;left:2255px;top:1074px;width:99px;height:27px;overflow:hidden;">
<div style="position:absolute;top:7.48px;font-family:'Liberation Sans', sans-serif;font-size:14.2px;line-height:0;white-space:pre;color:#000;font-weight:normal;right:8.8px;">395.00</div>
</div>
<div style="position:absolute;left:2355px;top:1074px;width:99px;height:27px;overflow:hidden;">
<div style="position:absolute;top:18.58px;font-family:'Liberation Sans', sans-serif;font-size:14.2px;line-height:0;white-space:pre;color:#000;font-weight:normal;left:8.8px;">$</div>
</div>
<div style="position:absolute;left:2355px;top:1074px;width:99px;height:27px;overflow:hidden;">
<div style="position:absolute;top:18.58px;font-family:'Liberation Sans', sans-serif;font-size:14.2px;line-height:0;white-space:pre;color:#000;font-weight:normal;right:8.8px;">320.00</div>
</div>
<div style="position:absolute;left:2455px;top:1074px;width:99px;height:27px;overflow:hidden;">
<div style="position:absolute;top:18.58px;font-family:'Liberation Sans', sans-serif;font-size:14.2px;line-height:0;white-space:pre;color:#000;font-weight:normal;left:-450.50px;width:1000px;text-align:center;">18.99%</div>
</div>
<div style="position:absolute;left:2555px;top:1074px;width:99px;height:27px;overflow:hidden;">
<div style="position:absolute;top:18.58px;font-family:'Liberation Sans', sans-serif;font-size:14.2px;line-height:0;white-space:pre;color:#000;font-weight:normal;left:-450.50px;width:1000px;text-align:center;">#REF!</div>
</div>
<div style="position:absolute;left:1382px;top:1102px;width:99px;height:27px;overflow:hidden;">
<div style="position:absolute;top:7.48px;font-family:'Liberation Sans', sans-serif;font-size:14.2px;line-height:0;white-space:pre;color:#000;font-weight:normal;left:4.0px;">GDL8451</div>
</div>
<div style="position:absolute;left:1482px;top:1102px;width:99px;height:27px;overflow:hidden;">
<div style="position:absolute;top:7.48px;font-family:'Liberation Sans', sans-serif;font-size:14.2px;line-height:0;white-space:pre;color:#000;font-weight:normal;left:-450.50px;width:1000px;text-align:center;">3/6/2025</div>
</div>
<div style="position:absolute;left:1582px;top:1102px;width:99px;height:27px;overflow:hidden;">
<div style="position:absolute;top:7.48px;font-family:'Liberation Sans', sans-serif;font-size:14.2px;line-height:0;white-space:pre;color:#000;font-weight:normal;left:4.0px;">GRUPO SOLAVE,  S.A. DE C.V.</div>
</div>
<div style="position:absolute;left:1682px;top:1102px;width:99px;height:27px;overflow:hidden;">
<div style="position:absolute;top:7.48px;font-family:'Liberation Sans', sans-serif;font-size:14.2px;line-height:0;white-space:pre;color:#000;font-weight:normal;left:4.0px;">30</div>
</div>
<div style="position:absolute;left:1782px;top:1101px;width:99px;height:28px;overflow:hidden;">
<div style="position:absolute;top:8.48px;font-family:'Liberation Sans', sans-serif;font-size:14.2px;line-height:0;white-space:pre;color:#000;font-weight:normal;left:4.0px;">PELICULA MANUAL</div>
</div>
<div style="position:absolute;left:1882px;top:1102px;width:99px;height:27px;overflow:hidden;">
<div style="position:absolute;top:7.48px;font-family:'Liberation Sans', sans-serif;font-size:14.2px;line-height:0;white-space:pre;color:#000;font-weight:normal;left:4.0px;">4/8/2025</div>
</div>
<div style="position:absolute;left:1982px;top:1102px;width:72px;height:27px;overflow:hidden;">
<div style="position:absolute;top:7.48px;font-family:'Liberation Sans', sans-serif;font-size:14.2px;line-height:0;white-space:pre;color:#000;font-weight:normal;left:4.0px;">33</div>
</div>
<div style="position:absolute;left:2055px;top:1102px;width:99px;height:27px;overflow:hidden;">
<div style="position:absolute;top:7.48px;font-family:'Liberation Sans', sans-serif;font-size:14.2px;line-height:0;white-space:pre;color:#000;font-weight:normal;left:8.8px;">$</div>
</div>
<div style="position:absolute;left:2055px;top:1102px;width:99px;height:27px;overflow:hidden;">
<div style="position:absolute;top:7.48px;font-family:'Liberation Sans', sans-serif;font-size:14.2px;line-height:0;white-space:pre;color:#000;font-weight:normal;right:8.8px;">1,285.20</div>
</div>
<div style="position:absolute;left:2155px;top:1102px;width:99px;height:27px;overflow:hidden;">
<div style="position:absolute;top:7.48px;font-family:'Liberation Sans', sans-serif;font-size:14.2px;line-height:0;white-space:pre;color:#000;font-weight:normal;left:4.0px;">12</div>
</div>
<div style="position:absolute;left:2255px;top:1102px;width:99px;height:27px;overflow:hidden;">
<div style="position:absolute;top:7.48px;font-family:'Liberation Sans', sans-serif;font-size:14.2px;line-height:0;white-space:pre;color:#000;font-weight:normal;left:8.8px;">$</div>
</div>
<div style="position:absolute;left:2255px;top:1102px;width:99px;height:27px;overflow:hidden;">
<div style="position:absolute;top:7.48px;font-family:'Liberation Sans', sans-serif;font-size:14.2px;line-height:0;white-space:pre;color:#000;font-weight:normal;right:8.8px;">107.10</div>
</div>
<div style="position:absolute;left:2355px;top:1102px;width:99px;height:27px;overflow:hidden;">
<div style="position:absolute;top:18.58px;font-family:'Liberation Sans', sans-serif;font-size:14.2px;line-height:0;white-space:pre;color:#000;font-weight:normal;left:8.8px;">$</div>
</div>
<div style="position:absolute;left:2355px;top:1102px;width:99px;height:27px;overflow:hidden;">
<div style="position:absolute;top:18.58px;font-family:'Liberation Sans', sans-serif;font-size:14.2px;line-height:0;white-space:pre;color:#000;font-weight:normal;right:8.8px;">86.49</div>
</div>
<div style="position:absolute;left:2455px;top:1102px;width:99px;height:27px;overflow:hidden;">
<div style="position:absolute;top:18.58px;font-family:'Liberation Sans', sans-serif;font-size:14.2px;line-height:0;white-space:pre;color:#000;font-weight:normal;left:-450.50px;width:1000px;text-align:center;">19.24%</div>
</div>
<div style="position:absolute;left:2555px;top:1102px;width:99px;height:27px;overflow:hidden;">
<div style="position:absolute;top:18.58px;font-family:'Liberation Sans', sans-serif;font-size:14.2px;line-height:0;white-space:pre;color:#000;font-weight:normal;left:-450.50px;width:1000px;text-align:center;">#REF!</div>
</div>
<div style="position:absolute;left:1382px;top:1130px;width:99px;height:27px;overflow:hidden;">
<div style="position:absolute;top:7.48px;font-family:'Liberation Sans', sans-serif;font-size:14.2px;line-height:0;white-space:pre;color:#000;font-weight:normal;left:4.0px;">GDL8451</div>
</div>
<div style="position:absolute;left:1482px;top:1130px;width:99px;height:27px;overflow:hidden;">
<div style="position:absolute;top:7.48px;font-family:'Liberation Sans', sans-serif;font-size:14.2px;line-height:0;white-space:pre;color:#000;font-weight:normal;left:-450.50px;width:1000px;text-align:center;">3/6/2025</div>
</div>
<div style="position:absolute;left:1582px;top:1130px;width:99px;height:27px;overflow:hidden;">
<div style="position:absolute;top:7.48px;font-family:'Liberation Sans', sans-serif;font-size:14.2px;line-height:0;white-space:pre;color:#000;font-weight:normal;left:4.0px;">GRUPO SOLAVE,  S.A. DE C.V.</div>
</div>
<div style="position:absolute;left:1682px;top:1130px;width:99px;height:27px;overflow:hidden;">
<div style="position:absolute;top:7.48px;font-family:'Liberation Sans', sans-serif;font-size:14.2px;line-height:0;white-space:pre;color:#000;font-weight:normal;left:4.0px;">30</div>
</div>
<div style="position:absolute;left:1782px;top:1129px;width:99px;height:28px;overflow:hidden;">
<div style="position:absolute;top:8.48px;font-family:'Liberation Sans', sans-serif;font-size:14.2px;line-height:0;white-space:pre;color:#000;font-weight:normal;left:4.0px;">CINTA ADHESIVA</div>
</div>
<div style="position:absolute;left:1882px;top:1130px;width:99px;height:27px;overflow:hidden;">
<div style="position:absolute;top:7.48px;font-family:'Liberation Sans', sans-serif;font-size:14.2px;line-height:0;white-space:pre;color:#000;font-weight:normal;left:4.0px;">4/8/2025</div>
</div>
<div style="position:absolute;left:1982px;top:1130px;width:72px;height:27px;overflow:hidden;">
<div style="position:absolute;top:7.48px;font-family:'Liberation Sans', sans-serif;font-size:14.2px;line-height:0;white-space:pre;color:#000;font-weight:normal;left:4.0px;">33</div>
</div>
<div style="position:absolute;left:2055px;top:1130px;width:99px;height:27px;overflow:hidden;">
<div style="position:absolute;top:7.48px;font-family:'Liberation Sans', sans-serif;font-size:14.2px;line-height:0;white-space:pre;color:#000;font-weight:normal;left:8.8px;">$</div>
</div>
<div style="position:absolute;left:2055px;top:1130px;width:99px;height:27px;overflow:hidden;">
<div style="position:absolute;top:7.48px;font-family:'Liberation Sans', sans-serif;font-size:14.2px;line-height:0;white-space:pre;color:#000;font-weight:normal;right:8.8px;">3,249.00</div>
</div>
<div style="position:absolute;left:2155px;top:1130px;width:99px;height:27px;overflow:hidden;">
<div style="position:absolute;top:7.48px;font-family:'Liberation Sans', sans-serif;font-size:14.2px;line-height:0;white-space:pre;color:#000;font-weight:normal;left:4.0px;">18</div>
</div>
<div style="position:absolute;left:2255px;top:1130px;width:99px;height:27px;overflow:hidden;">
<div style="position:absolute;top:7.48px;font-family:'Liberation Sans', sans-serif;font-size:14.2px;line-height:0;white-space:pre;color:#000;font-weight:normal;left:8.8px;">$</div>
</div>
<div style="position:absolute;left:2255px;top:1130px;width:99px;height:27px;overflow:hidden;">
<div style="position:absolute;top:7.48px;font-family:'Liberation Sans', sans-serif;font-size:14.2px;line-height:0;white-space:pre;color:#000;font-weight:normal;right:8.8px;">180.50</div>
</div>
<div style="position:absolute;left:2355px;top:1130px;width:99px;height:27px;overflow:hidden;">
<div style="position:absolute;top:18.58px;font-family:'Liberation Sans', sans-serif;font-size:14.2px;line-height:0;white-space:pre;color:#000;font-weight:normal;left:8.8px;">$</div>
</div>
<div style="position:absolute;left:2355px;top:1130px;width:99px;height:27px;overflow:hidden;">
<div style="position:absolute;top:18.58px;font-family:'Liberation Sans', sans-serif;font-size:14.2px;line-height:0;white-space:pre;color:#000;font-weight:normal;right:8.8px;">142.30</div>
</div>
<div style="position:absolute;left:2455px;top:1130px;width:99px;height:27px;overflow:hidden;">
<div style="position:absolute;top:18.58px;font-family:'Liberation Sans', sans-serif;font-size:14.2px;line-height:0;white-space:pre;color:#000;font-weight:normal;left:-450.50px;width:1000px;text-align:center;">21.16%</div>
</div>
<div style="position:absolute;left:2555px;top:1130px;width:99px;height:27px;overflow:hidden;">
<div style="position:absolute;top:18.58px;font-family:'Liberation Sans', sans-serif;font-size:14.2px;line-height:0;white-space:pre;color:#000;font-weight:normal;left:-450.50px;width:1000px;text-align:center;">#REF!</div>
</div>
<div style="position:absolute;left:1382px;top:1158px;width:99px;height:27px;overflow:hidden;">
<div style="position:absolute;top:7.48px;font-family:'Liberation Sans', sans-serif;font-size:14.2px;line-height:0;white-space:pre;color:#000;font-weight:normal;left:4.0px;">GDL8451</div>
</div>
<div style="position:absolute;left:1482px;top:1158px;width:99px;height:27px;overflow:hidden;">
<div style="position:absolute;top:7.48px;font-family:'Liberation Sans', sans-serif;font-size:14.2px;line-height:0;white-space:pre;color:#000;font-weight:normal;left:-450.50px;width:1000px;text-align:center;">3/6/2025</div>
</div>
<div style="position:absolute;left:1582px;top:1158px;width:99px;height:27px;overflow:hidden;">
<div style="position:absolute;top:7.48px;font-family:'Liberation Sans', sans-serif;font-size:14.2px;line-height:0;white-space:pre;color:#000;font-weight:normal;left:4.0px;">GRUPO SOLAVE,  S.A. DE C.V.</div>
</div>
<div style="position:absolute;left:1682px;top:1158px;width:99px;height:27px;overflow:hidden;">
<div style="position:absolute;top:7.48px;font-family:'Liberation Sans', sans-serif;font-size:14.2px;line-height:0;white-space:pre;color:#000;font-weight:normal;left:4.0px;">30</div>
</div>
<div style="position:absolute;left:1782px;top:1157px;width:99px;height:28px;overflow:hidden;">
<div style="position:absolute;top:8.48px;font-family:'Liberation Sans', sans-serif;font-size:14.2px;line-height:0;white-space:pre;color:#000;font-weight:normal;left:4.0px;">PELICULA AUTOADHERIBLE</div>
</div>
<div style="position:absolute;left:1882px;top:1158px;width:99px;height:27px;overflow:hidden;">
<div style="position:absolute;top:7.48px;font-family:'Liberation Sans', sans-serif;font-size:14.2px;line-height:0;white-space:pre;color:#000;font-weight:normal;left:4.0px;">4/8/2025</div>
</div>
<div style="position:absolute;left:1982px;top:1158px;width:72px;height:27px;overflow:hidden;">
<div style="position:absolute;top:7.48px;font-family:'Liberation Sans', sans-serif;font-size:14.2px;line-height:0;white-space:pre;color:#000;font-weight:normal;left:4.0px;">33</div>
</div>
<div style="position:absolute;left:2055px;top:1158px;width:99px;height:27px;overflow:hidden;">
<div style="position:absolute;top:7.48px;font-family:'Liberation Sans', sans-serif;font-size:14.2px;line-height:0;white-space:pre;color:#000;font-weight:normal;left:8.8px;">$</div>
</div>
<div style="position:absolute;left:2055px;top:1158px;width:99px;height:27px;overflow:hidden;">
<div style="position:absolute;top:7.48px;font-family:'Liberation Sans', sans-serif;font-size:14.2px;line-height:0;white-space:pre;color:#000;font-weight:normal;right:8.8px;">3,274.40</div>
</div>
<div style="position:absolute;left:2155px;top:1158px;width:99px;height:27px;overflow:hidden;">
<div style="position:absolute;top:7.48px;font-family:'Liberation Sans', sans-serif;font-size:14.2px;line-height:0;white-space:pre;color:#000;font-weight:normal;left:4.0px;">4</div>
</div>
<div style="position:absolute;left:2255px;top:1158px;width:99px;height:27px;overflow:hidden;">
<div style="position:absolute;top:7.48px;font-family:'Liberation Sans', sans-serif;font-size:14.2px;line-height:0;white-space:pre;color:#000;font-weight:normal;left:8.8px;">$</div>
</div>
<div style="position:absolute;left:2255px;top:1158px;width:99px;height:27px;overflow:hidden;">
<div style="position:absolute;top:7.48px;font-family:'Liberation Sans', sans-serif;font-size:14.2px;line-height:0;white-space:pre;color:#000;font-weight:normal;right:8.8px;">818.60</div>
</div>
<div style="position:absolute;left:2355px;top:1158px;width:99px;height:27px;overflow:hidden;">
<div style="position:absolute;top:18.58px;font-family:'Liberation Sans', sans-serif;font-size:14.2px;line-height:0;white-space:pre;color:#000;font-weight:normal;left:8.8px;">$</div>
</div>
<div style="position:absolute;left:2355px;top:1158px;width:99px;height:27px;overflow:hidden;">
<div style="position:absolute;top:18.58px;font-family:'Liberation Sans', sans-serif;font-size:14.2px;line-height:0;white-space:pre;color:#000;font-weight:normal;right:8.8px;">562.46</div>
</div>
<div style="position:absolute;left:2455px;top:1158px;width:99px;height:27px;overflow:hidden;">
<div style="position:absolute;top:18.58px;font-family:'Liberation Sans', sans-serif;font-size:14.2px;line-height:0;white-space:pre;color:#000;font-weight:normal;left:-450.50px;width:1000px;text-align:center;">31.29%</div>
</div>
<div style="position:absolute;left:2555px;top:1158px;width:99px;height:27px;overflow:hidden;">
<div style="position:absolute;top:18.58px;font-family:'Liberation Sans', sans-serif;font-size:14.2px;line-height:0;white-space:pre;color:#000;font-weight:normal;left:-450.50px;width:1000px;text-align:center;">#REF!</div>
</div>
<div style="position:absolute;left:1382px;top:1186px;width:99px;height:27px;overflow:hidden;">
<div style="position:absolute;top:7.48px;font-family:'Liberation Sans', sans-serif;font-size:14.2px;line-height:0;white-space:pre;color:#000;font-weight:normal;left:4.0px;">GDL8479</div>
</div>
<div style="position:absolute;left:1482px;top:1186px;width:99px;height:27px;overflow:hidden;">
<div style="position:absolute;top:7.48px;font-family:'Liberation Sans', sans-serif;font-size:14.2px;line-height:0;white-space:pre;color:#000;font-weight:normal;left:-450.50px;width:1000px;text-align:center;">3/12/2025</div>
</div>
<div style="position:absolute;left:1582px;top:1186px;width:99px;height:27px;overflow:hidden;">
<div style="position:absolute;top:7.48px;font-family:'Liberation Sans', sans-serif;font-size:14.2px;line-height:0;white-space:pre;color:#000;font-weight:normal;left:4.0px;">GRUPO SOLAVE,  S.A. DE C.V.</div>
</div>
<div style="position:absolute;left:1682px;top:1186px;width:99px;height:27px;overflow:hidden;">
<div style="position:absolute;top:7.48px;font-family:'Liberation Sans', sans-serif;font-size:14.2px;line-height:0;white-space:pre;color:#000;font-weight:normal;left:4.0px;">30</div>
</div>
<div style="position:absolute;left:1782px;top:1185px;width:99px;height:28px;overflow:hidden;">
<div style="position:absolute;top:8.48px;font-family:'Liberation Sans', sans-serif;font-size:14.2px;line-height:0;white-space:pre;color:#000;font-weight:normal;left:4.0px;">PELICULA MANUAL</div>
</div>
<div style="position:absolute;left:1882px;top:1186px;width:99px;height:27px;overflow:hidden;">
<div style="position:absolute;top:7.48px;font-family:'Liberation Sans', sans-serif;font-size:14.2px;line-height:0;white-space:pre;color:#000;font-weight:normal;left:4.0px;">4/14/2025</div>
</div>
<div style="position:absolute;left:1982px;top:1186px;width:72px;height:27px;overflow:hidden;">
<div style="position:absolute;top:7.48px;font-family:'Liberation Sans', sans-serif;font-size:14.2px;line-height:0;white-space:pre;color:#000;font-weight:normal;left:4.0px;">33</div>
</div>
<div style="position:absolute;left:2055px;top:1186px;width:99px;height:27px;overflow:hidden;">
<div style="position:absolute;top:7.48px;font-family:'Liberation Sans', sans-serif;font-size:14.2px;line-height:0;white-space:pre;color:#000;font-weight:normal;left:8.8px;">$</div>
</div>
<div style="position:absolute;left:2055px;top:1186px;width:99px;height:27px;overflow:hidden;">
<div style="position:absolute;top:7.48px;font-family:'Liberation Sans', sans-serif;font-size:14.2px;line-height:0;white-space:pre;color:#000;font-weight:normal;right:8.8px;">2,570.40</div>
</div>
<div style="position:absolute;left:2155px;top:1186px;width:99px;height:27px;overflow:hidden;">
<div style="position:absolute;top:7.48px;font-family:'Liberation Sans', sans-serif;font-size:14.2px;line-height:0;white-space:pre;color:#000;font-weight:normal;left:4.0px;">24</div>
</div>
<div style="position:absolute;left:2255px;top:1186px;width:99px;height:27px;overflow:hidden;">
<div style="position:absolute;top:7.48px;font-family:'Liberation Sans', sans-serif;font-size:14.2px;line-height:0;white-space:pre;color:#000;font-weight:normal;left:8.8px;">$</div>
</div>
<div style="position:absolute;left:2255px;top:1186px;width:99px;height:27px;overflow:hidden;">
<div style="position:absolute;top:7.48px;font-family:'Liberation Sans', sans-serif;font-size:14.2px;line-height:0;white-space:pre;color:#000;font-weight:normal;right:8.8px;">107.10</div>
</div>
<div style="position:absolute;left:2355px;top:1186px;width:99px;height:27px;overflow:hidden;">
<div style="position:absolute;top:18.58px;font-family:'Liberation Sans', sans-serif;font-size:14.2px;line-height:0;white-space:pre;color:#000;font-weight:normal;left:8.8px;">$</div>
</div>
<div style="position:absolute;left:2355px;top:1186px;width:99px;height:27px;overflow:hidden;">
<div style="position:absolute;top:18.58px;font-family:'Liberation Sans', sans-serif;font-size:14.2px;line-height:0;white-space:pre;color:#000;font-weight:normal;right:8.8px;">86.49</div>
</div>
<div style="position:absolute;left:2455px;top:1186px;width:99px;height:27px;overflow:hidden;">
<div style="position:absolute;top:18.58px;font-family:'Liberation Sans', sans-serif;font-size:14.2px;line-height:0;white-space:pre;color:#000;font-weight:normal;left:-450.50px;width:1000px;text-align:center;">19.24%</div>
</div>
<div style="position:absolute;left:2555px;top:1186px;width:99px;height:27px;overflow:hidden;">
<div style="position:absolute;top:18.58px;font-family:'Liberation Sans', sans-serif;font-size:14.2px;line-height:0;white-space:pre;color:#000;font-weight:normal;left:-450.50px;width:1000px;text-align:center;">#REF!</div>
</div>
<div style="position:absolute;left:1382px;top:1214px;width:99px;height:27px;overflow:hidden;">
<div style="position:absolute;top:7.48px;font-family:'Liberation Sans', sans-serif;font-size:14.2px;line-height:0;white-space:pre;color:#000;font-weight:normal;left:4.0px;">GDL8479</div>
</div>
<div style="position:absolute;left:1482px;top:1214px;width:99px;height:27px;overflow:hidden;">
<div style="position:absolute;top:7.48px;font-family:'Liberation Sans', sans-serif;font-size:14.2px;line-height:0;white-space:pre;color:#000;font-weight:normal;left:-450.50px;width:1000px;text-align:center;">3/12/2025</div>
</div>
<div style="position:absolute;left:1582px;top:1214px;width:99px;height:27px;overflow:hidden;">
<div style="position:absolute;top:7.48px;font-family:'Liberation Sans', sans-serif;font-size:14.2px;line-height:0;white-space:pre;color:#000;font-weight:normal;left:4.0px;">GRUPO SOLAVE,  S.A. DE C.V.</div>
</div>
<div style="position:absolute;left:1682px;top:1214px;width:99px;height:27px;overflow:hidden;">
<div style="position:absolute;top:7.48px;font-family:'Liberation Sans', sans-serif;font-size:14.2px;line-height:0;white-space:pre;color:#000;font-weight:normal;left:4.0px;">30</div>
</div>
<div style="position:absolute;left:1782px;top:1213px;width:99px;height:28px;overflow:hidden;">
<div style="position:absolute;top:8.48px;font-family:'Liberation Sans', sans-serif;font-size:14.2px;line-height:0;white-space:pre;color:#000;font-weight:normal;left:4.0px;">PELICULA AUTOADHERIBLE</div>
</div>
<div style="position:absolute;left:1882px;top:1214px;width:99px;height:27px;overflow:hidden;">
<div style="position:absolute;top:7.48px;font-family:'Liberation Sans', sans-serif;font-size:14.2px;line-height:0;white-space:pre;color:#000;font-weight:normal;left:4.0px;">4/14/2025</div>
</div>
<div style="position:absolute;left:1982px;top:1214px;width:72px;height:27px;overflow:hidden;">
<div style="position:absolute;top:7.48px;font-family:'Liberation Sans', sans-serif;font-size:14.2px;line-height:0;white-space:pre;color:#000;font-weight:normal;left:4.0px;">33</div>
</div>
<div style="position:absolute;left:2055px;top:1214px;width:99px;height:27px;overflow:hidden;">
<div style="position:absolute;top:7.48px;font-family:'Liberation Sans', sans-serif;font-size:14.2px;line-height:0;white-space:pre;color:#000;font-weight:normal;left:8.8px;">$</div>
</div>
<div style="position:absolute;left:2055px;top:1214px;width:99px;height:27px;overflow:hidden;">
<div style="position:absolute;top:7.48px;font-family:'Liberation Sans', sans-serif;font-size:14.2px;line-height:0;white-space:pre;color:#000;font-weight:normal;right:8.8px;">3,274.40</div>
</div>
<div style="position:absolute;left:2155px;top:1214px;width:99px;height:27px;overflow:hidden;">
<div style="position:absolute;top:7.48px;font-family:'Liberation Sans', sans-serif;font-size:14.2px;line-height:0;white-space:pre;color:#000;font-weight:normal;left:4.0px;">4</div>
</div>
<div style="position:absolute;left:2255px;top:1214px;width:99px;height:27px;overflow:hidden;">
<div style="position:absolute;top:7.48px;font-family:'Liberation Sans', sans-serif;font-size:14.2px;line-height:0;white-space:pre;color:#000;font-weight:normal;left:8.8px;">$</div>
</div>
<div style="position:absolute;left:2255px;top:1214px;width:99px;height:27px;overflow:hidden;">
<div style="position:absolute;top:7.48px;font-family:'Liberation Sans', sans-serif;font-size:14.2px;line-height:0;white-space:pre;color:#000;font-weight:normal;right:8.8px;">818.60</div>
</div>
<div style="position:absolute;left:2355px;top:1214px;width:99px;height:27px;overflow:hidden;">
<div style="position:absolute;top:18.58px;font-family:'Liberation Sans', sans-serif;font-size:14.2px;line-height:0;white-space:pre;color:#000;font-weight:normal;left:8.8px;">$</div>
</div>
<div style="position:absolute;left:2355px;top:1214px;width:99px;height:27px;overflow:hidden;">
<div style="position:absolute;top:18.58px;font-family:'Liberation Sans', sans-serif;font-size:14.2px;line-height:0;white-space:pre;color:#000;font-weight:normal;right:8.8px;">562.46</div>
</div>
<div style="position:absolute;left:2455px;top:1214px;width:99px;height:27px;overflow:hidden;">
<div style="position:absolute;top:18.58px;font-family:'Liberation Sans', sans-serif;font-size:14.2px;line-height:0;white-space:pre;color:#000;font-weight:normal;left:-450.50px;width:1000px;text-align:center;">31.29%</div>
</div>
<div style="position:absolute;left:2555px;top:1214px;width:99px;height:27px;overflow:hidden;">
<div style="position:absolute;top:18.58px;font-family:'Liberation Sans', sans-serif;font-size:14.2px;line-height:0;white-space:pre;color:#000;font-weight:normal;left:-450.50px;width:1000px;text-align:center;">#REF!</div>
</div>
<div style="position:absolute;left:1382px;top:1242px;width:99px;height:27px;overflow:hidden;">
<div style="position:absolute;top:7.48px;font-family:'Liberation Sans', sans-serif;font-size:14.2px;line-height:0;white-space:pre;color:#000;font-weight:normal;left:4.0px;">GDL8507</div>
</div>
<div style="position:absolute;left:1482px;top:1242px;width:99px;height:27px;overflow:hidden;">
<div style="position:absolute;top:7.48px;font-family:'Liberation Sans', sans-serif;font-size:14.2px;line-height:0;white-space:pre;color:#000;font-weight:normal;left:-450.50px;width:1000px;text-align:center;">3/15/2025</div>
</div>
<div style="position:absolute;left:1582px;top:1242px;width:99px;height:27px;overflow:hidden;">
<div style="position:absolute;top:7.48px;font-family:'Liberation Sans', sans-serif;font-size:14.2px;line-height:0;white-space:pre;color:#000;font-weight:normal;left:4.0px;">GRUPO SOLAVE,  S.A. DE C.V.</div>
</div>
<div style="position:absolute;left:1682px;top:1242px;width:99px;height:27px;overflow:hidden;">
<div style="position:absolute;top:7.48px;font-family:'Liberation Sans', sans-serif;font-size:14.2px;line-height:0;white-space:pre;color:#000;font-weight:normal;left:4.0px;">30</div>
</div>
<div style="position:absolute;left:1782px;top:1241px;width:99px;height:28px;overflow:hidden;">
<div style="position:absolute;top:8.48px;font-family:'Liberation Sans', sans-serif;font-size:14.2px;line-height:0;white-space:pre;color:#000;font-weight:normal;left:4.0px;">PELICULA MANUAL</div>
</div>
<div style="position:absolute;left:1882px;top:1242px;width:99px;height:27px;overflow:hidden;">
<div style="position:absolute;top:7.48px;font-family:'Liberation Sans', sans-serif;font-size:14.2px;line-height:0;white-space:pre;color:#000;font-weight:normal;left:4.0px;">4/14/2025</div>
</div>
<div style="position:absolute;left:1982px;top:1242px;width:72px;height:27px;overflow:hidden;">
<div style="position:absolute;top:7.48px;font-family:'Liberation Sans', sans-serif;font-size:14.2px;line-height:0;white-space:pre;color:#000;font-weight:normal;left:4.0px;">30</div>
</div>
<div style="position:absolute;left:2055px;top:1242px;width:99px;height:27px;overflow:hidden;">
<div style="position:absolute;top:7.48px;font-family:'Liberation Sans', sans-serif;font-size:14.2px;line-height:0;white-space:pre;color:#000;font-weight:normal;left:8.8px;">$</div>
</div>
<div style="position:absolute;left:2055px;top:1242px;width:99px;height:27px;overflow:hidden;">
<div style="position:absolute;top:7.48px;font-family:'Liberation Sans', sans-serif;font-size:14.2px;line-height:0;white-space:pre;color:#000;font-weight:normal;right:8.8px;">1,713.60</div>
</div>
<div style="position:absolute;left:2155px;top:1242px;width:99px;height:27px;overflow:hidden;">
<div style="position:absolute;top:7.48px;font-family:'Liberation Sans', sans-serif;font-size:14.2px;line-height:0;white-space:pre;color:#000;font-weight:normal;left:4.0px;">16</div>
</div>
<div style="position:absolute;left:2255px;top:1242px;width:99px;height:27px;overflow:hidden;">
<div style="position:absolute;top:7.48px;font-family:'Liberation Sans', sans-serif;font-size:14.2px;line-height:0;white-space:pre;color:#000;font-weight:normal;left:8.8px;">$</div>
</div>
<div style="position:absolute;left:2255px;top:1242px;width:99px;height:27px;overflow:hidden;">
<div style="position:absolute;top:7.48px;font-family:'Liberation Sans', sans-serif;font-size:14.2px;line-height:0;white-space:pre;color:#000;font-weight:normal;right:8.8px;">107.10</div>
</div>
<div style="position:absolute;left:2355px;top:1242px;width:99px;height:27px;overflow:hidden;">
<div style="position:absolute;top:18.58px;font-family:'Liberation Sans', sans-serif;font-size:14.2px;line-height:0;white-space:pre;color:#000;font-weight:normal;left:8.8px;">$</div>
</div>
<div style="position:absolute;left:2355px;top:1242px;width:99px;height:27px;overflow:hidden;">
<div style="position:absolute;top:18.58px;font-family:'Liberation Sans', sans-serif;font-size:14.2px;line-height:0;white-space:pre;color:#000;font-weight:normal;right:8.8px;">86.49</div>
</div>
<div style="position:absolute;left:2455px;top:1242px;width:99px;height:27px;overflow:hidden;">
<div style="position:absolute;top:18.58px;font-family:'Liberation Sans', sans-serif;font-size:14.2px;line-height:0;white-space:pre;color:#000;font-weight:normal;left:-450.50px;width:1000px;text-align:center;">19.24%</div>
</div>
<div style="position:absolute;left:2555px;top:1242px;width:99px;height:27px;overflow:hidden;">
<div style="position:absolute;top:18.58px;font-family:'Liberation Sans', sans-serif;font-size:14.2px;line-height:0;white-space:pre;color:#000;font-weight:normal;left:-450.50px;width:1000px;text-align:center;">#REF!</div>
</div>
<div style="position:absolute;left:1382px;top:1270px;width:99px;height:27px;overflow:hidden;">
<div style="position:absolute;top:7.48px;font-family:'Liberation Sans', sans-serif;font-size:14.2px;line-height:0;white-space:pre;color:#000;font-weight:normal;left:4.0px;">GDL8507</div>
</div>
<div style="position:absolute;left:1482px;top:1270px;width:99px;height:27px;overflow:hidden;">
<div style="position:absolute;top:7.48px;font-family:'Liberation Sans', sans-serif;font-size:14.2px;line-height:0;white-space:pre;color:#000;font-weight:normal;left:-450.50px;width:1000px;text-align:center;">3/15/2025</div>
</div>
<div style="position:absolute;left:1582px;top:1270px;width:99px;height:27px;overflow:hidden;">
<div style="position:absolute;top:7.48px;font-family:'Liberation Sans', sans-serif;font-size:14.2px;line-height:0;white-space:pre;color:#000;font-weight:normal;left:4.0px;">GRUPO SOLAVE,  S.A. DE C.V.</div>
</div>
<div style="position:absolute;left:1682px;top:1270px;width:99px;height:27px;overflow:hidden;">
<div style="position:absolute;top:7.48px;font-family:'Liberation Sans', sans-serif;font-size:14.2px;line-height:0;white-space:pre;color:#000;font-weight:normal;left:4.0px;">30</div>
</div>
<div style="position:absolute;left:1782px;top:1269px;width:99px;height:28px;overflow:hidden;">
<div style="position:absolute;top:8.48px;font-family:'Liberation Sans', sans-serif;font-size:14.2px;line-height:0;white-space:pre;color:#000;font-weight:normal;left:4.0px;">CINTA ADHESIVA</div>
</div>
<div style="position:absolute;left:1882px;top:1270px;width:99px;height:27px;overflow:hidden;">
<div style="position:absolute;top:7.48px;font-family:'Liberation Sans', sans-serif;font-size:14.2px;line-height:0;white-space:pre;color:#000;font-weight:normal;left:4.0px;">4/14/2025</div>
</div>
<div style="position:absolute;left:1982px;top:1270px;width:72px;height:27px;overflow:hidden;">
<div style="position:absolute;top:7.48px;font-family:'Liberation Sans', sans-serif;font-size:14.2px;line-height:0;white-space:pre;color:#000;font-weight:normal;left:4.0px;">30</div>
</div>
<div style="position:absolute;left:2055px;top:1270px;width:99px;height:27px;overflow:hidden;">
<div style="position:absolute;top:7.48px;font-family:'Liberation Sans', sans-serif;font-size:14.2px;line-height:0;white-space:pre;color:#000;font-weight:normal;left:8.8px;">$</div>
</div>
<div style="position:absolute;left:2055px;top:1270px;width:99px;height:27px;overflow:hidden;">
<div style="position:absolute;top:7.48px;font-family:'Liberation Sans', sans-serif;font-size:14.2px;line-height:0;white-space:pre;color:#000;font-weight:normal;right:8.8px;">1,083.00</div>
</div>
<div style="position:absolute;left:2155px;top:1270px;width:99px;height:27px;overflow:hidden;">
<div style="position:absolute;top:7.48px;font-family:'Liberation Sans', sans-serif;font-size:14.2px;line-height:0;white-space:pre;color:#000;font-weight:normal;left:4.0px;">6</div>
</div>
<div style="position:absolute;left:2255px;top:1270px;width:99px;height:27px;overflow:hidden;">
<div style="position:absolute;top:7.48px;font-family:'Liberation Sans', sans-serif;font-size:14.2px;line-height:0;white-space:pre;color:#000;font-weight:normal;left:8.8px;">$</div>
</div>
<div style="position:absolute;left:2255px;top:1270px;width:99px;height:27px;overflow:hidden;">
<div style="position:absolute;top:7.48px;font-family:'Liberation Sans', sans-serif;font-size:14.2px;line-height:0;white-space:pre;color:#000;font-weight:normal;right:8.8px;">180.50</div>
</div>
<div style="position:absolute;left:2355px;top:1270px;width:99px;height:27px;overflow:hidden;">
<div style="position:absolute;top:18.58px;font-family:'Liberation Sans', sans-serif;font-size:14.2px;line-height:0;white-space:pre;color:#000;font-weight:normal;left:8.8px;">$</div>
</div>
<div style="position:absolute;left:2355px;top:1270px;width:99px;height:27px;overflow:hidden;">
<div style="position:absolute;top:18.58px;font-family:'Liberation Sans', sans-serif;font-size:14.2px;line-height:0;white-space:pre;color:#000;font-weight:normal;right:8.8px;">142.30</div>
</div>
<div style="position:absolute;left:2455px;top:1270px;width:99px;height:27px;overflow:hidden;">
<div style="position:absolute;top:18.58px;font-family:'Liberation Sans', sans-serif;font-size:14.2px;line-height:0;white-space:pre;color:#000;font-weight:normal;left:-450.50px;width:1000px;text-align:center;">21.16%</div>
</div>
<div style="position:absolute;left:2555px;top:1270px;width:99px;height:27px;overflow:hidden;">
<div style="position:absolute;top:18.58px;font-family:'Liberation Sans', sans-serif;font-size:14.2px;line-height:0;white-space:pre;color:#000;font-weight:normal;left:-450.50px;width:1000px;text-align:center;">#REF!</div>
</div>
<div style="position:absolute;left:1382px;top:1298px;width:99px;height:27px;overflow:hidden;">
<div style="position:absolute;top:7.48px;font-family:'Liberation Sans', sans-serif;font-size:14.2px;line-height:0;white-space:pre;color:#000;font-weight:normal;left:4.0px;">GDL8507</div>
</div>
<div style="position:absolute;left:1482px;top:1298px;width:99px;height:27px;overflow:hidden;">
<div style="position:absolute;top:7.48px;font-family:'Liberation Sans', sans-serif;font-size:14.2px;line-height:0;white-space:pre;color:#000;font-weight:normal;left:-450.50px;width:1000px;text-align:center;">3/15/2025</div>
</div>
<div style="position:absolute;left:1582px;top:1298px;width:99px;height:27px;overflow:hidden;">
<div style="position:absolute;top:7.48px;font-family:'Liberation Sans', sans-serif;font-size:14.2px;line-height:0;white-space:pre;color:#000;font-weight:normal;left:4.0px;">GRUPO SOLAVE,  S.A. DE C.V.</div>
</div>
<div style="position:absolute;left:1682px;top:1298px;width:99px;height:27px;overflow:hidden;">
<div style="position:absolute;top:7.48px;font-family:'Liberation Sans', sans-serif;font-size:14.2px;line-height:0;white-space:pre;color:#000;font-weight:normal;left:4.0px;">30</div>
</div>
<div style="position:absolute;left:1782px;top:1297px;width:99px;height:28px;overflow:hidden;">
<div style="position:absolute;top:8.48px;font-family:'Liberation Sans', sans-serif;font-size:14.2px;line-height:0;white-space:pre;color:#000;font-weight:normal;left:4.0px;">PELICULA AUTOADHERIBLE</div>
</div>
<div style="position:absolute;left:1882px;top:1298px;width:99px;height:27px;overflow:hidden;">
<div style="position:absolute;top:7.48px;font-family:'Liberation Sans', sans-serif;font-size:14.2px;line-height:0;white-space:pre;color:#000;font-weight:normal;left:4.0px;">4/14/2025</div>
</div>
<div style="position:absolute;left:1982px;top:1298px;width:72px;height:27px;overflow:hidden;">
<div style="position:absolute;top:7.48px;font-family:'Liberation Sans', sans-serif;font-size:14.2px;line-height:0;white-space:pre;color:#000;font-weight:normal;left:4.0px;">30</div>
</div>
<div style="position:absolute;left:2055px;top:1298px;width:99px;height:27px;overflow:hidden;">
<div style="position:absolute;top:7.48px;font-family:'Liberation Sans', sans-serif;font-size:14.2px;line-height:0;white-space:pre;color:#000;font-weight:normal;left:8.8px;">$</div>
</div>
<div style="position:absolute;left:2055px;top:1298px;width:99px;height:27px;overflow:hidden;">
<div style="position:absolute;top:7.48px;font-family:'Liberation Sans', sans-serif;font-size:14.2px;line-height:0;white-space:pre;color:#000;font-weight:normal;right:8.8px;">3,274.40</div>
</div>
<div style="position:absolute;left:2155px;top:1298px;width:99px;height:27px;overflow:hidden;">
<div style="position:absolute;top:7.48px;font-family:'Liberation Sans', sans-serif;font-size:14.2px;line-height:0;white-space:pre;color:#000;font-weight:normal;left:4.0px;">4</div>
</div>
<div style="position:absolute;left:2255px;top:1298px;width:99px;height:27px;overflow:hidden;">
<div style="position:absolute;top:7.48px;font-family:'Liberation Sans', sans-serif;font-size:14.2px;line-height:0;white-space:pre;color:#000;font-weight:normal;left:8.8px;">$</div>
</div>
<div style="position:absolute;left:2255px;top:1298px;width:99px;height:27px;overflow:hidden;">
<div style="position:absolute;top:7.48px;font-family:'Liberation Sans', sans-serif;font-size:14.2px;line-height:0;white-space:pre;color:#000;font-weight:normal;right:8.8px;">818.60</div>
</div>
<div style="position:absolute;left:2355px;top:1298px;width:99px;height:27px;overflow:hidden;">
<div style="position:absolute;top:18.58px;font-family:'Liberation Sans', sans-serif;font-size:14.2px;line-height:0;white-space:pre;color:#000;font-weight:normal;left:8.8px;">$</div>
</div>
<div style="position:absolute;left:2355px;top:1298px;width:99px;height:27px;overflow:hidden;">
<div style="position:absolute;top:18.58px;font-family:'Liberation Sans', sans-serif;font-size:14.2px;line-height:0;white-space:pre;color:#000;font-weight:normal;right:8.8px;">562.46</div>
</div>
<div style="position:absolute;left:2455px;top:1298px;width:99px;height:27px;overflow:hidden;">
<div style="position:absolute;top:18.58px;font-family:'Liberation Sans', sans-serif;font-size:14.2px;line-height:0;white-space:pre;color:#000;font-weight:normal;left:-450.50px;width:1000px;text-align:center;">31.29%</div>
</div>
<div style="position:absolute;left:2555px;top:1298px;width:99px;height:27px;overflow:hidden;">
<div style="position:absolute;top:18.58px;font-family:'Liberation Sans', sans-serif;font-size:14.2px;line-height:0;white-space:pre;color:#000;font-weight:normal;left:-450.50px;width:1000px;text-align:center;">#REF!</div>
</div>
<div style="position:absolute;left:1382px;top:1326px;width:99px;height:27px;overflow:hidden;">
<div style="position:absolute;top:7.48px;font-family:'Liberation Sans', sans-serif;font-size:14.2px;line-height:0;white-space:pre;color:#000;font-weight:normal;left:4.0px;">GDL8711</div>
</div>
<div style="position:absolute;left:1482px;top:1326px;width:99px;height:27px;overflow:hidden;">
<div style="position:absolute;top:7.48px;font-family:'Liberation Sans', sans-serif;font-size:14.2px;line-height:0;white-space:pre;color:#000;font-weight:normal;left:-450.50px;width:1000px;text-align:center;">4/15/2025</div>
</div>
<div style="position:absolute;left:1582px;top:1326px;width:99px;height:27px;overflow:hidden;">
<div style="position:absolute;top:7.48px;font-family:'Liberation Sans', sans-serif;font-size:14.2px;line-height:0;white-space:pre;color:#000;font-weight:normal;left:4.0px;">MERRY HOME, S.A. DE C.V.</div>
</div>
<div style="position:absolute;left:1682px;top:1326px;width:99px;height:27px;overflow:hidden;">
<div style="position:absolute;top:7.48px;font-family:'Liberation Sans', sans-serif;font-size:14.2px;line-height:0;white-space:pre;color:#000;font-weight:normal;left:4.0px;">0</div>
</div>
<div style="position:absolute;left:1782px;top:1325px;width:99px;height:28px;overflow:hidden;">
<div style="position:absolute;top:8.48px;font-family:'Liberation Sans', sans-serif;font-size:14.2px;line-height:0;white-space:pre;color:#000;font-weight:normal;left:4.0px;">ESQUINERO KRAFT</div>
</div>
<div style="position:absolute;left:1882px;top:1326px;width:99px;height:27px;overflow:hidden;">
<div style="position:absolute;top:7.48px;font-family:'Liberation Sans', sans-serif;font-size:14.2px;line-height:0;white-space:pre;color:#000;font-weight:normal;left:4.0px;">4/15/2025</div>
</div>
<div style="position:absolute;left:1982px;top:1326px;width:72px;height:27px;overflow:hidden;">
<div style="position:absolute;top:7.48px;font-family:'Liberation Sans', sans-serif;font-size:14.2px;line-height:0;white-space:pre;color:#000;font-weight:normal;left:4.0px;">0</div>
</div>
<div style="position:absolute;left:2055px;top:1326px;width:99px;height:27px;overflow:hidden;">
<div style="position:absolute;top:7.48px;font-family:'Liberation Sans', sans-serif;font-size:14.2px;line-height:0;white-space:pre;color:#000;font-weight:normal;left:8.8px;">$</div>
</div>
<div style="position:absolute;left:2055px;top:1326px;width:99px;height:27px;overflow:hidden;">
<div style="position:absolute;top:7.48px;font-family:'Liberation Sans', sans-serif;font-size:14.2px;line-height:0;white-space:pre;color:#000;font-weight:normal;right:8.8px;">14,100.00</div>
</div>
<div style="position:absolute;left:2155px;top:1326px;width:99px;height:27px;overflow:hidden;">
<div style="position:absolute;top:7.48px;font-family:'Liberation Sans', sans-serif;font-size:14.2px;line-height:0;white-space:pre;color:#000;font-weight:normal;left:4.0px;">1000</div>
</div>
<div style="position:absolute;left:2255px;top:1326px;width:99px;height:27px;overflow:hidden;">
<div style="position:absolute;top:7.48px;font-family:'Liberation Sans', sans-serif;font-size:14.2px;line-height:0;white-space:pre;color:#000;font-weight:normal;left:8.8px;">$</div>
</div>
<div style="position:absolute;left:2255px;top:1326px;width:99px;height:27px;overflow:hidden;">
<div style="position:absolute;top:7.48px;font-family:'Liberation Sans', sans-serif;font-size:14.2px;line-height:0;white-space:pre;color:#000;font-weight:normal;right:8.8px;">14.10</div>
</div>
<div style="position:absolute;left:2355px;top:1326px;width:99px;height:27px;overflow:hidden;">
<div style="position:absolute;top:18.58px;font-family:'Liberation Sans', sans-serif;font-size:14.2px;line-height:0;white-space:pre;color:#000;font-weight:normal;left:8.8px;">$</div>
</div>
<div style="position:absolute;left:2355px;top:1326px;width:99px;height:27px;overflow:hidden;">
<div style="position:absolute;top:18.58px;font-family:'Liberation Sans', sans-serif;font-size:14.2px;line-height:0;white-space:pre;color:#000;font-weight:normal;right:8.8px;">9.77</div>
</div>
<div style="position:absolute;left:2455px;top:1326px;width:99px;height:27px;overflow:hidden;">
<div style="position:absolute;top:18.58px;font-family:'Liberation Sans', sans-serif;font-size:14.2px;line-height:0;white-space:pre;color:#000;font-weight:normal;left:-450.50px;width:1000px;text-align:center;">30.71%</div>
</div>
<div style="position:absolute;left:2555px;top:1326px;width:99px;height:27px;overflow:hidden;">
<div style="position:absolute;top:18.58px;font-family:'Liberation Sans', sans-serif;font-size:14.2px;line-height:0;white-space:pre;color:#000;font-weight:normal;left:-450.50px;width:1000px;text-align:center;">#REF!</div>
</div>
<div style="position:absolute;left:1382px;top:1354px;width:99px;height:27px;overflow:hidden;">
<div style="position:absolute;top:7.48px;font-family:'Liberation Sans', sans-serif;font-size:14.2px;line-height:0;white-space:pre;color:#000;font-weight:normal;left:4.0px;">GDL8711</div>
</div>
<div style="position:absolute;left:1482px;top:1354px;width:99px;height:27px;overflow:hidden;">
<div style="position:absolute;top:7.48px;font-family:'Liberation Sans', sans-serif;font-size:14.2px;line-height:0;white-space:pre;color:#000;font-weight:normal;left:-450.50px;width:1000px;text-align:center;">4/15/2025</div>
</div>
<div style="position:absolute;left:1582px;top:1354px;width:99px;height:27px;overflow:hidden;">
<div style="position:absolute;top:7.48px;font-family:'Liberation Sans', sans-serif;font-size:14.2px;line-height:0;white-space:pre;color:#000;font-weight:normal;left:4.0px;">MERRY HOME, S.A. DE C.V.</div>
</div>
<div style="position:absolute;left:1682px;top:1354px;width:99px;height:27px;overflow:hidden;">
<div style="position:absolute;top:7.48px;font-family:'Liberation Sans', sans-serif;font-size:14.2px;line-height:0;white-space:pre;color:#000;font-weight:normal;left:4.0px;">0</div>
</div>
<div style="position:absolute;left:1782px;top:1353px;width:99px;height:28px;overflow:hidden;">
<div style="position:absolute;top:8.48px;font-family:'Liberation Sans', sans-serif;font-size:14.2px;line-height:0;white-space:pre;color:#000;font-weight:normal;left:4.0px;">PELICULA AUTOADHERIBLE</div>
</div>
<div style="position:absolute;left:1882px;top:1354px;width:99px;height:27px;overflow:hidden;">
<div style="position:absolute;top:7.48px;font-family:'Liberation Sans', sans-serif;font-size:14.2px;line-height:0;white-space:pre;color:#000;font-weight:normal;left:4.0px;">4/15/2025</div>
</div>
<div style="position:absolute;left:1982px;top:1354px;width:72px;height:27px;overflow:hidden;">
<div style="position:absolute;top:7.48px;font-family:'Liberation Sans', sans-serif;font-size:14.2px;line-height:0;white-space:pre;color:#000;font-weight:normal;left:4.0px;">0</div>
</div>
<div style="position:absolute;left:2055px;top:1354px;width:99px;height:27px;overflow:hidden;">
<div style="position:absolute;top:7.48px;font-family:'Liberation Sans', sans-serif;font-size:14.2px;line-height:0;white-space:pre;color:#000;font-weight:normal;left:8.8px;">$</div>
</div>
<div style="position:absolute;left:2055px;top:1354px;width:99px;height:27px;overflow:hidden;">
<div style="position:absolute;top:7.48px;font-family:'Liberation Sans', sans-serif;font-size:14.2px;line-height:0;white-space:pre;color:#000;font-weight:normal;right:8.8px;">30,120.00</div>
</div>
<div style="position:absolute;left:2155px;top:1354px;width:99px;height:27px;overflow:hidden;">
<div style="position:absolute;top:7.48px;font-family:'Liberation Sans', sans-serif;font-size:14.2px;line-height:0;white-space:pre;color:#000;font-weight:normal;left:4.0px;">40</div>
</div>
<div style="position:absolute;left:2255px;top:1354px;width:99px;height:27px;overflow:hidden;">
<div style="position:absolute;top:7.48px;font-family:'Liberation Sans', sans-serif;font-size:14.2px;line-height:0;white-space:pre;color:#000;font-weight:normal;left:8.8px;">$</div>
</div>
<div style="position:absolute;left:2255px;top:1354px;width:99px;height:27px;overflow:hidden;">
<div style="position:absolute;top:7.48px;font-family:'Liberation Sans', sans-serif;font-size:14.2px;line-height:0;white-space:pre;color:#000;font-weight:normal;right:8.8px;">753.00</div>
</div>
<div style="position:absolute;left:2355px;top:1354px;width:99px;height:27px;overflow:hidden;">
<div style="position:absolute;top:18.58px;font-family:'Liberation Sans', sans-serif;font-size:14.2px;line-height:0;white-space:pre;color:#000;font-weight:normal;left:8.8px;">$</div>
</div>
<div style="position:absolute;left:2355px;top:1354px;width:99px;height:27px;overflow:hidden;">
<div style="position:absolute;top:18.58px;font-family:'Liberation Sans', sans-serif;font-size:14.2px;line-height:0;white-space:pre;color:#000;font-weight:normal;right:8.8px;">554.76</div>
</div>
<div style="position:absolute;left:2455px;top:1354px;width:99px;height:27px;overflow:hidden;">
<div style="position:absolute;top:18.58px;font-family:'Liberation Sans', sans-serif;font-size:14.2px;line-height:0;white-space:pre;color:#000;font-weight:normal;left:-450.50px;width:1000px;text-align:center;">26.33%</div>
</div>
<div style="position:absolute;left:2555px;top:1354px;width:99px;height:27px;overflow:hidden;">
<div style="position:absolute;top:18.58px;font-family:'Liberation Sans', sans-serif;font-size:14.2px;line-height:0;white-space:pre;color:#000;font-weight:normal;left:-450.50px;width:1000px;text-align:center;">#REF!</div>
</div>
<div style="position:absolute;left:2446px;top:717px;width:0;height:0;border-left:8px solid transparent;border-top:8px solid #f4b400;"></div>
<div style="position:absolute;left:1480.5px;top:228px;width:98px;height:162px;border:2px solid #3b78e7;"></div>
</div>
<div style="position:absolute;left:1575px;top:386px;width:11px;height:11px;border-radius:50%;background:#2f6de0;border:1px solid #fff;box-sizing:border-box"></div>
<div style="position:absolute;left:0px;top:196px;width:2880px;height:1px;background:#c4c7c5;"></div>
<div style="position:absolute;left:61px;top:197px;width:2820px;height:31px;background:#ffffff;"></div>
<div style="position:absolute;left:0px;top:197px;width:61px;height:31px;background:#f8f9fa;"></div>
<div style="position:absolute;left:0px;top:228px;width:2880px;height:1px;background:#c4c7c5;"></div>
<div style="position:absolute;top:211.87px;font-family:'Liberation Sans', sans-serif;font-size:14.8px;line-height:0;white-space:pre;color:#444746;font-weight:normal;left:-389.50px;width:1000px;text-align:center;">A</div>
<div style="position:absolute;left:160px;top:197px;width:1px;height:31px;background:#c4c7c5;"></div>
<div style="position:absolute;top:211.87px;font-family:'Liberation Sans', sans-serif;font-size:14.8px;line-height:0;white-space:pre;color:#444746;font-weight:normal;left:-289.50px;width:1000px;text-align:center;">B</div>
<div style="position:absolute;left:260px;top:197px;width:1px;height:31px;background:#c4c7c5;"></div>
<div style="position:absolute;top:211.87px;font-family:'Liberation Sans', sans-serif;font-size:14.8px;line-height:0;white-space:pre;color:#444746;font-weight:normal;left:-189.50px;width:1000px;text-align:center;">C</div>
<div style="position:absolute;left:360px;top:197px;width:1px;height:31px;background:#c4c7c5;"></div>
<div style="position:absolute;top:211.87px;font-family:'Liberation Sans', sans-serif;font-size:14.8px;line-height:0;white-space:pre;color:#444746;font-weight:normal;left:-89.50px;width:1000px;text-align:center;">D</div>
<div style="position:absolute;left:460px;top:197px;width:1px;height:31px;background:#c4c7c5;"></div>
<div style="position:absolute;top:211.87px;font-family:'Liberation Sans', sans-serif;font-size:14.8px;line-height:0;white-space:pre;color:#444746;font-weight:normal;left:10.50px;width:1000px;text-align:center;">E</div>
<div style="position:absolute;left:560px;top:197px;width:1px;height:31px;background:#c4c7c5;"></div>
<div style="position:absolute;top:211.87px;font-family:'Liberation Sans', sans-serif;font-size:14.8px;line-height:0;white-space:pre;color:#444746;font-weight:normal;left:110.50px;width:1000px;text-align:center;">F</div>
<div style="position:absolute;left:660px;top:197px;width:1px;height:31px;background:#c4c7c5;"></div>
<div style="position:absolute;top:211.87px;font-family:'Liberation Sans', sans-serif;font-size:14.8px;line-height:0;white-space:pre;color:#444746;font-weight:normal;left:210.50px;width:1000px;text-align:center;">G</div>
<div style="position:absolute;left:760px;top:197px;width:1px;height:31px;background:#c4c7c5;"></div>
<div style="position:absolute;top:211.87px;font-family:'Liberation Sans', sans-serif;font-size:14.8px;line-height:0;white-space:pre;color:#444746;font-weight:normal;left:310.50px;width:1000px;text-align:center;">H</div>
<div style="position:absolute;left:860px;top:197px;width:1px;height:31px;background:#c4c7c5;"></div>
<div style="position:absolute;top:211.87px;font-family:'Liberation Sans', sans-serif;font-size:14.8px;line-height:0;white-space:pre;color:#444746;font-weight:normal;left:410.50px;width:1000px;text-align:center;">I</div>
<div style="position:absolute;left:960px;top:197px;width:1px;height:31px;background:#c4c7c5;"></div>
<div style="position:absolute;top:211.87px;font-family:'Liberation Sans', sans-serif;font-size:14.8px;line-height:0;white-space:pre;color:#444746;font-weight:normal;left:514.00px;width:1000px;text-align:center;">J</div>
<div style="position:absolute;left:1067px;top:197px;width:1px;height:31px;background:#c4c7c5;"></div>
<div style="position:absolute;top:211.87px;font-family:'Liberation Sans', sans-serif;font-size:14.8px;line-height:0;white-space:pre;color:#444746;font-weight:normal;left:621.00px;width:1000px;text-align:center;">K</div>
<div style="position:absolute;left:1174px;top:197px;width:1px;height:31px;background:#c4c7c5;"></div>
<div style="position:absolute;top:211.87px;font-family:'Liberation Sans', sans-serif;font-size:14.8px;line-height:0;white-space:pre;color:#444746;font-weight:normal;left:728.00px;width:1000px;text-align:center;">L</div>
<div style="position:absolute;left:1281px;top:197px;width:1px;height:31px;background:#c4c7c5;"></div>
<div style="position:absolute;top:211.87px;font-family:'Liberation Sans', sans-serif;font-size:14.8px;line-height:0;white-space:pre;color:#444746;font-weight:normal;left:831.50px;width:1000px;text-align:center;">M</div>
<div style="position:absolute;left:1381px;top:197px;width:1px;height:31px;background:#c4c7c5;"></div>
<div style="position:absolute;top:211.87px;font-family:'Liberation Sans', sans-serif;font-size:14.8px;line-height:0;white-space:pre;color:#444746;font-weight:normal;left:931.50px;width:1000px;text-align:center;">N</div>
<div style="position:absolute;left:1481px;top:197px;width:1px;height:31px;background:#c4c7c5;"></div>
<div style="position:absolute;left:1482px;top:197px;width:99px;height:31px;background:#d3e3fd;"></div>
<div style="position:absolute;top:211.87px;font-family:'Liberation Sans', sans-serif;font-size:14.8px;line-height:0;white-space:pre;color:#041e49;font-weight:bold;left:1031.50px;width:1000px;text-align:center;">O</div>
<div style="position:absolute;left:1581px;top:197px;width:1px;height:31px;background:#c4c7c5;"></div>
<div style="position:absolute;top:211.87px;font-family:'Liberation Sans', sans-serif;font-size:14.8px;line-height:0;white-space:pre;color:#444746;font-weight:normal;left:1131.50px;width:1000px;text-align:center;">P</div>
<div style="position:absolute;left:1681px;top:197px;width:1px;height:31px;background:#c4c7c5;"></div>
<div style="position:absolute;top:211.87px;font-family:'Liberation Sans', sans-serif;font-size:14.8px;line-height:0;white-space:pre;color:#444746;font-weight:normal;left:1231.50px;width:1000px;text-align:center;">Q</div>
<div style="position:absolute;left:1781px;top:197px;width:1px;height:31px;background:#c4c7c5;"></div>
<div style="position:absolute;top:211.87px;font-family:'Liberation Sans', sans-serif;font-size:14.8px;line-height:0;white-space:pre;color:#444746;font-weight:normal;left:1331.50px;width:1000px;text-align:center;">R</div>
<div style="position:absolute;left:1881px;top:197px;width:1px;height:31px;background:#c4c7c5;"></div>
<div style="position:absolute;top:211.87px;font-family:'Liberation Sans', sans-serif;font-size:14.8px;line-height:0;white-space:pre;color:#444746;font-weight:normal;left:1431.50px;width:1000px;text-align:center;">S</div>
<div style="position:absolute;left:1981px;top:197px;width:1px;height:31px;background:#c4c7c5;"></div>
<div style="position:absolute;top:211.87px;font-family:'Liberation Sans', sans-serif;font-size:14.8px;line-height:0;white-space:pre;color:#444746;font-weight:normal;left:1518.00px;width:1000px;text-align:center;">T</div>
<div style="position:absolute;left:2054px;top:197px;width:1px;height:31px;background:#c4c7c5;"></div>
<div style="position:absolute;top:211.87px;font-family:'Liberation Sans', sans-serif;font-size:14.8px;line-height:0;white-space:pre;color:#444746;font-weight:normal;left:1604.50px;width:1000px;text-align:center;">U</div>
<div style="position:absolute;left:2154px;top:197px;width:1px;height:31px;background:#c4c7c5;"></div>
<div style="position:absolute;top:211.87px;font-family:'Liberation Sans', sans-serif;font-size:14.8px;line-height:0;white-space:pre;color:#444746;font-weight:normal;left:1704.50px;width:1000px;text-align:center;">V</div>
<div style="position:absolute;left:2254px;top:197px;width:1px;height:31px;background:#c4c7c5;"></div>
<div style="position:absolute;top:211.87px;font-family:'Liberation Sans', sans-serif;font-size:14.8px;line-height:0;white-space:pre;color:#444746;font-weight:normal;left:1804.50px;width:1000px;text-align:center;">W</div>
<div style="position:absolute;left:2354px;top:197px;width:1px;height:31px;background:#c4c7c5;"></div>
<div style="position:absolute;top:211.87px;font-family:'Liberation Sans', sans-serif;font-size:14.8px;line-height:0;white-space:pre;color:#444746;font-weight:normal;left:1904.50px;width:1000px;text-align:center;">X</div>
<div style="position:absolute;left:2454px;top:197px;width:1px;height:31px;background:#c4c7c5;"></div>
<div style="position:absolute;top:211.87px;font-family:'Liberation Sans', sans-serif;font-size:14.8px;line-height:0;white-space:pre;color:#444746;font-weight:normal;left:2004.50px;width:1000px;text-align:center;">Y</div>
<div style="position:absolute;left:2554px;top:197px;width:1px;height:31px;background:#c4c7c5;"></div>
<div style="position:absolute;top:211.87px;font-family:'Liberation Sans', sans-serif;font-size:14.8px;line-height:0;white-space:pre;color:#444746;font-weight:normal;left:2104.50px;width:1000px;text-align:center;">Z</div>
<div style="position:absolute;left:2654px;top:197px;width:1px;height:31px;background:#c4c7c5;"></div>
<div style="position:absolute;top:211.87px;font-family:'Liberation Sans', sans-serif;font-size:14.8px;line-height:0;white-space:pre;color:#444746;font-weight:normal;left:2208.00px;width:1000px;text-align:center;">AA</div>
<div style="position:absolute;left:2761px;top:197px;width:1px;height:31px;background:#c4c7c5;"></div>
<div style="position:absolute;top:211.87px;font-family:'Liberation Sans', sans-serif;font-size:14.8px;line-height:0;white-space:pre;color:#444746;font-weight:normal;left:2311.50px;width:1000px;text-align:center;">AB</div>
<div style="position:absolute;left:2861px;top:197px;width:1px;height:31px;background:#c4c7c5;"></div>
<div style="position:absolute;left:2862px;top:197px;width:18px;height:31px;background:#fff;"></div>
<div style="position:absolute;left:55px;top:197px;width:6px;height:31px;background:#c4c4c4;"></div>
<div style="position:absolute;left:0px;top:222px;width:55px;height:5px;background:#c4c4c4;"></div>
<div style="position:absolute;left:0px;top:229px;width:60px;height:1161px;background:#ffffff;"></div>
<div style="position:absolute;left:60px;top:197px;width:1px;height:1190px;background:#c4c7c5;"></div>
<div style="position:absolute;left:0px;top:229px;width:60px;height:163px;background:#d3e3fd;"></div>
<div style="position:absolute;left:0px;top:392px;width:60px;height:1px;background:#c4c7c5;"></div>
<div style="position:absolute;top:309.67px;font-family:'Liberation Sans', sans-serif;font-size:14.8px;line-height:0;white-space:pre;color:#041e49;font-weight:bold;left:-470.00px;width:1000px;text-align:center;">1</div>
<div style="position:absolute;left:0px;top:419px;width:60px;height:1px;background:#c4c7c5;"></div>
<div style="position:absolute;top:405.17px;font-family:'Liberation Sans', sans-serif;font-size:14.8px;line-height:0;white-space:pre;color:#444746;font-weight:normal;left:-470.00px;width:1000px;text-align:center;">2</div>
<div style="position:absolute;left:0px;top:446px;width:60px;height:1px;background:#c4c7c5;"></div>
<div style="position:absolute;top:432.17px;font-family:'Liberation Sans', sans-serif;font-size:14.8px;line-height:0;white-space:pre;color:#444746;font-weight:normal;left:-470.00px;width:1000px;text-align:center;">3</div>
<div style="position:absolute;left:0px;top:473px;width:60px;height:1px;background:#c4c7c5;"></div>
<div style="position:absolute;top:459.17px;font-family:'Liberation Sans', sans-serif;font-size:14.8px;line-height:0;white-space:pre;color:#444746;font-weight:normal;left:-470.00px;width:1000px;text-align:center;">4</div>
<div style="position:absolute;left:0px;top:500px;width:60px;height:1px;background:#c4c7c5;"></div>
<div style="position:absolute;top:486.17px;font-family:'Liberation Sans', sans-serif;font-size:14.8px;line-height:0;white-space:pre;color:#444746;font-weight:normal;left:-470.00px;width:1000px;text-align:center;">5</div>
<div style="position:absolute;left:0px;top:527px;width:60px;height:1px;background:#c4c7c5;"></div>
<div style="position:absolute;top:513.17px;font-family:'Liberation Sans', sans-serif;font-size:14.8px;line-height:0;white-space:pre;color:#444746;font-weight:normal;left:-470.00px;width:1000px;text-align:center;">6</div>
<div style="position:absolute;left:0px;top:554px;width:60px;height:1px;background:#c4c7c5;"></div>
<div style="position:absolute;top:540.17px;font-family:'Liberation Sans', sans-serif;font-size:14.8px;line-height:0;white-space:pre;color:#444746;font-weight:normal;left:-470.00px;width:1000px;text-align:center;">7</div>
<div style="position:absolute;left:0px;top:581px;width:60px;height:1px;background:#c4c7c5;"></div>
<div style="position:absolute;top:567.17px;font-family:'Liberation Sans', sans-serif;font-size:14.8px;line-height:0;white-space:pre;color:#444746;font-weight:normal;left:-470.00px;width:1000px;text-align:center;">8</div>
<div style="position:absolute;left:0px;top:608px;width:60px;height:1px;background:#c4c7c5;"></div>
<div style="position:absolute;top:594.17px;font-family:'Liberation Sans', sans-serif;font-size:14.8px;line-height:0;white-space:pre;color:#444746;font-weight:normal;left:-470.00px;width:1000px;text-align:center;">9</div>
<div style="position:absolute;left:0px;top:635px;width:60px;height:1px;background:#c4c7c5;"></div>
<div style="position:absolute;top:621.17px;font-family:'Liberation Sans', sans-serif;font-size:14.8px;line-height:0;white-space:pre;color:#444746;font-weight:normal;left:-470.00px;width:1000px;text-align:center;">10</div>
<div style="position:absolute;left:0px;top:662px;width:60px;height:1px;background:#c4c7c5;"></div>
<div style="position:absolute;top:648.17px;font-family:'Liberation Sans', sans-serif;font-size:14.8px;line-height:0;white-space:pre;color:#444746;font-weight:normal;left:-470.00px;width:1000px;text-align:center;">11</div>
<div style="position:absolute;left:0px;top:689px;width:60px;height:1px;background:#c4c7c5;"></div>
<div style="position:absolute;top:675.17px;font-family:'Liberation Sans', sans-serif;font-size:14.8px;line-height:0;white-space:pre;color:#444746;font-weight:normal;left:-470.00px;width:1000px;text-align:center;">12</div>
<div style="position:absolute;left:0px;top:716px;width:60px;height:1px;background:#c4c7c5;"></div>
<div style="position:absolute;top:702.17px;font-family:'Liberation Sans', sans-serif;font-size:14.8px;line-height:0;white-space:pre;color:#444746;font-weight:normal;left:-470.00px;width:1000px;text-align:center;">13</div>
<div style="position:absolute;left:0px;top:743px;width:60px;height:1px;background:#c4c7c5;"></div>
<div style="position:absolute;top:729.17px;font-family:'Liberation Sans', sans-serif;font-size:14.8px;line-height:0;white-space:pre;color:#444746;font-weight:normal;left:-470.00px;width:1000px;text-align:center;">14</div>
<div style="position:absolute;left:0px;top:770px;width:60px;height:1px;background:#c4c7c5;"></div>
<div style="position:absolute;top:756.17px;font-family:'Liberation Sans', sans-serif;font-size:14.8px;line-height:0;white-space:pre;color:#444746;font-weight:normal;left:-470.00px;width:1000px;text-align:center;">15</div>
<div style="position:absolute;left:0px;top:797px;width:60px;height:1px;background:#c4c7c5;"></div>
<div style="position:absolute;top:783.17px;font-family:'Liberation Sans', sans-serif;font-size:14.8px;line-height:0;white-space:pre;color:#444746;font-weight:normal;left:-470.00px;width:1000px;text-align:center;">16</div>
<div style="position:absolute;left:0px;top:824px;width:60px;height:1px;background:#c4c7c5;"></div>
<div style="position:absolute;top:810.17px;font-family:'Liberation Sans', sans-serif;font-size:14.8px;line-height:0;white-space:pre;color:#444746;font-weight:normal;left:-470.00px;width:1000px;text-align:center;">17</div>
<div style="position:absolute;left:0px;top:851px;width:60px;height:1px;background:#c4c7c5;"></div>
<div style="position:absolute;top:837.17px;font-family:'Liberation Sans', sans-serif;font-size:14.8px;line-height:0;white-space:pre;color:#444746;font-weight:normal;left:-470.00px;width:1000px;text-align:center;">18</div>
<div style="position:absolute;left:0px;top:878px;width:60px;height:1px;background:#c4c7c5;"></div>
<div style="position:absolute;top:864.17px;font-family:'Liberation Sans', sans-serif;font-size:14.8px;line-height:0;white-space:pre;color:#444746;font-weight:normal;left:-470.00px;width:1000px;text-align:center;">19</div>
<div style="position:absolute;left:0px;top:905px;width:60px;height:1px;background:#c4c7c5;"></div>
<div style="position:absolute;top:891.17px;font-family:'Liberation Sans', sans-serif;font-size:14.8px;line-height:0;white-space:pre;color:#444746;font-weight:normal;left:-470.00px;width:1000px;text-align:center;">20</div>
<div style="position:absolute;left:0px;top:933px;width:60px;height:1px;background:#c4c7c5;"></div>
<div style="position:absolute;top:918.67px;font-family:'Liberation Sans', sans-serif;font-size:14.8px;line-height:0;white-space:pre;color:#444746;font-weight:normal;left:-470.00px;width:1000px;text-align:center;">21</div>
<div style="position:absolute;left:0px;top:961px;width:60px;height:1px;background:#c4c7c5;"></div>
<div style="position:absolute;top:946.67px;font-family:'Liberation Sans', sans-serif;font-size:14.8px;line-height:0;white-space:pre;color:#444746;font-weight:normal;left:-470.00px;width:1000px;text-align:center;">22</div>
<div style="position:absolute;left:0px;top:989px;width:60px;height:1px;background:#c4c7c5;"></div>
<div style="position:absolute;top:974.67px;font-family:'Liberation Sans', sans-serif;font-size:14.8px;line-height:0;white-space:pre;color:#444746;font-weight:normal;left:-470.00px;width:1000px;text-align:center;">23</div>
<div style="position:absolute;left:0px;top:1017px;width:60px;height:1px;background:#c4c7c5;"></div>
<div style="position:absolute;top:1002.67px;font-family:'Liberation Sans', sans-serif;font-size:14.8px;line-height:0;white-space:pre;color:#444746;font-weight:normal;left:-470.00px;width:1000px;text-align:center;">24</div>
<div style="position:absolute;left:0px;top:1045px;width:60px;height:1px;background:#c4c7c5;"></div>
<div style="position:absolute;top:1030.67px;font-family:'Liberation Sans', sans-serif;font-size:14.8px;line-height:0;white-space:pre;color:#444746;font-weight:normal;left:-470.00px;width:1000px;text-align:center;">25</div>
<div style="position:absolute;left:0px;top:1073px;width:60px;height:1px;background:#c4c7c5;"></div>
<div style="position:absolute;top:1058.67px;font-family:'Liberation Sans', sans-serif;font-size:14.8px;line-height:0;white-space:pre;color:#444746;font-weight:normal;left:-470.00px;width:1000px;text-align:center;">26</div>
<div style="position:absolute;left:0px;top:1101px;width:60px;height:1px;background:#c4c7c5;"></div>
<div style="position:absolute;top:1086.67px;font-family:'Liberation Sans', sans-serif;font-size:14.8px;line-height:0;white-space:pre;color:#444746;font-weight:normal;left:-470.00px;width:1000px;text-align:center;">27</div>
<div style="position:absolute;left:0px;top:1129px;width:60px;height:1px;background:#c4c7c5;"></div>
<div style="position:absolute;top:1114.67px;font-family:'Liberation Sans', sans-serif;font-size:14.8px;line-height:0;white-space:pre;color:#444746;font-weight:normal;left:-470.00px;width:1000px;text-align:center;">28</div>
<div style="position:absolute;left:0px;top:1157px;width:60px;height:1px;background:#c4c7c5;"></div>
<div style="position:absolute;top:1142.67px;font-family:'Liberation Sans', sans-serif;font-size:14.8px;line-height:0;white-space:pre;color:#444746;font-weight:normal;left:-470.00px;width:1000px;text-align:center;">29</div>
<div style="position:absolute;left:0px;top:1185px;width:60px;height:1px;background:#c4c7c5;"></div>
<div style="position:absolute;top:1170.67px;font-family:'Liberation Sans', sans-serif;font-size:14.8px;line-height:0;white-space:pre;color:#444746;font-weight:normal;left:-470.00px;width:1000px;text-align:center;">30</div>
<div style="position:absolute;left:0px;top:1213px;width:60px;height:1px;background:#c4c7c5;"></div>
<div style="position:absolute;top:1198.67px;font-family:'Liberation Sans', sans-serif;font-size:14.8px;line-height:0;white-space:pre;color:#444746;font-weight:normal;left:-470.00px;width:1000px;text-align:center;">31</div>
<div style="position:absolute;left:0px;top:1241px;width:60px;height:1px;background:#c4c7c5;"></div>
<div style="position:absolute;top:1226.67px;font-family:'Liberation Sans', sans-serif;font-size:14.8px;line-height:0;white-space:pre;color:#444746;font-weight:normal;left:-470.00px;width:1000px;text-align:center;">32</div>
<div style="position:absolute;left:0px;top:1269px;width:60px;height:1px;background:#c4c7c5;"></div>
<div style="position:absolute;top:1254.67px;font-family:'Liberation Sans', sans-serif;font-size:14.8px;line-height:0;white-space:pre;color:#444746;font-weight:normal;left:-470.00px;width:1000px;text-align:center;">33</div>
<div style="position:absolute;left:0px;top:1297px;width:60px;height:1px;background:#c4c7c5;"></div>
<div style="position:absolute;top:1282.67px;font-family:'Liberation Sans', sans-serif;font-size:14.8px;line-height:0;white-space:pre;color:#444746;font-weight:normal;left:-470.00px;width:1000px;text-align:center;">34</div>
<div style="position:absolute;left:0px;top:1325px;width:60px;height:1px;background:#c4c7c5;"></div>
<div style="position:absolute;top:1310.67px;font-family:'Liberation Sans', sans-serif;font-size:14.8px;line-height:0;white-space:pre;color:#444746;font-weight:normal;left:-470.00px;width:1000px;text-align:center;">35</div>
<div style="position:absolute;left:0px;top:1353px;width:60px;height:1px;background:#c4c7c5;"></div>
<div style="position:absolute;top:1338.67px;font-family:'Liberation Sans', sans-serif;font-size:14.8px;line-height:0;white-space:pre;color:#444746;font-weight:normal;left:-470.00px;width:1000px;text-align:center;">36</div>
<div style="position:absolute;left:0px;top:1381px;width:60px;height:1px;background:#c4c7c5;"></div>
<div style="position:absolute;top:1366.67px;font-family:'Liberation Sans', sans-serif;font-size:14.8px;line-height:0;white-space:pre;color:#444746;font-weight:normal;left:-470.00px;width:1000px;text-align:center;">37</div>
<div style="position:absolute;left:0px;top:1370px;width:60px;height:17px;background:#ffffff;"></div>
<div style="position:absolute;left:61px;top:1370px;width:2820px;height:17px;background:#ffffff;"></div>
<div style="position:absolute;left:61px;top:1370px;width:2800px;height:1px;background:#e8eaed;"></div>
<div style="position:absolute;left:63px;top:1372px;width:1538px;height:13px;background:#dadce0;border-radius:7px;"></div>
<div style="position:absolute;left:2823px;top:1370px;width:1px;height:17px;background:#e8eaed;"></div>
<div style="position:absolute;left:2844px;top:1370px;width:1px;height:17px;background:#e8eaed;"></div>
<div style="position:absolute;left:2865px;top:1370px;width:1px;height:17px;background:#e8eaed;"></div>
<div style="position:absolute;left:2829px;top:1374px;width:0;height:0;border-top:4px solid transparent;border-bottom:4px solid transparent;border-right:5px solid #9aa0a6"></div>
<div style="position:absolute;left:2852px;top:1374px;width:0;height:0;border-top:4px solid transparent;border-bottom:4px solid transparent;border-left:5px solid #9aa0a6"></div>
<div style="position:absolute;left:2862px;top:229px;width:18px;height:1158px;background:#ffffff;"></div>
<div style="position:absolute;left:2865px;top:229px;width:1px;height:1141px;background:#e8eaed;"></div>
<div style="position:absolute;left:2867px;top:230px;width:12px;height:49px;background:#dadce0;border-radius:6px;"></div>
<div style="position:absolute;left:2868px;top:1336px;width:0;height:0;border-left:4px solid transparent;border-right:4px solid transparent;border-bottom:5px solid #9aa0a6"></div>
<div style="position:absolute;left:2868px;top:1357px;width:0;height:0;border-left:4px solid transparent;border-right:4px solid transparent;border-top:5px solid #9aa0a6"></div>
<div style="position:absolute;left:0px;top:1387px;width:2880px;height:47px;background:linear-gradient(#f6f7f9,#e9ebee);"></div>
<div style="position:absolute;left:0px;top:1386px;width:2880px;height:1px;background:#e3e5e8;"></div>
<svg style="position:absolute;left:68.0px;top:1398.0px;" width="28" height="28" viewBox="0 0 24 24"><path fill="#444746" d="M19 13h-6v6h-2v-6H5v-2h6V5h2v6h6v2z"/></svg>
<svg style="position:absolute;left:120.0px;top:1398.0px;" width="28" height="28" viewBox="0 0 24 24"><path fill="#444746" d="M3 18h18v-2H3v2zm0-5h18v-2H3v2zm0-7v2h18V6H3z"/></svg>
<div style="position:absolute;left:194px;top:1397px;width:26px;height:26px;background:#cfd6e0;border-radius:13px 13px 13px 2px;"></div>
<div style="position:absolute;top:1410.80px;font-family:'Liberation Sans', sans-serif;font-size:15px;line-height:0;white-space:pre;color:#1f1f1f;font-weight:normal;left:-293.00px;width:1000px;text-align:center;">1</div>
<div style="position:absolute;top:1412.42px;font-family:'Liberation Sans', sans-serif;font-size:19px;line-height:0;white-space:pre;color:#444746;font-weight:normal;letter-spacing:0.2px;left:229.00px;">Hoja1</div>
<div style="position:absolute;left:293.0px;top:1409.5px;width:0;height:0;border-left:5.0px solid transparent;border-right:5.0px solid transparent;border-top:5.0px solid #444746;"></div>
<div style="position:absolute;top:1412.42px;font-family:'Liberation Sans', sans-serif;font-size:19px;line-height:0;white-space:pre;color:#444746;font-weight:normal;letter-spacing:0.5px;left:336.00px;">Hoja2</div>
<div style="position:absolute;left:402.6px;top:1409.5px;width:0;height:0;border-left:5.0px solid transparent;border-right:5.0px solid transparent;border-top:5.0px solid #444746;"></div>
<div style="position:absolute;left:428px;top:1387px;width:198px;height:47px;background:linear-gradient(#e3eaf6,#d5dce9);"></div>
<div style="position:absolute;left:444.5px;top:1397px;width:26.5px;height:26px;background:#ffffff;border-radius:13px 13px 13px 2px;"></div>
<div style="position:absolute;top:1410.80px;font-family:'Liberation Sans', sans-serif;font-size:15px;line-height:0;white-space:pre;color:#1f1f1f;font-weight:normal;left:-42.50px;width:1000px;text-align:center;">1</div>
<div style="position:absolute;top:1412.42px;font-family:'Liberation Sans', sans-serif;font-size:19px;line-height:0;white-space:pre;color:#0b57d0;font-weight:bold;left:479.00px;">comisiones</div>
<div style="position:absolute;left:600.6px;top:1409.5px;width:0;height:0;border-left:5.0px solid transparent;border-right:5.0px solid transparent;border-top:5.0px solid #0b57d0;"></div>
<div style="position:absolute;top:1412.42px;font-family:'Liberation Sans', sans-serif;font-size:19px;line-height:0;white-space:pre;color:#444746;font-weight:normal;letter-spacing:0.6px;left:642.40px;">comisiones abril</div>
<div style="position:absolute;left:807.5px;top:1409.5px;width:0;height:0;border-left:5.0px solid transparent;border-right:5.0px solid transparent;border-top:5.0px solid #444746;"></div>
<svg style="position:absolute;left:2830.0px;top:1401.0px;" width="26" height="26" viewBox="0 0 24 24"><path fill="#444746" d="M15.41 7.41L14 6l-6 6 6 6 1.41-1.41L10.83 12z"/></svg>
<div style="position:absolute;left:0;top:1415px;width:19px;height:19px;background:radial-gradient(circle at 19px 0, transparent 19.6px, #1a1030 20.6px);"></div>
<div style="position:absolute;left:2861px;top:1415px;width:19px;height:19px;background:radial-gradient(circle at 0 0, transparent 19.6px, #1a1030 20.6px);"></div>
</body></html>
